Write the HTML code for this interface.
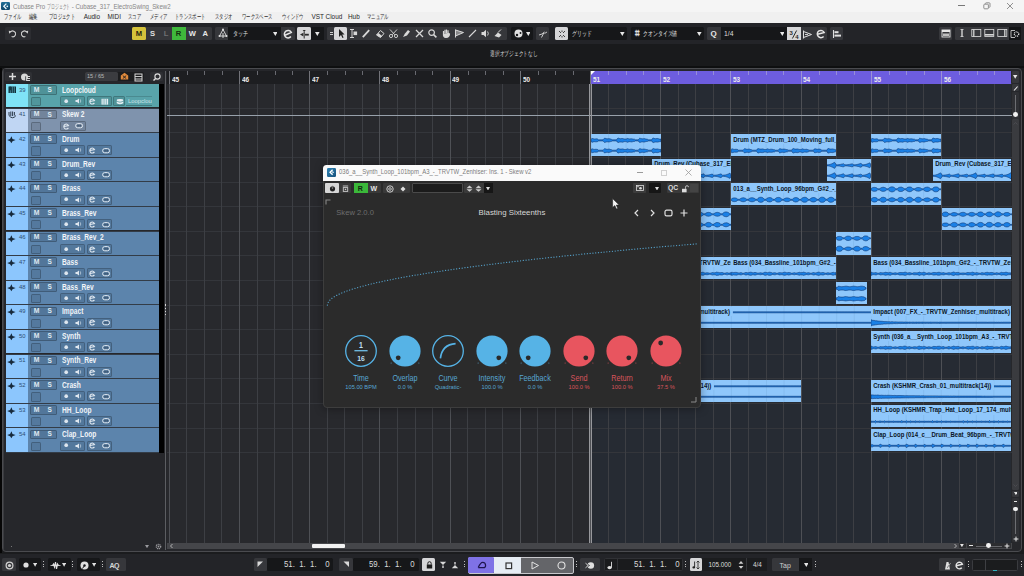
<!DOCTYPE html><html><head><meta charset="utf-8"><style>
*{margin:0;padding:0;box-sizing:border-box}
html,body{width:1024px;height:576px;overflow:hidden;background:#1b1c1e;font-family:"Liberation Sans",sans-serif}
.a{position:absolute}
.t{position:absolute;white-space:nowrap;line-height:1}
</style></head><body>
<div class="a" style="left:0;top:0;width:1024px;height:11.8px;background:#f5f5f5"></div>
<div class="a" style="left:0;top:11.8px;width:1024px;height:11px;background:#f0f0f0"></div>
<div class="a" style="left:1.2px;top:1.8px;width:8.8px;height:8.4px;background:linear-gradient(180deg,#1f6e96,#0d4669);border-radius:1.2px"></div>
<svg class="a" style="left:1.2px;top:1.8px" width="9" height="9" viewBox="0 0 9 9"><path d="M5.4 1.6 L2.8 4.3 L5.4 7" stroke="#e8f4fa" stroke-width="1.3" fill="none"/><circle cx="6.3" cy="4.3" r="0.9" fill="#e8f4fa"/></svg>
<div class="t" style="left:13.2px;top:2.6px;font-size:7px;color:#858585;transform:scaleX(0.87);transform-origin:0 0">Cubase Pro <span style="display:inline-block;transform:scaleX(0.64);transform-origin:0 0;width:28.6px">プロジェクト</span>- Cubase_317_ElectroSwing_Skew2</div>
<div class="a" style="left:958px;top:5.3px;width:7px;height:0.8px;background:#777"></div>
<svg class="a" style="left:982.5px;top:2px" width="8" height="8" viewBox="0 0 8 8"><rect x="0.8" y="2.2" width="4.6" height="4.6" rx="0.8" stroke="#777" stroke-width="0.8" fill="none"/><path d="M2.4 1.6 Q2.4 0.8 3.2 0.8 H6.2 Q7 0.8 7 1.6 V4.6 Q7 5.4 6.2 5.4" stroke="#777" stroke-width="0.8" fill="none"/></svg>
<svg class="a" style="left:1006px;top:2px" width="8" height="8" viewBox="0 0 8 8"><path d="M1 1L7 7M7 1L1 7" stroke="#777" stroke-width="0.8"/></svg>
<div class="t" style="left:3.8px;top:13.4px;font-size:7.2px;color:#1e1e1e;transform:scaleX(0.62);transform-origin:0 0">ファイル</div>
<div class="t" style="left:29px;top:13.4px;font-size:7.2px;color:#1e1e1e;transform:scaleX(0.62);transform-origin:0 0">編集</div>
<div class="t" style="left:48.7px;top:13.4px;font-size:7.2px;color:#1e1e1e;transform:scaleX(0.62);transform-origin:0 0">プロジェクト</div>
<div class="t" style="left:83.7px;top:14px;font-size:6.4px;color:#1e1e1e">Audio</div>
<div class="t" style="left:107.5px;top:14px;font-size:6.4px;color:#1e1e1e">MIDI</div>
<div class="t" style="left:128px;top:13.4px;font-size:7.2px;color:#1e1e1e;transform:scaleX(0.62);transform-origin:0 0">スコア</div>
<div class="t" style="left:149.5px;top:13.4px;font-size:7.2px;color:#1e1e1e;transform:scaleX(0.62);transform-origin:0 0">メディア</div>
<div class="t" style="left:175px;top:13.4px;font-size:7.2px;color:#1e1e1e;transform:scaleX(0.62);transform-origin:0 0">トランスポート</div>
<div class="t" style="left:215px;top:13.4px;font-size:7.2px;color:#1e1e1e;transform:scaleX(0.62);transform-origin:0 0">スタジオ</div>
<div class="t" style="left:241.5px;top:13.4px;font-size:7.2px;color:#1e1e1e;transform:scaleX(0.62);transform-origin:0 0">ワークスペース</div>
<div class="t" style="left:281.7px;top:13.4px;font-size:7.2px;color:#1e1e1e;transform:scaleX(0.62);transform-origin:0 0">ウィンドウ</div>
<div class="t" style="left:311.5px;top:14px;font-size:6.4px;color:#1e1e1e">VST Cloud</div>
<div class="t" style="left:348px;top:14px;font-size:6.4px;color:#1e1e1e">Hub</div>
<div class="t" style="left:367px;top:13.4px;font-size:7.2px;color:#1e1e1e;transform:scaleX(0.62);transform-origin:0 0">マニュアル</div>
<div class="a" style="left:0;top:22.8px;width:1024px;height:21.4px;background:#232428"></div>
<div class="a" style="left:0;top:44.2px;width:1024px;height:24px;background:#191a1c"></div>
<div class="a" style="left:0;top:66px;width:1024px;height:2px;background:#0e0f10"></div>
<div class="t" style="left:490px;top:51.3px;font-size:6.8px;color:#d8d8d8;transform:scaleX(0.68);transform-origin:0 0">選択オブジェクトなし</div>
<div class="a" style="left:5.2px;top:26.8px;width:25.80px;height:13.1px;background:#2c2d31;border-radius:1.5px;"></div>
<svg class="a" style="left:8px;top:30px;" width="8" height="8" viewBox="0 0 8 8"><path d="M2.3 2.2 A2.9 2.9 0 1 1 3.6 6.6" stroke="#d0d0d0" stroke-width="1.1" fill="none"/><path d="M0.8 0.8 L3.6 1.2 L1.2 3.8Z" fill="#d0d0d0"/></svg>
<svg class="a" style="left:21px;top:30px;" width="8" height="8" viewBox="0 0 8 8"><path d="M5.7 2.2 A2.9 2.9 0 1 0 4.4 6.6" stroke="#d0d0d0" stroke-width="1.1" fill="none"/><path d="M7.2 0.8 L4.4 1.2 L6.8 3.8Z" fill="#d0d0d0"/></svg>
<div class="a" style="left:132.3px;top:26.8px;width:79.50px;height:13.1px;background:#36373b;border-radius:1.5px;"></div>
<div class="a" style="left:132.3px;top:26.8px;width:13.70px;height:13.1px;background:#d5c33b;border-radius:1.5px;"></div>
<div class="a" style="left:172.1px;top:26.8px;width:13.70px;height:13.1px;background:#3fb83c;border-radius:0px;"></div>
<div class="t" style="left:135.8px;top:29.6px;font-size:7.6px;font-weight:bold;color:#2a2610;">M</div>
<div class="t" style="left:150px;top:29.6px;font-size:7.6px;font-weight:bold;color:#e0e0e0;">S</div>
<div class="t" style="left:163.8px;top:29.6px;font-size:7.6px;font-weight:bold;color:#707174;">L</div>
<div class="t" style="left:175.8px;top:29.6px;font-size:7.6px;font-weight:bold;color:#14300f;">R</div>
<div class="t" style="left:188.8px;top:29.6px;font-size:7.6px;font-weight:bold;color:#e8e8e8;">W</div>
<div class="t" style="left:202.6px;top:29.6px;font-size:7.6px;font-weight:bold;color:#e8e8e8;">A</div>
<div class="a" style="left:215.3px;top:26.8px;width:79.50px;height:13.1px;background:#36373b;border-radius:1.5px;"></div>
<div class="a" style="left:228px;top:26.8px;width:53.00px;height:13.1px;background:#161719;border-radius:0px;"></div>
<svg class="a" style="left:217.5px;top:28.2px;" width="10" height="11" viewBox="0 0 10 11"><path d="M5 1.5 L8.5 8 H1.5Z" stroke="#e0e0e0" stroke-width="0.9" fill="none"/><circle cx="5" cy="1.5" r="1" fill="#e0e0e0"/><circle cx="1.5" cy="8" r="1" fill="#e0e0e0"/><circle cx="8.5" cy="8" r="1" fill="#e0e0e0"/><path d="M5 5 V10" stroke="#e0e0e0" stroke-width="0.9"/></svg>
<div class="t" style="left:232.5px;top:30px;font-size:7px;color:#e2e2e2;transform:scaleX(0.72);transform-origin:0 0">タッチ</div>
<svg class="a" style="left:272.8px;top:31.5px;" width="4.6" height="4" viewBox="0 0 4.6 4"><path d="M0 0H4.6L2.3 4Z" fill="#e6e6e6"/></svg>
<svg class="a" style="left:283px;top:28.6px;" width="10" height="10" viewBox="0 0 10 10"><path d="M2 6.2 L8.3 3.4 A3.7 3.7 0 1 0 7.9 7.6" stroke="#e6e6e6" stroke-width="1.5" fill="none"/></svg>
<div class="a" style="left:297px;top:26.8px;width:26.80px;height:13.1px;background:#36373b;border-radius:1.5px;"></div>
<div class="a" style="left:297px;top:26.8px;width:13.70px;height:13.1px;background:#d6d6d8;border-radius:1.5px;"></div>
<div class="a" style="left:310.7px;top:26.8px;width:13.10px;height:13.1px;background:#161719;border-radius:0px;"></div>
<svg class="a" style="left:299px;top:28.5px;" width="11" height="10" viewBox="0 0 11 10"><path d="M5.2 2.5 V9.5" stroke="#2a2a2a" stroke-width="1"/><path d="M3.6 1 H6.8 L5.2 2.8Z" fill="#2a2a2a"/><path d="M1 5.6 L4.4 3.8 V7.4Z" fill="#2a2a2a"/><rect x="6" y="4.8" width="3.8" height="1.8" fill="#2a2a2a"/></svg>
<svg class="a" style="left:315px;top:31.5px;" width="4.6" height="4" viewBox="0 0 4.6 4"><path d="M0 0H4.6L2.3 4Z" fill="#e6e6e6"/></svg>
<div class="a" style="left:327px;top:26.8px;width:180.30px;height:13.1px;background:#36373b;border-radius:1.5px;"></div>
<div class="a" style="left:329.6px;top:31.6px;width:3.00px;height:1px;background:#cfcfcf;border-radius:0px;"></div>
<div class="a" style="left:329.6px;top:34.4px;width:3.00px;height:1px;background:#cfcfcf;border-radius:0px;"></div>
<div class="a" style="left:334.2px;top:26.8px;width:12.80px;height:13.1px;background:#d6d6d8;border-radius:1.5px;"></div>
<svg class="a" style="left:337px;top:28.4px;" width="8" height="11" viewBox="0 0 8 11"><path d="M2 1 L2 9 L4 7 L5.5 10 L6.6 9.4 L5.2 6.6 L7.6 6.4Z" fill="#1f1f1f"/></svg>
<svg class="a" style="left:348.2px;top:28.4px;" width="11" height="11" viewBox="0 0 11 11"><path d="M2 1.5H6 M4 1.5V9.5 M2 9.5H6" stroke="#d8d8d8" stroke-width="1"/><rect x="5.5" y="3.5" width="3.6" height="3.6" fill="#d8d8d8"/></svg>
<svg class="a" style="left:361.4px;top:28.4px;" width="11" height="11" viewBox="0 0 11 11"><path d="M1.8 9.2 L8.2 2.2" stroke="#d8d8d8" stroke-width="1.8"/></svg>
<svg class="a" style="left:374.59999999999997px;top:28.4px;" width="11" height="11" viewBox="0 0 11 11"><path d="M1.5 7 L5.5 2.5 L9 5.5 L5.5 9.5Z" stroke="#d8d8d8" stroke-width="1" fill="none"/><path d="M1.5 7 L3.5 5 L7 8 L5.5 9.5Z" fill="#d8d8d8"/></svg>
<svg class="a" style="left:387.8px;top:28.4px;" width="11" height="11" viewBox="0 0 11 11"><circle cx="3" cy="8" r="1.6" stroke="#d8d8d8" stroke-width="0.9" fill="none"/><circle cx="8" cy="8" r="1.6" stroke="#d8d8d8" stroke-width="0.9" fill="none"/><path d="M2 1.5 L6.8 6.8 M9 1.5 L4.2 6.8" stroke="#d8d8d8" stroke-width="0.9"/></svg>
<svg class="a" style="left:401.0px;top:28.4px;" width="11" height="11" viewBox="0 0 11 11"><path d="M2 9 L4 5.5 L7 2 L9 3.5 L6 7.5Z" fill="#d8d8d8"/></svg>
<svg class="a" style="left:414.2px;top:28.4px;" width="11" height="11" viewBox="0 0 11 11"><path d="M2 2 L9 9 M9 2 L2 9" stroke="#d8d8d8" stroke-width="1.3"/></svg>
<svg class="a" style="left:427.4px;top:28.4px;" width="11" height="11" viewBox="0 0 11 11"><circle cx="4.6" cy="4.6" r="2.8" stroke="#d8d8d8" stroke-width="1.2" fill="none"/><path d="M6.6 6.6 L9.4 9.4" stroke="#d8d8d8" stroke-width="1.5"/></svg>
<svg class="a" style="left:440.59999999999997px;top:28.4px;" width="11" height="11" viewBox="0 0 11 11"><path d="M2.5 5.5 V3 M4 5 V1.8 M5.5 5 V1.6 M7 5 V2.2 M2.5 5.5 Q2 9 5 9.5 Q8.2 9.5 8.5 6 L7 5" stroke="#d8d8d8" stroke-width="1.2" fill="#d8d8d8"/></svg>
<svg class="a" style="left:453.8px;top:28.4px;" width="11" height="11" viewBox="0 0 11 11"><path d="M1.5 1.5 V9.5 M1.5 2 L9.5 4.5 L1.5 8" stroke="#d8d8d8" stroke-width="1" fill="#d8d8d8" fill-opacity="0.5"/></svg>
<svg class="a" style="left:467.0px;top:28.4px;" width="11" height="11" viewBox="0 0 11 11"><path d="M2 9 L9 2" stroke="#d8d8d8" stroke-width="1.1"/></svg>
<svg class="a" style="left:480.2px;top:28.4px;" width="11" height="11" viewBox="0 0 11 11"><path d="M1.5 4 H3.5 L6 1.8 V9.2 L3.5 7 H1.5Z" fill="#d8d8d8"/><path d="M7.6 3.5 Q9 5.5 7.6 7.5" stroke="#d8d8d8" stroke-width="0.9" fill="none"/></svg>
<svg class="a" style="left:493.4px;top:28.4px;" width="11" height="11" viewBox="0 0 11 11"><path d="M1.5 8 L5 4.5 L8.5 7 L6 9.5Z" fill="#d8d8d8"/><path d="M5 4.5 L8 1.5" stroke="#d8d8d8" stroke-width="1"/></svg>
<div class="a" style="left:510.7px;top:26.8px;width:22.00px;height:13.1px;background:#161719;border-radius:1.5px;"></div>
<svg class="a" style="left:512.5px;top:28.3px;" width="11" height="11" viewBox="0 0 11 11"><circle cx="5.5" cy="5.5" r="4" fill="#e0e0e0"/><circle cx="4" cy="7" r="1.2" fill="#161719"/><circle cx="7.5" cy="5" r="0.9" fill="#161719"/></svg>
<svg class="a" style="left:525.5px;top:31.5px;" width="4.6" height="4" viewBox="0 0 4.6 4"><path d="M0 0H4.6L2.3 4Z" fill="#e6e6e6"/></svg>
<div class="a" style="left:536.2px;top:26.8px;width:12.60px;height:13.1px;background:#36373b;border-radius:1.5px;"></div>
<svg class="a" style="left:537.5px;top:28.5px;" width="10" height="10" viewBox="0 0 10 10"><path d="M1 6 L4 5 L6.5 3 M3.5 8.5 L6 3.5 M6.5 4.5 L9 3" stroke="#d8d8d8" stroke-width="0.9" fill="none"/></svg>
<div class="a" style="left:554.8px;top:26.8px;width:72.70px;height:13.1px;background:#161719;border-radius:1.5px;"></div>
<div class="a" style="left:554.8px;top:26.8px;width:13.20px;height:13.1px;background:#d6d6d8;border-radius:1.5px;"></div>
<svg class="a" style="left:556.5px;top:28.5px;" width="10" height="10" viewBox="0 0 10 10"><path d="M2 2 L4 4 M8 2 L6 4 M2 8 L4 6 M8 8 L6 6 M5 1.5 V3 M5 7 V8.5" stroke="#333" stroke-width="0.9"/></svg>
<div class="t" style="left:571.5px;top:30px;font-size:7px;color:#e2e2e2;transform:scaleX(0.7);transform-origin:0 0">グリッド</div>
<svg class="a" style="left:620px;top:31.5px;" width="4.6" height="4" viewBox="0 0 4.6 4"><path d="M0 0H4.6L2.3 4Z" fill="#e6e6e6"/></svg>
<div class="a" style="left:631.4px;top:26.8px;width:73.10px;height:13.1px;background:#161719;border-radius:1.5px;"></div>
<div class="t" style="left:634.5px;top:29.8px;font-size:7.5px;font-weight:bold;color:#e0e0e0;">⌗</div>
<div class="t" style="left:642.5px;top:30px;font-size:7px;color:#e2e2e2;transform:scaleX(0.7);transform-origin:0 0">クオンタイズ値</div>
<svg class="a" style="left:697px;top:31.5px;" width="4.6" height="4" viewBox="0 0 4.6 4"><path d="M0 0H4.6L2.3 4Z" fill="#e6e6e6"/></svg>
<div class="a" style="left:707.3px;top:26.8px;width:119.70px;height:13.1px;background:#36373b;border-radius:1.5px;"></div>
<div class="a" style="left:720.5px;top:26.8px;width:66.50px;height:13.1px;background:#161719;border-radius:0px;"></div>
<div class="t" style="left:710.5px;top:29.5px;font-size:8px;font-weight:bold;color:#e8e8e8;">Q</div>
<div class="t" style="left:724px;top:30.6px;font-size:6.8px;font-weight:normal;color:#dcdcdc;">1/4</div>
<svg class="a" style="left:779.5px;top:31.5px;" width="4.6" height="4" viewBox="0 0 4.6 4"><path d="M0 0H4.6L2.3 4Z" fill="#e6e6e6"/></svg>
<div class="a" style="left:787px;top:26.8px;width:13.60px;height:13.1px;background:#d6d6d8;border-radius:0px;"></div>
<svg class="a" style="left:787.5px;top:27.5px" width="13" height="13" viewBox="0 0 13 13"><text x="1.6" y="6.6" font-family="Liberation Sans" font-size="6" font-weight="bold" fill="#2a2a2a">3</text><path d="M4.4 10.5 L8.6 2.5" stroke="#2a2a2a" stroke-width="1"/><text x="7.2" y="11.2" font-family="Liberation Sans" font-size="6" font-weight="bold" fill="#2a2a2a">4</text></svg>
<svg class="a" style="left:802px;top:28.5px;" width="11" height="11" viewBox="0 0 11 11"><path d="M1.5 1.5 V9.5 M1.5 2.5 L9.5 5.5 L1.5 8.5" stroke="#e0e0e0" stroke-width="1" fill="none"/><path d="M3 5.5 L6 5.5" stroke="#e0e0e0" stroke-width="0.9"/></svg>
<svg class="a" style="left:815.5px;top:28.6px;" width="10" height="10" viewBox="0 0 10 10"><path d="M1.6 5.3 L8.2 3.6 A3.6 3.6 0 1 0 7.6 7.4" stroke="#e6e6e6" stroke-width="1.5" fill="none"/></svg>
<div class="a" style="left:830px;top:26.8px;width:12.60px;height:13.1px;background:#36373b;border-radius:1.5px;"></div>
<svg class="a" style="left:831.5px;top:28.5px;" width="10" height="10" viewBox="0 0 10 10"><path d="M1.5 1 V9" stroke="#e0e0e0" stroke-width="1.1"/><rect x="2.5" y="2.2" width="4" height="2" fill="#e0e0e0"/><rect x="2.5" y="5.6" width="6.5" height="2" fill="#e0e0e0"/></svg>
<div class="a" style="left:939.2px;top:26.8px;width:13.10px;height:13.1px;background:#36373b;border-radius:1.5px;"></div>
<svg class="a" style="left:941px;top:29px;" width="10" height="9" viewBox="0 0 10 9"><rect x="1" y="1" width="8" height="7" stroke="#e6e6e6" stroke-width="0.9" fill="none"/><rect x="1" y="1" width="8" height="2" fill="#e6e6e6"/><rect x="2" y="4.5" width="6" height="2.5" fill="#bfbfbf"/></svg>
<div class="a" style="left:955px;top:26.8px;width:65.60px;height:13.1px;background:#36373b;border-radius:1.5px;"></div>
<div class="a" style="left:1008.5px;top:26.8px;width:12.10px;height:13.1px;background:#141517;border-radius:0px;"></div>
<svg class="a" style="left:957.8px;top:28.4px;" width="11" height="10" viewBox="0 0 11 10"><path d="M4 1.5 V8.5" stroke="#e0e0e0" stroke-width="1.3"/><path d="M2.5 1.5H5.5 M2.5 8.5H5.5" stroke="#e0e0e0" stroke-width="0.8"/></svg>
<svg class="a" style="left:970.9px;top:28.4px;" width="11" height="10" viewBox="0 0 11 10"><rect x="0.8" y="1.5" width="9" height="7" stroke="#e0e0e0" stroke-width="0.8" fill="none"/><path d="M2.8 1.5 V8.5" stroke="#e0e0e0" stroke-width="1.2"/></svg>
<svg class="a" style="left:984.0px;top:28.4px;" width="11" height="10" viewBox="0 0 11 10"><rect x="0.8" y="1.5" width="9" height="7" stroke="#e0e0e0" stroke-width="0.8" fill="none"/><path d="M1 6.8 H9.8" stroke="#e0e0e0" stroke-width="1.5"/></svg>
<svg class="a" style="left:997.0999999999999px;top:28.4px;" width="11" height="10" viewBox="0 0 11 10"><rect x="0.8" y="1.5" width="9" height="7" stroke="#e0e0e0" stroke-width="0.8" fill="none"/><path d="M7.8 1.5 V8.5" stroke="#e0e0e0" stroke-width="1.2"/></svg>
<svg class="a" style="left:1009.5px;top:28.5px;" width="11" height="10" viewBox="0 0 11 10"><path d="M1 1.5 H5 M1 1.5 V8.5 H5" stroke="#e0e0e0" stroke-width="0.8" fill="none"/><circle cx="6.5" cy="5" r="2.2" stroke="#e0e0e0" stroke-width="1.3" fill="none" stroke-dasharray="1 0.7"/></svg>
<div class="a" style="left:2px;top:67.8px;width:1019.5px;height:484.7px;background:#26272b;border:1px solid #4a4b4f;border-radius:4px"></div>
<div class="a" style="left:166.5px;top:83.7px;width:424.29999999999995px;height:459.3px;background:#28292d"></div>
<div class="a" style="left:590.8px;top:83.7px;width:420.70000000000005px;height:459.3px;background:#262b33"></div>
<div class="a" style="left:166.5px;top:83.10px;width:845.0px;height:1px;background:#34363b"></div>
<div class="a" style="left:166.5px;top:107.70px;width:845.0px;height:1px;background:#34363b"></div>
<div class="a" style="left:166.5px;top:132.30px;width:845.0px;height:1px;background:#34363b"></div>
<div class="a" style="left:166.5px;top:156.90px;width:845.0px;height:1px;background:#34363b"></div>
<div class="a" style="left:166.5px;top:181.50px;width:845.0px;height:1px;background:#34363b"></div>
<div class="a" style="left:166.5px;top:206.10px;width:845.0px;height:1px;background:#34363b"></div>
<div class="a" style="left:166.5px;top:230.70px;width:845.0px;height:1px;background:#34363b"></div>
<div class="a" style="left:166.5px;top:255.30px;width:845.0px;height:1px;background:#34363b"></div>
<div class="a" style="left:166.5px;top:279.90px;width:845.0px;height:1px;background:#34363b"></div>
<div class="a" style="left:166.5px;top:304.50px;width:845.0px;height:1px;background:#34363b"></div>
<div class="a" style="left:166.5px;top:329.10px;width:845.0px;height:1px;background:#34363b"></div>
<div class="a" style="left:166.5px;top:353.70px;width:845.0px;height:1px;background:#34363b"></div>
<div class="a" style="left:166.5px;top:378.30px;width:845.0px;height:1px;background:#34363b"></div>
<div class="a" style="left:166.5px;top:402.90px;width:845.0px;height:1px;background:#34363b"></div>
<div class="a" style="left:166.5px;top:427.50px;width:845.0px;height:1px;background:#34363b"></div>
<div class="a" style="left:166.5px;top:452.10px;width:845.0px;height:1px;background:#34363b"></div>
<div class="a" style="left:168.80px;top:83.7px;width:1px;height:459.3px;background:#4e5055"></div>
<div class="a" style="left:186.35px;top:83.7px;width:1px;height:459.3px;background:#3d3f44"></div>
<div class="a" style="left:203.90px;top:83.7px;width:1px;height:459.3px;background:#3d3f44"></div>
<div class="a" style="left:221.45px;top:83.7px;width:1px;height:459.3px;background:#3d3f44"></div>
<div class="a" style="left:239.00px;top:83.7px;width:1px;height:459.3px;background:#4e5055"></div>
<div class="a" style="left:256.55px;top:83.7px;width:1px;height:459.3px;background:#3d3f44"></div>
<div class="a" style="left:274.10px;top:83.7px;width:1px;height:459.3px;background:#3d3f44"></div>
<div class="a" style="left:291.65px;top:83.7px;width:1px;height:459.3px;background:#3d3f44"></div>
<div class="a" style="left:309.20px;top:83.7px;width:1px;height:459.3px;background:#4e5055"></div>
<div class="a" style="left:326.75px;top:83.7px;width:1px;height:459.3px;background:#3d3f44"></div>
<div class="a" style="left:344.30px;top:83.7px;width:1px;height:459.3px;background:#3d3f44"></div>
<div class="a" style="left:361.85px;top:83.7px;width:1px;height:459.3px;background:#3d3f44"></div>
<div class="a" style="left:379.40px;top:83.7px;width:1px;height:459.3px;background:#4e5055"></div>
<div class="a" style="left:396.95px;top:83.7px;width:1px;height:459.3px;background:#3d3f44"></div>
<div class="a" style="left:414.50px;top:83.7px;width:1px;height:459.3px;background:#3d3f44"></div>
<div class="a" style="left:432.05px;top:83.7px;width:1px;height:459.3px;background:#3d3f44"></div>
<div class="a" style="left:449.60px;top:83.7px;width:1px;height:459.3px;background:#4e5055"></div>
<div class="a" style="left:467.15px;top:83.7px;width:1px;height:459.3px;background:#3d3f44"></div>
<div class="a" style="left:484.70px;top:83.7px;width:1px;height:459.3px;background:#3d3f44"></div>
<div class="a" style="left:502.25px;top:83.7px;width:1px;height:459.3px;background:#3d3f44"></div>
<div class="a" style="left:519.80px;top:83.7px;width:1px;height:459.3px;background:#4e5055"></div>
<div class="a" style="left:537.35px;top:83.7px;width:1px;height:459.3px;background:#3d3f44"></div>
<div class="a" style="left:554.90px;top:83.7px;width:1px;height:459.3px;background:#3d3f44"></div>
<div class="a" style="left:572.45px;top:83.7px;width:1px;height:459.3px;background:#3d3f44"></div>
<div class="a" style="left:590.00px;top:83.7px;width:1px;height:459.3px;background:#4e5055"></div>
<div class="a" style="left:607.55px;top:83.7px;width:1px;height:459.3px;background:#3d3f44"></div>
<div class="a" style="left:625.10px;top:83.7px;width:1px;height:459.3px;background:#3d3f44"></div>
<div class="a" style="left:642.65px;top:83.7px;width:1px;height:459.3px;background:#3d3f44"></div>
<div class="a" style="left:660.20px;top:83.7px;width:1px;height:459.3px;background:#4e5055"></div>
<div class="a" style="left:677.75px;top:83.7px;width:1px;height:459.3px;background:#3d3f44"></div>
<div class="a" style="left:695.30px;top:83.7px;width:1px;height:459.3px;background:#3d3f44"></div>
<div class="a" style="left:712.85px;top:83.7px;width:1px;height:459.3px;background:#3d3f44"></div>
<div class="a" style="left:730.40px;top:83.7px;width:1px;height:459.3px;background:#4e5055"></div>
<div class="a" style="left:747.95px;top:83.7px;width:1px;height:459.3px;background:#3d3f44"></div>
<div class="a" style="left:765.50px;top:83.7px;width:1px;height:459.3px;background:#3d3f44"></div>
<div class="a" style="left:783.05px;top:83.7px;width:1px;height:459.3px;background:#3d3f44"></div>
<div class="a" style="left:800.60px;top:83.7px;width:1px;height:459.3px;background:#4e5055"></div>
<div class="a" style="left:818.15px;top:83.7px;width:1px;height:459.3px;background:#3d3f44"></div>
<div class="a" style="left:835.70px;top:83.7px;width:1px;height:459.3px;background:#3d3f44"></div>
<div class="a" style="left:853.25px;top:83.7px;width:1px;height:459.3px;background:#3d3f44"></div>
<div class="a" style="left:870.80px;top:83.7px;width:1px;height:459.3px;background:#4e5055"></div>
<div class="a" style="left:888.35px;top:83.7px;width:1px;height:459.3px;background:#3d3f44"></div>
<div class="a" style="left:905.90px;top:83.7px;width:1px;height:459.3px;background:#3d3f44"></div>
<div class="a" style="left:923.45px;top:83.7px;width:1px;height:459.3px;background:#3d3f44"></div>
<div class="a" style="left:941.00px;top:83.7px;width:1px;height:459.3px;background:#4e5055"></div>
<div class="a" style="left:958.55px;top:83.7px;width:1px;height:459.3px;background:#3d3f44"></div>
<div class="a" style="left:976.10px;top:83.7px;width:1px;height:459.3px;background:#3d3f44"></div>
<div class="a" style="left:993.65px;top:83.7px;width:1px;height:459.3px;background:#3d3f44"></div>
<div class="a" style="left:166.5px;top:115px;width:845.0px;height:1px;background:#98a1ab"></div>
<div class="a" style="left:589.2px;top:83.7px;width:0.9px;height:459.3px;background:#97989c"></div>
<div class="a" style="left:590.9px;top:83.7px;width:0.9px;height:459.3px;background:#97989c"></div>
<div class="a" style="left:590.50px;top:134.00px;width:70.20px;height:22.20px;background:#8fc7fb;overflow:hidden">
<svg class="a" style="left:0;top:0" width="70.20" height="22.20"><rect x="-0.50" y="0" width="1" height="22.20" fill="#86bdf0"/><rect x="17.05" y="0" width="1" height="22.20" fill="#86bdf0"/><rect x="34.60" y="0" width="1" height="22.20" fill="#86bdf0"/><rect x="52.15" y="0" width="1" height="22.20" fill="#86bdf0"/><path d="M0.00 5.8 L0.75 4.4 L1.50 4.5 L2.25 4.7 L3.00 4.9 L3.75 5.0 L4.50 4.9 L5.25 4.8 L6.00 4.9 L6.75 5.1 L7.50 5.8 L8.25 5.8 L9.00 5.8 L9.75 5.8 L10.50 5.8 L11.25 5.8 L12.00 5.8 L12.75 5.0 L13.50 4.2 L14.25 4.3 L15.00 4.6 L15.75 4.8 L16.50 4.8 L17.25 4.7 L18.00 4.7 L18.75 4.8 L19.50 5.0 L20.25 5.2 L21.00 5.8 L21.75 5.8 L22.50 5.8 L23.25 5.8 L24.00 5.8 L24.75 5.8 L25.50 5.8 L26.25 4.7 L27.00 4.1 L27.75 4.2 L28.50 4.5 L29.25 4.7 L30.00 4.7 L30.75 4.5 L31.50 4.5 L32.25 4.7 L33.00 4.9 L33.75 5.0 L34.50 5.0 L35.25 5.1 L36.00 4.4 L36.75 4.5 L37.50 4.7 L38.25 4.9 L39.00 4.9 L39.75 4.8 L40.50 4.8 L41.25 4.9 L42.00 5.1 L42.75 5.2 L43.50 5.2 L44.25 5.8 L45.00 5.8 L45.75 5.8 L46.50 5.8 L47.25 5.8 L48.00 4.8 L48.75 4.2 L49.50 4.4 L50.25 4.6 L51.00 4.8 L51.75 4.8 L52.50 4.7 L53.25 4.6 L54.00 4.8 L54.75 5.0 L55.50 5.1 L56.25 5.1 L57.00 5.8 L57.75 5.8 L58.50 5.8 L59.25 5.8 L60.00 5.8 L60.75 5.8 L61.50 4.4 L62.25 4.1 L63.00 4.3 L63.75 4.6 L64.50 4.7 L65.25 4.6 L66.00 4.5 L66.75 4.5 L67.50 4.7 L68.25 5.0 L69.00 5.1 L69.75 5.0 L69.75 7.7 L69.00 7.6 L68.25 7.7 L67.50 7.9 L66.75 8.1 L66.00 8.1 L65.25 8.0 L64.50 8.0 L63.75 8.1 L63.00 8.4 L62.25 8.6 L61.50 8.2 L60.75 6.9 L60.00 6.9 L59.25 6.9 L58.50 6.9 L57.75 6.9 L57.00 6.9 L56.25 7.5 L55.50 7.5 L54.75 7.6 L54.00 7.9 L53.25 8.0 L52.50 8.0 L51.75 7.9 L51.00 7.8 L50.25 8.0 L49.50 8.3 L48.75 8.4 L48.00 7.9 L47.25 6.9 L46.50 6.9 L45.75 6.9 L45.00 6.9 L44.25 6.9 L43.50 7.4 L42.75 7.4 L42.00 7.6 L41.25 7.8 L40.50 7.9 L39.75 7.8 L39.00 7.7 L38.25 7.7 L37.50 7.9 L36.75 8.2 L36.00 8.3 L35.25 7.6 L34.50 7.6 L33.75 7.6 L33.00 7.7 L32.25 8.0 L31.50 8.2 L30.75 8.1 L30.00 8.0 L29.25 8.0 L28.50 8.1 L27.75 8.4 L27.00 8.6 L26.25 8.0 L25.50 6.9 L24.75 6.9 L24.00 6.9 L23.25 6.9 L22.50 6.9 L21.75 6.9 L21.00 6.9 L20.25 7.5 L19.50 7.6 L18.75 7.8 L18.00 8.0 L17.25 7.9 L16.50 7.8 L15.75 7.8 L15.00 8.0 L14.25 8.3 L13.50 8.4 L12.75 7.7 L12.00 6.9 L11.25 6.9 L10.50 6.9 L9.75 6.9 L9.00 6.9 L8.25 6.9 L7.50 6.9 L6.75 7.5 L6.00 7.7 L5.25 7.8 L4.50 7.8 L3.75 7.7 L3.00 7.7 L2.25 7.9 L1.50 8.2 L0.75 8.2 L0.00 6.9Z" fill="#1a80e6" stroke="#0b3470" stroke-width="0.6"/><path d="M0.00 16.2 L0.75 14.8 L1.50 14.9 L2.25 15.2 L3.00 15.4 L3.75 15.4 L4.50 15.3 L5.25 15.3 L6.00 15.4 L6.75 15.6 L7.50 16.2 L8.25 16.2 L9.00 16.2 L9.75 16.2 L10.50 16.2 L11.25 16.2 L12.00 16.2 L12.75 15.4 L13.50 14.7 L14.25 14.8 L15.00 15.0 L15.75 15.3 L16.50 15.3 L17.25 15.2 L18.00 15.1 L18.75 15.2 L19.50 15.5 L20.25 15.6 L21.00 16.2 L21.75 16.2 L22.50 16.2 L23.25 16.2 L24.00 16.2 L24.75 16.2 L25.50 16.2 L26.25 15.1 L27.00 14.5 L27.75 14.7 L28.50 14.9 L29.25 15.1 L30.00 15.1 L30.75 15.0 L31.50 14.9 L32.25 15.1 L33.00 15.3 L33.75 15.5 L34.50 15.5 L35.25 15.5 L36.00 14.8 L36.75 14.9 L37.50 15.2 L38.25 15.4 L39.00 15.4 L39.75 15.2 L40.50 15.2 L41.25 15.3 L42.00 15.5 L42.75 15.7 L43.50 15.7 L44.25 16.2 L45.00 16.2 L45.75 16.2 L46.50 16.2 L47.25 16.2 L48.00 15.2 L48.75 14.7 L49.50 14.8 L50.25 15.1 L51.00 15.2 L51.75 15.2 L52.50 15.1 L53.25 15.1 L54.00 15.2 L54.75 15.4 L55.50 15.6 L56.25 15.6 L57.00 16.2 L57.75 16.2 L58.50 16.2 L59.25 16.2 L60.00 16.2 L60.75 16.2 L61.50 14.9 L62.25 14.5 L63.00 14.7 L63.75 15.0 L64.50 15.1 L65.25 15.1 L66.00 14.9 L66.75 15.0 L67.50 15.2 L68.25 15.4 L69.00 15.5 L69.75 15.4 L69.75 18.1 L69.00 18.0 L68.25 18.1 L67.50 18.4 L66.75 18.6 L66.00 18.6 L65.25 18.5 L64.50 18.4 L63.75 18.5 L63.00 18.8 L62.25 19.0 L61.50 18.6 L60.75 17.3 L60.00 17.3 L59.25 17.3 L58.50 17.3 L57.75 17.3 L57.00 17.3 L56.25 18.0 L55.50 17.9 L54.75 18.1 L54.00 18.3 L53.25 18.4 L52.50 18.4 L51.75 18.3 L51.00 18.3 L50.25 18.4 L49.50 18.7 L48.75 18.9 L48.00 18.3 L47.25 17.3 L46.50 17.3 L45.75 17.3 L45.00 17.3 L44.25 17.3 L43.50 17.9 L42.75 17.9 L42.00 18.0 L41.25 18.2 L40.50 18.3 L39.75 18.3 L39.00 18.2 L38.25 18.2 L37.50 18.3 L36.75 18.6 L36.00 18.7 L35.25 18.0 L34.50 18.1 L33.75 18.0 L33.00 18.2 L32.25 18.4 L31.50 18.6 L30.75 18.6 L30.00 18.4 L29.25 18.4 L28.50 18.6 L27.75 18.9 L27.00 19.0 L26.25 18.4 L25.50 17.3 L24.75 17.3 L24.00 17.3 L23.25 17.3 L22.50 17.3 L21.75 17.3 L21.00 17.3 L20.25 17.9 L19.50 18.1 L18.75 18.3 L18.00 18.4 L17.25 18.4 L16.50 18.3 L15.75 18.3 L15.00 18.5 L14.25 18.7 L13.50 18.9 L12.75 18.1 L12.00 17.3 L11.25 17.3 L10.50 17.3 L9.75 17.3 L9.00 17.3 L8.25 17.3 L7.50 17.3 L6.75 17.9 L6.00 18.1 L5.25 18.2 L4.50 18.2 L3.75 18.1 L3.00 18.2 L2.25 18.4 L1.50 18.6 L0.75 18.7 L0.00 17.3Z" fill="#1a80e6" stroke="#0b3470" stroke-width="0.6"/></svg>
</div>
<div class="a" style="left:730.90px;top:134.00px;width:105.30px;height:22.20px;background:#8fc7fb;overflow:hidden">
<svg class="a" style="left:0;top:0" width="105.30" height="22.20"><rect x="17.05" y="0" width="1" height="22.20" fill="#86bdf0"/><rect x="34.60" y="0" width="1" height="22.20" fill="#86bdf0"/><rect x="52.15" y="0" width="1" height="22.20" fill="#86bdf0"/><rect x="69.70" y="0" width="1" height="22.20" fill="#86bdf0"/><rect x="87.25" y="0" width="1" height="22.20" fill="#86bdf0"/><rect x="104.80" y="0" width="1" height="22.20" fill="#86bdf0"/><path d="M0.00 5.2 L0.75 4.4 L1.50 4.5 L2.25 4.7 L3.00 4.9 L3.75 5.0 L4.50 4.9 L5.25 4.8 L6.00 4.9 L6.75 5.1 L7.50 5.8 L8.25 5.8 L9.00 5.8 L9.75 5.8 L10.50 5.8 L11.25 5.8 L12.00 5.8 L12.75 5.0 L13.50 4.2 L14.25 4.3 L15.00 4.6 L15.75 4.8 L16.50 4.8 L17.25 4.7 L18.00 4.7 L18.75 4.8 L19.50 5.0 L20.25 5.2 L21.00 5.8 L21.75 5.8 L22.50 5.8 L23.25 5.8 L24.00 5.8 L24.75 5.8 L25.50 5.8 L26.25 4.7 L27.00 4.1 L27.75 4.2 L28.50 4.5 L29.25 4.7 L30.00 4.7 L30.75 4.5 L31.50 4.5 L32.25 4.7 L33.00 4.9 L33.75 5.0 L34.50 5.0 L35.25 5.1 L36.00 4.4 L36.75 4.5 L37.50 4.7 L38.25 4.9 L39.00 4.9 L39.75 4.8 L40.50 4.8 L41.25 4.9 L42.00 5.1 L42.75 5.2 L43.50 5.2 L44.25 5.8 L45.00 5.8 L45.75 5.8 L46.50 5.8 L47.25 5.8 L48.00 4.8 L48.75 4.2 L49.50 4.4 L50.25 4.6 L51.00 4.8 L51.75 4.8 L52.50 4.7 L53.25 4.6 L54.00 4.8 L54.75 5.0 L55.50 5.1 L56.25 5.1 L57.00 5.8 L57.75 5.8 L58.50 5.8 L59.25 5.8 L60.00 5.8 L60.75 5.8 L61.50 4.4 L62.25 4.1 L63.00 4.3 L63.75 4.6 L64.50 4.7 L65.25 4.6 L66.00 4.5 L66.75 4.5 L67.50 4.7 L68.25 5.0 L69.00 5.1 L69.75 5.0 L70.50 4.8 L71.25 4.4 L72.00 4.6 L72.75 4.8 L73.50 5.0 L74.25 5.0 L75.00 4.9 L75.75 4.9 L76.50 5.0 L77.25 5.2 L78.00 5.8 L78.75 5.8 L79.50 5.8 L80.25 5.8 L81.00 5.8 L81.75 5.8 L82.50 5.8 L83.25 4.6 L84.00 4.3 L84.75 4.4 L85.50 4.7 L86.25 4.8 L87.00 4.8 L87.75 4.7 L88.50 4.7 L89.25 4.9 L90.00 5.1 L90.75 5.8 L91.50 5.8 L92.25 5.8 L93.00 5.8 L93.75 5.8 L94.50 5.8 L95.25 5.8 L96.00 5.8 L96.75 4.2 L97.50 4.1 L98.25 4.3 L99.00 4.6 L99.75 4.7 L100.50 4.6 L101.25 4.5 L102.00 4.6 L102.75 4.8 L103.50 5.0 L104.25 5.1 L105.00 5.8 L105.00 6.9 L104.25 7.6 L103.50 7.7 L102.75 7.9 L102.00 8.1 L101.25 8.2 L100.50 8.1 L99.75 8.0 L99.00 8.0 L98.25 8.3 L97.50 8.6 L96.75 8.4 L96.00 6.9 L95.25 6.9 L94.50 6.9 L93.75 6.9 L93.00 6.9 L92.25 6.9 L91.50 6.9 L90.75 6.9 L90.00 7.5 L89.25 7.8 L88.50 7.9 L87.75 8.0 L87.00 7.9 L86.25 7.8 L85.50 7.9 L84.75 8.2 L84.00 8.4 L83.25 8.1 L82.50 6.9 L81.75 6.9 L81.00 6.9 L80.25 6.9 L79.50 6.9 L78.75 6.9 L78.00 6.9 L77.25 7.4 L76.50 7.6 L75.75 7.8 L75.00 7.8 L74.25 7.7 L73.50 7.7 L72.75 7.8 L72.00 8.1 L71.25 8.2 L70.50 7.8 L69.75 7.7 L69.00 7.6 L68.25 7.7 L67.50 7.9 L66.75 8.1 L66.00 8.1 L65.25 8.0 L64.50 8.0 L63.75 8.1 L63.00 8.4 L62.25 8.6 L61.50 8.2 L60.75 6.9 L60.00 6.9 L59.25 6.9 L58.50 6.9 L57.75 6.9 L57.00 6.9 L56.25 7.5 L55.50 7.5 L54.75 7.6 L54.00 7.9 L53.25 8.0 L52.50 8.0 L51.75 7.9 L51.00 7.8 L50.25 8.0 L49.50 8.3 L48.75 8.4 L48.00 7.9 L47.25 6.9 L46.50 6.9 L45.75 6.9 L45.00 6.9 L44.25 6.9 L43.50 7.4 L42.75 7.4 L42.00 7.6 L41.25 7.8 L40.50 7.9 L39.75 7.8 L39.00 7.7 L38.25 7.7 L37.50 7.9 L36.75 8.2 L36.00 8.3 L35.25 7.6 L34.50 7.6 L33.75 7.6 L33.00 7.7 L32.25 8.0 L31.50 8.2 L30.75 8.1 L30.00 8.0 L29.25 8.0 L28.50 8.1 L27.75 8.4 L27.00 8.6 L26.25 8.0 L25.50 6.9 L24.75 6.9 L24.00 6.9 L23.25 6.9 L22.50 6.9 L21.75 6.9 L21.00 6.9 L20.25 7.5 L19.50 7.6 L18.75 7.8 L18.00 8.0 L17.25 7.9 L16.50 7.8 L15.75 7.8 L15.00 8.0 L14.25 8.3 L13.50 8.4 L12.75 7.7 L12.00 6.9 L11.25 6.9 L10.50 6.9 L9.75 6.9 L9.00 6.9 L8.25 6.9 L7.50 6.9 L6.75 7.5 L6.00 7.7 L5.25 7.8 L4.50 7.8 L3.75 7.7 L3.00 7.7 L2.25 7.9 L1.50 8.2 L0.75 8.2 L0.00 7.4Z" fill="#1a80e6" stroke="#0b3470" stroke-width="0.6"/><path d="M0.00 15.7 L0.75 14.8 L1.50 14.9 L2.25 15.2 L3.00 15.4 L3.75 15.4 L4.50 15.3 L5.25 15.3 L6.00 15.4 L6.75 15.6 L7.50 16.2 L8.25 16.2 L9.00 16.2 L9.75 16.2 L10.50 16.2 L11.25 16.2 L12.00 16.2 L12.75 15.4 L13.50 14.7 L14.25 14.8 L15.00 15.0 L15.75 15.3 L16.50 15.3 L17.25 15.2 L18.00 15.1 L18.75 15.2 L19.50 15.5 L20.25 15.6 L21.00 16.2 L21.75 16.2 L22.50 16.2 L23.25 16.2 L24.00 16.2 L24.75 16.2 L25.50 16.2 L26.25 15.1 L27.00 14.5 L27.75 14.7 L28.50 14.9 L29.25 15.1 L30.00 15.1 L30.75 15.0 L31.50 14.9 L32.25 15.1 L33.00 15.3 L33.75 15.5 L34.50 15.5 L35.25 15.5 L36.00 14.8 L36.75 14.9 L37.50 15.2 L38.25 15.4 L39.00 15.4 L39.75 15.2 L40.50 15.2 L41.25 15.3 L42.00 15.5 L42.75 15.7 L43.50 15.7 L44.25 16.2 L45.00 16.2 L45.75 16.2 L46.50 16.2 L47.25 16.2 L48.00 15.2 L48.75 14.7 L49.50 14.8 L50.25 15.1 L51.00 15.2 L51.75 15.2 L52.50 15.1 L53.25 15.1 L54.00 15.2 L54.75 15.4 L55.50 15.6 L56.25 15.6 L57.00 16.2 L57.75 16.2 L58.50 16.2 L59.25 16.2 L60.00 16.2 L60.75 16.2 L61.50 14.9 L62.25 14.5 L63.00 14.7 L63.75 15.0 L64.50 15.1 L65.25 15.1 L66.00 14.9 L66.75 15.0 L67.50 15.2 L68.25 15.4 L69.00 15.5 L69.75 15.4 L70.50 15.3 L71.25 14.8 L72.00 15.0 L72.75 15.3 L73.50 15.4 L74.25 15.4 L75.00 15.3 L75.75 15.3 L76.50 15.5 L77.25 15.7 L78.00 16.2 L78.75 16.2 L79.50 16.2 L80.25 16.2 L81.00 16.2 L81.75 16.2 L82.50 16.2 L83.25 15.0 L84.00 14.7 L84.75 14.9 L85.50 15.1 L86.25 15.3 L87.00 15.2 L87.75 15.1 L88.50 15.1 L89.25 15.3 L90.00 15.5 L90.75 16.2 L91.50 16.2 L92.25 16.2 L93.00 16.2 L93.75 16.2 L94.50 16.2 L95.25 16.2 L96.00 16.2 L96.75 14.7 L97.50 14.5 L98.25 14.8 L99.00 15.0 L99.75 15.1 L100.50 15.0 L101.25 14.9 L102.00 15.0 L102.75 15.2 L103.50 15.4 L104.25 15.5 L105.00 16.2 L105.00 17.3 L104.25 18.0 L103.50 18.1 L102.75 18.3 L102.00 18.5 L101.25 18.6 L100.50 18.5 L99.75 18.4 L99.00 18.5 L98.25 18.8 L97.50 19.0 L96.75 18.9 L96.00 17.3 L95.25 17.3 L94.50 17.3 L93.75 17.3 L93.00 17.3 L92.25 17.3 L91.50 17.3 L90.75 17.3 L90.00 18.0 L89.25 18.2 L88.50 18.4 L87.75 18.4 L87.00 18.3 L86.25 18.2 L85.50 18.4 L84.75 18.6 L84.00 18.8 L83.25 18.5 L82.50 17.3 L81.75 17.3 L81.00 17.3 L80.25 17.3 L79.50 17.3 L78.75 17.3 L78.00 17.3 L77.25 17.9 L76.50 18.1 L75.75 18.2 L75.00 18.2 L74.25 18.1 L73.50 18.1 L72.75 18.3 L72.00 18.5 L71.25 18.7 L70.50 18.3 L69.75 18.1 L69.00 18.0 L68.25 18.1 L67.50 18.4 L66.75 18.6 L66.00 18.6 L65.25 18.5 L64.50 18.4 L63.75 18.5 L63.00 18.8 L62.25 19.0 L61.50 18.6 L60.75 17.3 L60.00 17.3 L59.25 17.3 L58.50 17.3 L57.75 17.3 L57.00 17.3 L56.25 18.0 L55.50 17.9 L54.75 18.1 L54.00 18.3 L53.25 18.4 L52.50 18.4 L51.75 18.3 L51.00 18.3 L50.25 18.4 L49.50 18.7 L48.75 18.9 L48.00 18.3 L47.25 17.3 L46.50 17.3 L45.75 17.3 L45.00 17.3 L44.25 17.3 L43.50 17.9 L42.75 17.9 L42.00 18.0 L41.25 18.2 L40.50 18.3 L39.75 18.3 L39.00 18.2 L38.25 18.2 L37.50 18.3 L36.75 18.6 L36.00 18.7 L35.25 18.0 L34.50 18.1 L33.75 18.0 L33.00 18.2 L32.25 18.4 L31.50 18.6 L30.75 18.6 L30.00 18.4 L29.25 18.4 L28.50 18.6 L27.75 18.9 L27.00 19.0 L26.25 18.4 L25.50 17.3 L24.75 17.3 L24.00 17.3 L23.25 17.3 L22.50 17.3 L21.75 17.3 L21.00 17.3 L20.25 17.9 L19.50 18.1 L18.75 18.3 L18.00 18.4 L17.25 18.4 L16.50 18.3 L15.75 18.3 L15.00 18.5 L14.25 18.7 L13.50 18.9 L12.75 18.1 L12.00 17.3 L11.25 17.3 L10.50 17.3 L9.75 17.3 L9.00 17.3 L8.25 17.3 L7.50 17.3 L6.75 17.9 L6.00 18.1 L5.25 18.2 L4.50 18.2 L3.75 18.1 L3.00 18.2 L2.25 18.4 L1.50 18.6 L0.75 18.7 L0.00 17.9Z" fill="#1a80e6" stroke="#0b3470" stroke-width="0.6"/></svg>
<div class="t" style="left:0;top:0.6px;padding:1.2px 3px 1.4px 2.6px;background:#8fc7fb;font-size:7px;font-weight:bold;color:#0b1626;transform:scaleX(0.86);transform-origin:0 0">Drum (MTZ_Drum_100_Moving_full_l</div>
</div>
<div class="a" style="left:871.30px;top:134.00px;width:70.20px;height:22.20px;background:#8fc7fb;overflow:hidden">
<svg class="a" style="left:0;top:0" width="70.20" height="22.20"><rect x="-0.50" y="0" width="1" height="22.20" fill="#86bdf0"/><rect x="17.05" y="0" width="1" height="22.20" fill="#86bdf0"/><rect x="34.60" y="0" width="1" height="22.20" fill="#86bdf0"/><rect x="52.15" y="0" width="1" height="22.20" fill="#86bdf0"/><path d="M0.00 5.8 L0.75 4.4 L1.50 4.5 L2.25 4.7 L3.00 4.9 L3.75 5.0 L4.50 4.9 L5.25 4.8 L6.00 4.9 L6.75 5.1 L7.50 5.8 L8.25 5.8 L9.00 5.8 L9.75 5.8 L10.50 5.8 L11.25 5.8 L12.00 5.8 L12.75 5.0 L13.50 4.2 L14.25 4.3 L15.00 4.6 L15.75 4.8 L16.50 4.8 L17.25 4.7 L18.00 4.7 L18.75 4.8 L19.50 5.0 L20.25 5.2 L21.00 5.8 L21.75 5.8 L22.50 5.8 L23.25 5.8 L24.00 5.8 L24.75 5.8 L25.50 5.8 L26.25 4.7 L27.00 4.1 L27.75 4.2 L28.50 4.5 L29.25 4.7 L30.00 4.7 L30.75 4.5 L31.50 4.5 L32.25 4.7 L33.00 4.9 L33.75 5.0 L34.50 5.0 L35.25 5.1 L36.00 4.4 L36.75 4.5 L37.50 4.7 L38.25 4.9 L39.00 4.9 L39.75 4.8 L40.50 4.8 L41.25 4.9 L42.00 5.1 L42.75 5.2 L43.50 5.2 L44.25 5.8 L45.00 5.8 L45.75 5.8 L46.50 5.8 L47.25 5.8 L48.00 4.8 L48.75 4.2 L49.50 4.4 L50.25 4.6 L51.00 4.8 L51.75 4.8 L52.50 4.7 L53.25 4.6 L54.00 4.8 L54.75 5.0 L55.50 5.1 L56.25 5.1 L57.00 5.8 L57.75 5.8 L58.50 5.8 L59.25 5.8 L60.00 5.8 L60.75 5.8 L61.50 4.4 L62.25 4.1 L63.00 4.3 L63.75 4.6 L64.50 4.7 L65.25 4.6 L66.00 4.5 L66.75 4.5 L67.50 4.7 L68.25 5.0 L69.00 5.1 L69.75 5.0 L69.75 7.7 L69.00 7.6 L68.25 7.7 L67.50 7.9 L66.75 8.1 L66.00 8.1 L65.25 8.0 L64.50 8.0 L63.75 8.1 L63.00 8.4 L62.25 8.6 L61.50 8.2 L60.75 6.9 L60.00 6.9 L59.25 6.9 L58.50 6.9 L57.75 6.9 L57.00 6.9 L56.25 7.5 L55.50 7.5 L54.75 7.6 L54.00 7.9 L53.25 8.0 L52.50 8.0 L51.75 7.9 L51.00 7.8 L50.25 8.0 L49.50 8.3 L48.75 8.4 L48.00 7.9 L47.25 6.9 L46.50 6.9 L45.75 6.9 L45.00 6.9 L44.25 6.9 L43.50 7.4 L42.75 7.4 L42.00 7.6 L41.25 7.8 L40.50 7.9 L39.75 7.8 L39.00 7.7 L38.25 7.7 L37.50 7.9 L36.75 8.2 L36.00 8.3 L35.25 7.6 L34.50 7.6 L33.75 7.6 L33.00 7.7 L32.25 8.0 L31.50 8.2 L30.75 8.1 L30.00 8.0 L29.25 8.0 L28.50 8.1 L27.75 8.4 L27.00 8.6 L26.25 8.0 L25.50 6.9 L24.75 6.9 L24.00 6.9 L23.25 6.9 L22.50 6.9 L21.75 6.9 L21.00 6.9 L20.25 7.5 L19.50 7.6 L18.75 7.8 L18.00 8.0 L17.25 7.9 L16.50 7.8 L15.75 7.8 L15.00 8.0 L14.25 8.3 L13.50 8.4 L12.75 7.7 L12.00 6.9 L11.25 6.9 L10.50 6.9 L9.75 6.9 L9.00 6.9 L8.25 6.9 L7.50 6.9 L6.75 7.5 L6.00 7.7 L5.25 7.8 L4.50 7.8 L3.75 7.7 L3.00 7.7 L2.25 7.9 L1.50 8.2 L0.75 8.2 L0.00 6.9Z" fill="#1a80e6" stroke="#0b3470" stroke-width="0.6"/><path d="M0.00 16.2 L0.75 14.8 L1.50 14.9 L2.25 15.2 L3.00 15.4 L3.75 15.4 L4.50 15.3 L5.25 15.3 L6.00 15.4 L6.75 15.6 L7.50 16.2 L8.25 16.2 L9.00 16.2 L9.75 16.2 L10.50 16.2 L11.25 16.2 L12.00 16.2 L12.75 15.4 L13.50 14.7 L14.25 14.8 L15.00 15.0 L15.75 15.3 L16.50 15.3 L17.25 15.2 L18.00 15.1 L18.75 15.2 L19.50 15.5 L20.25 15.6 L21.00 16.2 L21.75 16.2 L22.50 16.2 L23.25 16.2 L24.00 16.2 L24.75 16.2 L25.50 16.2 L26.25 15.1 L27.00 14.5 L27.75 14.7 L28.50 14.9 L29.25 15.1 L30.00 15.1 L30.75 15.0 L31.50 14.9 L32.25 15.1 L33.00 15.3 L33.75 15.5 L34.50 15.5 L35.25 15.5 L36.00 14.8 L36.75 14.9 L37.50 15.2 L38.25 15.4 L39.00 15.4 L39.75 15.2 L40.50 15.2 L41.25 15.3 L42.00 15.5 L42.75 15.7 L43.50 15.7 L44.25 16.2 L45.00 16.2 L45.75 16.2 L46.50 16.2 L47.25 16.2 L48.00 15.2 L48.75 14.7 L49.50 14.8 L50.25 15.1 L51.00 15.2 L51.75 15.2 L52.50 15.1 L53.25 15.1 L54.00 15.2 L54.75 15.4 L55.50 15.6 L56.25 15.6 L57.00 16.2 L57.75 16.2 L58.50 16.2 L59.25 16.2 L60.00 16.2 L60.75 16.2 L61.50 14.9 L62.25 14.5 L63.00 14.7 L63.75 15.0 L64.50 15.1 L65.25 15.1 L66.00 14.9 L66.75 15.0 L67.50 15.2 L68.25 15.4 L69.00 15.5 L69.75 15.4 L69.75 18.1 L69.00 18.0 L68.25 18.1 L67.50 18.4 L66.75 18.6 L66.00 18.6 L65.25 18.5 L64.50 18.4 L63.75 18.5 L63.00 18.8 L62.25 19.0 L61.50 18.6 L60.75 17.3 L60.00 17.3 L59.25 17.3 L58.50 17.3 L57.75 17.3 L57.00 17.3 L56.25 18.0 L55.50 17.9 L54.75 18.1 L54.00 18.3 L53.25 18.4 L52.50 18.4 L51.75 18.3 L51.00 18.3 L50.25 18.4 L49.50 18.7 L48.75 18.9 L48.00 18.3 L47.25 17.3 L46.50 17.3 L45.75 17.3 L45.00 17.3 L44.25 17.3 L43.50 17.9 L42.75 17.9 L42.00 18.0 L41.25 18.2 L40.50 18.3 L39.75 18.3 L39.00 18.2 L38.25 18.2 L37.50 18.3 L36.75 18.6 L36.00 18.7 L35.25 18.0 L34.50 18.1 L33.75 18.0 L33.00 18.2 L32.25 18.4 L31.50 18.6 L30.75 18.6 L30.00 18.4 L29.25 18.4 L28.50 18.6 L27.75 18.9 L27.00 19.0 L26.25 18.4 L25.50 17.3 L24.75 17.3 L24.00 17.3 L23.25 17.3 L22.50 17.3 L21.75 17.3 L21.00 17.3 L20.25 17.9 L19.50 18.1 L18.75 18.3 L18.00 18.4 L17.25 18.4 L16.50 18.3 L15.75 18.3 L15.00 18.5 L14.25 18.7 L13.50 18.9 L12.75 18.1 L12.00 17.3 L11.25 17.3 L10.50 17.3 L9.75 17.3 L9.00 17.3 L8.25 17.3 L7.50 17.3 L6.75 17.9 L6.00 18.1 L5.25 18.2 L4.50 18.2 L3.75 18.1 L3.00 18.2 L2.25 18.4 L1.50 18.6 L0.75 18.7 L0.00 17.3Z" fill="#1a80e6" stroke="#0b3470" stroke-width="0.6"/></svg>
</div>
<div class="a" style="left:651.92px;top:158.60px;width:78.98px;height:22.20px;background:#8fc7fb;overflow:hidden">
<svg class="a" style="left:0;top:0" width="78.98" height="22.20"><rect x="8.28" y="0" width="1" height="22.20" fill="#86bdf0"/><rect x="25.83" y="0" width="1" height="22.20" fill="#86bdf0"/><rect x="43.38" y="0" width="1" height="22.20" fill="#86bdf0"/><rect x="60.93" y="0" width="1" height="22.20" fill="#86bdf0"/><path d="M0.00 5.8 L0.75 5.8 L1.50 5.7 L2.25 5.6 L3.00 5.5 L3.75 5.2 L4.50 5.0 L5.25 4.7 L6.00 4.3 L6.75 3.9 L7.50 3.5 L8.25 4.3 L9.00 5.8 L9.75 5.8 L10.50 5.8 L11.25 5.7 L12.00 5.6 L12.75 5.5 L13.50 5.3 L14.25 5.1 L15.00 4.9 L15.75 4.7 L16.50 4.4 L17.25 5.3 L18.00 5.8 L18.75 5.8 L19.50 5.7 L20.25 5.7 L21.00 5.6 L21.75 5.4 L22.50 5.3 L23.25 5.1 L24.00 4.9 L24.75 4.7 L25.50 4.5 L26.25 5.7 L27.00 5.8 L27.75 5.8 L28.50 5.7 L29.25 5.7 L30.00 5.6 L30.75 5.4 L31.50 5.3 L32.25 5.1 L33.00 4.9 L33.75 4.7 L34.50 5.0 L35.25 5.8 L36.00 5.8 L36.75 5.7 L37.50 5.6 L38.25 5.4 L39.00 5.2 L39.75 4.9 L40.50 4.6 L41.25 4.2 L42.00 3.8 L42.75 3.3 L43.50 4.7 L44.25 5.8 L45.00 5.8 L45.75 5.7 L46.50 5.7 L47.25 5.5 L48.00 5.4 L48.75 5.2 L49.50 5.0 L50.25 4.8 L51.00 4.6 L51.75 4.3 L52.50 5.6 L53.25 5.8 L54.00 5.8 L54.75 5.7 L55.50 5.6 L56.25 5.5 L57.00 5.4 L57.75 5.2 L58.50 5.1 L59.25 4.8 L60.00 4.6 L60.75 4.8 L61.50 5.8 L62.25 5.8 L63.00 5.8 L63.75 5.7 L64.50 5.6 L65.25 5.5 L66.00 5.4 L66.75 5.2 L67.50 5.0 L68.25 4.8 L69.00 4.5 L69.75 5.1 L70.50 5.8 L71.25 5.8 L72.00 5.7 L72.75 5.6 L73.50 5.4 L74.25 5.3 L75.00 5.0 L75.75 4.7 L76.50 4.4 L77.25 4.1 L78.00 3.7 L78.75 5.3 L78.75 7.4 L78.00 9.0 L77.25 8.6 L76.50 8.2 L75.75 7.9 L75.00 7.6 L74.25 7.4 L73.50 7.2 L72.75 7.1 L72.00 6.9 L71.25 6.9 L70.50 6.8 L69.75 7.5 L69.00 8.1 L68.25 7.9 L67.50 7.7 L66.75 7.5 L66.00 7.3 L65.25 7.2 L64.50 7.0 L63.75 6.9 L63.00 6.9 L62.25 6.8 L61.50 6.8 L60.75 7.9 L60.00 8.0 L59.25 7.8 L58.50 7.6 L57.75 7.4 L57.00 7.3 L56.25 7.1 L55.50 7.0 L54.75 6.9 L54.00 6.9 L53.25 6.8 L52.50 7.1 L51.75 8.4 L51.00 8.1 L50.25 7.8 L49.50 7.6 L48.75 7.4 L48.00 7.3 L47.25 7.1 L46.50 7.0 L45.75 6.9 L45.00 6.9 L44.25 6.8 L43.50 8.0 L42.75 9.4 L42.00 8.9 L41.25 8.5 L40.50 8.1 L39.75 7.8 L39.00 7.5 L38.25 7.3 L37.50 7.1 L36.75 6.9 L36.00 6.9 L35.25 6.8 L34.50 7.7 L33.75 7.9 L33.00 7.7 L32.25 7.5 L31.50 7.4 L30.75 7.2 L30.00 7.1 L29.25 7.0 L28.50 6.9 L27.75 6.9 L27.00 6.8 L26.25 6.9 L25.50 8.1 L24.75 8.0 L24.00 7.8 L23.25 7.6 L22.50 7.4 L21.75 7.2 L21.00 7.1 L20.25 7.0 L19.50 6.9 L18.75 6.9 L18.00 6.8 L17.25 7.3 L16.50 8.2 L15.75 8.0 L15.00 7.7 L14.25 7.5 L13.50 7.4 L12.75 7.2 L12.00 7.1 L11.25 7.0 L10.50 6.9 L9.75 6.8 L9.00 6.8 L8.25 8.4 L7.50 9.2 L6.75 8.7 L6.00 8.3 L5.25 8.0 L4.50 7.7 L3.75 7.4 L3.00 7.2 L2.25 7.0 L1.50 6.9 L0.75 6.9 L0.00 6.8Z" fill="#1a80e6" stroke="#0b3470" stroke-width="0.6"/><path d="M0.00 16.3 L0.75 16.2 L1.50 16.2 L2.25 16.1 L3.00 16.0 L3.75 15.8 L4.50 15.6 L5.25 15.3 L6.00 15.0 L6.75 14.7 L7.50 14.4 L8.25 15.0 L9.00 16.3 L9.75 16.2 L10.50 16.2 L11.25 16.1 L12.00 16.1 L12.75 16.0 L13.50 15.8 L14.25 15.7 L15.00 15.5 L15.75 15.4 L16.50 15.2 L17.25 15.9 L18.00 16.3 L18.75 16.2 L19.50 16.2 L20.25 16.1 L21.00 15.9 L21.75 15.8 L22.50 15.6 L23.25 15.4 L24.00 15.1 L24.75 14.9 L25.50 14.7 L26.25 16.1 L27.00 16.3 L27.75 16.2 L28.50 16.2 L29.25 16.1 L30.00 16.0 L30.75 15.9 L31.50 15.7 L32.25 15.6 L33.00 15.4 L33.75 15.2 L34.50 15.4 L35.25 16.3 L36.00 16.2 L36.75 16.2 L37.50 16.1 L38.25 15.9 L39.00 15.8 L39.75 15.5 L40.50 15.3 L41.25 15.0 L42.00 14.7 L42.75 14.3 L43.50 15.4 L44.25 16.3 L45.00 16.2 L45.75 16.2 L46.50 16.1 L47.25 16.0 L48.00 15.9 L48.75 15.7 L49.50 15.5 L50.25 15.3 L51.00 15.1 L51.75 14.8 L52.50 16.0 L53.25 16.3 L54.00 16.2 L54.75 16.2 L55.50 16.1 L56.25 16.0 L57.00 15.9 L57.75 15.7 L58.50 15.5 L59.25 15.3 L60.00 15.1 L60.75 15.3 L61.50 16.3 L62.25 16.2 L63.00 16.2 L63.75 16.1 L64.50 16.0 L65.25 15.9 L66.00 15.7 L66.75 15.5 L67.50 15.3 L68.25 15.1 L69.00 14.8 L69.75 15.4 L70.50 16.3 L71.25 16.2 L72.00 16.1 L72.75 16.0 L73.50 15.9 L74.25 15.7 L75.00 15.5 L75.75 15.2 L76.50 14.9 L77.25 14.5 L78.00 14.1 L78.75 15.7 L78.75 17.8 L78.00 19.4 L77.25 19.0 L76.50 18.7 L75.75 18.3 L75.00 18.1 L74.25 17.8 L73.50 17.6 L72.75 17.5 L72.00 17.4 L71.25 17.3 L70.50 17.3 L69.75 18.1 L69.00 18.7 L68.25 18.5 L67.50 18.2 L66.75 18.0 L66.00 17.8 L65.25 17.6 L64.50 17.5 L63.75 17.4 L63.00 17.3 L62.25 17.3 L61.50 17.3 L60.75 18.3 L60.00 18.4 L59.25 18.2 L58.50 18.0 L57.75 17.8 L57.00 17.7 L56.25 17.5 L55.50 17.4 L54.75 17.4 L54.00 17.3 L53.25 17.3 L52.50 17.5 L51.75 18.7 L51.00 18.5 L50.25 18.2 L49.50 18.0 L48.75 17.8 L48.00 17.7 L47.25 17.5 L46.50 17.4 L45.75 17.3 L45.00 17.3 L44.25 17.3 L43.50 18.1 L42.75 19.2 L42.00 18.9 L41.25 18.5 L40.50 18.2 L39.75 18.0 L39.00 17.8 L38.25 17.6 L37.50 17.5 L36.75 17.4 L36.00 17.3 L35.25 17.3 L34.50 18.1 L33.75 18.4 L33.00 18.1 L32.25 18.0 L31.50 17.8 L30.75 17.6 L30.00 17.5 L29.25 17.4 L28.50 17.4 L27.75 17.3 L27.00 17.3 L26.25 17.4 L25.50 18.8 L24.75 18.6 L24.00 18.4 L23.25 18.1 L22.50 17.9 L21.75 17.7 L21.00 17.6 L20.25 17.5 L19.50 17.4 L18.75 17.3 L18.00 17.3 L17.25 17.6 L16.50 18.4 L15.75 18.2 L15.00 18.0 L14.25 17.8 L13.50 17.7 L12.75 17.6 L12.00 17.5 L11.25 17.4 L10.50 17.3 L9.75 17.3 L9.00 17.3 L8.25 18.5 L7.50 19.2 L6.75 18.8 L6.00 18.5 L5.25 18.2 L4.50 17.9 L3.75 17.7 L3.00 17.6 L2.25 17.4 L1.50 17.3 L0.75 17.3 L0.00 17.3Z" fill="#1a80e6" stroke="#0b3470" stroke-width="0.6"/></svg>
<div class="t" style="left:0;top:0.6px;padding:1.2px 3px 1.4px 2.6px;background:#8fc7fb;font-size:7px;font-weight:bold;color:#0b1626;transform:scaleX(0.86);transform-origin:0 0">Drum_Rev (Cubase_317_El</div>
</div>
<div class="a" style="left:827.43px;top:158.60px;width:43.87px;height:22.20px;background:#8fc7fb;overflow:hidden">
<svg class="a" style="left:0;top:0" width="43.87" height="22.20"><rect x="8.27" y="0" width="1" height="22.20" fill="#86bdf0"/><rect x="25.82" y="0" width="1" height="22.20" fill="#86bdf0"/><path d="M0.00 5.8 L0.75 5.8 L1.50 5.7 L2.25 5.6 L3.00 5.4 L3.75 5.2 L4.50 4.9 L5.25 4.6 L6.00 4.2 L6.75 3.7 L7.50 3.3 L8.25 4.1 L9.00 5.8 L9.75 5.8 L10.50 5.8 L11.25 5.7 L12.00 5.6 L12.75 5.5 L13.50 5.4 L14.25 5.2 L15.00 5.1 L15.75 4.9 L16.50 4.7 L17.25 5.4 L18.00 5.8 L18.75 5.8 L19.50 5.8 L20.25 5.7 L21.00 5.6 L21.75 5.5 L22.50 5.4 L23.25 5.2 L24.00 5.1 L24.75 4.9 L25.50 4.8 L26.25 5.7 L27.00 5.8 L27.75 5.8 L28.50 5.7 L29.25 5.6 L30.00 5.5 L30.75 5.3 L31.50 5.1 L32.25 4.9 L33.00 4.6 L33.75 4.4 L34.50 4.7 L35.25 5.8 L36.00 5.8 L36.75 5.7 L37.50 5.6 L38.25 5.5 L39.00 5.3 L39.75 5.1 L40.50 4.8 L41.25 4.5 L42.00 4.2 L42.75 3.8 L43.50 4.9 L43.50 7.7 L42.75 8.8 L42.00 8.5 L41.25 8.1 L40.50 7.8 L39.75 7.6 L39.00 7.3 L38.25 7.2 L37.50 7.0 L36.75 6.9 L36.00 6.9 L35.25 6.8 L34.50 8.0 L33.75 8.3 L33.00 8.0 L32.25 7.8 L31.50 7.5 L30.75 7.4 L30.00 7.2 L29.25 7.1 L28.50 7.0 L27.75 6.9 L27.00 6.8 L26.25 6.9 L25.50 7.9 L24.75 7.8 L24.00 7.6 L23.25 7.4 L22.50 7.3 L21.75 7.2 L21.00 7.0 L20.25 7.0 L19.50 6.9 L18.75 6.9 L18.00 6.8 L17.25 7.2 L16.50 8.0 L15.75 7.8 L15.00 7.6 L14.25 7.4 L13.50 7.3 L12.75 7.1 L12.00 7.0 L11.25 6.9 L10.50 6.9 L9.75 6.8 L9.00 6.8 L8.25 8.5 L7.50 9.4 L6.75 8.9 L6.00 8.5 L5.25 8.1 L4.50 7.8 L3.75 7.5 L3.00 7.2 L2.25 7.1 L1.50 6.9 L0.75 6.9 L0.00 6.8Z" fill="#1a80e6" stroke="#0b3470" stroke-width="0.6"/><path d="M0.00 16.3 L0.75 16.2 L1.50 16.2 L2.25 16.0 L3.00 15.9 L3.75 15.6 L4.50 15.3 L5.25 15.0 L6.00 14.6 L6.75 14.2 L7.50 13.7 L8.25 14.6 L9.00 16.3 L9.75 16.2 L10.50 16.2 L11.25 16.1 L12.00 16.0 L12.75 15.8 L13.50 15.7 L14.25 15.5 L15.00 15.2 L15.75 15.0 L16.50 14.7 L17.25 15.7 L18.00 16.3 L18.75 16.2 L19.50 16.2 L20.25 16.1 L21.00 16.0 L21.75 15.8 L22.50 15.6 L23.25 15.4 L24.00 15.2 L24.75 14.9 L25.50 14.8 L26.25 16.1 L27.00 16.3 L27.75 16.2 L28.50 16.2 L29.25 16.1 L30.00 16.0 L30.75 15.9 L31.50 15.8 L32.25 15.6 L33.00 15.4 L33.75 15.2 L34.50 15.5 L35.25 16.3 L36.00 16.2 L36.75 16.2 L37.50 16.0 L38.25 15.9 L39.00 15.6 L39.75 15.4 L40.50 15.1 L41.25 14.7 L42.00 14.3 L42.75 13.9 L43.50 15.2 L43.50 18.3 L42.75 19.6 L42.00 19.2 L41.25 18.8 L40.50 18.4 L39.75 18.1 L39.00 17.9 L38.25 17.7 L37.50 17.5 L36.75 17.4 L36.00 17.3 L35.25 17.3 L34.50 18.1 L33.75 18.3 L33.00 18.1 L32.25 17.9 L31.50 17.8 L30.75 17.6 L30.00 17.5 L29.25 17.4 L28.50 17.4 L27.75 17.3 L27.00 17.3 L26.25 17.4 L25.50 18.8 L24.75 18.6 L24.00 18.3 L23.25 18.1 L22.50 17.9 L21.75 17.7 L21.00 17.6 L20.25 17.4 L19.50 17.4 L18.75 17.3 L18.00 17.3 L17.25 17.8 L16.50 18.8 L15.75 18.5 L15.00 18.3 L14.25 18.1 L13.50 17.8 L12.75 17.7 L12.00 17.5 L11.25 17.4 L10.50 17.3 L9.75 17.3 L9.00 17.3 L8.25 18.9 L7.50 19.8 L6.75 19.3 L6.00 18.9 L5.25 18.5 L4.50 18.2 L3.75 17.9 L3.00 17.7 L2.25 17.5 L1.50 17.4 L0.75 17.3 L0.00 17.3Z" fill="#1a80e6" stroke="#0b3470" stroke-width="0.6"/></svg>
</div>
<div class="a" style="left:932.72px;top:158.60px;width:78.78px;height:22.20px;background:#8fc7fb;overflow:hidden">
<svg class="a" style="left:0;top:0" width="78.78" height="22.20"><rect x="8.28" y="0" width="1" height="22.20" fill="#86bdf0"/><rect x="25.83" y="0" width="1" height="22.20" fill="#86bdf0"/><rect x="43.38" y="0" width="1" height="22.20" fill="#86bdf0"/><rect x="60.93" y="0" width="1" height="22.20" fill="#86bdf0"/><path d="M0.00 5.8 L0.75 5.8 L1.50 5.7 L2.25 5.6 L3.00 5.4 L3.75 5.2 L4.50 4.9 L5.25 4.6 L6.00 4.2 L6.75 3.7 L7.50 3.3 L8.25 4.1 L9.00 5.8 L9.75 5.8 L10.50 5.8 L11.25 5.7 L12.00 5.6 L12.75 5.4 L13.50 5.2 L14.25 5.1 L15.00 4.8 L15.75 4.6 L16.50 4.3 L17.25 5.3 L18.00 5.8 L18.75 5.8 L19.50 5.8 L20.25 5.7 L21.00 5.6 L21.75 5.5 L22.50 5.4 L23.25 5.2 L24.00 5.0 L24.75 4.8 L25.50 4.7 L26.25 5.7 L27.00 5.8 L27.75 5.8 L28.50 5.7 L29.25 5.6 L30.00 5.5 L30.75 5.4 L31.50 5.2 L32.25 5.0 L33.00 4.8 L33.75 4.5 L34.50 4.8 L35.25 5.8 L36.00 5.8 L36.75 5.7 L37.50 5.6 L38.25 5.5 L39.00 5.3 L39.75 5.0 L40.50 4.7 L41.25 4.4 L42.00 4.0 L42.75 3.6 L43.50 4.8 L44.25 5.8 L45.00 5.8 L45.75 5.7 L46.50 5.7 L47.25 5.6 L48.00 5.4 L48.75 5.3 L49.50 5.1 L50.25 4.9 L51.00 4.7 L51.75 4.4 L52.50 5.6 L53.25 5.8 L54.00 5.8 L54.75 5.7 L55.50 5.7 L56.25 5.6 L57.00 5.5 L57.75 5.3 L58.50 5.2 L59.25 5.0 L60.00 4.8 L60.75 4.9 L61.50 5.8 L62.25 5.8 L63.00 5.8 L63.75 5.7 L64.50 5.6 L65.25 5.5 L66.00 5.4 L66.75 5.3 L67.50 5.1 L68.25 4.9 L69.00 4.7 L69.75 5.2 L70.50 5.8 L71.25 5.8 L72.00 5.7 L72.75 5.6 L73.50 5.4 L74.25 5.2 L75.00 4.9 L75.75 4.6 L76.50 4.3 L77.25 3.9 L78.00 3.5 L78.75 5.2 L78.75 7.4 L78.00 9.2 L77.25 8.7 L76.50 8.3 L75.75 8.0 L75.00 7.7 L74.25 7.5 L73.50 7.2 L72.75 7.1 L72.00 7.0 L71.25 6.9 L70.50 6.8 L69.75 7.5 L69.00 8.0 L68.25 7.8 L67.50 7.6 L66.75 7.4 L66.00 7.2 L65.25 7.1 L64.50 7.0 L63.75 6.9 L63.00 6.9 L62.25 6.8 L61.50 6.8 L60.75 7.7 L60.00 7.9 L59.25 7.7 L58.50 7.5 L57.75 7.3 L57.00 7.2 L56.25 7.1 L55.50 7.0 L54.75 6.9 L54.00 6.9 L53.25 6.8 L52.50 7.1 L51.75 8.2 L51.00 8.0 L50.25 7.8 L49.50 7.5 L48.75 7.4 L48.00 7.2 L47.25 7.1 L46.50 7.0 L45.75 6.9 L45.00 6.9 L44.25 6.8 L43.50 7.8 L42.75 9.0 L42.00 8.6 L41.25 8.3 L40.50 7.9 L39.75 7.6 L39.00 7.4 L38.25 7.2 L37.50 7.0 L36.75 6.9 L36.00 6.9 L35.25 6.8 L34.50 7.8 L33.75 8.1 L33.00 7.9 L32.25 7.6 L31.50 7.5 L30.75 7.3 L30.00 7.1 L29.25 7.0 L28.50 6.9 L27.75 6.9 L27.00 6.8 L26.25 6.9 L25.50 7.9 L24.75 7.8 L24.00 7.6 L23.25 7.4 L22.50 7.3 L21.75 7.2 L21.00 7.1 L20.25 7.0 L19.50 6.9 L18.75 6.9 L18.00 6.8 L17.25 7.4 L16.50 8.4 L15.75 8.1 L15.00 7.8 L14.25 7.6 L13.50 7.4 L12.75 7.2 L12.00 7.1 L11.25 7.0 L10.50 6.9 L9.75 6.9 L9.00 6.8 L8.25 8.5 L7.50 9.4 L6.75 8.9 L6.00 8.5 L5.25 8.1 L4.50 7.8 L3.75 7.5 L3.00 7.2 L2.25 7.1 L1.50 6.9 L0.75 6.9 L0.00 6.8Z" fill="#1a80e6" stroke="#0b3470" stroke-width="0.6"/><path d="M0.00 16.3 L0.75 16.2 L1.50 16.2 L2.25 16.0 L3.00 15.9 L3.75 15.6 L4.50 15.4 L5.25 15.0 L6.00 14.7 L6.75 14.3 L7.50 13.8 L8.25 14.6 L9.00 16.3 L9.75 16.2 L10.50 16.2 L11.25 16.1 L12.00 16.1 L12.75 15.9 L13.50 15.8 L14.25 15.7 L15.00 15.5 L15.75 15.3 L16.50 15.1 L17.25 15.8 L18.00 16.3 L18.75 16.2 L19.50 16.2 L20.25 16.1 L21.00 15.9 L21.75 15.8 L22.50 15.6 L23.25 15.4 L24.00 15.1 L24.75 14.9 L25.50 14.7 L26.25 16.1 L27.00 16.3 L27.75 16.2 L28.50 16.2 L29.25 16.1 L30.00 16.0 L30.75 15.9 L31.50 15.7 L32.25 15.6 L33.00 15.4 L33.75 15.2 L34.50 15.4 L35.25 16.3 L36.00 16.2 L36.75 16.1 L37.50 16.0 L38.25 15.8 L39.00 15.6 L39.75 15.4 L40.50 15.0 L41.25 14.7 L42.00 14.3 L42.75 13.8 L43.50 15.2 L44.25 16.3 L45.00 16.2 L45.75 16.2 L46.50 16.1 L47.25 16.0 L48.00 15.9 L48.75 15.8 L49.50 15.7 L50.25 15.5 L51.00 15.3 L51.75 15.1 L52.50 16.1 L53.25 16.3 L54.00 16.2 L54.75 16.2 L55.50 16.1 L56.25 15.9 L57.00 15.8 L57.75 15.6 L58.50 15.4 L59.25 15.2 L60.00 14.9 L60.75 15.1 L61.50 16.3 L62.25 16.2 L63.00 16.2 L63.75 16.2 L64.50 16.1 L65.25 16.0 L66.00 15.9 L66.75 15.7 L67.50 15.5 L68.25 15.4 L69.00 15.1 L69.75 15.6 L70.50 16.3 L71.25 16.2 L72.00 16.1 L72.75 16.0 L73.50 15.8 L74.25 15.6 L75.00 15.3 L75.75 15.0 L76.50 14.6 L77.25 14.2 L78.00 13.7 L78.75 15.6 L78.75 17.9 L78.00 19.8 L77.25 19.4 L76.50 18.9 L75.75 18.6 L75.00 18.2 L74.25 18.0 L73.50 17.7 L72.75 17.5 L72.00 17.4 L71.25 17.3 L70.50 17.3 L69.75 17.9 L69.00 18.4 L68.25 18.2 L67.50 18.0 L66.75 17.8 L66.00 17.7 L65.25 17.5 L64.50 17.4 L63.75 17.4 L63.00 17.3 L62.25 17.3 L61.50 17.3 L60.75 18.4 L60.00 18.6 L59.25 18.3 L58.50 18.1 L57.75 17.9 L57.00 17.7 L56.25 17.6 L55.50 17.5 L54.75 17.4 L54.00 17.3 L53.25 17.3 L52.50 17.5 L51.75 18.4 L51.00 18.2 L50.25 18.0 L49.50 17.9 L48.75 17.7 L48.00 17.6 L47.25 17.5 L46.50 17.4 L45.75 17.3 L45.00 17.3 L44.25 17.3 L43.50 18.4 L42.75 19.7 L42.00 19.2 L41.25 18.8 L40.50 18.5 L39.75 18.2 L39.00 17.9 L38.25 17.7 L37.50 17.5 L36.75 17.4 L36.00 17.3 L35.25 17.3 L34.50 18.1 L33.75 18.4 L33.00 18.1 L32.25 18.0 L31.50 17.8 L30.75 17.7 L30.00 17.5 L29.25 17.4 L28.50 17.4 L27.75 17.3 L27.00 17.3 L26.25 17.4 L25.50 18.8 L24.75 18.6 L24.00 18.4 L23.25 18.1 L22.50 17.9 L21.75 17.7 L21.00 17.6 L20.25 17.5 L19.50 17.4 L18.75 17.3 L18.00 17.3 L17.25 17.7 L16.50 18.4 L15.75 18.2 L15.00 18.0 L14.25 17.9 L13.50 17.7 L12.75 17.6 L12.00 17.5 L11.25 17.4 L10.50 17.3 L9.75 17.3 L9.00 17.3 L8.25 18.9 L7.50 19.7 L6.75 19.3 L6.00 18.8 L5.25 18.5 L4.50 18.2 L3.75 17.9 L3.00 17.7 L2.25 17.5 L1.50 17.4 L0.75 17.3 L0.00 17.3Z" fill="#1a80e6" stroke="#0b3470" stroke-width="0.6"/></svg>
<div class="t" style="left:0;top:0.6px;padding:1.2px 3px 1.4px 2.6px;background:#8fc7fb;font-size:7px;font-weight:bold;color:#0b1626;transform:scaleX(0.86);transform-origin:0 0">Drum_Rev (Cubase_317_El</div>
</div>
<div class="a" style="left:730.90px;top:183.20px;width:105.30px;height:22.20px;background:#8fc7fb;overflow:hidden">
<svg class="a" style="left:0;top:0" width="105.30" height="22.20"><rect x="17.05" y="0" width="1" height="22.20" fill="#86bdf0"/><rect x="34.60" y="0" width="1" height="22.20" fill="#86bdf0"/><rect x="52.15" y="0" width="1" height="22.20" fill="#86bdf0"/><rect x="69.70" y="0" width="1" height="22.20" fill="#86bdf0"/><rect x="87.25" y="0" width="1" height="22.20" fill="#86bdf0"/><rect x="104.80" y="0" width="1" height="22.20" fill="#86bdf0"/><path d="M0.00 6.0 L0.75 5.2 L1.50 4.9 L2.25 4.7 L3.00 4.6 L3.75 4.5 L4.50 4.6 L5.25 4.8 L6.00 5.2 L6.75 5.9 L7.50 5.8 L8.25 5.8 L9.00 5.7 L9.75 5.0 L10.50 4.7 L11.25 4.5 L12.00 4.5 L12.75 4.5 L13.50 4.6 L14.25 4.9 L15.00 5.3 L15.75 5.8 L16.50 5.8 L17.25 5.8 L18.00 5.3 L18.75 4.8 L19.50 4.4 L20.25 4.3 L21.00 4.2 L21.75 4.3 L22.50 4.5 L23.25 4.8 L24.00 5.4 L24.75 5.8 L25.50 5.8 L26.25 5.8 L27.00 5.0 L27.75 4.4 L28.50 4.2 L29.25 4.0 L30.00 4.0 L30.75 4.1 L31.50 4.3 L32.25 4.8 L33.00 5.6 L33.75 5.8 L34.50 5.8 L35.25 5.8 L36.00 5.1 L36.75 4.7 L37.50 4.5 L38.25 4.4 L39.00 4.5 L39.75 4.6 L40.50 4.8 L41.25 5.2 L42.00 5.8 L42.75 5.8 L43.50 5.8 L44.25 5.5 L45.00 5.0 L45.75 4.7 L46.50 4.5 L47.25 4.5 L48.00 4.5 L48.75 4.6 L49.50 4.9 L50.25 5.4 L51.00 5.8 L51.75 5.8 L52.50 5.8 L53.25 5.2 L54.00 4.8 L54.75 4.5 L55.50 4.4 L56.25 4.4 L57.00 4.4 L57.75 4.6 L58.50 5.0 L59.25 5.6 L60.00 5.8 L60.75 5.8 L61.50 5.8 L62.25 4.8 L63.00 4.3 L63.75 4.1 L64.50 3.9 L65.25 3.9 L66.00 4.1 L66.75 4.4 L67.50 4.8 L68.25 6.0 L69.00 5.8 L69.75 5.8 L70.50 5.5 L71.25 5.0 L72.00 4.7 L72.75 4.5 L73.50 4.4 L74.25 4.5 L75.00 4.6 L75.75 4.9 L76.50 5.3 L77.25 5.8 L78.00 5.8 L78.75 5.8 L79.50 5.1 L80.25 4.5 L81.00 4.2 L81.75 4.0 L82.50 3.9 L83.25 4.0 L84.00 4.2 L84.75 4.6 L85.50 5.3 L86.25 5.8 L87.00 5.8 L87.75 6.0 L88.50 4.9 L89.25 4.4 L90.00 4.1 L90.75 4.0 L91.50 4.0 L92.25 4.1 L93.00 4.4 L93.75 4.8 L94.50 5.8 L95.25 5.8 L96.00 5.8 L96.75 5.6 L97.50 5.0 L98.25 4.7 L99.00 4.5 L99.75 4.4 L100.50 4.5 L101.25 4.6 L102.00 4.8 L102.75 5.3 L103.50 5.8 L104.25 5.8 L105.00 5.8 L105.00 6.8 L104.25 6.8 L103.50 6.8 L102.75 7.4 L102.00 7.8 L101.25 8.1 L100.50 8.2 L99.75 8.2 L99.00 8.1 L98.25 8.0 L97.50 7.6 L96.75 7.0 L96.00 6.8 L95.25 6.8 L94.50 6.9 L93.75 7.8 L93.00 8.3 L92.25 8.5 L91.50 8.6 L90.75 8.6 L90.00 8.5 L89.25 8.2 L88.50 7.8 L87.75 6.6 L87.00 6.8 L86.25 6.8 L85.50 7.3 L84.75 8.0 L84.00 8.4 L83.25 8.6 L82.50 8.7 L81.75 8.7 L81.00 8.5 L80.25 8.2 L79.50 7.6 L78.75 6.8 L78.00 6.8 L77.25 6.8 L76.50 7.3 L75.75 7.8 L75.00 8.1 L74.25 8.2 L73.50 8.2 L72.75 8.2 L72.00 8.0 L71.25 7.7 L70.50 7.1 L69.75 6.8 L69.00 6.8 L68.25 6.6 L67.50 7.8 L66.75 8.3 L66.00 8.6 L65.25 8.7 L64.50 8.7 L63.75 8.6 L63.00 8.3 L62.25 7.9 L61.50 6.9 L60.75 6.8 L60.00 6.8 L59.25 7.1 L58.50 7.7 L57.75 8.0 L57.00 8.2 L56.25 8.3 L55.50 8.3 L54.75 8.1 L54.00 7.9 L53.25 7.4 L52.50 6.8 L51.75 6.8 L51.00 6.8 L50.25 7.3 L49.50 7.7 L48.75 8.0 L48.00 8.2 L47.25 8.2 L46.50 8.1 L45.75 8.0 L45.00 7.7 L44.25 7.2 L43.50 6.8 L42.75 6.8 L42.00 6.8 L41.25 7.5 L40.50 7.9 L39.75 8.1 L39.00 8.2 L38.25 8.2 L37.50 8.1 L36.75 7.9 L36.00 7.6 L35.25 6.9 L34.50 6.8 L33.75 6.8 L33.00 7.1 L32.25 7.9 L31.50 8.3 L30.75 8.6 L30.00 8.7 L29.25 8.6 L28.50 8.5 L27.75 8.2 L27.00 7.7 L26.25 6.8 L25.50 6.8 L24.75 6.8 L24.00 7.3 L23.25 7.9 L22.50 8.2 L21.75 8.4 L21.00 8.4 L20.25 8.4 L19.50 8.2 L18.75 7.9 L18.00 7.4 L17.25 6.8 L16.50 6.8 L15.75 6.8 L15.00 7.4 L14.25 7.8 L13.50 8.0 L12.75 8.2 L12.00 8.2 L11.25 8.1 L10.50 7.9 L9.75 7.6 L9.00 7.0 L8.25 6.8 L7.50 6.8 L6.75 6.8 L6.00 7.5 L5.25 7.8 L4.50 8.0 L3.75 8.1 L3.00 8.1 L2.25 8.0 L1.50 7.8 L0.75 7.4 L0.00 6.6Z" fill="#1a80e6" stroke="#0b3470" stroke-width="0.6"/><path d="M0.00 16.5 L0.75 15.6 L1.50 15.3 L2.25 15.0 L3.00 14.9 L3.75 14.9 L4.50 15.0 L5.25 15.2 L6.00 15.6 L6.75 16.3 L7.50 16.3 L8.25 16.3 L9.00 16.1 L9.75 15.4 L10.50 15.1 L11.25 14.9 L12.00 14.8 L12.75 14.8 L13.50 15.0 L14.25 15.2 L15.00 15.7 L15.75 16.3 L16.50 16.3 L17.25 16.3 L18.00 15.8 L18.75 15.2 L19.50 14.9 L20.25 14.8 L21.00 14.7 L21.75 14.8 L22.50 15.0 L23.25 15.3 L24.00 15.8 L24.75 16.3 L25.50 16.3 L26.25 16.3 L27.00 15.3 L27.75 14.7 L28.50 14.4 L29.25 14.3 L30.00 14.2 L30.75 14.4 L31.50 14.6 L32.25 15.1 L33.00 16.0 L33.75 16.3 L34.50 16.3 L35.25 16.1 L36.00 15.3 L36.75 14.9 L37.50 14.7 L38.25 14.6 L39.00 14.6 L39.75 14.7 L40.50 15.0 L41.25 15.5 L42.00 16.3 L42.75 16.3 L43.50 16.3 L44.25 15.7 L45.00 15.0 L45.75 14.7 L46.50 14.5 L47.25 14.4 L48.00 14.4 L48.75 14.6 L49.50 15.0 L50.25 15.6 L51.00 16.3 L51.75 16.3 L52.50 16.3 L53.25 15.7 L54.00 15.3 L54.75 15.1 L55.50 14.9 L56.25 14.9 L57.00 15.0 L57.75 15.2 L58.50 15.5 L59.25 16.1 L60.00 16.3 L60.75 16.3 L61.50 16.3 L62.25 15.4 L63.00 14.9 L63.75 14.7 L64.50 14.6 L65.25 14.6 L66.00 14.7 L66.75 15.0 L67.50 15.4 L68.25 16.5 L69.00 16.3 L69.75 16.3 L70.50 15.7 L71.25 15.0 L72.00 14.6 L72.75 14.4 L73.50 14.3 L74.25 14.3 L75.00 14.5 L75.75 14.8 L76.50 15.4 L77.25 16.3 L78.00 16.3 L78.75 16.3 L79.50 15.6 L80.25 15.1 L81.00 14.8 L81.75 14.6 L82.50 14.5 L83.25 14.6 L84.00 14.8 L84.75 15.2 L85.50 15.8 L86.25 16.3 L87.00 16.3 L87.75 16.5 L88.50 15.2 L89.25 14.7 L90.00 14.4 L90.75 14.2 L91.50 14.2 L92.25 14.3 L93.00 14.6 L93.75 15.1 L94.50 16.1 L95.25 16.3 L96.00 16.3 L96.75 15.9 L97.50 15.0 L98.25 14.6 L99.00 14.4 L99.75 14.3 L100.50 14.3 L101.25 14.5 L102.00 14.8 L102.75 15.3 L103.50 16.3 L104.25 16.3 L105.00 16.3 L105.00 17.3 L104.25 17.3 L103.50 17.3 L102.75 18.2 L102.00 18.7 L101.25 19.1 L100.50 19.2 L99.75 19.3 L99.00 19.2 L98.25 18.9 L97.50 18.5 L96.75 17.7 L96.00 17.3 L95.25 17.3 L94.50 17.4 L93.75 18.4 L93.00 18.9 L92.25 19.2 L91.50 19.3 L90.75 19.3 L90.00 19.2 L89.25 18.9 L88.50 18.3 L87.75 17.1 L87.00 17.3 L86.25 17.3 L85.50 17.7 L84.75 18.3 L84.00 18.7 L83.25 18.9 L82.50 19.0 L81.75 18.9 L81.00 18.8 L80.25 18.5 L79.50 17.9 L78.75 17.3 L78.00 17.3 L77.25 17.3 L76.50 18.1 L75.75 18.7 L75.00 19.0 L74.25 19.2 L73.50 19.2 L72.75 19.2 L72.00 18.9 L71.25 18.5 L70.50 17.8 L69.75 17.3 L69.00 17.3 L68.25 17.1 L67.50 18.1 L66.75 18.6 L66.00 18.8 L65.25 18.9 L64.50 19.0 L63.75 18.8 L63.00 18.6 L62.25 18.2 L61.50 17.2 L60.75 17.3 L60.00 17.3 L59.25 17.5 L58.50 18.1 L57.75 18.4 L57.00 18.5 L56.25 18.6 L55.50 18.6 L54.75 18.5 L54.00 18.2 L53.25 17.8 L52.50 17.3 L51.75 17.3 L51.00 17.3 L50.25 17.9 L49.50 18.6 L48.75 18.9 L48.00 19.1 L47.25 19.1 L46.50 19.1 L45.75 18.9 L45.00 18.5 L44.25 17.8 L43.50 17.3 L42.75 17.3 L42.00 17.3 L41.25 18.1 L40.50 18.5 L39.75 18.8 L39.00 18.9 L38.25 18.9 L37.50 18.8 L36.75 18.6 L36.00 18.2 L35.25 17.4 L34.50 17.3 L33.75 17.3 L33.00 17.6 L32.25 18.5 L31.50 18.9 L30.75 19.2 L30.00 19.3 L29.25 19.3 L28.50 19.1 L27.75 18.8 L27.00 18.2 L26.25 17.3 L25.50 17.3 L24.75 17.3 L24.00 17.7 L23.25 18.3 L22.50 18.6 L21.75 18.7 L21.00 18.8 L20.25 18.7 L19.50 18.6 L18.75 18.3 L18.00 17.8 L17.25 17.3 L16.50 17.3 L15.75 17.3 L15.00 17.9 L14.25 18.3 L13.50 18.6 L12.75 18.7 L12.00 18.7 L11.25 18.6 L10.50 18.4 L9.75 18.1 L9.00 17.5 L8.25 17.3 L7.50 17.3 L6.75 17.2 L6.00 18.0 L5.25 18.3 L4.50 18.5 L3.75 18.6 L3.00 18.6 L2.25 18.5 L1.50 18.3 L0.75 17.9 L0.00 17.1Z" fill="#1a80e6" stroke="#0b3470" stroke-width="0.6"/></svg>
<div class="t" style="left:0;top:0.6px;padding:1.2px 3px 1.4px 2.6px;background:#8fc7fb;font-size:7px;font-weight:bold;color:#0b1626;transform:scaleX(0.86);transform-origin:0 0">013_a__Synth_Loop_96bpm_G#2_-_</div>
</div>
<div class="a" style="left:871.30px;top:183.20px;width:70.20px;height:22.20px;background:#8fc7fb;overflow:hidden">
<svg class="a" style="left:0;top:0" width="70.20" height="22.20"><rect x="-0.50" y="0" width="1" height="22.20" fill="#86bdf0"/><rect x="17.05" y="0" width="1" height="22.20" fill="#86bdf0"/><rect x="34.60" y="0" width="1" height="22.20" fill="#86bdf0"/><rect x="52.15" y="0" width="1" height="22.20" fill="#86bdf0"/><path d="M0.00 5.8 L0.75 5.1 L1.50 4.7 L2.25 4.5 L3.00 4.4 L3.75 4.4 L4.50 4.5 L5.25 4.7 L6.00 5.1 L6.75 5.8 L7.50 5.8 L8.25 5.8 L9.00 5.6 L9.75 4.9 L10.50 4.6 L11.25 4.4 L12.00 4.3 L12.75 4.3 L13.50 4.5 L14.25 4.7 L15.00 5.2 L15.75 5.8 L16.50 5.8 L17.25 5.8 L18.00 5.1 L18.75 4.4 L19.50 4.1 L20.25 3.9 L21.00 3.8 L21.75 3.9 L22.50 4.1 L23.25 4.5 L24.00 5.2 L24.75 5.8 L25.50 5.8 L26.25 5.8 L27.00 5.0 L27.75 4.6 L28.50 4.3 L29.25 4.2 L30.00 4.1 L30.75 4.2 L31.50 4.5 L32.25 4.9 L33.00 5.6 L33.75 5.8 L34.50 5.8 L35.25 5.6 L36.00 4.7 L36.75 4.3 L37.50 4.1 L38.25 4.0 L39.00 4.0 L39.75 4.1 L40.50 4.4 L41.25 4.9 L42.00 5.8 L42.75 5.8 L43.50 5.8 L44.25 5.5 L45.00 5.0 L45.75 4.7 L46.50 4.5 L47.25 4.5 L48.00 4.5 L48.75 4.7 L49.50 4.9 L50.25 5.4 L51.00 5.8 L51.75 5.8 L52.50 5.8 L53.25 5.1 L54.00 4.6 L54.75 4.3 L55.50 4.2 L56.25 4.1 L57.00 4.2 L57.75 4.4 L58.50 4.8 L59.25 5.5 L60.00 5.8 L60.75 5.8 L61.50 5.8 L62.25 4.7 L63.00 4.3 L63.75 4.0 L64.50 3.9 L65.25 3.9 L66.00 4.0 L66.75 4.3 L67.50 4.8 L68.25 6.0 L69.00 5.8 L69.75 5.8 L69.75 6.8 L69.00 6.8 L68.25 6.6 L67.50 7.9 L66.75 8.4 L66.00 8.7 L65.25 8.8 L64.50 8.8 L63.75 8.7 L63.00 8.4 L62.25 7.9 L61.50 6.9 L60.75 6.8 L60.00 6.8 L59.25 7.1 L58.50 7.9 L57.75 8.2 L57.00 8.4 L56.25 8.5 L55.50 8.5 L54.75 8.3 L54.00 8.1 L53.25 7.6 L52.50 6.8 L51.75 6.8 L51.00 6.8 L50.25 7.3 L49.50 7.7 L48.75 8.0 L48.00 8.1 L47.25 8.2 L46.50 8.1 L45.75 8.0 L45.00 7.7 L44.25 7.2 L43.50 6.8 L42.75 6.8 L42.00 6.8 L41.25 7.7 L40.50 8.2 L39.75 8.5 L39.00 8.7 L38.25 8.7 L37.50 8.6 L36.75 8.3 L36.00 7.9 L35.25 7.0 L34.50 6.8 L33.75 6.8 L33.00 7.0 L32.25 7.8 L31.50 8.2 L30.75 8.4 L30.00 8.5 L29.25 8.5 L28.50 8.4 L27.75 8.1 L27.00 7.6 L26.25 6.8 L25.50 6.8 L24.75 6.8 L24.00 7.5 L23.25 8.2 L22.50 8.6 L21.75 8.8 L21.00 8.9 L20.25 8.8 L19.50 8.6 L18.75 8.2 L18.00 7.6 L17.25 6.8 L16.50 6.8 L15.75 6.8 L15.00 7.5 L14.25 7.9 L13.50 8.2 L12.75 8.3 L12.00 8.4 L11.25 8.3 L10.50 8.1 L9.75 7.7 L9.00 7.1 L8.25 6.8 L7.50 6.8 L6.75 6.8 L6.00 7.6 L5.25 8.0 L4.50 8.2 L3.75 8.3 L3.00 8.3 L2.25 8.2 L1.50 7.9 L0.75 7.5 L0.00 6.8Z" fill="#1a80e6" stroke="#0b3470" stroke-width="0.6"/><path d="M0.00 16.3 L0.75 15.3 L1.50 14.9 L2.25 14.6 L3.00 14.5 L3.75 14.5 L4.50 14.6 L5.25 14.8 L6.00 15.3 L6.75 16.2 L7.50 16.3 L8.25 16.3 L9.00 15.9 L9.75 15.1 L10.50 14.6 L11.25 14.4 L12.00 14.3 L12.75 14.3 L13.50 14.5 L14.25 14.8 L15.00 15.4 L15.75 16.3 L16.50 16.3 L17.25 16.3 L18.00 15.8 L18.75 15.3 L19.50 15.0 L20.25 14.8 L21.00 14.7 L21.75 14.8 L22.50 15.0 L23.25 15.3 L24.00 15.8 L24.75 16.3 L25.50 16.3 L26.25 16.3 L27.00 15.4 L27.75 14.9 L28.50 14.6 L29.25 14.5 L30.00 14.4 L30.75 14.5 L31.50 14.8 L32.25 15.2 L33.00 16.0 L33.75 16.3 L34.50 16.3 L35.25 16.0 L36.00 15.1 L36.75 14.6 L37.50 14.4 L38.25 14.2 L39.00 14.3 L39.75 14.4 L40.50 14.7 L41.25 15.3 L42.00 16.3 L42.75 16.3 L43.50 16.3 L44.25 15.6 L45.00 14.9 L45.75 14.5 L46.50 14.3 L47.25 14.2 L48.00 14.3 L48.75 14.5 L49.50 14.9 L50.25 15.5 L51.00 16.3 L51.75 16.3 L52.50 16.3 L53.25 15.7 L54.00 15.2 L54.75 15.0 L55.50 14.9 L56.25 14.8 L57.00 14.9 L57.75 15.1 L58.50 15.4 L59.25 16.0 L60.00 16.3 L60.75 16.3 L61.50 16.3 L62.25 15.3 L63.00 14.8 L63.75 14.6 L64.50 14.5 L65.25 14.5 L66.00 14.6 L66.75 14.9 L67.50 15.3 L68.25 16.5 L69.00 16.3 L69.75 16.3 L69.75 17.3 L69.00 17.3 L68.25 17.1 L67.50 18.2 L66.75 18.7 L66.00 18.9 L65.25 19.1 L64.50 19.1 L63.75 18.9 L63.00 18.7 L62.25 18.2 L61.50 17.3 L60.75 17.3 L60.00 17.3 L59.25 17.5 L58.50 18.1 L57.75 18.4 L57.00 18.6 L56.25 18.7 L55.50 18.7 L54.75 18.5 L54.00 18.3 L53.25 17.8 L52.50 17.3 L51.75 17.3 L51.00 17.3 L50.25 18.0 L49.50 18.7 L48.75 19.0 L48.00 19.2 L47.25 19.3 L46.50 19.2 L45.75 19.0 L45.00 18.6 L44.25 17.9 L43.50 17.3 L42.75 17.3 L42.00 17.3 L41.25 18.3 L40.50 18.8 L39.75 19.1 L39.00 19.3 L38.25 19.3 L37.50 19.2 L36.75 18.9 L36.00 18.4 L35.25 17.5 L34.50 17.3 L33.75 17.3 L33.00 17.5 L32.25 18.3 L31.50 18.7 L30.75 19.0 L30.00 19.1 L29.25 19.1 L28.50 18.9 L27.75 18.6 L27.00 18.1 L26.25 17.3 L25.50 17.3 L24.75 17.3 L24.00 17.7 L23.25 18.2 L22.50 18.5 L21.75 18.7 L21.00 18.8 L20.25 18.7 L19.50 18.6 L18.75 18.3 L18.00 17.7 L17.25 17.3 L16.50 17.3 L15.75 17.3 L15.00 18.1 L14.25 18.7 L13.50 19.0 L12.75 19.2 L12.00 19.2 L11.25 19.1 L10.50 18.9 L9.75 18.4 L9.00 17.6 L8.25 17.3 L7.50 17.3 L6.75 17.3 L6.00 18.2 L5.25 18.7 L4.50 18.9 L3.75 19.1 L3.00 19.0 L2.25 18.9 L1.50 18.6 L0.75 18.2 L0.00 17.3Z" fill="#1a80e6" stroke="#0b3470" stroke-width="0.6"/></svg>
</div>
<div class="a" style="left:590.50px;top:207.80px;width:140.40px;height:22.20px;background:#8fc7fb;overflow:hidden">
<svg class="a" style="left:0;top:0" width="140.40" height="22.20"><rect x="-0.50" y="0" width="1" height="22.20" fill="#86bdf0"/><rect x="17.05" y="0" width="1" height="22.20" fill="#86bdf0"/><rect x="34.60" y="0" width="1" height="22.20" fill="#86bdf0"/><rect x="52.15" y="0" width="1" height="22.20" fill="#86bdf0"/><rect x="69.70" y="0" width="1" height="22.20" fill="#86bdf0"/><rect x="87.25" y="0" width="1" height="22.20" fill="#86bdf0"/><rect x="104.80" y="0" width="1" height="22.20" fill="#86bdf0"/><rect x="122.35" y="0" width="1" height="22.20" fill="#86bdf0"/><path d="M0.00 5.8 L0.75 5.1 L1.50 4.7 L2.25 4.5 L3.00 4.4 L3.75 4.4 L4.50 4.5 L5.25 4.7 L6.00 5.1 L6.75 5.8 L7.50 5.8 L8.25 5.8 L9.00 5.6 L9.75 5.0 L10.50 4.7 L11.25 4.5 L12.00 4.4 L12.75 4.4 L13.50 4.6 L14.25 4.8 L15.00 5.2 L15.75 5.8 L16.50 5.8 L17.25 5.8 L18.00 5.1 L18.75 4.4 L19.50 4.1 L20.25 3.8 L21.00 3.8 L21.75 3.9 L22.50 4.1 L23.25 4.5 L24.00 5.2 L24.75 5.8 L25.50 5.8 L26.25 5.8 L27.00 5.0 L27.75 4.5 L28.50 4.2 L29.25 4.1 L30.00 4.1 L30.75 4.2 L31.50 4.4 L32.25 4.8 L33.00 5.6 L33.75 5.8 L34.50 5.8 L35.25 5.6 L36.00 4.8 L36.75 4.3 L37.50 4.1 L38.25 4.0 L39.00 4.0 L39.75 4.1 L40.50 4.4 L41.25 4.9 L42.00 5.8 L42.75 5.8 L43.50 5.8 L44.25 5.3 L45.00 4.7 L45.75 4.3 L46.50 4.2 L47.25 4.1 L48.00 4.1 L48.75 4.3 L49.50 4.6 L50.25 5.2 L51.00 5.8 L51.75 5.8 L52.50 5.8 L53.25 5.2 L54.00 4.7 L54.75 4.4 L55.50 4.3 L56.25 4.2 L57.00 4.3 L57.75 4.5 L58.50 4.9 L59.25 5.5 L60.00 5.8 L60.75 5.8 L61.50 5.8 L62.25 4.8 L63.00 4.3 L63.75 4.1 L64.50 4.0 L65.25 4.0 L66.00 4.1 L66.75 4.4 L67.50 4.8 L68.25 6.0 L69.00 5.8 L69.75 5.8 L70.50 5.4 L71.25 4.7 L72.00 4.4 L72.75 4.1 L73.50 4.1 L74.25 4.1 L75.00 4.3 L75.75 4.6 L76.50 5.1 L77.25 5.8 L78.00 5.8 L78.75 5.8 L79.50 5.1 L80.25 4.5 L81.00 4.1 L81.75 3.9 L82.50 3.9 L83.25 4.0 L84.00 4.2 L84.75 4.6 L85.50 5.3 L86.25 5.8 L87.00 5.8 L87.75 5.8 L88.50 4.9 L89.25 4.4 L90.00 4.2 L90.75 4.0 L91.50 4.0 L92.25 4.1 L93.00 4.4 L93.75 4.8 L94.50 5.8 L95.25 5.8 L96.00 5.8 L96.75 5.4 L97.50 4.6 L98.25 4.2 L99.00 4.0 L99.75 3.9 L100.50 3.9 L101.25 4.1 L102.00 4.4 L102.75 4.9 L103.50 5.8 L104.25 5.8 L105.00 5.8 L105.75 5.3 L106.50 4.7 L107.25 4.4 L108.00 4.2 L108.75 4.2 L109.50 4.2 L110.25 4.4 L111.00 4.8 L111.75 5.3 L112.50 5.8 L113.25 5.8 L114.00 5.8 L114.75 5.2 L115.50 4.8 L116.25 4.6 L117.00 4.4 L117.75 4.4 L118.50 4.5 L119.25 4.7 L120.00 5.0 L120.75 5.7 L121.50 5.8 L122.25 5.8 L123.00 5.8 L123.75 5.1 L124.50 4.7 L125.25 4.5 L126.00 4.4 L126.75 4.4 L127.50 4.6 L128.25 4.8 L129.00 5.2 L129.75 5.8 L130.50 5.8 L131.25 5.8 L132.00 5.3 L132.75 4.6 L133.50 4.2 L134.25 4.0 L135.00 3.9 L135.75 4.0 L136.50 4.2 L137.25 4.5 L138.00 5.1 L138.75 5.8 L139.50 5.8 L140.25 5.8 L140.25 6.8 L139.50 6.8 L138.75 6.8 L138.00 7.5 L137.25 8.1 L136.50 8.5 L135.75 8.7 L135.00 8.7 L134.25 8.6 L133.50 8.4 L132.75 8.1 L132.00 7.4 L131.25 6.8 L130.50 6.8 L129.75 6.8 L129.00 7.5 L128.25 7.9 L127.50 8.1 L126.75 8.2 L126.00 8.2 L125.25 8.1 L124.50 7.9 L123.75 7.6 L123.00 6.9 L122.25 6.8 L121.50 6.8 L120.75 6.9 L120.00 7.6 L119.25 7.9 L118.50 8.1 L117.75 8.2 L117.00 8.2 L116.25 8.1 L115.50 7.9 L114.75 7.4 L114.00 6.8 L113.25 6.8 L112.50 6.8 L111.75 7.3 L111.00 7.9 L110.25 8.2 L109.50 8.4 L108.75 8.5 L108.00 8.4 L107.25 8.2 L106.50 7.9 L105.75 7.4 L105.00 6.8 L104.25 6.8 L103.50 6.8 L102.75 7.7 L102.00 8.3 L101.25 8.6 L100.50 8.8 L99.75 8.8 L99.00 8.7 L98.25 8.5 L97.50 8.0 L96.75 7.2 L96.00 6.8 L95.25 6.8 L94.50 6.9 L93.75 7.8 L93.00 8.3 L92.25 8.5 L91.50 8.6 L90.75 8.6 L90.00 8.5 L89.25 8.2 L88.50 7.8 L87.75 6.8 L87.00 6.8 L86.25 6.8 L85.50 7.3 L84.75 8.1 L84.00 8.5 L83.25 8.7 L82.50 8.8 L81.75 8.7 L81.00 8.5 L80.25 8.2 L79.50 7.6 L78.75 6.8 L78.00 6.8 L77.25 6.8 L76.50 7.5 L75.75 8.1 L75.00 8.4 L74.25 8.5 L73.50 8.6 L72.75 8.5 L72.00 8.3 L71.25 7.9 L70.50 7.3 L69.75 6.8 L69.00 6.8 L68.25 6.6 L67.50 7.8 L66.75 8.3 L66.00 8.6 L65.25 8.7 L64.50 8.7 L63.75 8.6 L63.00 8.3 L62.25 7.9 L61.50 6.9 L60.75 6.8 L60.00 6.8 L59.25 7.1 L58.50 7.8 L57.75 8.1 L57.00 8.3 L56.25 8.4 L55.50 8.4 L54.75 8.2 L54.00 8.0 L53.25 7.5 L52.50 6.8 L51.75 6.8 L51.00 6.8 L50.25 7.4 L49.50 8.0 L48.75 8.3 L48.00 8.5 L47.25 8.6 L46.50 8.5 L45.75 8.3 L45.00 8.0 L44.25 7.3 L43.50 6.8 L42.75 6.8 L42.00 6.8 L41.25 7.7 L40.50 8.2 L39.75 8.5 L39.00 8.7 L38.25 8.7 L37.50 8.6 L36.75 8.3 L36.00 7.9 L35.25 7.0 L34.50 6.8 L33.75 6.8 L33.00 7.0 L32.25 7.8 L31.50 8.2 L30.75 8.5 L30.00 8.6 L29.25 8.6 L28.50 8.4 L27.75 8.1 L27.00 7.7 L26.25 6.8 L25.50 6.8 L24.75 6.8 L24.00 7.5 L23.25 8.2 L22.50 8.6 L21.75 8.8 L21.00 8.9 L20.25 8.8 L19.50 8.6 L18.75 8.2 L18.00 7.6 L17.25 6.8 L16.50 6.8 L15.75 6.8 L15.00 7.4 L14.25 7.8 L13.50 8.1 L12.75 8.2 L12.00 8.2 L11.25 8.2 L10.50 8.0 L9.75 7.6 L9.00 7.0 L8.25 6.8 L7.50 6.8 L6.75 6.8 L6.00 7.6 L5.25 8.0 L4.50 8.2 L3.75 8.3 L3.00 8.3 L2.25 8.2 L1.50 7.9 L0.75 7.5 L0.00 6.8Z" fill="#1a80e6" stroke="#0b3470" stroke-width="0.6"/><path d="M0.00 16.3 L0.75 15.7 L1.50 15.3 L2.25 15.1 L3.00 15.0 L3.75 15.0 L4.50 15.1 L5.25 15.3 L6.00 15.6 L6.75 16.3 L7.50 16.3 L8.25 16.3 L9.00 16.0 L9.75 15.4 L10.50 15.0 L11.25 14.8 L12.00 14.8 L12.75 14.8 L13.50 14.9 L14.25 15.2 L15.00 15.6 L15.75 16.3 L16.50 16.3 L17.25 16.3 L18.00 15.8 L18.75 15.3 L19.50 15.0 L20.25 14.8 L21.00 14.8 L21.75 14.9 L22.50 15.0 L23.25 15.3 L24.00 15.9 L24.75 16.3 L25.50 16.3 L26.25 16.3 L27.00 15.4 L27.75 14.8 L28.50 14.5 L29.25 14.4 L30.00 14.4 L30.75 14.5 L31.50 14.7 L32.25 15.2 L33.00 16.0 L33.75 16.3 L34.50 16.3 L35.25 16.1 L36.00 15.2 L36.75 14.8 L37.50 14.5 L38.25 14.4 L39.00 14.4 L39.75 14.6 L40.50 14.9 L41.25 15.4 L42.00 16.3 L42.75 16.3 L43.50 16.3 L44.25 15.6 L45.00 14.9 L45.75 14.5 L46.50 14.3 L47.25 14.2 L48.00 14.3 L48.75 14.5 L49.50 14.9 L50.25 15.5 L51.00 16.3 L51.75 16.3 L52.50 16.3 L53.25 15.7 L54.00 15.3 L54.75 15.1 L55.50 14.9 L56.25 14.9 L57.00 15.0 L57.75 15.2 L58.50 15.5 L59.25 16.1 L60.00 16.3 L60.75 16.3 L61.50 16.3 L62.25 15.4 L63.00 15.0 L63.75 14.8 L64.50 14.6 L65.25 14.6 L66.00 14.8 L66.75 15.0 L67.50 15.4 L68.25 16.5 L69.00 16.3 L69.75 16.3 L70.50 16.0 L71.25 15.5 L72.00 15.2 L72.75 15.0 L73.50 15.0 L74.25 15.0 L75.00 15.1 L75.75 15.4 L76.50 15.8 L77.25 16.3 L78.00 16.3 L78.75 16.3 L79.50 15.7 L80.25 15.3 L81.00 15.0 L81.75 14.8 L82.50 14.8 L83.25 14.9 L84.00 15.0 L84.75 15.4 L85.50 15.9 L86.25 16.3 L87.00 16.3 L87.75 16.3 L88.50 15.4 L89.25 15.0 L90.00 14.7 L90.75 14.6 L91.50 14.6 L92.25 14.7 L93.00 14.9 L93.75 15.3 L94.50 16.2 L95.25 16.3 L96.00 16.3 L96.75 16.1 L97.50 15.5 L98.25 15.2 L99.00 15.0 L99.75 15.0 L100.50 15.0 L101.25 15.1 L102.00 15.3 L102.75 15.7 L103.50 16.3 L104.25 16.3 L105.00 16.3 L105.75 15.8 L106.50 15.3 L107.25 15.0 L108.00 14.9 L108.75 14.8 L109.50 14.9 L110.25 15.0 L111.00 15.3 L111.75 15.9 L112.50 16.3 L113.25 16.3 L114.00 16.3 L114.75 15.4 L115.50 14.9 L116.25 14.6 L117.00 14.5 L117.75 14.4 L118.50 14.6 L119.25 14.8 L120.00 15.2 L120.75 16.0 L121.50 16.3 L122.25 16.3 L123.00 16.1 L123.75 15.3 L124.50 14.9 L125.25 14.6 L126.00 14.5 L126.75 14.6 L127.50 14.7 L128.25 15.0 L129.00 15.4 L129.75 16.3 L130.50 16.3 L131.25 16.3 L132.00 15.9 L132.75 15.3 L133.50 15.0 L134.25 14.9 L135.00 14.8 L135.75 14.8 L136.50 15.0 L137.25 15.3 L138.00 15.8 L138.75 16.3 L139.50 16.3 L140.25 16.3 L140.25 17.3 L139.50 17.3 L138.75 17.3 L138.00 17.7 L137.25 18.2 L136.50 18.5 L135.75 18.7 L135.00 18.7 L134.25 18.7 L133.50 18.5 L132.75 18.2 L132.00 17.6 L131.25 17.3 L130.50 17.3 L129.75 17.3 L129.00 18.1 L128.25 18.6 L127.50 18.8 L126.75 19.0 L126.00 19.0 L125.25 18.9 L124.50 18.6 L123.75 18.2 L123.00 17.4 L122.25 17.3 L121.50 17.3 L120.75 17.5 L120.00 18.3 L119.25 18.7 L118.50 19.0 L117.75 19.1 L117.00 19.1 L116.25 18.9 L115.50 18.6 L114.75 18.1 L114.00 17.3 L113.25 17.3 L112.50 17.3 L111.75 17.7 L111.00 18.2 L110.25 18.5 L109.50 18.7 L108.75 18.7 L108.00 18.7 L107.25 18.5 L106.50 18.2 L105.75 17.7 L105.00 17.3 L104.25 17.3 L103.50 17.3 L102.75 17.8 L102.00 18.2 L101.25 18.4 L100.50 18.5 L99.75 18.6 L99.00 18.5 L98.25 18.3 L97.50 18.0 L96.75 17.4 L96.00 17.3 L95.25 17.3 L94.50 17.3 L93.75 18.2 L93.00 18.6 L92.25 18.8 L91.50 19.0 L90.75 18.9 L90.00 18.8 L89.25 18.6 L88.50 18.1 L87.75 17.3 L87.00 17.3 L86.25 17.3 L85.50 17.6 L84.75 18.2 L84.00 18.5 L83.25 18.7 L82.50 18.7 L81.75 18.7 L81.00 18.5 L80.25 18.3 L79.50 17.8 L78.75 17.3 L78.00 17.3 L77.25 17.3 L76.50 17.7 L75.75 18.2 L75.00 18.4 L74.25 18.5 L73.50 18.6 L72.75 18.5 L72.00 18.3 L71.25 18.0 L70.50 17.5 L69.75 17.3 L69.00 17.3 L68.25 17.1 L67.50 18.1 L66.75 18.5 L66.00 18.8 L65.25 18.9 L64.50 18.9 L63.75 18.8 L63.00 18.5 L62.25 18.1 L61.50 17.2 L60.75 17.3 L60.00 17.3 L59.25 17.5 L58.50 18.0 L57.75 18.4 L57.00 18.5 L56.25 18.6 L55.50 18.6 L54.75 18.5 L54.00 18.2 L53.25 17.8 L52.50 17.3 L51.75 17.3 L51.00 17.3 L50.25 18.0 L49.50 18.7 L48.75 19.0 L48.00 19.2 L47.25 19.3 L46.50 19.2 L45.75 19.0 L45.00 18.6 L44.25 17.9 L43.50 17.3 L42.75 17.3 L42.00 17.3 L41.25 18.2 L40.50 18.6 L39.75 18.9 L39.00 19.1 L38.25 19.1 L37.50 19.0 L36.75 18.7 L36.00 18.3 L35.25 17.5 L34.50 17.3 L33.75 17.3 L33.00 17.5 L32.25 18.4 L31.50 18.8 L30.75 19.0 L30.00 19.1 L29.25 19.1 L28.50 19.0 L27.75 18.7 L27.00 18.2 L26.25 17.3 L25.50 17.3 L24.75 17.3 L24.00 17.7 L23.25 18.2 L22.50 18.5 L21.75 18.7 L21.00 18.7 L20.25 18.7 L19.50 18.5 L18.75 18.2 L18.00 17.7 L17.25 17.3 L16.50 17.3 L15.75 17.3 L15.00 17.9 L14.25 18.3 L13.50 18.6 L12.75 18.7 L12.00 18.8 L11.25 18.7 L10.50 18.5 L9.75 18.1 L9.00 17.5 L8.25 17.3 L7.50 17.3 L6.75 17.2 L6.00 17.9 L5.25 18.3 L4.50 18.5 L3.75 18.6 L3.00 18.5 L2.25 18.4 L1.50 18.2 L0.75 17.9 L0.00 17.3Z" fill="#1a80e6" stroke="#0b3470" stroke-width="0.6"/></svg>
</div>
<div class="a" style="left:941.50px;top:207.80px;width:70.00px;height:22.20px;background:#8fc7fb;overflow:hidden">
<svg class="a" style="left:0;top:0" width="70.00" height="22.20"><rect x="-0.50" y="0" width="1" height="22.20" fill="#86bdf0"/><rect x="17.05" y="0" width="1" height="22.20" fill="#86bdf0"/><rect x="34.60" y="0" width="1" height="22.20" fill="#86bdf0"/><rect x="52.15" y="0" width="1" height="22.20" fill="#86bdf0"/><path d="M0.00 6.0 L0.75 4.9 L1.50 4.4 L2.25 4.2 L3.00 4.0 L3.75 4.0 L4.50 4.1 L5.25 4.4 L6.00 4.8 L6.75 5.8 L7.50 5.8 L8.25 5.8 L9.00 5.7 L9.75 5.1 L10.50 4.8 L11.25 4.6 L12.00 4.5 L12.75 4.6 L13.50 4.7 L14.25 4.9 L15.00 5.3 L15.75 5.8 L16.50 5.8 L17.25 5.8 L18.00 5.3 L18.75 4.8 L19.50 4.5 L20.25 4.4 L21.00 4.3 L21.75 4.4 L22.50 4.5 L23.25 4.9 L24.00 5.4 L24.75 5.8 L25.50 5.8 L26.25 5.8 L27.00 5.2 L27.75 4.8 L28.50 4.5 L29.25 4.4 L30.00 4.4 L30.75 4.5 L31.50 4.7 L32.25 5.0 L33.00 5.7 L33.75 5.8 L34.50 5.8 L35.25 5.6 L36.00 4.7 L36.75 4.3 L37.50 4.1 L38.25 3.9 L39.00 4.0 L39.75 4.1 L40.50 4.4 L41.25 4.9 L42.00 5.8 L42.75 5.8 L43.50 5.8 L44.25 5.3 L45.00 4.6 L45.75 4.3 L46.50 4.1 L47.25 4.0 L48.00 4.0 L48.75 4.2 L49.50 4.6 L50.25 5.2 L51.00 5.8 L51.75 5.8 L52.50 5.8 L53.25 4.9 L54.00 4.4 L54.75 4.0 L55.50 3.8 L56.25 3.8 L57.00 3.9 L57.75 4.2 L58.50 4.6 L59.25 5.4 L60.00 5.8 L60.75 5.8 L61.50 5.9 L62.25 5.1 L63.00 4.8 L63.75 4.6 L64.50 4.5 L65.25 4.5 L66.00 4.6 L66.75 4.8 L67.50 5.2 L68.25 6.0 L69.00 5.8 L69.75 5.8 L69.75 6.8 L69.00 6.8 L68.25 6.6 L67.50 7.5 L66.75 7.8 L66.00 8.1 L65.25 8.2 L64.50 8.2 L63.75 8.1 L63.00 7.9 L62.25 7.5 L61.50 6.7 L60.75 6.8 L60.00 6.8 L59.25 7.3 L58.50 8.1 L57.75 8.5 L57.00 8.7 L56.25 8.8 L55.50 8.8 L54.75 8.6 L54.00 8.3 L53.25 7.7 L52.50 6.8 L51.75 6.8 L51.00 6.8 L50.25 7.5 L49.50 8.1 L48.75 8.4 L48.00 8.6 L47.25 8.7 L46.50 8.6 L45.75 8.4 L45.00 8.0 L44.25 7.4 L43.50 6.8 L42.75 6.8 L42.00 6.8 L41.25 7.7 L40.50 8.3 L39.75 8.5 L39.00 8.7 L38.25 8.7 L37.50 8.6 L36.75 8.3 L36.00 7.9 L35.25 7.0 L34.50 6.8 L33.75 6.8 L33.00 7.0 L32.25 7.6 L31.50 8.0 L30.75 8.2 L30.00 8.3 L29.25 8.3 L28.50 8.1 L27.75 7.9 L27.00 7.5 L26.25 6.8 L25.50 6.8 L24.75 6.8 L24.00 7.3 L23.25 7.8 L22.50 8.1 L21.75 8.3 L21.00 8.3 L20.25 8.3 L19.50 8.1 L18.75 7.8 L18.00 7.3 L17.25 6.8 L16.50 6.8 L15.75 6.8 L15.00 7.3 L14.25 7.7 L13.50 8.0 L12.75 8.1 L12.00 8.1 L11.25 8.1 L10.50 7.9 L9.75 7.6 L9.00 7.0 L8.25 6.8 L7.50 6.8 L6.75 6.9 L6.00 7.8 L5.25 8.3 L4.50 8.5 L3.75 8.6 L3.00 8.6 L2.25 8.5 L1.50 8.2 L0.75 7.7 L0.00 6.6Z" fill="#1a80e6" stroke="#0b3470" stroke-width="0.6"/><path d="M0.00 16.5 L0.75 15.6 L1.50 15.3 L2.25 15.1 L3.00 15.0 L3.75 15.0 L4.50 15.0 L5.25 15.2 L6.00 15.6 L6.75 16.3 L7.50 16.3 L8.25 16.3 L9.00 15.9 L9.75 15.1 L10.50 14.7 L11.25 14.5 L12.00 14.4 L12.75 14.4 L13.50 14.6 L14.25 14.9 L15.00 15.4 L15.75 16.3 L16.50 16.3 L17.25 16.3 L18.00 15.8 L18.75 15.3 L19.50 15.1 L20.25 14.9 L21.00 14.9 L21.75 14.9 L22.50 15.1 L23.25 15.4 L24.00 15.9 L24.75 16.3 L25.50 16.3 L26.25 16.3 L27.00 15.5 L27.75 15.0 L28.50 14.8 L29.25 14.6 L30.00 14.6 L30.75 14.7 L31.50 14.9 L32.25 15.3 L33.00 16.1 L33.75 16.3 L34.50 16.3 L35.25 16.1 L36.00 15.2 L36.75 14.8 L37.50 14.5 L38.25 14.4 L39.00 14.4 L39.75 14.6 L40.50 14.9 L41.25 15.4 L42.00 16.3 L42.75 16.3 L43.50 16.3 L44.25 15.7 L45.00 15.0 L45.75 14.6 L46.50 14.4 L47.25 14.3 L48.00 14.4 L48.75 14.6 L49.50 14.9 L50.25 15.5 L51.00 16.3 L51.75 16.3 L52.50 16.3 L53.25 15.6 L54.00 15.1 L54.75 14.8 L55.50 14.6 L56.25 14.6 L57.00 14.7 L57.75 14.9 L58.50 15.3 L59.25 16.0 L60.00 16.3 L60.75 16.3 L61.50 16.3 L62.25 15.4 L63.00 14.9 L63.75 14.7 L64.50 14.6 L65.25 14.6 L66.00 14.7 L66.75 15.0 L67.50 15.4 L68.25 16.5 L69.00 16.3 L69.75 16.3 L69.75 17.3 L69.00 17.3 L68.25 17.1 L67.50 18.1 L66.75 18.6 L66.00 18.8 L65.25 18.9 L64.50 18.9 L63.75 18.8 L63.00 18.6 L62.25 18.2 L61.50 17.2 L60.75 17.3 L60.00 17.3 L59.25 17.6 L58.50 18.3 L57.75 18.6 L57.00 18.8 L56.25 18.9 L55.50 18.9 L54.75 18.7 L54.00 18.5 L53.25 18.0 L52.50 17.3 L51.75 17.3 L51.00 17.3 L50.25 18.0 L49.50 18.6 L48.75 19.0 L48.00 19.1 L47.25 19.2 L46.50 19.1 L45.75 18.9 L45.00 18.5 L44.25 17.9 L43.50 17.3 L42.75 17.3 L42.00 17.3 L41.25 18.1 L40.50 18.6 L39.75 18.9 L39.00 19.1 L38.25 19.1 L37.50 19.0 L36.75 18.7 L36.00 18.3 L35.25 17.5 L34.50 17.3 L33.75 17.3 L33.00 17.4 L32.25 18.2 L31.50 18.6 L30.75 18.8 L30.00 18.9 L29.25 18.9 L28.50 18.8 L27.75 18.5 L27.00 18.0 L26.25 17.3 L25.50 17.3 L24.75 17.3 L24.00 17.6 L23.25 18.2 L22.50 18.4 L21.75 18.6 L21.00 18.7 L20.25 18.6 L19.50 18.5 L18.75 18.2 L18.00 17.7 L17.25 17.3 L16.50 17.3 L15.75 17.3 L15.00 18.1 L14.25 18.6 L13.50 18.9 L12.75 19.1 L12.00 19.1 L11.25 19.0 L10.50 18.8 L9.75 18.4 L9.00 17.6 L8.25 17.3 L7.50 17.3 L6.75 17.2 L6.00 17.9 L5.25 18.3 L4.50 18.5 L3.75 18.6 L3.00 18.6 L2.25 18.5 L1.50 18.2 L0.75 17.9 L0.00 17.1Z" fill="#1a80e6" stroke="#0b3470" stroke-width="0.6"/></svg>
</div>
<div class="a" style="left:836.20px;top:232.40px;width:35.10px;height:22.20px;background:#8fc7fb;overflow:hidden">
<svg class="a" style="left:0;top:0" width="35.10" height="22.20"><rect x="17.05" y="0" width="1" height="22.20" fill="#86bdf0"/><path d="M0.00 6.0 L0.75 5.1 L1.50 4.7 L2.25 4.5 L3.00 4.4 L3.75 4.4 L4.50 4.5 L5.25 4.7 L6.00 5.0 L6.75 5.8 L7.50 5.8 L8.25 5.8 L9.00 5.5 L9.75 4.8 L10.50 4.4 L11.25 4.2 L12.00 4.1 L12.75 4.2 L13.50 4.3 L14.25 4.6 L15.00 5.1 L15.75 5.8 L16.50 5.8 L17.25 5.8 L18.00 5.4 L18.75 4.9 L19.50 4.6 L20.25 4.5 L21.00 4.4 L21.75 4.5 L22.50 4.6 L23.25 4.9 L24.00 5.4 L24.75 5.8 L25.50 5.8 L26.25 5.8 L27.00 4.9 L27.75 4.4 L28.50 4.0 L29.25 3.9 L30.00 3.9 L30.75 4.0 L31.50 4.2 L32.25 4.7 L33.00 5.5 L33.75 5.8 L34.50 5.8 L34.50 6.8 L33.75 6.8 L33.00 7.1 L32.25 8.0 L31.50 8.4 L30.75 8.7 L30.00 8.8 L29.25 8.8 L28.50 8.6 L27.75 8.3 L27.00 7.8 L26.25 6.8 L25.50 6.8 L24.75 6.8 L24.00 7.2 L23.25 7.7 L22.50 8.0 L21.75 8.2 L21.00 8.2 L20.25 8.2 L19.50 8.0 L18.75 7.8 L18.00 7.3 L17.25 6.8 L16.50 6.8 L15.75 6.8 L15.00 7.6 L14.25 8.1 L13.50 8.3 L12.75 8.5 L12.00 8.5 L11.25 8.4 L10.50 8.2 L9.75 7.8 L9.00 7.1 L8.25 6.8 L7.50 6.8 L6.75 6.8 L6.00 7.6 L5.25 8.0 L4.50 8.2 L3.75 8.3 L3.00 8.3 L2.25 8.2 L1.50 7.9 L0.75 7.5 L0.00 6.6Z" fill="#1a80e6" stroke="#0b3470" stroke-width="0.6"/><path d="M0.00 16.5 L0.75 15.2 L1.50 14.6 L2.25 14.3 L3.00 14.2 L3.75 14.2 L4.50 14.3 L5.25 14.6 L6.00 15.1 L6.75 16.1 L7.50 16.3 L8.25 16.3 L9.00 16.1 L9.75 15.5 L10.50 15.2 L11.25 15.0 L12.00 14.9 L12.75 15.0 L13.50 15.1 L14.25 15.3 L15.00 15.7 L15.75 16.3 L16.50 16.3 L17.25 16.3 L18.00 15.6 L18.75 15.0 L19.50 14.6 L20.25 14.4 L21.00 14.4 L21.75 14.4 L22.50 14.6 L23.25 15.0 L24.00 15.7 L24.75 16.3 L25.50 16.3 L26.25 16.3 L27.00 15.5 L27.75 15.0 L28.50 14.7 L29.25 14.6 L30.00 14.6 L30.75 14.7 L31.50 14.9 L32.25 15.3 L33.00 16.1 L33.75 16.3 L34.50 16.3 L34.50 17.3 L33.75 17.3 L33.00 17.5 L32.25 18.2 L31.50 18.6 L30.75 18.8 L30.00 18.9 L29.25 18.9 L28.50 18.8 L27.75 18.5 L27.00 18.0 L26.25 17.3 L25.50 17.3 L24.75 17.3 L24.00 17.9 L23.25 18.5 L22.50 18.9 L21.75 19.1 L21.00 19.1 L20.25 19.1 L19.50 18.9 L18.75 18.5 L18.00 17.9 L17.25 17.3 L16.50 17.3 L15.75 17.3 L15.00 17.8 L14.25 18.2 L13.50 18.4 L12.75 18.6 L12.00 18.6 L11.25 18.5 L10.50 18.3 L9.75 18.0 L9.00 17.4 L8.25 17.3 L7.50 17.3 L6.75 17.4 L6.00 18.4 L5.25 18.9 L4.50 19.2 L3.75 19.3 L3.00 19.3 L2.25 19.2 L1.50 18.9 L0.75 18.4 L0.00 17.1Z" fill="#1a80e6" stroke="#0b3470" stroke-width="0.6"/></svg>
</div>
<div class="a" style="left:590.50px;top:257.00px;width:140.40px;height:22.20px;background:#8fc7fb;overflow:hidden">
<svg class="a" style="left:0;top:0" width="140.40" height="22.20"><rect x="-0.50" y="0" width="1" height="22.20" fill="#86bdf0"/><rect x="17.05" y="0" width="1" height="22.20" fill="#86bdf0"/><rect x="34.60" y="0" width="1" height="22.20" fill="#86bdf0"/><rect x="52.15" y="0" width="1" height="22.20" fill="#86bdf0"/><rect x="69.70" y="0" width="1" height="22.20" fill="#86bdf0"/><rect x="87.25" y="0" width="1" height="22.20" fill="#86bdf0"/><rect x="104.80" y="0" width="1" height="22.20" fill="#86bdf0"/><rect x="122.35" y="0" width="1" height="22.20" fill="#86bdf0"/><path d="M0.00 5.4 L0.75 5.3 L1.50 5.3 L2.25 5.6 L3.00 5.6 L3.75 5.3 L4.50 5.0 L5.25 4.9 L6.00 4.9 L6.75 5.1 L7.50 5.3 L8.25 5.2 L9.00 4.9 L9.75 4.8 L10.50 4.9 L11.25 5.2 L12.00 5.5 L12.75 5.7 L13.50 5.5 L14.25 5.4 L15.00 5.3 L15.75 5.3 L16.50 5.7 L17.25 5.7 L18.00 5.7 L18.75 5.4 L19.50 5.1 L20.25 5.2 L21.00 5.1 L21.75 5.4 L22.50 5.3 L23.25 5.2 L24.00 5.0 L24.75 4.8 L25.50 5.0 L26.25 5.2 L27.00 5.3 L27.75 5.2 L28.50 5.2 L29.25 5.2 L30.00 5.2 L30.75 5.6 L31.50 5.8 L32.25 5.8 L33.00 5.6 L33.75 5.5 L34.50 5.3 L35.25 5.4 L36.00 5.6 L36.75 5.6 L37.50 5.4 L38.25 5.2 L39.00 4.8 L39.75 4.8 L40.50 5.0 L41.25 5.2 L42.00 5.1 L42.75 5.1 L43.50 4.9 L44.25 4.9 L45.00 5.0 L45.75 5.5 L46.50 5.6 L47.25 5.5 L48.00 5.3 L48.75 5.3 L49.50 5.4 L50.25 5.6 L51.00 5.8 L51.75 5.7 L52.50 5.5 L53.25 5.1 L54.00 5.0 L54.75 5.2 L55.50 5.4 L56.25 5.3 L57.00 5.1 L57.75 4.9 L58.50 4.7 L59.25 4.9 L60.00 5.2 L60.75 5.4 L61.50 5.3 L62.25 5.3 L63.00 5.0 L63.75 5.1 L64.50 5.4 L65.25 5.8 L66.00 5.8 L66.75 5.7 L67.50 5.4 L68.25 5.4 L69.00 5.4 L69.75 5.6 L70.50 5.6 L71.25 5.5 L72.00 5.1 L72.75 4.8 L73.50 4.8 L74.25 5.0 L75.00 5.1 L75.75 5.2 L76.50 5.1 L77.25 5.0 L78.00 5.0 L78.75 5.1 L79.50 5.4 L80.25 5.5 L81.00 5.6 L81.75 5.5 L82.50 5.3 L83.25 5.4 L84.00 5.7 L84.75 5.8 L85.50 5.8 L86.25 5.4 L87.00 5.1 L87.75 5.0 L88.50 5.2 L89.25 5.2 L90.00 5.4 L90.75 5.2 L91.50 5.0 L92.25 4.6 L93.00 4.8 L93.75 5.0 L94.50 5.2 L95.25 5.3 L96.00 5.2 L96.75 5.0 L97.50 5.0 L98.25 5.5 L99.00 5.6 L99.75 5.8 L100.50 5.7 L101.25 5.4 L102.00 5.2 L102.75 5.4 L103.50 5.6 L104.25 5.6 L105.00 5.6 L105.75 5.1 L106.50 5.0 L107.25 4.8 L108.00 5.0 L108.75 5.2 L109.50 5.3 L110.25 5.0 L111.00 4.9 L111.75 4.9 L112.50 5.0 L113.25 5.3 L114.00 5.6 L114.75 5.6 L115.50 5.5 L116.25 5.2 L117.00 5.4 L117.75 5.5 L118.50 5.8 L119.25 5.8 L120.00 5.5 L120.75 5.3 L121.50 5.1 L122.25 5.3 L123.00 5.4 L123.75 5.3 L124.50 5.2 L125.25 5.0 L126.00 4.7 L126.75 4.7 L127.50 5.0 L128.25 5.4 L129.00 5.3 L129.75 5.3 L130.50 5.0 L131.25 5.1 L132.00 5.4 L132.75 5.6 L133.50 5.8 L134.25 5.7 L135.00 5.4 L135.75 5.4 L136.50 5.5 L137.25 5.6 L138.00 5.7 L138.75 5.5 L139.50 5.2 L140.25 5.0 L140.25 7.7 L139.50 7.5 L138.75 7.1 L138.00 7.0 L137.25 7.1 L136.50 7.2 L135.75 7.2 L135.00 7.3 L134.25 6.9 L133.50 6.9 L132.75 7.0 L132.00 7.3 L131.25 7.6 L130.50 7.7 L129.75 7.4 L129.00 7.3 L128.25 7.3 L127.50 7.7 L126.75 7.9 L126.00 8.0 L125.25 7.7 L124.50 7.5 L123.75 7.3 L123.00 7.3 L122.25 7.4 L121.50 7.5 L120.75 7.4 L120.00 7.1 L119.25 6.9 L118.50 6.9 L117.75 7.1 L117.00 7.2 L116.25 7.4 L115.50 7.2 L114.75 7.1 L114.00 7.0 L113.25 7.4 L112.50 7.6 L111.75 7.8 L111.00 7.8 L110.25 7.7 L109.50 7.4 L108.75 7.4 L108.00 7.6 L107.25 7.8 L106.50 7.7 L105.75 7.5 L105.00 7.1 L104.25 7.1 L103.50 7.1 L102.75 7.3 L102.00 7.4 L101.25 7.2 L100.50 6.9 L99.75 6.9 L99.00 7.0 L98.25 7.2 L97.50 7.6 L96.75 7.6 L96.00 7.4 L95.25 7.4 L94.50 7.5 L93.75 7.6 L93.00 7.9 L92.25 8.0 L91.50 7.7 L90.75 7.5 L90.00 7.3 L89.25 7.4 L88.50 7.5 L87.75 7.7 L87.00 7.5 L86.25 7.2 L85.50 6.9 L84.75 6.8 L84.00 7.0 L83.25 7.3 L82.50 7.4 L81.75 7.2 L81.00 7.1 L80.25 7.1 L79.50 7.2 L78.75 7.6 L78.00 7.7 L77.25 7.7 L76.50 7.5 L75.75 7.5 L75.00 7.5 L74.25 7.7 L73.50 7.8 L72.75 7.9 L72.00 7.5 L71.25 7.2 L70.50 7.0 L69.75 7.0 L69.00 7.3 L68.25 7.3 L67.50 7.2 L66.75 7.0 L66.00 6.9 L65.25 6.9 L64.50 7.2 L63.75 7.6 L63.00 7.7 L62.25 7.4 L61.50 7.3 L60.75 7.3 L60.00 7.5 L59.25 7.7 L58.50 7.9 L57.75 7.8 L57.00 7.6 L56.25 7.4 L55.50 7.3 L54.75 7.4 L54.00 7.6 L53.25 7.5 L52.50 7.2 L51.75 7.0 L51.00 6.9 L50.25 7.1 L49.50 7.2 L48.75 7.4 L48.00 7.3 L47.25 7.2 L46.50 7.1 L45.75 7.2 L45.00 7.6 L44.25 7.7 L43.50 7.7 L42.75 7.6 L42.00 7.6 L41.25 7.4 L40.50 7.6 L39.75 7.8 L39.00 7.9 L38.25 7.5 L37.50 7.2 L36.75 7.0 L36.00 7.1 L35.25 7.2 L34.50 7.4 L33.75 7.2 L33.00 7.1 L32.25 6.9 L31.50 6.9 L30.75 7.1 L30.00 7.4 L29.25 7.5 L28.50 7.5 L27.75 7.4 L27.00 7.4 L26.25 7.5 L25.50 7.6 L24.75 7.9 L24.00 7.7 L23.25 7.5 L22.50 7.3 L21.75 7.3 L21.00 7.5 L20.25 7.5 L19.50 7.5 L18.75 7.3 L18.00 7.0 L17.25 6.9 L16.50 7.0 L15.75 7.3 L15.00 7.3 L14.25 7.2 L13.50 7.1 L12.75 7.0 L12.00 7.2 L11.25 7.4 L10.50 7.8 L9.75 7.9 L9.00 7.8 L8.25 7.5 L7.50 7.4 L6.75 7.6 L6.00 7.8 L5.25 7.8 L4.50 7.6 L3.75 7.3 L3.00 7.1 L2.25 7.1 L1.50 7.3 L0.75 7.4 L0.00 7.3Z" fill="#1a80e6" stroke="#0b3470" stroke-width="0.6"/><path d="M0.00 15.7 L0.75 15.8 L1.50 15.7 L2.25 16.0 L3.00 16.0 L3.75 15.7 L4.50 15.5 L5.25 15.3 L6.00 15.4 L6.75 15.4 L7.50 15.5 L8.25 15.7 L9.00 15.5 L9.75 15.3 L10.50 15.3 L11.25 15.5 L12.00 15.9 L12.75 16.0 L13.50 16.0 L14.25 15.9 L15.00 15.8 L15.75 15.9 L16.50 16.1 L17.25 16.2 L18.00 16.1 L18.75 15.9 L19.50 15.6 L20.25 15.5 L21.00 15.5 L21.75 15.8 L22.50 15.8 L23.25 15.5 L24.00 15.2 L24.75 15.2 L25.50 15.4 L26.25 15.5 L27.00 15.8 L27.75 15.7 L28.50 15.7 L29.25 15.6 L30.00 15.7 L30.75 15.9 L31.50 16.1 L32.25 16.2 L33.00 16.0 L33.75 15.8 L34.50 15.7 L35.25 15.8 L36.00 16.0 L36.75 16.0 L37.50 15.8 L38.25 15.6 L39.00 15.3 L39.75 15.3 L40.50 15.4 L41.25 15.6 L42.00 15.7 L42.75 15.6 L43.50 15.2 L44.25 15.4 L45.00 15.5 L45.75 15.9 L46.50 16.0 L47.25 16.0 L48.00 15.8 L48.75 15.8 L49.50 15.9 L50.25 16.1 L51.00 16.3 L51.75 16.1 L52.50 15.8 L53.25 15.5 L54.00 15.4 L54.75 15.5 L55.50 15.7 L56.25 15.7 L57.00 15.6 L57.75 15.4 L58.50 15.0 L59.25 15.2 L60.00 15.6 L60.75 15.8 L61.50 15.8 L62.25 15.6 L63.00 15.6 L63.75 15.5 L64.50 16.0 L65.25 16.2 L66.00 16.2 L66.75 16.1 L67.50 15.9 L68.25 15.8 L69.00 15.8 L69.75 16.1 L70.50 16.1 L71.25 15.9 L72.00 15.6 L72.75 15.5 L73.50 15.2 L74.25 15.4 L75.00 15.6 L75.75 15.7 L76.50 15.5 L77.25 15.2 L78.00 15.3 L78.75 15.6 L79.50 15.7 L80.25 16.0 L81.00 16.0 L81.75 15.9 L82.50 15.6 L83.25 15.8 L84.00 16.0 L84.75 16.2 L85.50 16.2 L86.25 15.9 L87.00 15.6 L87.75 15.6 L88.50 15.6 L89.25 15.7 L90.00 15.9 L90.75 15.7 L91.50 15.3 L92.25 15.2 L93.00 15.4 L93.75 15.5 L94.50 15.6 L95.25 15.8 L96.00 15.6 L96.75 15.5 L97.50 15.6 L98.25 15.8 L99.00 16.1 L99.75 16.2 L100.50 16.0 L101.25 15.8 L102.00 15.7 L102.75 15.8 L103.50 15.9 L104.25 16.0 L105.00 15.9 L105.75 15.7 L106.50 15.4 L107.25 15.2 L108.00 15.5 L108.75 15.7 L109.50 15.6 L110.25 15.6 L111.00 15.2 L111.75 15.3 L112.50 15.4 L113.25 15.8 L114.00 15.9 L114.75 16.0 L115.50 15.8 L116.25 15.8 L117.00 15.8 L117.75 16.0 L118.50 16.2 L119.25 16.2 L120.00 16.0 L120.75 15.8 L121.50 15.5 L122.25 15.7 L123.00 15.8 L123.75 15.8 L124.50 15.6 L125.25 15.2 L126.00 15.1 L126.75 15.4 L127.50 15.4 L128.25 15.7 L129.00 15.6 L129.75 15.7 L130.50 15.5 L131.25 15.5 L132.00 15.8 L132.75 16.1 L133.50 16.2 L134.25 16.1 L135.00 15.9 L135.75 15.7 L136.50 15.7 L137.25 16.0 L138.00 16.1 L138.75 16.0 L139.50 15.8 L140.25 15.4 L140.25 18.1 L139.50 17.8 L138.75 17.5 L138.00 17.4 L137.25 17.5 L136.50 17.8 L135.75 17.8 L135.00 17.6 L134.25 17.4 L133.50 17.3 L132.75 17.4 L132.00 17.7 L131.25 18.0 L130.50 18.0 L129.75 17.9 L129.00 17.9 L128.25 17.8 L127.50 18.2 L126.75 18.2 L126.00 18.5 L125.25 18.3 L124.50 17.9 L123.75 17.8 L123.00 17.7 L122.25 17.8 L121.50 18.0 L120.75 17.8 L120.00 17.6 L119.25 17.3 L118.50 17.3 L117.75 17.5 L117.00 17.7 L116.25 17.7 L115.50 17.7 L114.75 17.5 L114.00 17.6 L113.25 17.7 L112.50 18.2 L111.75 18.2 L111.00 18.3 L110.25 18.0 L109.50 17.9 L108.75 17.8 L108.00 18.1 L107.25 18.3 L106.50 18.1 L105.75 17.8 L105.00 17.6 L104.25 17.5 L103.50 17.6 L102.75 17.8 L102.00 17.8 L101.25 17.7 L100.50 17.5 L99.75 17.3 L99.00 17.5 L98.25 17.7 L97.50 18.0 L96.75 18.0 L96.00 17.9 L95.25 17.7 L94.50 17.9 L93.75 18.1 L93.00 18.2 L92.25 18.3 L91.50 18.3 L90.75 17.8 L90.00 17.7 L89.25 17.8 L88.50 18.0 L87.75 17.9 L87.00 17.9 L86.25 17.6 L85.50 17.3 L84.75 17.3 L84.00 17.5 L83.25 17.7 L82.50 17.9 L81.75 17.6 L81.00 17.5 L80.25 17.5 L79.50 17.8 L78.75 18.0 L78.00 18.2 L77.25 18.4 L76.50 18.0 L75.75 17.8 L75.00 17.9 L74.25 18.1 L73.50 18.3 L72.75 18.1 L72.00 17.9 L71.25 17.7 L70.50 17.4 L69.75 17.5 L69.00 17.7 L68.25 17.7 L67.50 17.6 L66.75 17.4 L66.00 17.3 L65.25 17.4 L64.50 17.6 L63.75 18.0 L63.00 17.9 L62.25 18.0 L61.50 17.7 L60.75 17.7 L60.00 17.9 L59.25 18.4 L58.50 18.5 L57.75 18.1 L57.00 17.9 L56.25 17.8 L55.50 17.8 L54.75 18.0 L54.00 18.1 L53.25 18.0 L52.50 17.7 L51.75 17.4 L51.00 17.3 L50.25 17.5 L49.50 17.7 L48.75 17.7 L48.00 17.7 L47.25 17.5 L46.50 17.5 L45.75 17.6 L45.00 18.0 L44.25 18.1 L43.50 18.3 L42.75 17.9 L42.00 17.8 L41.25 17.9 L40.50 18.1 L39.75 18.2 L39.00 18.2 L38.25 18.0 L37.50 17.7 L36.75 17.5 L36.00 17.5 L35.25 17.8 L34.50 17.8 L33.75 17.7 L33.00 17.5 L32.25 17.4 L31.50 17.4 L30.75 17.6 L30.00 17.8 L29.25 17.9 L28.50 17.8 L27.75 17.8 L27.00 17.8 L26.25 18.0 L25.50 18.1 L24.75 18.3 L24.00 18.3 L23.25 18.0 L22.50 17.7 L21.75 17.7 L21.00 18.0 L20.25 18.0 L19.50 17.9 L18.75 17.7 L18.00 17.5 L17.25 17.3 L16.50 17.4 L15.75 17.7 L15.00 17.7 L14.25 17.7 L13.50 17.5 L12.75 17.5 L12.00 17.6 L11.25 18.0 L10.50 18.2 L9.75 18.2 L9.00 18.0 L8.25 17.8 L7.50 18.0 L6.75 18.1 L6.00 18.1 L5.25 18.3 L4.50 18.0 L3.75 17.8 L3.00 17.5 L2.25 17.5 L1.50 17.8 L0.75 17.7 L0.00 17.8Z" fill="#1a80e6" stroke="#0b3470" stroke-width="0.6"/></svg>
<div class="t" style="left:0;top:0.6px;padding:1.2px 3px 1.4px 2.6px;background:#8fc7fb;font-size:7px;font-weight:bold;color:#0b1626;transform:scaleX(0.86);transform-origin:0 0">Bass (034_Bassline_101bpm_G#2_-_TRVTW_Zen</div>
</div>
<div class="a" style="left:730.90px;top:257.00px;width:105.30px;height:22.20px;background:#8fc7fb;overflow:hidden">
<svg class="a" style="left:0;top:0" width="105.30" height="22.20"><rect x="17.05" y="0" width="1" height="22.20" fill="#86bdf0"/><rect x="34.60" y="0" width="1" height="22.20" fill="#86bdf0"/><rect x="52.15" y="0" width="1" height="22.20" fill="#86bdf0"/><rect x="69.70" y="0" width="1" height="22.20" fill="#86bdf0"/><rect x="87.25" y="0" width="1" height="22.20" fill="#86bdf0"/><rect x="104.80" y="0" width="1" height="22.20" fill="#86bdf0"/><path d="M0.00 4.8 L0.75 5.0 L1.50 4.9 L2.25 5.3 L3.00 5.2 L3.75 4.9 L4.50 4.9 L5.25 4.8 L6.00 5.1 L6.75 5.3 L7.50 5.5 L8.25 5.6 L9.00 5.4 L9.75 5.3 L10.50 5.4 L11.25 5.6 L12.00 5.8 L12.75 5.8 L13.50 5.6 L14.25 5.3 L15.00 5.2 L15.75 5.2 L16.50 5.3 L17.25 5.3 L18.00 5.1 L18.75 5.0 L19.50 4.8 L20.25 4.8 L21.00 4.9 L21.75 5.3 L22.50 5.3 L23.25 5.2 L24.00 5.0 L24.75 5.2 L25.50 5.4 L26.25 5.6 L27.00 5.8 L27.75 5.7 L28.50 5.5 L29.25 5.4 L30.00 5.5 L30.75 5.6 L31.50 5.6 L32.25 5.4 L33.00 5.1 L33.75 5.0 L34.50 4.9 L35.25 4.9 L36.00 5.2 L36.75 5.2 L37.50 5.0 L38.25 4.9 L39.00 4.8 L39.75 5.0 L40.50 5.2 L41.25 5.5 L42.00 5.6 L42.75 5.5 L43.50 5.2 L44.25 5.4 L45.00 5.6 L45.75 5.8 L46.50 5.8 L47.25 5.6 L48.00 5.2 L48.75 5.2 L49.50 5.2 L50.25 5.3 L51.00 5.4 L51.75 5.1 L52.50 4.8 L53.25 4.6 L54.00 4.7 L54.75 4.9 L55.50 5.2 L56.25 5.2 L57.00 5.2 L57.75 5.1 L58.50 5.0 L59.25 5.2 L60.00 5.7 L60.75 5.8 L61.50 5.7 L62.25 5.4 L63.00 5.4 L63.75 5.3 L64.50 5.6 L65.25 5.7 L66.00 5.5 L66.75 5.3 L67.50 5.1 L68.25 5.0 L69.00 5.0 L69.75 5.3 L70.50 5.3 L71.25 5.0 L72.00 4.9 L72.75 4.9 L73.50 4.9 L74.25 5.2 L75.00 5.5 L75.75 5.6 L76.50 5.4 L77.25 5.2 L78.00 5.3 L78.75 5.6 L79.50 5.7 L80.25 5.8 L81.00 5.6 L81.75 5.4 L82.50 5.1 L83.25 5.2 L84.00 5.4 L84.75 5.4 L85.50 5.3 L86.25 5.0 L87.00 4.8 L87.75 4.9 L88.50 4.9 L89.25 5.2 L90.00 5.4 L90.75 5.3 L91.50 5.0 L92.25 5.1 L93.00 5.3 L93.75 5.5 L94.50 5.7 L95.25 5.7 L96.00 5.5 L96.75 5.3 L97.50 5.4 L98.25 5.5 L99.00 5.6 L99.75 5.5 L100.50 5.2 L101.25 5.0 L102.00 4.8 L102.75 4.9 L103.50 5.1 L104.25 5.2 L105.00 5.0 L105.00 7.6 L104.25 7.5 L103.50 7.5 L102.75 7.7 L102.00 7.8 L101.25 7.7 L100.50 7.4 L99.75 7.1 L99.00 7.0 L98.25 7.1 L97.50 7.3 L96.75 7.3 L96.00 7.2 L95.25 6.9 L94.50 7.0 L93.75 7.1 L93.00 7.3 L92.25 7.6 L91.50 7.7 L90.75 7.4 L90.00 7.3 L89.25 7.5 L88.50 7.7 L87.75 7.7 L87.00 7.9 L86.25 7.7 L85.50 7.4 L84.75 7.2 L84.00 7.3 L83.25 7.5 L82.50 7.6 L81.75 7.3 L81.00 7.1 L80.25 6.8 L79.50 6.9 L78.75 7.1 L78.00 7.3 L77.25 7.5 L76.50 7.3 L75.75 7.1 L75.00 7.2 L74.25 7.4 L73.50 7.8 L72.75 7.7 L72.00 7.7 L71.25 7.6 L70.50 7.4 L69.75 7.4 L69.00 7.7 L68.25 7.6 L67.50 7.6 L66.75 7.4 L66.00 7.1 L65.25 7.0 L64.50 7.0 L63.75 7.3 L63.00 7.3 L62.25 7.2 L61.50 6.9 L60.75 6.9 L60.00 7.0 L59.25 7.4 L58.50 7.7 L57.75 7.5 L57.00 7.5 L56.25 7.4 L55.50 7.4 L54.75 7.7 L54.00 8.0 L53.25 8.1 L52.50 7.9 L51.75 7.5 L51.00 7.2 L50.25 7.3 L49.50 7.4 L48.75 7.4 L48.00 7.4 L47.25 7.1 L46.50 6.9 L45.75 6.8 L45.00 7.1 L44.25 7.2 L43.50 7.4 L42.75 7.2 L42.00 7.1 L41.25 7.1 L40.50 7.4 L39.75 7.6 L39.00 7.8 L38.25 7.8 L37.50 7.7 L36.75 7.4 L36.00 7.4 L35.25 7.7 L34.50 7.8 L33.75 7.7 L33.00 7.5 L32.25 7.2 L31.50 7.1 L30.75 7.1 L30.00 7.2 L29.25 7.3 L28.50 7.1 L27.75 7.0 L27.00 6.9 L26.25 7.0 L25.50 7.2 L24.75 7.5 L24.00 7.7 L23.25 7.5 L22.50 7.3 L21.75 7.3 L21.00 7.7 L20.25 7.8 L19.50 7.9 L18.75 7.7 L18.00 7.6 L17.25 7.3 L16.50 7.3 L15.75 7.5 L15.00 7.4 L14.25 7.4 L13.50 7.1 L12.75 6.9 L12.00 6.8 L11.25 7.1 L10.50 7.3 L9.75 7.4 L9.00 7.2 L8.25 7.1 L7.50 7.2 L6.75 7.4 L6.00 7.5 L5.25 7.8 L4.50 7.8 L3.75 7.7 L3.00 7.4 L2.25 7.4 L1.50 7.7 L0.75 7.7 L0.00 7.9Z" fill="#1a80e6" stroke="#0b3470" stroke-width="0.6"/><path d="M0.00 15.4 L0.75 15.4 L1.50 15.4 L2.25 15.6 L3.00 15.7 L3.75 15.4 L4.50 15.4 L5.25 15.4 L6.00 15.6 L6.75 15.8 L7.50 15.9 L8.25 15.9 L9.00 15.9 L9.75 15.6 L10.50 15.7 L11.25 16.1 L12.00 16.3 L12.75 16.2 L13.50 15.9 L14.25 15.6 L15.00 15.5 L15.75 15.6 L16.50 15.8 L17.25 15.8 L18.00 15.6 L18.75 15.3 L19.50 15.2 L20.25 15.3 L21.00 15.4 L21.75 15.8 L22.50 15.8 L23.25 15.6 L24.00 15.3 L24.75 15.6 L25.50 15.8 L26.25 16.0 L27.00 16.2 L27.75 16.0 L28.50 15.9 L29.25 15.8 L30.00 15.8 L30.75 16.0 L31.50 16.1 L32.25 16.0 L33.00 15.5 L33.75 15.3 L34.50 15.3 L35.25 15.4 L36.00 15.7 L36.75 15.7 L37.50 15.4 L38.25 15.2 L39.00 15.3 L39.75 15.4 L40.50 15.6 L41.25 16.0 L42.00 16.0 L42.75 15.8 L43.50 15.7 L44.25 15.8 L45.00 16.0 L45.75 16.3 L46.50 16.2 L47.25 16.0 L48.00 15.6 L48.75 15.7 L49.50 15.7 L50.25 15.8 L51.00 15.9 L51.75 15.7 L52.50 15.5 L53.25 15.2 L54.00 15.3 L54.75 15.4 L55.50 15.7 L56.25 15.8 L57.00 15.6 L57.75 15.5 L58.50 15.6 L59.25 15.7 L60.00 16.0 L60.75 16.3 L61.50 16.1 L62.25 15.9 L63.00 15.8 L63.75 15.7 L64.50 16.0 L65.25 16.0 L66.00 16.0 L66.75 15.7 L67.50 15.5 L68.25 15.3 L69.00 15.4 L69.75 15.7 L70.50 15.6 L71.25 15.5 L72.00 15.4 L72.75 15.1 L73.50 15.4 L74.25 15.6 L75.00 15.9 L75.75 16.0 L76.50 15.8 L77.25 15.7 L78.00 15.7 L78.75 16.0 L79.50 16.2 L80.25 16.2 L81.00 16.0 L81.75 15.7 L82.50 15.5 L83.25 15.7 L84.00 15.9 L84.75 15.9 L85.50 15.7 L86.25 15.5 L87.00 15.1 L87.75 15.2 L88.50 15.3 L89.25 15.8 L90.00 15.7 L90.75 15.7 L91.50 15.5 L92.25 15.5 L93.00 15.8 L93.75 16.0 L94.50 16.2 L95.25 16.1 L96.00 16.0 L96.75 15.7 L97.50 15.8 L98.25 16.0 L99.00 16.1 L99.75 16.0 L100.50 15.8 L101.25 15.6 L102.00 15.3 L102.75 15.4 L103.50 15.7 L104.25 15.7 L105.00 15.6 L105.00 18.0 L104.25 17.8 L103.50 17.8 L102.75 18.1 L102.00 18.3 L101.25 18.0 L100.50 17.7 L99.75 17.5 L99.00 17.4 L98.25 17.6 L97.50 17.7 L96.75 17.8 L96.00 17.5 L95.25 17.4 L94.50 17.3 L93.75 17.5 L93.00 17.8 L92.25 18.0 L91.50 18.0 L90.75 17.8 L90.00 17.9 L89.25 17.8 L88.50 18.2 L87.75 18.3 L87.00 18.4 L86.25 18.0 L85.50 17.9 L84.75 17.6 L84.00 17.7 L83.25 17.9 L82.50 18.0 L81.75 17.8 L81.00 17.5 L80.25 17.3 L79.50 17.3 L78.75 17.5 L78.00 17.8 L77.25 17.8 L76.50 17.7 L75.75 17.5 L75.00 17.6 L74.25 17.9 L73.50 18.1 L72.75 18.4 L72.00 18.1 L71.25 18.0 L70.50 17.9 L69.75 17.8 L69.00 18.1 L68.25 18.2 L67.50 18.0 L66.75 17.8 L66.00 17.5 L65.25 17.5 L64.50 17.5 L63.75 17.8 L63.00 17.7 L62.25 17.6 L61.50 17.4 L60.75 17.3 L60.00 17.5 L59.25 17.8 L58.50 17.9 L57.75 18.1 L57.00 17.9 L56.25 17.7 L55.50 17.8 L54.75 18.1 L54.00 18.2 L53.25 18.3 L52.50 18.1 L51.75 17.9 L51.00 17.6 L50.25 17.7 L49.50 17.8 L48.75 17.9 L48.00 17.9 L47.25 17.5 L46.50 17.3 L45.75 17.3 L45.00 17.5 L44.25 17.8 L43.50 17.8 L42.75 17.7 L42.00 17.5 L41.25 17.5 L40.50 17.9 L39.75 18.2 L39.00 18.3 L38.25 18.3 L37.50 18.2 L36.75 17.8 L36.00 17.8 L35.25 18.1 L34.50 18.3 L33.75 18.2 L33.00 18.0 L32.25 17.5 L31.50 17.4 L30.75 17.5 L30.00 17.7 L29.25 17.8 L28.50 17.6 L27.75 17.5 L27.00 17.3 L26.25 17.5 L25.50 17.7 L24.75 17.9 L24.00 18.2 L23.25 17.9 L22.50 17.8 L21.75 17.7 L21.00 18.1 L20.25 18.2 L19.50 18.3 L18.75 18.2 L18.00 17.9 L17.25 17.7 L16.50 17.7 L15.75 17.9 L15.00 18.1 L14.25 17.9 L13.50 17.6 L12.75 17.3 L12.00 17.3 L11.25 17.5 L10.50 17.8 L9.75 17.9 L9.00 17.7 L8.25 17.6 L7.50 17.6 L6.75 17.8 L6.00 17.9 L5.25 18.2 L4.50 18.1 L3.75 18.1 L3.00 17.8 L2.25 17.9 L1.50 18.2 L0.75 18.2 L0.00 18.2Z" fill="#1a80e6" stroke="#0b3470" stroke-width="0.6"/></svg>
<div class="t" style="left:0;top:0.6px;padding:1.2px 3px 1.4px 2.6px;background:#8fc7fb;font-size:7px;font-weight:bold;color:#0b1626;transform:scaleX(0.86);transform-origin:0 0">Bass (034_Bassline_101bpm_G#2_-_</div>
</div>
<div class="a" style="left:871.30px;top:257.00px;width:140.20px;height:22.20px;background:#8fc7fb;overflow:hidden">
<svg class="a" style="left:0;top:0" width="140.20" height="22.20"><rect x="-0.50" y="0" width="1" height="22.20" fill="#86bdf0"/><rect x="17.05" y="0" width="1" height="22.20" fill="#86bdf0"/><rect x="34.60" y="0" width="1" height="22.20" fill="#86bdf0"/><rect x="52.15" y="0" width="1" height="22.20" fill="#86bdf0"/><rect x="69.70" y="0" width="1" height="22.20" fill="#86bdf0"/><rect x="87.25" y="0" width="1" height="22.20" fill="#86bdf0"/><rect x="104.80" y="0" width="1" height="22.20" fill="#86bdf0"/><rect x="122.35" y="0" width="1" height="22.20" fill="#86bdf0"/><path d="M0.00 4.8 L0.75 5.0 L1.50 5.1 L2.25 5.5 L3.00 5.6 L3.75 5.3 L4.50 5.3 L5.25 5.4 L6.00 5.6 L6.75 5.8 L7.50 5.8 L8.25 5.6 L9.00 5.4 L9.75 5.1 L10.50 5.2 L11.25 5.4 L12.00 5.5 L12.75 5.2 L13.50 4.9 L14.25 4.6 L15.00 4.7 L15.75 4.9 L16.50 5.3 L17.25 5.2 L18.00 5.2 L18.75 5.0 L19.50 5.0 L20.25 5.3 L21.00 5.5 L21.75 5.8 L22.50 5.7 L23.25 5.5 L24.00 5.2 L24.75 5.5 L25.50 5.6 L26.25 5.6 L27.00 5.6 L27.75 5.3 L28.50 5.1 L29.25 4.9 L30.00 5.1 L30.75 5.2 L31.50 5.3 L32.25 5.2 L33.00 4.7 L33.75 4.7 L34.50 4.8 L35.25 5.2 L36.00 5.5 L36.75 5.5 L37.50 5.3 L38.25 5.2 L39.00 5.3 L39.75 5.5 L40.50 5.7 L41.25 5.9 L42.00 5.7 L42.75 5.4 L43.50 5.2 L44.25 5.2 L45.00 5.4 L45.75 5.5 L46.50 5.2 L47.25 5.1 L48.00 4.7 L48.75 4.9 L49.50 5.0 L50.25 5.2 L51.00 5.4 L51.75 5.2 L52.50 5.1 L53.25 5.0 L54.00 5.2 L54.75 5.5 L55.50 5.7 L56.25 5.7 L57.00 5.5 L57.75 5.3 L58.50 5.4 L59.25 5.5 L60.00 5.7 L60.75 5.7 L61.50 5.4 L62.25 5.1 L63.00 5.1 L63.75 4.9 L64.50 5.2 L65.25 5.1 L66.00 5.1 L66.75 4.9 L67.50 4.9 L68.25 4.8 L69.00 5.1 L69.75 5.5 L70.50 5.4 L71.25 5.3 L72.00 5.3 L72.75 5.1 L73.50 5.5 L74.25 5.7 L75.00 5.8 L75.75 5.7 L76.50 5.4 L77.25 5.2 L78.00 5.2 L78.75 5.4 L79.50 5.5 L80.25 5.4 L81.00 5.1 L81.75 4.8 L82.50 4.7 L83.25 5.0 L84.00 5.2 L84.75 5.4 L85.50 5.1 L86.25 5.1 L87.00 4.9 L87.75 5.2 L88.50 5.4 L89.25 5.7 L90.00 5.7 L90.75 5.6 L91.50 5.4 L92.25 5.4 L93.00 5.6 L93.75 5.7 L94.50 5.7 L95.25 5.4 L96.00 5.2 L96.75 4.9 L97.50 5.0 L98.25 5.1 L99.00 5.3 L99.75 5.1 L100.50 5.0 L101.25 4.9 L102.00 4.8 L102.75 5.1 L103.50 5.4 L104.25 5.5 L105.00 5.4 L105.75 5.3 L106.50 5.2 L107.25 5.4 L108.00 5.7 L108.75 5.8 L109.50 5.8 L110.25 5.5 L111.00 5.2 L111.75 5.2 L112.50 5.3 L113.25 5.5 L114.00 5.5 L114.75 5.2 L115.50 4.9 L116.25 4.8 L117.00 4.8 L117.75 5.2 L118.50 5.2 L119.25 5.3 L120.00 5.1 L120.75 5.0 L121.50 5.2 L122.25 5.4 L123.00 5.6 L123.75 5.7 L124.50 5.6 L125.25 5.3 L126.00 5.3 L126.75 5.5 L127.50 5.8 L128.25 5.7 L129.00 5.5 L129.75 5.2 L130.50 5.0 L131.25 5.1 L132.00 5.1 L132.75 5.3 L133.50 5.2 L134.25 4.9 L135.00 4.7 L135.75 4.8 L136.50 5.1 L137.25 5.3 L138.00 5.4 L138.75 5.4 L139.50 5.1 L139.50 7.5 L138.75 7.3 L138.00 7.2 L137.25 7.4 L136.50 7.6 L135.75 7.9 L135.00 8.0 L134.25 7.8 L133.50 7.5 L132.75 7.3 L132.00 7.6 L131.25 7.5 L130.50 7.6 L129.75 7.4 L129.00 7.2 L128.25 7.0 L127.50 6.9 L126.75 7.2 L126.00 7.3 L125.25 7.3 L124.50 7.1 L123.75 7.0 L123.00 7.1 L122.25 7.2 L121.50 7.5 L120.75 7.7 L120.00 7.6 L119.25 7.4 L118.50 7.5 L117.75 7.5 L117.00 7.8 L116.25 7.8 L115.50 7.7 L114.75 7.4 L114.00 7.2 L113.25 7.1 L112.50 7.3 L111.75 7.4 L111.00 7.4 L110.25 7.2 L109.50 6.9 L108.75 6.9 L108.00 7.0 L107.25 7.2 L106.50 7.4 L105.75 7.4 L105.00 7.3 L104.25 7.2 L103.50 7.2 L102.75 7.6 L102.00 7.9 L101.25 7.8 L100.50 7.7 L99.75 7.6 L99.00 7.3 L98.25 7.5 L97.50 7.6 L96.75 7.7 L96.00 7.4 L95.25 7.2 L94.50 7.0 L93.75 6.9 L93.00 7.1 L92.25 7.3 L91.50 7.3 L90.75 7.1 L90.00 7.0 L89.25 6.9 L88.50 7.3 L87.75 7.5 L87.00 7.8 L86.25 7.6 L85.50 7.5 L84.75 7.3 L84.00 7.4 L83.25 7.7 L82.50 8.0 L81.75 7.9 L81.00 7.6 L80.25 7.3 L79.50 7.2 L78.75 7.3 L78.00 7.5 L77.25 7.4 L76.50 7.2 L75.75 6.9 L75.00 6.8 L74.25 7.0 L73.50 7.2 L72.75 7.5 L72.00 7.3 L71.25 7.3 L70.50 7.2 L69.75 7.2 L69.00 7.5 L68.25 7.8 L67.50 7.8 L66.75 7.7 L66.00 7.5 L65.25 7.5 L64.50 7.5 L63.75 7.8 L63.00 7.6 L62.25 7.5 L61.50 7.3 L60.75 6.9 L60.00 7.0 L59.25 7.1 L58.50 7.2 L57.75 7.3 L57.00 7.2 L56.25 6.9 L55.50 6.9 L54.75 7.2 L54.00 7.4 L53.25 7.6 L52.50 7.6 L51.75 7.5 L51.00 7.3 L50.25 7.5 L49.50 7.6 L48.75 7.8 L48.00 8.0 L47.25 7.6 L46.50 7.4 L45.75 7.1 L45.00 7.2 L44.25 7.4 L43.50 7.4 L42.75 7.3 L42.00 7.0 L41.25 6.8 L40.50 7.0 L39.75 7.2 L39.00 7.4 L38.25 7.5 L37.50 7.4 L36.75 7.1 L36.00 7.2 L35.25 7.5 L34.50 7.8 L33.75 8.0 L33.00 7.9 L32.25 7.4 L31.50 7.4 L30.75 7.4 L30.00 7.6 L29.25 7.7 L28.50 7.6 L27.75 7.4 L27.00 7.0 L26.25 7.0 L25.50 7.1 L24.75 7.2 L24.00 7.4 L23.25 7.1 L22.50 7.0 L21.75 6.9 L21.00 7.2 L20.25 7.4 L19.50 7.6 L18.75 7.7 L18.00 7.5 L17.25 7.4 L16.50 7.4 L15.75 7.7 L15.00 8.0 L14.25 8.0 L13.50 7.8 L12.75 7.4 L12.00 7.2 L11.25 7.2 L10.50 7.5 L9.75 7.5 L9.00 7.3 L8.25 7.1 L7.50 6.9 L6.75 6.9 L6.00 7.1 L5.25 7.3 L4.50 7.3 L3.75 7.3 L3.00 7.1 L2.25 7.2 L1.50 7.5 L0.75 7.7 L0.00 7.9Z" fill="#1a80e6" stroke="#0b3470" stroke-width="0.6"/><path d="M0.00 15.2 L0.75 15.3 L1.50 15.7 L2.25 15.8 L3.00 16.0 L3.75 15.7 L4.50 15.6 L5.25 15.7 L6.00 15.9 L6.75 16.2 L7.50 16.2 L8.25 16.0 L9.00 15.8 L9.75 15.5 L10.50 15.7 L11.25 15.8 L12.00 15.9 L12.75 15.7 L13.50 15.6 L14.25 15.3 L15.00 15.3 L15.75 15.5 L16.50 15.6 L17.25 15.8 L18.00 15.7 L18.75 15.3 L19.50 15.4 L20.25 15.7 L21.00 16.0 L21.75 16.1 L22.50 16.1 L23.25 15.9 L24.00 15.8 L24.75 15.8 L25.50 16.0 L26.25 16.2 L27.00 16.1 L27.75 15.8 L28.50 15.6 L29.25 15.5 L30.00 15.5 L30.75 15.6 L31.50 15.6 L32.25 15.7 L33.00 15.2 L33.75 15.3 L34.50 15.2 L35.25 15.5 L36.00 15.9 L36.75 15.9 L37.50 15.8 L38.25 15.7 L39.00 15.6 L39.75 15.9 L40.50 16.1 L41.25 16.3 L42.00 16.1 L42.75 15.7 L43.50 15.7 L44.25 15.7 L45.00 15.9 L45.75 15.8 L46.50 15.8 L47.25 15.6 L48.00 15.3 L48.75 15.1 L49.50 15.5 L50.25 15.7 L51.00 15.7 L51.75 15.6 L52.50 15.3 L53.25 15.3 L54.00 15.6 L54.75 15.9 L55.50 16.2 L56.25 16.1 L57.00 16.0 L57.75 15.7 L58.50 15.8 L59.25 16.0 L60.00 16.1 L60.75 16.0 L61.50 15.7 L62.25 15.5 L63.00 15.5 L63.75 15.5 L64.50 15.6 L65.25 15.8 L66.00 15.6 L66.75 15.4 L67.50 15.3 L68.25 15.3 L69.00 15.5 L69.75 15.8 L70.50 15.9 L71.25 15.8 L72.00 15.7 L72.75 15.6 L73.50 15.9 L74.25 16.1 L75.00 16.3 L75.75 16.1 L76.50 15.9 L77.25 15.7 L78.00 15.8 L78.75 15.7 L79.50 15.9 L80.25 15.8 L81.00 15.5 L81.75 15.3 L82.50 15.0 L83.25 15.2 L84.00 15.6 L84.75 15.8 L85.50 15.5 L86.25 15.4 L87.00 15.5 L87.75 15.5 L88.50 15.9 L89.25 16.1 L90.00 16.1 L90.75 16.0 L91.50 15.9 L92.25 15.9 L93.00 15.9 L93.75 16.1 L94.50 16.1 L95.25 15.9 L96.00 15.6 L96.75 15.5 L97.50 15.5 L98.25 15.7 L99.00 15.6 L99.75 15.7 L100.50 15.4 L101.25 15.2 L102.00 15.1 L102.75 15.6 L103.50 15.8 L104.25 15.9 L105.00 15.8 L105.75 15.6 L106.50 15.7 L107.25 15.9 L108.00 16.1 L108.75 16.2 L109.50 16.2 L110.25 15.8 L111.00 15.7 L111.75 15.7 L112.50 15.9 L113.25 16.0 L114.00 15.8 L114.75 15.5 L115.50 15.4 L116.25 15.3 L117.00 15.4 L117.75 15.7 L118.50 15.7 L119.25 15.6 L120.00 15.4 L120.75 15.5 L121.50 15.5 L122.25 15.8 L123.00 16.1 L123.75 16.1 L124.50 16.0 L125.25 15.7 L126.00 15.7 L126.75 15.9 L127.50 16.1 L128.25 16.1 L129.00 15.9 L129.75 15.6 L130.50 15.3 L131.25 15.5 L132.00 15.7 L132.75 15.6 L133.50 15.6 L134.25 15.3 L135.00 15.3 L135.75 15.3 L136.50 15.6 L137.25 15.8 L138.00 15.9 L138.75 15.8 L139.50 15.7 L139.50 17.9 L138.75 17.7 L138.00 17.6 L137.25 17.8 L136.50 17.9 L135.75 18.3 L135.00 18.2 L134.25 18.2 L133.50 18.0 L132.75 17.9 L132.00 17.9 L131.25 18.0 L130.50 18.2 L129.75 17.9 L129.00 17.7 L128.25 17.4 L127.50 17.4 L126.75 17.6 L126.00 17.8 L125.25 17.8 L124.50 17.5 L123.75 17.5 L123.00 17.4 L122.25 17.7 L121.50 18.0 L120.75 18.1 L120.00 18.1 L119.25 17.9 L118.50 17.9 L117.75 17.8 L117.00 18.1 L116.25 18.2 L115.50 18.1 L114.75 18.0 L114.00 17.7 L113.25 17.6 L112.50 17.7 L111.75 17.8 L111.00 17.8 L110.25 17.7 L109.50 17.4 L108.75 17.3 L108.00 17.4 L107.25 17.6 L106.50 17.9 L105.75 18.0 L105.00 17.7 L104.25 17.7 L103.50 17.7 L102.75 17.9 L102.00 18.4 L101.25 18.3 L100.50 18.1 L99.75 17.8 L99.00 17.9 L98.25 17.8 L97.50 18.0 L96.75 18.0 L96.00 17.9 L95.25 17.7 L94.50 17.4 L93.75 17.4 L93.00 17.6 L92.25 17.7 L91.50 17.7 L90.75 17.6 L90.00 17.4 L89.25 17.5 L88.50 17.7 L87.75 18.0 L87.00 18.0 L86.25 18.1 L85.50 18.0 L84.75 17.7 L84.00 17.9 L83.25 18.3 L82.50 18.5 L81.75 18.3 L81.00 18.1 L80.25 17.8 L79.50 17.6 L78.75 17.8 L78.00 17.8 L77.25 17.8 L76.50 17.6 L75.75 17.4 L75.00 17.3 L74.25 17.4 L73.50 17.7 L72.75 17.9 L72.00 17.8 L71.25 17.7 L70.50 17.6 L69.75 17.8 L69.00 18.0 L68.25 18.2 L67.50 18.2 L66.75 18.2 L66.00 17.9 L65.25 17.8 L64.50 17.9 L63.75 18.0 L63.00 18.0 L62.25 18.1 L61.50 17.8 L60.75 17.5 L60.00 17.4 L59.25 17.6 L58.50 17.7 L57.75 17.8 L57.00 17.5 L56.25 17.4 L55.50 17.4 L54.75 17.6 L54.00 17.9 L53.25 18.2 L52.50 18.2 L51.75 17.9 L51.00 17.8 L50.25 17.8 L49.50 18.0 L48.75 18.5 L48.00 18.2 L47.25 18.0 L46.50 17.7 L45.75 17.7 L45.00 17.7 L44.25 17.8 L43.50 17.8 L42.75 17.8 L42.00 17.4 L41.25 17.2 L40.50 17.4 L39.75 17.6 L39.00 17.9 L38.25 17.8 L37.50 17.7 L36.75 17.6 L36.00 17.6 L35.25 18.0 L34.50 18.3 L33.75 18.3 L33.00 18.3 L32.25 17.9 L31.50 17.9 L30.75 17.9 L30.00 18.0 L29.25 18.0 L28.50 18.0 L27.75 17.7 L27.00 17.4 L26.25 17.3 L25.50 17.5 L24.75 17.7 L24.00 17.7 L23.25 17.6 L22.50 17.4 L21.75 17.4 L21.00 17.5 L20.25 17.8 L19.50 18.2 L18.75 18.2 L18.00 17.9 L17.25 17.8 L16.50 17.9 L15.75 18.0 L15.00 18.2 L14.25 18.2 L13.50 18.0 L12.75 17.8 L12.00 17.6 L11.25 17.7 L10.50 17.8 L9.75 18.0 L9.00 17.7 L8.25 17.5 L7.50 17.3 L6.75 17.3 L6.00 17.6 L5.25 17.9 L4.50 17.9 L3.75 17.8 L3.00 17.5 L2.25 17.7 L1.50 17.8 L0.75 18.2 L0.00 18.3Z" fill="#1a80e6" stroke="#0b3470" stroke-width="0.6"/></svg>
<div class="t" style="left:0;top:0.6px;padding:1.2px 3px 1.4px 2.6px;background:#8fc7fb;font-size:7px;font-weight:bold;color:#0b1626;transform:scaleX(0.86);transform-origin:0 0">Bass (034_Bassline_101bpm_G#2_-_TRVTW_Zen</div>
</div>
<div class="a" style="left:836.20px;top:281.60px;width:30.71px;height:22.20px;background:#8fc7fb;overflow:hidden">
<svg class="a" style="left:0;top:0" width="30.71" height="22.20"><rect x="17.05" y="0" width="1" height="22.20" fill="#86bdf0"/><path d="M0.00 5.4 L0.75 5.3 L1.50 5.3 L2.25 4.2 L3.00 4.3 L3.75 4.4 L4.50 4.6 L5.25 4.7 L6.00 4.7 L6.75 4.6 L7.50 4.5 L8.25 4.4 L9.00 4.3 L9.75 4.2 L10.50 4.2 L11.25 4.3 L12.00 4.5 L12.75 4.6 L13.50 4.7 L14.25 4.7 L15.00 4.6 L15.75 4.4 L16.50 4.3 L17.25 4.2 L18.00 4.2 L18.75 4.3 L19.50 4.4 L20.25 4.6 L21.00 4.7 L21.75 4.7 L22.50 4.6 L23.25 4.5 L24.00 4.4 L24.75 4.2 L25.50 4.2 L26.25 4.2 L27.00 4.4 L27.75 4.5 L28.50 4.6 L29.25 5.5 L30.00 5.5 L30.00 7.2 L29.25 7.1 L28.50 8.0 L27.75 8.2 L27.00 8.3 L26.25 8.4 L25.50 8.5 L24.75 8.4 L24.00 8.3 L23.25 8.1 L22.50 8.0 L21.75 8.0 L21.00 8.0 L20.25 8.1 L19.50 8.2 L18.75 8.4 L18.00 8.4 L17.25 8.4 L16.50 8.4 L15.75 8.2 L15.00 8.1 L14.25 8.0 L13.50 8.0 L12.75 8.0 L12.00 8.2 L11.25 8.3 L10.50 8.4 L9.75 8.5 L9.00 8.4 L8.25 8.3 L7.50 8.1 L6.75 8.0 L6.00 8.0 L5.25 8.0 L4.50 8.1 L3.75 8.2 L3.00 8.4 L2.25 8.4 L1.50 7.4 L0.75 7.3 L0.00 7.3Z" fill="#1a80e6" stroke="#0b3470" stroke-width="0.6"/><path d="M0.00 15.8 L0.75 15.8 L1.50 15.7 L2.25 14.6 L3.00 14.7 L3.75 14.9 L4.50 15.0 L5.25 15.1 L6.00 15.1 L6.75 15.1 L7.50 15.0 L8.25 14.8 L9.00 14.7 L9.75 14.6 L10.50 14.7 L11.25 14.8 L12.00 14.9 L12.75 15.1 L13.50 15.1 L14.25 15.1 L15.00 15.0 L15.75 14.9 L16.50 14.7 L17.25 14.7 L18.00 14.6 L18.75 14.7 L19.50 14.9 L20.25 15.0 L21.00 15.1 L21.75 15.1 L22.50 15.1 L23.25 14.9 L24.00 14.8 L24.75 14.7 L25.50 14.6 L26.25 14.7 L27.00 14.8 L27.75 14.9 L28.50 15.1 L29.25 15.9 L30.00 15.9 L30.00 17.6 L29.25 17.6 L28.50 18.5 L27.75 18.6 L27.00 18.7 L26.25 18.8 L25.50 18.9 L24.75 18.8 L24.00 18.7 L23.25 18.6 L22.50 18.4 L21.75 18.4 L21.00 18.4 L20.25 18.5 L19.50 18.7 L18.75 18.8 L18.00 18.9 L17.25 18.9 L16.50 18.8 L15.75 18.6 L15.00 18.5 L14.25 18.4 L13.50 18.4 L12.75 18.5 L12.00 18.6 L11.25 18.7 L10.50 18.8 L9.75 18.9 L9.00 18.8 L8.25 18.7 L7.50 18.6 L6.75 18.4 L6.00 18.4 L5.25 18.4 L4.50 18.5 L3.75 18.7 L3.00 18.8 L2.25 18.9 L1.50 17.8 L0.75 17.8 L0.00 17.7Z" fill="#1a80e6" stroke="#0b3470" stroke-width="0.6"/></svg>
</div>
<div class="a" style="left:590.50px;top:306.20px;width:280.80px;height:22.20px;background:#8fc7fb;overflow:hidden">
<svg class="a" style="left:0;top:0" width="280.80" height="22.20"><rect x="-0.50" y="0" width="1" height="22.20" fill="#86bdf0"/><rect x="17.05" y="0" width="1" height="22.20" fill="#86bdf0"/><rect x="34.60" y="0" width="1" height="22.20" fill="#86bdf0"/><rect x="52.15" y="0" width="1" height="22.20" fill="#86bdf0"/><rect x="69.70" y="0" width="1" height="22.20" fill="#86bdf0"/><rect x="87.25" y="0" width="1" height="22.20" fill="#86bdf0"/><rect x="104.80" y="0" width="1" height="22.20" fill="#86bdf0"/><rect x="122.35" y="0" width="1" height="22.20" fill="#86bdf0"/><rect x="139.90" y="0" width="1" height="22.20" fill="#86bdf0"/><rect x="157.45" y="0" width="1" height="22.20" fill="#86bdf0"/><rect x="175.00" y="0" width="1" height="22.20" fill="#86bdf0"/><rect x="192.55" y="0" width="1" height="22.20" fill="#86bdf0"/><rect x="210.10" y="0" width="1" height="22.20" fill="#86bdf0"/><rect x="227.65" y="0" width="1" height="22.20" fill="#86bdf0"/><rect x="245.20" y="0" width="1" height="22.20" fill="#86bdf0"/><rect x="262.75" y="0" width="1" height="22.20" fill="#86bdf0"/><path d="M0.00 5.8 L0.75 5.8 L1.50 5.8 L2.25 5.8 L3.00 5.8 L3.75 5.8 L4.50 5.8 L5.25 5.8 L6.00 5.8 L6.75 5.8 L7.50 5.8 L8.25 5.8 L9.00 5.8 L9.75 5.8 L10.50 5.8 L11.25 5.8 L12.00 5.8 L12.75 5.8 L13.50 5.8 L14.25 5.8 L15.00 5.8 L15.75 5.8 L16.50 5.8 L17.25 5.8 L18.00 5.8 L18.75 5.8 L19.50 5.8 L20.25 5.8 L21.00 5.8 L21.75 5.8 L22.50 5.8 L23.25 5.8 L24.00 5.8 L24.75 5.8 L25.50 5.8 L26.25 5.8 L27.00 5.8 L27.75 5.8 L28.50 5.8 L29.25 5.8 L30.00 5.8 L30.75 5.8 L31.50 5.8 L32.25 5.8 L33.00 5.8 L33.75 5.8 L34.50 5.8 L35.25 5.8 L36.00 5.8 L36.75 5.8 L37.50 5.8 L38.25 5.8 L39.00 5.8 L39.75 5.8 L40.50 5.8 L41.25 5.8 L42.00 5.8 L42.75 5.8 L43.50 5.8 L44.25 5.8 L45.00 5.8 L45.75 5.8 L46.50 5.8 L47.25 5.8 L48.00 5.8 L48.75 5.8 L49.50 5.8 L50.25 5.8 L51.00 5.8 L51.75 5.8 L52.50 5.8 L53.25 5.8 L54.00 5.8 L54.75 5.8 L55.50 5.8 L56.25 5.8 L57.00 5.8 L57.75 5.8 L58.50 5.8 L59.25 5.8 L60.00 5.8 L60.75 5.8 L61.50 5.8 L62.25 5.8 L63.00 5.8 L63.75 5.8 L64.50 5.8 L65.25 5.8 L66.00 5.8 L66.75 5.8 L67.50 5.8 L68.25 5.8 L69.00 5.8 L69.75 5.8 L70.50 5.8 L71.25 5.8 L72.00 5.8 L72.75 5.8 L73.50 5.8 L74.25 5.8 L75.00 5.8 L75.75 5.8 L76.50 5.8 L77.25 5.8 L78.00 5.8 L78.75 5.8 L79.50 5.8 L80.25 5.8 L81.00 5.8 L81.75 5.8 L82.50 5.8 L83.25 5.8 L84.00 5.8 L84.75 5.8 L85.50 5.8 L86.25 5.8 L87.00 5.8 L87.75 5.8 L88.50 5.8 L89.25 5.8 L90.00 5.8 L90.75 5.8 L91.50 5.8 L92.25 5.8 L93.00 5.8 L93.75 5.8 L94.50 5.8 L95.25 5.8 L96.00 5.8 L96.75 5.8 L97.50 5.8 L98.25 5.8 L99.00 5.8 L99.75 5.8 L100.50 5.8 L101.25 5.8 L102.00 5.8 L102.75 5.8 L103.50 5.8 L104.25 5.8 L105.00 5.8 L105.75 5.8 L106.50 5.8 L107.25 5.8 L108.00 5.8 L108.75 5.8 L109.50 5.8 L110.25 5.8 L111.00 5.8 L111.75 5.8 L112.50 5.8 L113.25 5.8 L114.00 5.8 L114.75 5.8 L115.50 5.8 L116.25 5.8 L117.00 5.8 L117.75 5.8 L118.50 5.8 L119.25 5.8 L120.00 5.8 L120.75 5.8 L121.50 5.8 L122.25 5.8 L123.00 5.8 L123.75 5.8 L124.50 5.8 L125.25 5.8 L126.00 5.8 L126.75 5.8 L127.50 5.8 L128.25 5.8 L129.00 5.8 L129.75 5.8 L130.50 5.8 L131.25 5.8 L132.00 5.8 L132.75 5.8 L133.50 5.8 L134.25 5.8 L135.00 5.8 L135.75 5.8 L136.50 5.8 L137.25 5.8 L138.00 5.8 L138.75 5.8 L139.50 5.8 L140.25 5.8 L141.00 5.8 L141.75 5.8 L142.50 5.8 L143.25 5.8 L144.00 5.8 L144.75 5.8 L145.50 5.8 L146.25 5.8 L147.00 5.8 L147.75 5.8 L148.50 5.8 L149.25 5.8 L150.00 5.8 L150.75 5.8 L151.50 5.8 L152.25 5.8 L153.00 5.8 L153.75 5.8 L154.50 5.8 L155.25 5.8 L156.00 5.8 L156.75 5.8 L157.50 5.8 L158.25 5.8 L159.00 5.8 L159.75 5.8 L160.50 5.8 L161.25 5.8 L162.00 5.8 L162.75 5.8 L163.50 5.8 L164.25 5.8 L165.00 5.8 L165.75 5.8 L166.50 5.8 L167.25 5.8 L168.00 5.8 L168.75 5.8 L169.50 5.8 L170.25 5.8 L171.00 5.8 L171.75 5.8 L172.50 5.8 L173.25 5.8 L174.00 5.8 L174.75 5.8 L175.50 5.8 L176.25 5.8 L177.00 5.8 L177.75 5.8 L178.50 5.8 L179.25 5.8 L180.00 5.8 L180.75 5.8 L181.50 5.8 L182.25 5.8 L183.00 5.8 L183.75 5.8 L184.50 5.8 L185.25 5.8 L186.00 5.8 L186.75 5.8 L187.50 5.8 L188.25 5.8 L189.00 5.8 L189.75 5.8 L190.50 5.8 L191.25 5.8 L192.00 5.8 L192.75 5.8 L193.50 5.8 L194.25 5.8 L195.00 5.8 L195.75 5.8 L196.50 5.8 L197.25 5.8 L198.00 5.8 L198.75 5.8 L199.50 5.8 L200.25 5.8 L201.00 5.8 L201.75 5.8 L202.50 5.8 L203.25 5.8 L204.00 5.8 L204.75 5.8 L205.50 5.8 L206.25 5.8 L207.00 5.8 L207.75 5.8 L208.50 5.8 L209.25 5.8 L210.00 5.8 L210.75 5.8 L211.50 5.8 L212.25 5.8 L213.00 5.8 L213.75 5.8 L214.50 5.8 L215.25 5.8 L216.00 5.8 L216.75 5.8 L217.50 5.8 L218.25 5.8 L219.00 5.8 L219.75 5.8 L220.50 5.8 L221.25 5.8 L222.00 5.8 L222.75 5.8 L223.50 5.8 L224.25 5.8 L225.00 5.8 L225.75 5.8 L226.50 5.8 L227.25 5.8 L228.00 5.8 L228.75 5.8 L229.50 5.8 L230.25 5.8 L231.00 5.8 L231.75 5.8 L232.50 5.8 L233.25 5.8 L234.00 5.8 L234.75 5.8 L235.50 5.8 L236.25 5.8 L237.00 5.8 L237.75 5.8 L238.50 5.8 L239.25 5.8 L240.00 5.8 L240.75 5.8 L241.50 5.8 L242.25 5.8 L243.00 5.8 L243.75 5.8 L244.50 5.8 L245.25 5.8 L246.00 5.8 L246.75 5.8 L247.50 5.8 L248.25 5.8 L249.00 5.8 L249.75 5.8 L250.50 5.8 L251.25 5.8 L252.00 5.8 L252.75 5.8 L253.50 5.8 L254.25 5.8 L255.00 5.8 L255.75 5.8 L256.50 5.8 L257.25 5.8 L258.00 5.8 L258.75 5.8 L259.50 5.8 L260.25 5.8 L261.00 5.8 L261.75 5.8 L262.50 5.8 L263.25 5.8 L264.00 5.8 L264.75 5.8 L265.50 5.8 L266.25 5.8 L267.00 5.8 L267.75 5.8 L268.50 5.8 L269.25 5.8 L270.00 5.8 L270.75 5.8 L271.50 5.8 L272.25 5.8 L273.00 5.8 L273.75 5.8 L274.50 5.8 L275.25 5.8 L276.00 5.8 L276.75 5.8 L277.50 5.8 L278.25 5.8 L279.00 5.8 L279.75 5.8 L280.50 5.8 L280.50 6.8 L279.75 6.8 L279.00 6.8 L278.25 6.8 L277.50 6.8 L276.75 6.8 L276.00 6.8 L275.25 6.8 L274.50 6.8 L273.75 6.8 L273.00 6.8 L272.25 6.8 L271.50 6.8 L270.75 6.8 L270.00 6.8 L269.25 6.8 L268.50 6.8 L267.75 6.8 L267.00 6.8 L266.25 6.8 L265.50 6.8 L264.75 6.8 L264.00 6.8 L263.25 6.8 L262.50 6.8 L261.75 6.8 L261.00 6.8 L260.25 6.8 L259.50 6.8 L258.75 6.8 L258.00 6.8 L257.25 6.8 L256.50 6.8 L255.75 6.8 L255.00 6.8 L254.25 6.8 L253.50 6.8 L252.75 6.8 L252.00 6.8 L251.25 6.8 L250.50 6.8 L249.75 6.8 L249.00 6.8 L248.25 6.8 L247.50 6.8 L246.75 6.8 L246.00 6.8 L245.25 6.8 L244.50 6.8 L243.75 6.8 L243.00 6.8 L242.25 6.8 L241.50 6.8 L240.75 6.8 L240.00 6.8 L239.25 6.8 L238.50 6.8 L237.75 6.8 L237.00 6.8 L236.25 6.8 L235.50 6.8 L234.75 6.8 L234.00 6.8 L233.25 6.8 L232.50 6.8 L231.75 6.8 L231.00 6.8 L230.25 6.8 L229.50 6.8 L228.75 6.8 L228.00 6.8 L227.25 6.8 L226.50 6.8 L225.75 6.8 L225.00 6.8 L224.25 6.8 L223.50 6.8 L222.75 6.8 L222.00 6.8 L221.25 6.8 L220.50 6.8 L219.75 6.8 L219.00 6.8 L218.25 6.8 L217.50 6.8 L216.75 6.8 L216.00 6.8 L215.25 6.8 L214.50 6.8 L213.75 6.8 L213.00 6.8 L212.25 6.8 L211.50 6.8 L210.75 6.8 L210.00 6.8 L209.25 6.8 L208.50 6.8 L207.75 6.8 L207.00 6.8 L206.25 6.8 L205.50 6.8 L204.75 6.8 L204.00 6.8 L203.25 6.8 L202.50 6.8 L201.75 6.8 L201.00 6.8 L200.25 6.8 L199.50 6.8 L198.75 6.8 L198.00 6.8 L197.25 6.8 L196.50 6.8 L195.75 6.8 L195.00 6.8 L194.25 6.8 L193.50 6.8 L192.75 6.8 L192.00 6.8 L191.25 6.8 L190.50 6.8 L189.75 6.8 L189.00 6.8 L188.25 6.8 L187.50 6.8 L186.75 6.8 L186.00 6.8 L185.25 6.8 L184.50 6.8 L183.75 6.8 L183.00 6.8 L182.25 6.8 L181.50 6.8 L180.75 6.8 L180.00 6.8 L179.25 6.8 L178.50 6.8 L177.75 6.8 L177.00 6.8 L176.25 6.8 L175.50 6.8 L174.75 6.8 L174.00 6.8 L173.25 6.8 L172.50 6.8 L171.75 6.8 L171.00 6.8 L170.25 6.8 L169.50 6.8 L168.75 6.8 L168.00 6.8 L167.25 6.8 L166.50 6.8 L165.75 6.8 L165.00 6.8 L164.25 6.8 L163.50 6.8 L162.75 6.8 L162.00 6.8 L161.25 6.8 L160.50 6.8 L159.75 6.8 L159.00 6.8 L158.25 6.8 L157.50 6.8 L156.75 6.8 L156.00 6.8 L155.25 6.8 L154.50 6.8 L153.75 6.8 L153.00 6.8 L152.25 6.8 L151.50 6.8 L150.75 6.8 L150.00 6.8 L149.25 6.8 L148.50 6.8 L147.75 6.8 L147.00 6.8 L146.25 6.8 L145.50 6.8 L144.75 6.8 L144.00 6.8 L143.25 6.8 L142.50 6.8 L141.75 6.8 L141.00 6.8 L140.25 6.8 L139.50 6.8 L138.75 6.8 L138.00 6.8 L137.25 6.8 L136.50 6.8 L135.75 6.8 L135.00 6.8 L134.25 6.8 L133.50 6.8 L132.75 6.8 L132.00 6.8 L131.25 6.8 L130.50 6.8 L129.75 6.8 L129.00 6.8 L128.25 6.8 L127.50 6.8 L126.75 6.8 L126.00 6.8 L125.25 6.8 L124.50 6.8 L123.75 6.8 L123.00 6.8 L122.25 6.8 L121.50 6.8 L120.75 6.8 L120.00 6.8 L119.25 6.8 L118.50 6.8 L117.75 6.8 L117.00 6.8 L116.25 6.8 L115.50 6.8 L114.75 6.8 L114.00 6.8 L113.25 6.8 L112.50 6.8 L111.75 6.8 L111.00 6.8 L110.25 6.8 L109.50 6.8 L108.75 6.8 L108.00 6.8 L107.25 6.8 L106.50 6.8 L105.75 6.8 L105.00 6.8 L104.25 6.8 L103.50 6.8 L102.75 6.8 L102.00 6.8 L101.25 6.8 L100.50 6.8 L99.75 6.8 L99.00 6.8 L98.25 6.8 L97.50 6.8 L96.75 6.8 L96.00 6.8 L95.25 6.8 L94.50 6.8 L93.75 6.8 L93.00 6.8 L92.25 6.8 L91.50 6.8 L90.75 6.8 L90.00 6.8 L89.25 6.8 L88.50 6.8 L87.75 6.8 L87.00 6.8 L86.25 6.8 L85.50 6.8 L84.75 6.8 L84.00 6.8 L83.25 6.8 L82.50 6.8 L81.75 6.8 L81.00 6.8 L80.25 6.8 L79.50 6.8 L78.75 6.8 L78.00 6.8 L77.25 6.8 L76.50 6.8 L75.75 6.8 L75.00 6.8 L74.25 6.8 L73.50 6.8 L72.75 6.8 L72.00 6.8 L71.25 6.8 L70.50 6.8 L69.75 6.8 L69.00 6.8 L68.25 6.8 L67.50 6.8 L66.75 6.8 L66.00 6.8 L65.25 6.8 L64.50 6.8 L63.75 6.8 L63.00 6.8 L62.25 6.8 L61.50 6.8 L60.75 6.8 L60.00 6.8 L59.25 6.8 L58.50 6.8 L57.75 6.8 L57.00 6.8 L56.25 6.8 L55.50 6.8 L54.75 6.8 L54.00 6.8 L53.25 6.8 L52.50 6.8 L51.75 6.8 L51.00 6.8 L50.25 6.8 L49.50 6.8 L48.75 6.8 L48.00 6.8 L47.25 6.8 L46.50 6.8 L45.75 6.8 L45.00 6.8 L44.25 6.8 L43.50 6.8 L42.75 6.8 L42.00 6.8 L41.25 6.8 L40.50 6.8 L39.75 6.8 L39.00 6.8 L38.25 6.8 L37.50 6.8 L36.75 6.8 L36.00 6.8 L35.25 6.8 L34.50 6.8 L33.75 6.8 L33.00 6.8 L32.25 6.8 L31.50 6.8 L30.75 6.8 L30.00 6.8 L29.25 6.8 L28.50 6.8 L27.75 6.8 L27.00 6.8 L26.25 6.8 L25.50 6.8 L24.75 6.8 L24.00 6.8 L23.25 6.8 L22.50 6.8 L21.75 6.8 L21.00 6.8 L20.25 6.8 L19.50 6.8 L18.75 6.8 L18.00 6.8 L17.25 6.8 L16.50 6.8 L15.75 6.8 L15.00 6.8 L14.25 6.8 L13.50 6.8 L12.75 6.8 L12.00 6.8 L11.25 6.8 L10.50 6.8 L9.75 6.8 L9.00 6.8 L8.25 6.8 L7.50 6.8 L6.75 6.8 L6.00 6.8 L5.25 6.8 L4.50 6.8 L3.75 6.8 L3.00 6.8 L2.25 6.8 L1.50 6.8 L0.75 6.8 L0.00 6.8Z" fill="#1a80e6" stroke="#0b3470" stroke-width="0.6"/><path d="M0.00 16.3 L0.75 16.3 L1.50 16.3 L2.25 16.3 L3.00 16.3 L3.75 16.3 L4.50 16.3 L5.25 16.3 L6.00 16.3 L6.75 16.3 L7.50 16.3 L8.25 16.3 L9.00 16.3 L9.75 16.3 L10.50 16.3 L11.25 16.3 L12.00 16.3 L12.75 16.3 L13.50 16.3 L14.25 16.3 L15.00 16.3 L15.75 16.3 L16.50 16.3 L17.25 16.3 L18.00 16.3 L18.75 16.3 L19.50 16.3 L20.25 16.3 L21.00 16.3 L21.75 16.3 L22.50 16.3 L23.25 16.3 L24.00 16.3 L24.75 16.3 L25.50 16.3 L26.25 16.3 L27.00 16.3 L27.75 16.3 L28.50 16.3 L29.25 16.3 L30.00 16.3 L30.75 16.3 L31.50 16.3 L32.25 16.3 L33.00 16.3 L33.75 16.3 L34.50 16.3 L35.25 16.3 L36.00 16.3 L36.75 16.3 L37.50 16.3 L38.25 16.3 L39.00 16.3 L39.75 16.3 L40.50 16.3 L41.25 16.3 L42.00 16.3 L42.75 16.3 L43.50 16.3 L44.25 16.3 L45.00 16.3 L45.75 16.3 L46.50 16.3 L47.25 16.3 L48.00 16.3 L48.75 16.3 L49.50 16.3 L50.25 16.3 L51.00 16.3 L51.75 16.3 L52.50 16.3 L53.25 16.3 L54.00 16.3 L54.75 16.3 L55.50 16.3 L56.25 16.3 L57.00 16.3 L57.75 16.3 L58.50 16.3 L59.25 16.3 L60.00 16.3 L60.75 16.3 L61.50 16.3 L62.25 16.3 L63.00 16.3 L63.75 16.3 L64.50 16.3 L65.25 16.3 L66.00 16.3 L66.75 16.3 L67.50 16.3 L68.25 16.3 L69.00 16.3 L69.75 16.3 L70.50 16.3 L71.25 16.3 L72.00 16.3 L72.75 16.3 L73.50 16.3 L74.25 16.3 L75.00 16.3 L75.75 16.3 L76.50 16.3 L77.25 16.3 L78.00 16.3 L78.75 16.3 L79.50 16.3 L80.25 16.3 L81.00 16.3 L81.75 16.3 L82.50 16.3 L83.25 16.3 L84.00 16.3 L84.75 16.3 L85.50 16.3 L86.25 16.3 L87.00 16.3 L87.75 16.3 L88.50 16.3 L89.25 16.3 L90.00 16.3 L90.75 16.3 L91.50 16.3 L92.25 16.3 L93.00 16.3 L93.75 16.3 L94.50 16.3 L95.25 16.3 L96.00 16.3 L96.75 16.3 L97.50 16.3 L98.25 16.3 L99.00 16.3 L99.75 16.3 L100.50 16.3 L101.25 16.3 L102.00 16.3 L102.75 16.3 L103.50 16.3 L104.25 16.3 L105.00 16.3 L105.75 16.3 L106.50 16.3 L107.25 16.3 L108.00 16.3 L108.75 16.3 L109.50 16.3 L110.25 16.3 L111.00 16.3 L111.75 16.3 L112.50 16.3 L113.25 16.3 L114.00 16.3 L114.75 16.3 L115.50 16.3 L116.25 16.3 L117.00 16.3 L117.75 16.3 L118.50 16.3 L119.25 16.3 L120.00 16.3 L120.75 16.3 L121.50 16.3 L122.25 16.3 L123.00 16.3 L123.75 16.3 L124.50 16.3 L125.25 16.3 L126.00 16.3 L126.75 16.3 L127.50 16.3 L128.25 16.3 L129.00 16.3 L129.75 16.3 L130.50 16.3 L131.25 16.3 L132.00 16.3 L132.75 16.3 L133.50 16.3 L134.25 16.3 L135.00 16.3 L135.75 16.3 L136.50 16.3 L137.25 16.3 L138.00 16.3 L138.75 16.3 L139.50 16.3 L140.25 16.3 L141.00 16.3 L141.75 16.3 L142.50 16.3 L143.25 16.3 L144.00 16.3 L144.75 16.3 L145.50 16.3 L146.25 16.3 L147.00 16.3 L147.75 16.3 L148.50 16.3 L149.25 16.3 L150.00 16.3 L150.75 16.3 L151.50 16.3 L152.25 16.3 L153.00 16.3 L153.75 16.3 L154.50 16.3 L155.25 16.3 L156.00 16.3 L156.75 16.3 L157.50 16.3 L158.25 16.3 L159.00 16.3 L159.75 16.3 L160.50 16.3 L161.25 16.3 L162.00 16.3 L162.75 16.3 L163.50 16.3 L164.25 16.3 L165.00 16.3 L165.75 16.3 L166.50 16.3 L167.25 16.3 L168.00 16.3 L168.75 16.3 L169.50 16.3 L170.25 16.3 L171.00 16.3 L171.75 16.3 L172.50 16.3 L173.25 16.3 L174.00 16.3 L174.75 16.3 L175.50 16.3 L176.25 16.3 L177.00 16.3 L177.75 16.3 L178.50 16.3 L179.25 16.3 L180.00 16.3 L180.75 16.3 L181.50 16.3 L182.25 16.3 L183.00 16.3 L183.75 16.3 L184.50 16.3 L185.25 16.3 L186.00 16.3 L186.75 16.3 L187.50 16.3 L188.25 16.3 L189.00 16.3 L189.75 16.3 L190.50 16.3 L191.25 16.3 L192.00 16.3 L192.75 16.3 L193.50 16.3 L194.25 16.3 L195.00 16.3 L195.75 16.3 L196.50 16.3 L197.25 16.3 L198.00 16.3 L198.75 16.3 L199.50 16.3 L200.25 16.3 L201.00 16.3 L201.75 16.3 L202.50 16.3 L203.25 16.3 L204.00 16.3 L204.75 16.3 L205.50 16.3 L206.25 16.3 L207.00 16.3 L207.75 16.3 L208.50 16.3 L209.25 16.3 L210.00 16.3 L210.75 16.3 L211.50 16.3 L212.25 16.3 L213.00 16.3 L213.75 16.3 L214.50 16.3 L215.25 16.3 L216.00 16.3 L216.75 16.3 L217.50 16.3 L218.25 16.3 L219.00 16.3 L219.75 16.3 L220.50 16.3 L221.25 16.3 L222.00 16.3 L222.75 16.3 L223.50 16.3 L224.25 16.3 L225.00 16.3 L225.75 16.3 L226.50 16.3 L227.25 16.3 L228.00 16.3 L228.75 16.3 L229.50 16.3 L230.25 16.3 L231.00 16.3 L231.75 16.3 L232.50 16.3 L233.25 16.3 L234.00 16.3 L234.75 16.3 L235.50 16.3 L236.25 16.3 L237.00 16.3 L237.75 16.3 L238.50 16.3 L239.25 16.3 L240.00 16.3 L240.75 16.3 L241.50 16.3 L242.25 16.3 L243.00 16.3 L243.75 16.3 L244.50 16.3 L245.25 16.3 L246.00 16.3 L246.75 16.3 L247.50 16.3 L248.25 16.3 L249.00 16.3 L249.75 16.3 L250.50 16.3 L251.25 16.3 L252.00 16.3 L252.75 16.3 L253.50 16.3 L254.25 16.3 L255.00 16.3 L255.75 16.3 L256.50 16.3 L257.25 16.3 L258.00 16.3 L258.75 16.3 L259.50 16.3 L260.25 16.3 L261.00 16.3 L261.75 16.3 L262.50 16.3 L263.25 16.3 L264.00 16.3 L264.75 16.3 L265.50 16.3 L266.25 16.3 L267.00 16.3 L267.75 16.3 L268.50 16.3 L269.25 16.3 L270.00 16.3 L270.75 16.3 L271.50 16.3 L272.25 16.3 L273.00 16.3 L273.75 16.3 L274.50 16.3 L275.25 16.3 L276.00 16.3 L276.75 16.3 L277.50 16.3 L278.25 16.3 L279.00 16.3 L279.75 16.3 L280.50 16.3 L280.50 17.3 L279.75 17.3 L279.00 17.3 L278.25 17.3 L277.50 17.3 L276.75 17.3 L276.00 17.3 L275.25 17.3 L274.50 17.3 L273.75 17.3 L273.00 17.3 L272.25 17.3 L271.50 17.3 L270.75 17.3 L270.00 17.3 L269.25 17.3 L268.50 17.3 L267.75 17.3 L267.00 17.3 L266.25 17.3 L265.50 17.3 L264.75 17.3 L264.00 17.3 L263.25 17.3 L262.50 17.3 L261.75 17.3 L261.00 17.3 L260.25 17.3 L259.50 17.3 L258.75 17.3 L258.00 17.3 L257.25 17.3 L256.50 17.3 L255.75 17.3 L255.00 17.3 L254.25 17.3 L253.50 17.3 L252.75 17.3 L252.00 17.3 L251.25 17.3 L250.50 17.3 L249.75 17.3 L249.00 17.3 L248.25 17.3 L247.50 17.3 L246.75 17.3 L246.00 17.3 L245.25 17.3 L244.50 17.3 L243.75 17.3 L243.00 17.3 L242.25 17.3 L241.50 17.3 L240.75 17.3 L240.00 17.3 L239.25 17.3 L238.50 17.3 L237.75 17.3 L237.00 17.3 L236.25 17.3 L235.50 17.3 L234.75 17.3 L234.00 17.3 L233.25 17.3 L232.50 17.3 L231.75 17.3 L231.00 17.3 L230.25 17.3 L229.50 17.3 L228.75 17.3 L228.00 17.3 L227.25 17.3 L226.50 17.3 L225.75 17.3 L225.00 17.3 L224.25 17.3 L223.50 17.3 L222.75 17.3 L222.00 17.3 L221.25 17.3 L220.50 17.3 L219.75 17.3 L219.00 17.3 L218.25 17.3 L217.50 17.3 L216.75 17.3 L216.00 17.3 L215.25 17.3 L214.50 17.3 L213.75 17.3 L213.00 17.3 L212.25 17.3 L211.50 17.3 L210.75 17.3 L210.00 17.3 L209.25 17.3 L208.50 17.3 L207.75 17.3 L207.00 17.3 L206.25 17.3 L205.50 17.3 L204.75 17.3 L204.00 17.3 L203.25 17.3 L202.50 17.3 L201.75 17.3 L201.00 17.3 L200.25 17.3 L199.50 17.3 L198.75 17.3 L198.00 17.3 L197.25 17.3 L196.50 17.3 L195.75 17.3 L195.00 17.3 L194.25 17.3 L193.50 17.3 L192.75 17.3 L192.00 17.3 L191.25 17.3 L190.50 17.3 L189.75 17.3 L189.00 17.3 L188.25 17.3 L187.50 17.3 L186.75 17.3 L186.00 17.3 L185.25 17.3 L184.50 17.3 L183.75 17.3 L183.00 17.3 L182.25 17.3 L181.50 17.3 L180.75 17.3 L180.00 17.3 L179.25 17.3 L178.50 17.3 L177.75 17.3 L177.00 17.3 L176.25 17.3 L175.50 17.3 L174.75 17.3 L174.00 17.3 L173.25 17.3 L172.50 17.3 L171.75 17.3 L171.00 17.3 L170.25 17.3 L169.50 17.3 L168.75 17.3 L168.00 17.3 L167.25 17.3 L166.50 17.3 L165.75 17.3 L165.00 17.3 L164.25 17.3 L163.50 17.3 L162.75 17.3 L162.00 17.3 L161.25 17.3 L160.50 17.3 L159.75 17.3 L159.00 17.3 L158.25 17.3 L157.50 17.3 L156.75 17.3 L156.00 17.3 L155.25 17.3 L154.50 17.3 L153.75 17.3 L153.00 17.3 L152.25 17.3 L151.50 17.3 L150.75 17.3 L150.00 17.3 L149.25 17.3 L148.50 17.3 L147.75 17.3 L147.00 17.3 L146.25 17.3 L145.50 17.3 L144.75 17.3 L144.00 17.3 L143.25 17.3 L142.50 17.3 L141.75 17.3 L141.00 17.3 L140.25 17.3 L139.50 17.3 L138.75 17.3 L138.00 17.3 L137.25 17.3 L136.50 17.3 L135.75 17.3 L135.00 17.3 L134.25 17.3 L133.50 17.3 L132.75 17.3 L132.00 17.3 L131.25 17.3 L130.50 17.3 L129.75 17.3 L129.00 17.3 L128.25 17.3 L127.50 17.3 L126.75 17.3 L126.00 17.3 L125.25 17.3 L124.50 17.3 L123.75 17.3 L123.00 17.3 L122.25 17.3 L121.50 17.3 L120.75 17.3 L120.00 17.3 L119.25 17.3 L118.50 17.3 L117.75 17.3 L117.00 17.3 L116.25 17.3 L115.50 17.3 L114.75 17.3 L114.00 17.3 L113.25 17.3 L112.50 17.3 L111.75 17.3 L111.00 17.3 L110.25 17.3 L109.50 17.3 L108.75 17.3 L108.00 17.3 L107.25 17.3 L106.50 17.3 L105.75 17.3 L105.00 17.3 L104.25 17.3 L103.50 17.3 L102.75 17.3 L102.00 17.3 L101.25 17.3 L100.50 17.3 L99.75 17.3 L99.00 17.3 L98.25 17.3 L97.50 17.3 L96.75 17.3 L96.00 17.3 L95.25 17.3 L94.50 17.3 L93.75 17.3 L93.00 17.3 L92.25 17.3 L91.50 17.3 L90.75 17.3 L90.00 17.3 L89.25 17.3 L88.50 17.3 L87.75 17.3 L87.00 17.3 L86.25 17.3 L85.50 17.3 L84.75 17.3 L84.00 17.3 L83.25 17.3 L82.50 17.3 L81.75 17.3 L81.00 17.3 L80.25 17.3 L79.50 17.3 L78.75 17.3 L78.00 17.3 L77.25 17.3 L76.50 17.3 L75.75 17.3 L75.00 17.3 L74.25 17.3 L73.50 17.3 L72.75 17.3 L72.00 17.3 L71.25 17.3 L70.50 17.3 L69.75 17.3 L69.00 17.3 L68.25 17.3 L67.50 17.3 L66.75 17.3 L66.00 17.3 L65.25 17.3 L64.50 17.3 L63.75 17.3 L63.00 17.3 L62.25 17.3 L61.50 17.3 L60.75 17.3 L60.00 17.3 L59.25 17.3 L58.50 17.3 L57.75 17.3 L57.00 17.3 L56.25 17.3 L55.50 17.3 L54.75 17.3 L54.00 17.3 L53.25 17.3 L52.50 17.3 L51.75 17.3 L51.00 17.3 L50.25 17.3 L49.50 17.3 L48.75 17.3 L48.00 17.3 L47.25 17.3 L46.50 17.3 L45.75 17.3 L45.00 17.3 L44.25 17.3 L43.50 17.3 L42.75 17.3 L42.00 17.3 L41.25 17.3 L40.50 17.3 L39.75 17.3 L39.00 17.3 L38.25 17.3 L37.50 17.3 L36.75 17.3 L36.00 17.3 L35.25 17.3 L34.50 17.3 L33.75 17.3 L33.00 17.3 L32.25 17.3 L31.50 17.3 L30.75 17.3 L30.00 17.3 L29.25 17.3 L28.50 17.3 L27.75 17.3 L27.00 17.3 L26.25 17.3 L25.50 17.3 L24.75 17.3 L24.00 17.3 L23.25 17.3 L22.50 17.3 L21.75 17.3 L21.00 17.3 L20.25 17.3 L19.50 17.3 L18.75 17.3 L18.00 17.3 L17.25 17.3 L16.50 17.3 L15.75 17.3 L15.00 17.3 L14.25 17.3 L13.50 17.3 L12.75 17.3 L12.00 17.3 L11.25 17.3 L10.50 17.3 L9.75 17.3 L9.00 17.3 L8.25 17.3 L7.50 17.3 L6.75 17.3 L6.00 17.3 L5.25 17.3 L4.50 17.3 L3.75 17.3 L3.00 17.3 L2.25 17.3 L1.50 17.3 L0.75 17.3 L0.00 17.3Z" fill="#1a80e6" stroke="#0b3470" stroke-width="0.6"/></svg>
<div class="t" style="left:0;top:0.6px;padding:1.2px 3px 1.4px 2.6px;background:#8fc7fb;font-size:7px;font-weight:bold;color:#0b1626;transform:scaleX(0.86);transform-origin:0 0">Impact (007_FX_-_TRVTW_Zenhiser_multitrack)</div>
</div>
<div class="a" style="left:871.30px;top:306.20px;width:140.20px;height:22.20px;background:#8fc7fb;overflow:hidden">
<svg class="a" style="left:0;top:0" width="140.20" height="22.20"><rect x="-0.50" y="0" width="1" height="22.20" fill="#86bdf0"/><rect x="17.05" y="0" width="1" height="22.20" fill="#86bdf0"/><rect x="34.60" y="0" width="1" height="22.20" fill="#86bdf0"/><rect x="52.15" y="0" width="1" height="22.20" fill="#86bdf0"/><rect x="69.70" y="0" width="1" height="22.20" fill="#86bdf0"/><rect x="87.25" y="0" width="1" height="22.20" fill="#86bdf0"/><rect x="104.80" y="0" width="1" height="22.20" fill="#86bdf0"/><rect x="122.35" y="0" width="1" height="22.20" fill="#86bdf0"/><path d="M0.00 3.5 L0.75 3.6 L1.50 3.7 L2.25 3.7 L3.00 3.9 L3.75 4.0 L4.50 4.2 L5.25 4.4 L6.00 4.3 L6.75 4.5 L7.50 4.6 L8.25 4.8 L9.00 4.8 L9.75 4.7 L10.50 5.0 L11.25 5.1 L12.00 5.0 L12.75 5.1 L13.50 5.1 L14.25 5.1 L15.00 5.3 L15.75 5.4 L16.50 5.3 L17.25 5.3 L18.00 5.3 L18.75 5.3 L19.50 5.3 L20.25 5.4 L21.00 5.4 L21.75 5.4 L22.50 5.4 L23.25 5.4 L24.00 5.6 L24.75 5.6 L25.50 5.4 L26.25 5.4 L27.00 5.6 L27.75 5.6 L28.50 5.7 L29.25 5.7 L30.00 5.7 L30.75 5.5 L31.50 5.5 L32.25 5.7 L33.00 5.7 L33.75 5.6 L34.50 5.6 L35.25 5.6 L36.00 5.7 L36.75 5.6 L37.50 5.6 L38.25 5.6 L39.00 5.7 L39.75 5.6 L40.50 5.7 L41.25 5.6 L42.00 5.8 L42.75 5.7 L43.50 5.7 L44.25 5.7 L45.00 5.7 L45.75 5.8 L46.50 5.7 L47.25 5.7 L48.00 5.7 L48.75 5.7 L49.50 5.7 L50.25 5.7 L51.00 5.7 L51.75 5.8 L52.50 5.7 L53.25 5.7 L54.00 5.7 L54.75 5.8 L55.50 5.8 L56.25 5.7 L57.00 5.8 L57.75 5.8 L58.50 5.8 L59.25 5.8 L60.00 5.7 L60.75 5.7 L61.50 5.8 L62.25 5.8 L63.00 5.8 L63.75 5.7 L64.50 5.8 L65.25 5.7 L66.00 5.7 L66.75 5.8 L67.50 5.7 L68.25 5.7 L69.00 5.8 L69.75 5.7 L70.50 5.8 L71.25 5.8 L72.00 5.7 L72.75 5.8 L73.50 5.7 L74.25 5.7 L75.00 5.8 L75.75 5.8 L76.50 5.8 L77.25 5.8 L78.00 5.7 L78.75 5.8 L79.50 5.8 L80.25 5.7 L81.00 5.8 L81.75 5.8 L82.50 5.8 L83.25 5.8 L84.00 5.7 L84.75 5.8 L85.50 5.8 L86.25 5.8 L87.00 5.7 L87.75 5.7 L88.50 5.8 L89.25 5.8 L90.00 5.8 L90.75 5.8 L91.50 5.8 L92.25 5.8 L93.00 5.8 L93.75 5.8 L94.50 5.8 L95.25 5.8 L96.00 5.8 L96.75 5.8 L97.50 5.8 L98.25 5.8 L99.00 5.8 L99.75 5.8 L100.50 5.8 L101.25 5.8 L102.00 5.8 L102.75 5.8 L103.50 5.8 L104.25 5.8 L105.00 5.8 L105.75 5.8 L106.50 5.8 L107.25 5.8 L108.00 5.8 L108.75 5.8 L109.50 5.8 L110.25 5.8 L111.00 5.8 L111.75 5.8 L112.50 5.8 L113.25 5.8 L114.00 5.8 L114.75 5.8 L115.50 5.8 L116.25 5.8 L117.00 5.8 L117.75 5.8 L118.50 5.8 L119.25 5.8 L120.00 5.8 L120.75 5.8 L121.50 5.8 L122.25 5.8 L123.00 5.8 L123.75 5.8 L124.50 5.8 L125.25 5.8 L126.00 5.8 L126.75 5.8 L127.50 5.8 L128.25 5.8 L129.00 5.8 L129.75 5.8 L130.50 5.8 L131.25 5.8 L132.00 5.8 L132.75 5.8 L133.50 5.8 L134.25 5.8 L135.00 5.8 L135.75 5.8 L136.50 5.8 L137.25 5.8 L138.00 5.8 L138.75 5.8 L139.50 5.8 L139.50 6.8 L138.75 6.9 L138.00 6.8 L137.25 6.8 L136.50 6.9 L135.75 6.9 L135.00 6.9 L134.25 6.9 L133.50 6.8 L132.75 6.9 L132.00 6.9 L131.25 6.8 L130.50 6.9 L129.75 6.8 L129.00 6.8 L128.25 6.8 L127.50 6.9 L126.75 6.9 L126.00 6.8 L125.25 6.8 L124.50 6.8 L123.75 6.8 L123.00 6.8 L122.25 6.9 L121.50 6.8 L120.75 6.8 L120.00 6.9 L119.25 6.9 L118.50 6.8 L117.75 6.9 L117.00 6.8 L116.25 6.9 L115.50 6.8 L114.75 6.9 L114.00 6.8 L113.25 6.9 L112.50 6.9 L111.75 6.9 L111.00 6.9 L110.25 6.8 L109.50 6.9 L108.75 6.8 L108.00 6.9 L107.25 6.9 L106.50 6.9 L105.75 6.9 L105.00 6.9 L104.25 6.8 L103.50 6.8 L102.75 6.9 L102.00 6.9 L101.25 6.9 L100.50 6.9 L99.75 6.9 L99.00 6.9 L98.25 6.9 L97.50 6.9 L96.75 6.9 L96.00 6.8 L95.25 6.8 L94.50 6.9 L93.75 6.8 L93.00 6.8 L92.25 6.8 L91.50 6.8 L90.75 6.9 L90.00 6.9 L89.25 6.9 L88.50 6.9 L87.75 6.9 L87.00 6.9 L86.25 6.9 L85.50 6.9 L84.75 6.9 L84.00 6.9 L83.25 6.9 L82.50 6.9 L81.75 6.9 L81.00 6.9 L80.25 6.9 L79.50 6.8 L78.75 6.8 L78.00 6.9 L77.25 6.9 L76.50 6.9 L75.75 6.9 L75.00 6.9 L74.25 6.9 L73.50 6.9 L72.75 6.8 L72.00 6.9 L71.25 6.8 L70.50 6.9 L69.75 6.9 L69.00 6.9 L68.25 6.9 L67.50 6.9 L66.75 6.8 L66.00 6.9 L65.25 6.9 L64.50 6.9 L63.75 6.9 L63.00 6.9 L62.25 6.9 L61.50 6.9 L60.75 7.0 L60.00 6.9 L59.25 6.9 L58.50 6.9 L57.75 6.9 L57.00 6.9 L56.25 6.9 L55.50 6.9 L54.75 6.8 L54.00 6.9 L53.25 7.0 L52.50 7.0 L51.75 6.9 L51.00 6.9 L50.25 6.9 L49.50 7.0 L48.75 6.9 L48.00 6.9 L47.25 6.9 L46.50 6.9 L45.75 6.9 L45.00 7.0 L44.25 6.9 L43.50 6.9 L42.75 6.9 L42.00 6.9 L41.25 7.0 L40.50 7.0 L39.75 7.0 L39.00 7.0 L38.25 7.0 L37.50 7.0 L36.75 7.1 L36.00 7.0 L35.25 7.1 L34.50 7.0 L33.75 7.1 L33.00 6.9 L32.25 7.0 L31.50 7.1 L30.75 7.2 L30.00 7.0 L29.25 7.0 L28.50 7.0 L27.75 7.0 L27.00 7.0 L26.25 7.2 L25.50 7.2 L24.75 7.1 L24.00 7.0 L23.25 7.2 L22.50 7.3 L21.75 7.3 L21.00 7.2 L20.25 7.2 L19.50 7.3 L18.75 7.3 L18.00 7.3 L17.25 7.3 L16.50 7.4 L15.75 7.3 L15.00 7.4 L14.25 7.5 L13.50 7.6 L12.75 7.6 L12.00 7.6 L11.25 7.6 L10.50 7.7 L9.75 7.9 L9.00 7.8 L8.25 7.8 L7.50 8.1 L6.75 8.1 L6.00 8.4 L5.25 8.2 L4.50 8.5 L3.75 8.7 L3.00 8.8 L2.25 9.0 L1.50 8.9 L0.75 9.1 L0.00 9.1Z" fill="#1a80e6" stroke="#0b3470" stroke-width="0.6"/><path d="M0.00 13.8 L0.75 13.9 L1.50 14.3 L2.25 14.3 L3.00 14.6 L3.75 14.5 L4.50 14.8 L5.25 14.8 L6.00 14.7 L6.75 15.1 L7.50 15.1 L8.25 15.2 L9.00 15.1 L9.75 15.3 L10.50 15.3 L11.25 15.3 L12.00 15.5 L12.75 15.5 L13.50 15.6 L14.25 15.5 L15.00 15.8 L15.75 15.6 L16.50 15.7 L17.25 15.7 L18.00 15.8 L18.75 15.7 L19.50 15.9 L20.25 15.8 L21.00 15.7 L21.75 15.8 L22.50 15.9 L23.25 16.0 L24.00 15.8 L24.75 15.9 L25.50 15.9 L26.25 16.0 L27.00 15.9 L27.75 16.1 L28.50 16.0 L29.25 16.0 L30.00 16.0 L30.75 16.0 L31.50 16.0 L32.25 16.1 L33.00 16.1 L33.75 16.1 L34.50 16.0 L35.25 16.1 L36.00 16.1 L36.75 16.1 L37.50 16.2 L38.25 16.1 L39.00 16.1 L39.75 16.2 L40.50 16.2 L41.25 16.1 L42.00 16.2 L42.75 16.1 L43.50 16.2 L44.25 16.2 L45.00 16.1 L45.75 16.1 L46.50 16.2 L47.25 16.1 L48.00 16.2 L48.75 16.1 L49.50 16.2 L50.25 16.2 L51.00 16.1 L51.75 16.1 L52.50 16.2 L53.25 16.2 L54.00 16.2 L54.75 16.2 L55.50 16.2 L56.25 16.2 L57.00 16.2 L57.75 16.2 L58.50 16.2 L59.25 16.1 L60.00 16.2 L60.75 16.2 L61.50 16.2 L62.25 16.2 L63.00 16.2 L63.75 16.2 L64.50 16.2 L65.25 16.2 L66.00 16.2 L66.75 16.2 L67.50 16.3 L68.25 16.2 L69.00 16.1 L69.75 16.2 L70.50 16.2 L71.25 16.2 L72.00 16.3 L72.75 16.2 L73.50 16.2 L74.25 16.2 L75.00 16.2 L75.75 16.2 L76.50 16.2 L77.25 16.2 L78.00 16.2 L78.75 16.2 L79.50 16.2 L80.25 16.2 L81.00 16.2 L81.75 16.2 L82.50 16.2 L83.25 16.2 L84.00 16.2 L84.75 16.2 L85.50 16.2 L86.25 16.2 L87.00 16.2 L87.75 16.2 L88.50 16.2 L89.25 16.2 L90.00 16.2 L90.75 16.2 L91.50 16.2 L92.25 16.2 L93.00 16.2 L93.75 16.2 L94.50 16.2 L95.25 16.2 L96.00 16.2 L96.75 16.2 L97.50 16.2 L98.25 16.2 L99.00 16.2 L99.75 16.2 L100.50 16.2 L101.25 16.2 L102.00 16.2 L102.75 16.2 L103.50 16.2 L104.25 16.2 L105.00 16.2 L105.75 16.2 L106.50 16.3 L107.25 16.2 L108.00 16.2 L108.75 16.2 L109.50 16.2 L110.25 16.2 L111.00 16.2 L111.75 16.2 L112.50 16.2 L113.25 16.2 L114.00 16.2 L114.75 16.2 L115.50 16.2 L116.25 16.3 L117.00 16.3 L117.75 16.2 L118.50 16.2 L119.25 16.2 L120.00 16.2 L120.75 16.2 L121.50 16.2 L122.25 16.2 L123.00 16.2 L123.75 16.2 L124.50 16.3 L125.25 16.2 L126.00 16.3 L126.75 16.3 L127.50 16.2 L128.25 16.3 L129.00 16.2 L129.75 16.3 L130.50 16.2 L131.25 16.3 L132.00 16.2 L132.75 16.2 L133.50 16.2 L134.25 16.2 L135.00 16.2 L135.75 16.2 L136.50 16.2 L137.25 16.2 L138.00 16.2 L138.75 16.2 L139.50 16.2 L139.50 17.3 L138.75 17.3 L138.00 17.3 L137.25 17.3 L136.50 17.3 L135.75 17.3 L135.00 17.3 L134.25 17.3 L133.50 17.3 L132.75 17.3 L132.00 17.3 L131.25 17.3 L130.50 17.3 L129.75 17.3 L129.00 17.3 L128.25 17.3 L127.50 17.3 L126.75 17.3 L126.00 17.3 L125.25 17.3 L124.50 17.3 L123.75 17.3 L123.00 17.3 L122.25 17.3 L121.50 17.3 L120.75 17.3 L120.00 17.3 L119.25 17.3 L118.50 17.3 L117.75 17.3 L117.00 17.3 L116.25 17.3 L115.50 17.3 L114.75 17.3 L114.00 17.3 L113.25 17.3 L112.50 17.3 L111.75 17.3 L111.00 17.3 L110.25 17.3 L109.50 17.3 L108.75 17.3 L108.00 17.3 L107.25 17.3 L106.50 17.3 L105.75 17.3 L105.00 17.3 L104.25 17.3 L103.50 17.3 L102.75 17.3 L102.00 17.3 L101.25 17.3 L100.50 17.3 L99.75 17.3 L99.00 17.3 L98.25 17.3 L97.50 17.3 L96.75 17.3 L96.00 17.3 L95.25 17.3 L94.50 17.3 L93.75 17.3 L93.00 17.3 L92.25 17.3 L91.50 17.3 L90.75 17.3 L90.00 17.3 L89.25 17.3 L88.50 17.3 L87.75 17.3 L87.00 17.3 L86.25 17.3 L85.50 17.3 L84.75 17.3 L84.00 17.3 L83.25 17.3 L82.50 17.3 L81.75 17.3 L81.00 17.3 L80.25 17.3 L79.50 17.3 L78.75 17.3 L78.00 17.3 L77.25 17.3 L76.50 17.3 L75.75 17.3 L75.00 17.4 L74.25 17.3 L73.50 17.3 L72.75 17.3 L72.00 17.3 L71.25 17.3 L70.50 17.3 L69.75 17.3 L69.00 17.4 L68.25 17.4 L67.50 17.3 L66.75 17.3 L66.00 17.4 L65.25 17.3 L64.50 17.3 L63.75 17.3 L63.00 17.3 L62.25 17.3 L61.50 17.3 L60.75 17.4 L60.00 17.3 L59.25 17.4 L58.50 17.3 L57.75 17.4 L57.00 17.3 L56.25 17.3 L55.50 17.3 L54.75 17.4 L54.00 17.3 L53.25 17.3 L52.50 17.3 L51.75 17.4 L51.00 17.4 L50.25 17.3 L49.50 17.3 L48.75 17.4 L48.00 17.3 L47.25 17.4 L46.50 17.3 L45.75 17.4 L45.00 17.5 L44.25 17.3 L43.50 17.4 L42.75 17.4 L42.00 17.3 L41.25 17.5 L40.50 17.3 L39.75 17.3 L39.00 17.4 L38.25 17.4 L37.50 17.3 L36.75 17.4 L36.00 17.4 L35.25 17.4 L34.50 17.5 L33.75 17.4 L33.00 17.5 L32.25 17.5 L31.50 17.5 L30.75 17.5 L30.00 17.5 L29.25 17.6 L28.50 17.5 L27.75 17.4 L27.00 17.6 L26.25 17.6 L25.50 17.6 L24.75 17.6 L24.00 17.7 L23.25 17.5 L22.50 17.6 L21.75 17.7 L21.00 17.8 L20.25 17.7 L19.50 17.7 L18.75 17.9 L18.00 17.7 L17.25 17.8 L16.50 17.8 L15.75 17.9 L15.00 17.8 L14.25 18.0 L13.50 17.9 L12.75 18.0 L12.00 18.0 L11.25 18.3 L10.50 18.2 L9.75 18.3 L9.00 18.4 L8.25 18.3 L7.50 18.4 L6.75 18.4 L6.00 18.8 L5.25 18.7 L4.50 18.8 L3.75 19.0 L3.00 18.9 L2.25 19.2 L1.50 19.2 L0.75 19.7 L0.00 19.7Z" fill="#1a80e6" stroke="#0b3470" stroke-width="0.6"/></svg>
<div class="t" style="left:0;top:0.6px;padding:1.2px 3px 1.4px 2.6px;background:#8fc7fb;font-size:7px;font-weight:bold;color:#0b1626;transform:scaleX(0.86);transform-origin:0 0">Impact (007_FX_-_TRVTW_Zenhiser_multitrack)</div>
</div>
<div class="a" style="left:871.30px;top:330.80px;width:140.20px;height:22.20px;background:#8fc7fb;overflow:hidden">
<svg class="a" style="left:0;top:0" width="140.20" height="22.20"><rect x="-0.50" y="0" width="1" height="22.20" fill="#86bdf0"/><rect x="17.05" y="0" width="1" height="22.20" fill="#86bdf0"/><rect x="34.60" y="0" width="1" height="22.20" fill="#86bdf0"/><rect x="52.15" y="0" width="1" height="22.20" fill="#86bdf0"/><rect x="69.70" y="0" width="1" height="22.20" fill="#86bdf0"/><rect x="87.25" y="0" width="1" height="22.20" fill="#86bdf0"/><rect x="104.80" y="0" width="1" height="22.20" fill="#86bdf0"/><rect x="122.35" y="0" width="1" height="22.20" fill="#86bdf0"/><path d="M0.00 4.9 L0.75 5.0 L1.50 5.2 L2.25 5.5 L3.00 5.4 L3.75 5.3 L4.50 5.2 L5.25 5.3 L6.00 5.5 L6.75 5.8 L7.50 5.8 L8.25 5.6 L9.00 5.3 L9.75 5.1 L10.50 5.3 L11.25 5.3 L12.00 5.4 L12.75 5.4 L13.50 4.9 L14.25 4.8 L15.00 4.8 L15.75 5.0 L16.50 5.2 L17.25 5.2 L18.00 5.2 L18.75 4.9 L19.50 4.9 L20.25 5.2 L21.00 5.5 L21.75 5.7 L22.50 5.7 L23.25 5.5 L24.00 5.4 L24.75 5.3 L25.50 5.5 L26.25 5.7 L27.00 5.7 L27.75 5.4 L28.50 4.9 L29.25 5.0 L30.00 5.0 L30.75 5.3 L31.50 5.3 L32.25 5.0 L33.00 4.9 L33.75 4.7 L34.50 4.8 L35.25 5.2 L36.00 5.4 L36.75 5.4 L37.50 5.3 L38.25 5.2 L39.00 5.2 L39.75 5.5 L40.50 5.8 L41.25 5.8 L42.00 5.6 L42.75 5.3 L43.50 5.2 L44.25 5.2 L45.00 5.4 L45.75 5.4 L46.50 5.4 L47.25 5.0 L48.00 4.7 L48.75 4.7 L49.50 5.0 L50.25 5.2 L51.00 5.3 L51.75 5.1 L52.50 5.0 L53.25 5.1 L54.00 5.1 L54.75 5.4 L55.50 5.8 L56.25 5.6 L57.00 5.5 L57.75 5.4 L58.50 5.3 L59.25 5.6 L60.00 5.7 L60.75 5.7 L61.50 5.3 L62.25 5.1 L63.00 5.0 L63.75 5.0 L64.50 5.2 L65.25 5.2 L66.00 5.2 L66.75 4.8 L67.50 4.7 L68.25 4.7 L69.00 5.2 L69.75 5.3 L70.50 5.5 L71.25 5.4 L72.00 5.2 L72.75 5.2 L73.50 5.5 L74.25 5.8 L75.00 5.9 L75.75 5.7 L76.50 5.3 L77.25 5.2 L78.00 5.2 L78.75 5.4 L79.50 5.5 L80.25 5.4 L81.00 5.1 L81.75 4.8 L82.50 4.7 L83.25 5.1 L84.00 5.1 L84.75 5.2 L85.50 5.3 L86.25 5.1 L87.00 4.8 L87.75 5.1 L88.50 5.4 L89.25 5.6 L90.00 5.7 L90.75 5.4 L91.50 5.4 L92.25 5.4 L93.00 5.6 L93.75 5.7 L94.50 5.7 L95.25 5.5 L96.00 5.1 L96.75 4.9 L97.50 5.1 L98.25 5.3 L99.00 5.2 L99.75 5.1 L100.50 4.9 L101.25 4.7 L102.00 4.9 L102.75 5.1 L103.50 5.4 L104.25 5.5 L105.00 5.4 L105.75 5.2 L106.50 5.2 L107.25 5.3 L108.00 5.7 L108.75 5.9 L109.50 5.8 L110.25 5.5 L111.00 5.2 L111.75 5.2 L112.50 5.4 L113.25 5.4 L114.00 5.4 L114.75 5.2 L115.50 4.9 L116.25 4.6 L117.00 4.8 L117.75 5.2 L118.50 5.2 L119.25 5.1 L120.00 5.1 L120.75 5.0 L121.50 5.0 L122.25 5.3 L123.00 5.6 L123.75 5.7 L124.50 5.5 L125.25 5.3 L126.00 5.2 L126.75 5.4 L127.50 5.6 L128.25 5.7 L129.00 5.4 L129.75 5.2 L130.50 5.1 L131.25 5.0 L132.00 5.1 L132.75 5.3 L133.50 5.1 L134.25 5.1 L135.00 4.7 L135.75 4.7 L136.50 5.0 L137.25 5.3 L138.00 5.4 L138.75 5.4 L139.50 5.2 L139.50 7.4 L138.75 7.3 L138.00 7.3 L137.25 7.3 L136.50 7.7 L135.75 7.9 L135.00 8.0 L134.25 7.6 L133.50 7.6 L132.75 7.3 L132.00 7.5 L131.25 7.7 L130.50 7.6 L129.75 7.4 L129.00 7.2 L128.25 6.9 L127.50 7.0 L126.75 7.2 L126.00 7.4 L125.25 7.3 L124.50 7.2 L123.75 6.9 L123.00 7.0 L122.25 7.3 L121.50 7.6 L120.75 7.7 L120.00 7.5 L119.25 7.5 L118.50 7.4 L117.75 7.5 L117.00 7.8 L116.25 8.0 L115.50 7.7 L114.75 7.5 L114.00 7.3 L113.25 7.2 L112.50 7.3 L111.75 7.4 L111.00 7.4 L110.25 7.1 L109.50 6.9 L108.75 6.8 L108.00 6.9 L107.25 7.3 L106.50 7.4 L105.75 7.5 L105.00 7.2 L104.25 7.2 L103.50 7.2 L102.75 7.5 L102.00 7.7 L101.25 7.9 L100.50 7.8 L99.75 7.6 L99.00 7.5 L98.25 7.4 L97.50 7.6 L96.75 7.8 L96.00 7.6 L95.25 7.2 L94.50 6.9 L93.75 7.0 L93.00 7.1 L92.25 7.3 L91.50 7.3 L90.75 7.2 L90.00 7.0 L89.25 7.0 L88.50 7.3 L87.75 7.5 L87.00 7.8 L86.25 7.6 L85.50 7.4 L84.75 7.5 L84.00 7.5 L83.25 7.6 L82.50 7.9 L81.75 7.9 L81.00 7.5 L80.25 7.2 L79.50 7.1 L78.75 7.3 L78.00 7.4 L77.25 7.5 L76.50 7.3 L75.75 7.0 L75.00 6.8 L74.25 6.9 L73.50 7.2 L72.75 7.5 L72.00 7.5 L71.25 7.2 L70.50 7.1 L69.75 7.3 L69.00 7.5 L68.25 7.9 L67.50 8.0 L66.75 7.8 L66.00 7.5 L65.25 7.5 L64.50 7.5 L63.75 7.7 L63.00 7.6 L62.25 7.6 L61.50 7.3 L60.75 6.9 L60.00 6.9 L59.25 7.1 L58.50 7.3 L57.75 7.2 L57.00 7.2 L56.25 7.0 L55.50 6.9 L54.75 7.2 L54.00 7.6 L53.25 7.5 L52.50 7.6 L51.75 7.5 L51.00 7.4 L50.25 7.5 L49.50 7.6 L48.75 8.0 L48.00 7.9 L47.25 7.7 L46.50 7.3 L45.75 7.2 L45.00 7.2 L44.25 7.4 L43.50 7.5 L42.75 7.4 L42.00 7.0 L41.25 6.9 L40.50 6.9 L39.75 7.2 L39.00 7.5 L38.25 7.4 L37.50 7.3 L36.75 7.2 L36.00 7.3 L35.25 7.5 L34.50 7.9 L33.75 7.9 L33.00 7.8 L32.25 7.7 L31.50 7.3 L30.75 7.4 L30.00 7.6 L29.25 7.6 L28.50 7.7 L27.75 7.2 L27.00 7.0 L26.25 6.9 L25.50 7.1 L24.75 7.3 L24.00 7.3 L23.25 7.2 L22.50 7.0 L21.75 6.9 L21.00 7.1 L20.25 7.5 L19.50 7.7 L18.75 7.7 L18.00 7.5 L17.25 7.5 L16.50 7.5 L15.75 7.6 L15.00 7.9 L14.25 7.9 L13.50 7.8 L12.75 7.3 L12.00 7.3 L11.25 7.3 L10.50 7.4 L9.75 7.6 L9.00 7.3 L8.25 7.0 L7.50 6.9 L6.75 6.9 L6.00 7.2 L5.25 7.3 L4.50 7.5 L3.75 7.4 L3.00 7.2 L2.25 7.1 L1.50 7.5 L0.75 7.6 L0.00 7.8Z" fill="#1a80e6" stroke="#0b3470" stroke-width="0.6"/><path d="M0.00 15.2 L0.75 15.3 L1.50 15.7 L2.25 15.9 L3.00 15.9 L3.75 15.7 L4.50 15.6 L5.25 15.7 L6.00 16.0 L6.75 16.2 L7.50 16.2 L8.25 16.0 L9.00 15.8 L9.75 15.6 L10.50 15.8 L11.25 15.8 L12.00 15.8 L12.75 15.7 L13.50 15.5 L14.25 15.2 L15.00 15.2 L15.75 15.5 L16.50 15.7 L17.25 15.7 L18.00 15.5 L18.75 15.4 L19.50 15.4 L20.25 15.6 L21.00 15.9 L21.75 16.2 L22.50 16.1 L23.25 16.0 L24.00 15.7 L24.75 15.8 L25.50 16.0 L26.25 16.2 L27.00 16.1 L27.75 15.8 L28.50 15.5 L29.25 15.5 L30.00 15.4 L30.75 15.7 L31.50 15.7 L32.25 15.4 L33.00 15.2 L33.75 15.1 L34.50 15.2 L35.25 15.6 L36.00 15.9 L36.75 15.9 L37.50 15.8 L38.25 15.6 L39.00 15.7 L39.75 16.0 L40.50 16.1 L41.25 16.2 L42.00 16.0 L42.75 15.8 L43.50 15.7 L44.25 15.7 L45.00 15.9 L45.75 15.9 L46.50 15.7 L47.25 15.4 L48.00 15.1 L48.75 15.2 L49.50 15.5 L50.25 15.5 L51.00 15.8 L51.75 15.7 L52.50 15.4 L53.25 15.4 L54.00 15.5 L54.75 15.9 L55.50 16.1 L56.25 16.1 L57.00 15.9 L57.75 15.7 L58.50 15.8 L59.25 16.0 L60.00 16.1 L60.75 16.2 L61.50 15.8 L62.25 15.5 L63.00 15.3 L63.75 15.5 L64.50 15.5 L65.25 15.7 L66.00 15.6 L66.75 15.3 L67.50 15.3 L68.25 15.2 L69.00 15.5 L69.75 15.7 L70.50 15.9 L71.25 15.7 L72.00 15.6 L72.75 15.6 L73.50 16.0 L74.25 16.2 L75.00 16.2 L75.75 16.1 L76.50 15.9 L77.25 15.6 L78.00 15.6 L78.75 15.7 L79.50 16.0 L80.25 15.9 L81.00 15.6 L81.75 15.4 L82.50 15.1 L83.25 15.3 L84.00 15.5 L84.75 15.7 L85.50 15.6 L86.25 15.4 L87.00 15.5 L87.75 15.5 L88.50 15.9 L89.25 16.1 L90.00 16.1 L90.75 16.0 L91.50 15.8 L92.25 15.8 L93.00 15.9 L93.75 16.2 L94.50 16.1 L95.25 15.9 L96.00 15.6 L96.75 15.5 L97.50 15.4 L98.25 15.6 L99.00 15.7 L99.75 15.6 L100.50 15.4 L101.25 15.3 L102.00 15.3 L102.75 15.4 L103.50 15.9 L104.25 16.0 L105.00 15.7 L105.75 15.7 L106.50 15.6 L107.25 15.8 L108.00 16.1 L108.75 16.3 L109.50 16.2 L110.25 15.8 L111.00 15.7 L111.75 15.7 L112.50 15.9 L113.25 15.9 L114.00 15.9 L114.75 15.5 L115.50 15.4 L116.25 15.1 L117.00 15.3 L117.75 15.5 L118.50 15.6 L119.25 15.5 L120.00 15.5 L120.75 15.4 L121.50 15.4 L122.25 15.9 L123.00 16.1 L123.75 16.2 L124.50 15.9 L125.25 15.9 L126.00 15.7 L126.75 16.0 L127.50 16.1 L128.25 16.2 L129.00 16.0 L129.75 15.5 L130.50 15.3 L131.25 15.5 L132.00 15.6 L132.75 15.8 L133.50 15.6 L134.25 15.3 L135.00 15.1 L135.75 15.3 L136.50 15.5 L137.25 15.7 L138.00 15.8 L138.75 15.9 L139.50 15.6 L139.50 17.9 L138.75 17.7 L138.00 17.7 L137.25 17.8 L136.50 18.0 L135.75 18.2 L135.00 18.4 L134.25 18.3 L133.50 18.0 L132.75 17.8 L132.00 17.9 L131.25 18.0 L130.50 18.2 L129.75 18.0 L129.00 17.5 L128.25 17.3 L127.50 17.4 L126.75 17.5 L126.00 17.8 L125.25 17.6 L124.50 17.6 L123.75 17.4 L123.00 17.4 L122.25 17.7 L121.50 18.1 L120.75 18.1 L120.00 18.0 L119.25 18.0 L118.50 17.9 L117.75 18.0 L117.00 18.2 L116.25 18.4 L115.50 18.2 L114.75 18.1 L114.00 17.6 L113.25 17.6 L112.50 17.6 L111.75 17.8 L111.00 17.8 L110.25 17.7 L109.50 17.4 L108.75 17.3 L108.00 17.4 L107.25 17.7 L106.50 18.0 L105.75 17.8 L105.00 17.8 L104.25 17.5 L103.50 17.7 L102.75 18.1 L102.00 18.2 L101.25 18.3 L100.50 18.1 L99.75 17.9 L99.00 17.9 L98.25 17.9 L97.50 18.2 L96.75 18.0 L96.00 18.0 L95.25 17.6 L94.50 17.4 L93.75 17.3 L93.00 17.6 L92.25 17.7 L91.50 17.7 L90.75 17.5 L90.00 17.4 L89.25 17.4 L88.50 17.6 L87.75 18.0 L87.00 18.0 L86.25 18.1 L85.50 17.9 L84.75 17.8 L84.00 18.0 L83.25 18.2 L82.50 18.4 L81.75 18.1 L81.00 18.0 L80.25 17.6 L79.50 17.5 L78.75 17.8 L78.00 17.9 L77.25 17.9 L76.50 17.6 L75.75 17.4 L75.00 17.3 L74.25 17.4 L73.50 17.6 L72.75 17.9 L72.00 17.9 L71.25 17.8 L70.50 17.6 L69.75 17.8 L69.00 18.0 L68.25 18.3 L67.50 18.3 L66.75 18.2 L66.00 18.0 L65.25 17.8 L64.50 18.0 L63.75 18.0 L63.00 18.2 L62.25 18.0 L61.50 17.7 L60.75 17.4 L60.00 17.4 L59.25 17.6 L58.50 17.7 L57.75 17.8 L57.00 17.7 L56.25 17.4 L55.50 17.4 L54.75 17.6 L54.00 18.0 L53.25 18.1 L52.50 18.1 L51.75 17.8 L51.00 17.7 L50.25 18.0 L49.50 18.1 L48.75 18.3 L48.00 18.4 L47.25 18.2 L46.50 17.8 L45.75 17.6 L45.00 17.6 L44.25 17.8 L43.50 17.8 L42.75 17.7 L42.00 17.5 L41.25 17.3 L40.50 17.4 L39.75 17.5 L39.00 17.8 L38.25 18.0 L37.50 17.7 L36.75 17.6 L36.00 17.6 L35.25 17.9 L34.50 18.3 L33.75 18.4 L33.00 18.3 L32.25 18.1 L31.50 17.8 L30.75 17.8 L30.00 18.1 L29.25 18.0 L28.50 18.0 L27.75 17.8 L27.00 17.4 L26.25 17.3 L25.50 17.5 L24.75 17.7 L24.00 17.8 L23.25 17.5 L22.50 17.4 L21.75 17.3 L21.00 17.6 L20.25 18.0 L19.50 18.1 L18.75 18.1 L18.00 18.0 L17.25 17.9 L16.50 17.9 L15.75 18.0 L15.00 18.3 L14.25 18.3 L13.50 18.0 L12.75 17.8 L12.00 17.7 L11.25 17.8 L10.50 17.8 L9.75 17.9 L9.00 17.8 L8.25 17.5 L7.50 17.3 L6.75 17.3 L6.00 17.6 L5.25 17.9 L4.50 17.9 L3.75 17.8 L3.00 17.6 L2.25 17.6 L1.50 17.9 L0.75 18.2 L0.00 18.3Z" fill="#1a80e6" stroke="#0b3470" stroke-width="0.6"/></svg>
<div class="t" style="left:0;top:0.6px;padding:1.2px 3px 1.4px 2.6px;background:#8fc7fb;font-size:7px;font-weight:bold;color:#0b1626;transform:scaleX(0.86);transform-origin:0 0">Synth (036_a__Synth_Loop_101bpm_A3_-_TRVTW</div>
</div>
<div class="a" style="left:590.50px;top:380.00px;width:210.60px;height:22.20px;background:#8fc7fb;overflow:hidden">
<svg class="a" style="left:0;top:0" width="210.60" height="22.20"><rect x="-0.50" y="0" width="1" height="22.20" fill="#86bdf0"/><rect x="17.05" y="0" width="1" height="22.20" fill="#86bdf0"/><rect x="34.60" y="0" width="1" height="22.20" fill="#86bdf0"/><rect x="52.15" y="0" width="1" height="22.20" fill="#86bdf0"/><rect x="69.70" y="0" width="1" height="22.20" fill="#86bdf0"/><rect x="87.25" y="0" width="1" height="22.20" fill="#86bdf0"/><rect x="104.80" y="0" width="1" height="22.20" fill="#86bdf0"/><rect x="122.35" y="0" width="1" height="22.20" fill="#86bdf0"/><rect x="139.90" y="0" width="1" height="22.20" fill="#86bdf0"/><rect x="157.45" y="0" width="1" height="22.20" fill="#86bdf0"/><rect x="175.00" y="0" width="1" height="22.20" fill="#86bdf0"/><rect x="192.55" y="0" width="1" height="22.20" fill="#86bdf0"/><path d="M0.00 5.8 L0.75 5.8 L1.50 5.8 L2.25 5.8 L3.00 5.8 L3.75 5.8 L4.50 5.8 L5.25 5.8 L6.00 5.8 L6.75 5.8 L7.50 5.8 L8.25 5.8 L9.00 5.8 L9.75 5.8 L10.50 5.8 L11.25 5.8 L12.00 5.8 L12.75 5.8 L13.50 5.8 L14.25 5.8 L15.00 5.8 L15.75 5.8 L16.50 5.8 L17.25 5.8 L18.00 5.8 L18.75 5.8 L19.50 5.8 L20.25 5.8 L21.00 5.8 L21.75 5.8 L22.50 5.8 L23.25 5.8 L24.00 5.8 L24.75 5.8 L25.50 5.8 L26.25 5.8 L27.00 5.8 L27.75 5.8 L28.50 5.8 L29.25 5.8 L30.00 5.8 L30.75 5.8 L31.50 5.8 L32.25 5.8 L33.00 5.8 L33.75 5.8 L34.50 5.8 L35.25 5.8 L36.00 5.8 L36.75 5.8 L37.50 5.8 L38.25 5.8 L39.00 5.8 L39.75 5.8 L40.50 5.8 L41.25 5.8 L42.00 5.8 L42.75 5.8 L43.50 5.8 L44.25 5.8 L45.00 5.8 L45.75 5.8 L46.50 5.8 L47.25 5.8 L48.00 5.8 L48.75 5.8 L49.50 5.8 L50.25 5.8 L51.00 5.8 L51.75 5.8 L52.50 5.8 L53.25 5.8 L54.00 5.8 L54.75 5.8 L55.50 5.8 L56.25 5.8 L57.00 5.8 L57.75 5.8 L58.50 5.8 L59.25 5.8 L60.00 5.8 L60.75 5.8 L61.50 5.8 L62.25 5.8 L63.00 5.8 L63.75 5.8 L64.50 5.8 L65.25 5.8 L66.00 5.8 L66.75 5.8 L67.50 5.8 L68.25 5.8 L69.00 5.8 L69.75 5.8 L70.50 5.8 L71.25 5.8 L72.00 5.8 L72.75 5.8 L73.50 5.8 L74.25 5.8 L75.00 5.8 L75.75 5.8 L76.50 5.8 L77.25 5.8 L78.00 5.8 L78.75 5.8 L79.50 5.8 L80.25 5.8 L81.00 5.8 L81.75 5.8 L82.50 5.8 L83.25 5.8 L84.00 5.8 L84.75 5.8 L85.50 5.8 L86.25 5.8 L87.00 5.8 L87.75 5.8 L88.50 5.8 L89.25 5.8 L90.00 5.8 L90.75 5.8 L91.50 5.8 L92.25 5.8 L93.00 5.8 L93.75 5.8 L94.50 5.8 L95.25 5.8 L96.00 5.8 L96.75 5.8 L97.50 5.8 L98.25 5.8 L99.00 5.8 L99.75 5.8 L100.50 5.8 L101.25 5.8 L102.00 5.8 L102.75 5.8 L103.50 5.8 L104.25 5.8 L105.00 5.8 L105.75 5.8 L106.50 5.8 L107.25 5.8 L108.00 5.8 L108.75 5.8 L109.50 5.8 L110.25 5.8 L111.00 5.8 L111.75 5.8 L112.50 5.8 L113.25 5.8 L114.00 5.8 L114.75 5.8 L115.50 5.8 L116.25 5.8 L117.00 5.8 L117.75 5.8 L118.50 5.8 L119.25 5.8 L120.00 5.8 L120.75 5.8 L121.50 5.8 L122.25 5.8 L123.00 5.8 L123.75 5.8 L124.50 5.8 L125.25 5.8 L126.00 5.8 L126.75 5.8 L127.50 5.8 L128.25 5.8 L129.00 5.8 L129.75 5.8 L130.50 5.8 L131.25 5.8 L132.00 5.8 L132.75 5.8 L133.50 5.8 L134.25 5.8 L135.00 5.8 L135.75 5.8 L136.50 5.8 L137.25 5.8 L138.00 5.8 L138.75 5.8 L139.50 5.8 L140.25 5.8 L141.00 5.8 L141.75 5.8 L142.50 5.8 L143.25 5.8 L144.00 5.8 L144.75 5.8 L145.50 5.8 L146.25 5.8 L147.00 5.8 L147.75 5.8 L148.50 5.8 L149.25 5.8 L150.00 5.8 L150.75 5.8 L151.50 5.8 L152.25 5.8 L153.00 5.8 L153.75 5.8 L154.50 5.8 L155.25 5.8 L156.00 5.8 L156.75 5.8 L157.50 5.8 L158.25 5.8 L159.00 5.8 L159.75 5.8 L160.50 5.8 L161.25 5.8 L162.00 5.8 L162.75 5.8 L163.50 5.8 L164.25 5.8 L165.00 5.8 L165.75 5.8 L166.50 5.8 L167.25 5.8 L168.00 5.8 L168.75 5.8 L169.50 5.8 L170.25 5.8 L171.00 5.8 L171.75 5.8 L172.50 5.8 L173.25 5.8 L174.00 5.8 L174.75 5.8 L175.50 5.8 L176.25 5.8 L177.00 5.8 L177.75 5.8 L178.50 5.8 L179.25 5.8 L180.00 5.8 L180.75 5.8 L181.50 5.8 L182.25 5.8 L183.00 5.8 L183.75 5.8 L184.50 5.8 L185.25 5.8 L186.00 5.8 L186.75 5.8 L187.50 5.8 L188.25 5.8 L189.00 5.8 L189.75 5.8 L190.50 5.8 L191.25 5.8 L192.00 5.8 L192.75 5.8 L193.50 5.8 L194.25 5.8 L195.00 5.8 L195.75 5.8 L196.50 5.8 L197.25 5.8 L198.00 5.8 L198.75 5.8 L199.50 5.8 L200.25 5.8 L201.00 5.8 L201.75 5.8 L202.50 5.8 L203.25 5.8 L204.00 5.8 L204.75 5.8 L205.50 5.8 L206.25 5.8 L207.00 5.8 L207.75 5.8 L208.50 5.8 L209.25 5.8 L210.00 5.8 L210.00 6.8 L209.25 6.8 L208.50 6.8 L207.75 6.8 L207.00 6.8 L206.25 6.8 L205.50 6.8 L204.75 6.8 L204.00 6.8 L203.25 6.8 L202.50 6.8 L201.75 6.8 L201.00 6.8 L200.25 6.8 L199.50 6.8 L198.75 6.8 L198.00 6.8 L197.25 6.8 L196.50 6.8 L195.75 6.8 L195.00 6.8 L194.25 6.8 L193.50 6.8 L192.75 6.8 L192.00 6.8 L191.25 6.8 L190.50 6.8 L189.75 6.8 L189.00 6.8 L188.25 6.8 L187.50 6.8 L186.75 6.8 L186.00 6.8 L185.25 6.8 L184.50 6.8 L183.75 6.8 L183.00 6.8 L182.25 6.8 L181.50 6.8 L180.75 6.8 L180.00 6.8 L179.25 6.8 L178.50 6.8 L177.75 6.8 L177.00 6.8 L176.25 6.8 L175.50 6.8 L174.75 6.8 L174.00 6.8 L173.25 6.8 L172.50 6.8 L171.75 6.8 L171.00 6.8 L170.25 6.8 L169.50 6.8 L168.75 6.8 L168.00 6.8 L167.25 6.8 L166.50 6.8 L165.75 6.8 L165.00 6.8 L164.25 6.8 L163.50 6.8 L162.75 6.8 L162.00 6.8 L161.25 6.8 L160.50 6.8 L159.75 6.8 L159.00 6.8 L158.25 6.8 L157.50 6.8 L156.75 6.8 L156.00 6.8 L155.25 6.8 L154.50 6.8 L153.75 6.8 L153.00 6.8 L152.25 6.8 L151.50 6.8 L150.75 6.8 L150.00 6.8 L149.25 6.8 L148.50 6.8 L147.75 6.8 L147.00 6.8 L146.25 6.8 L145.50 6.8 L144.75 6.8 L144.00 6.8 L143.25 6.8 L142.50 6.8 L141.75 6.8 L141.00 6.8 L140.25 6.8 L139.50 6.8 L138.75 6.8 L138.00 6.8 L137.25 6.8 L136.50 6.8 L135.75 6.8 L135.00 6.8 L134.25 6.8 L133.50 6.8 L132.75 6.8 L132.00 6.8 L131.25 6.8 L130.50 6.8 L129.75 6.8 L129.00 6.8 L128.25 6.8 L127.50 6.8 L126.75 6.8 L126.00 6.8 L125.25 6.8 L124.50 6.8 L123.75 6.8 L123.00 6.8 L122.25 6.8 L121.50 6.8 L120.75 6.8 L120.00 6.8 L119.25 6.8 L118.50 6.8 L117.75 6.8 L117.00 6.8 L116.25 6.8 L115.50 6.8 L114.75 6.8 L114.00 6.8 L113.25 6.8 L112.50 6.8 L111.75 6.8 L111.00 6.8 L110.25 6.8 L109.50 6.8 L108.75 6.8 L108.00 6.8 L107.25 6.8 L106.50 6.8 L105.75 6.8 L105.00 6.8 L104.25 6.8 L103.50 6.8 L102.75 6.8 L102.00 6.8 L101.25 6.8 L100.50 6.8 L99.75 6.8 L99.00 6.8 L98.25 6.8 L97.50 6.8 L96.75 6.8 L96.00 6.8 L95.25 6.8 L94.50 6.8 L93.75 6.8 L93.00 6.8 L92.25 6.8 L91.50 6.8 L90.75 6.8 L90.00 6.8 L89.25 6.8 L88.50 6.8 L87.75 6.8 L87.00 6.8 L86.25 6.8 L85.50 6.8 L84.75 6.8 L84.00 6.8 L83.25 6.8 L82.50 6.8 L81.75 6.8 L81.00 6.8 L80.25 6.8 L79.50 6.8 L78.75 6.8 L78.00 6.8 L77.25 6.8 L76.50 6.8 L75.75 6.8 L75.00 6.8 L74.25 6.8 L73.50 6.8 L72.75 6.8 L72.00 6.8 L71.25 6.8 L70.50 6.8 L69.75 6.8 L69.00 6.8 L68.25 6.8 L67.50 6.8 L66.75 6.8 L66.00 6.8 L65.25 6.8 L64.50 6.8 L63.75 6.8 L63.00 6.8 L62.25 6.8 L61.50 6.8 L60.75 6.8 L60.00 6.8 L59.25 6.8 L58.50 6.8 L57.75 6.8 L57.00 6.8 L56.25 6.8 L55.50 6.8 L54.75 6.8 L54.00 6.8 L53.25 6.8 L52.50 6.8 L51.75 6.8 L51.00 6.8 L50.25 6.8 L49.50 6.8 L48.75 6.8 L48.00 6.8 L47.25 6.8 L46.50 6.8 L45.75 6.8 L45.00 6.8 L44.25 6.8 L43.50 6.8 L42.75 6.8 L42.00 6.8 L41.25 6.8 L40.50 6.8 L39.75 6.8 L39.00 6.8 L38.25 6.8 L37.50 6.8 L36.75 6.8 L36.00 6.8 L35.25 6.8 L34.50 6.8 L33.75 6.8 L33.00 6.8 L32.25 6.8 L31.50 6.8 L30.75 6.8 L30.00 6.8 L29.25 6.8 L28.50 6.8 L27.75 6.8 L27.00 6.8 L26.25 6.8 L25.50 6.8 L24.75 6.8 L24.00 6.8 L23.25 6.8 L22.50 6.8 L21.75 6.8 L21.00 6.8 L20.25 6.8 L19.50 6.8 L18.75 6.8 L18.00 6.8 L17.25 6.8 L16.50 6.8 L15.75 6.8 L15.00 6.8 L14.25 6.8 L13.50 6.8 L12.75 6.8 L12.00 6.8 L11.25 6.8 L10.50 6.8 L9.75 6.8 L9.00 6.8 L8.25 6.8 L7.50 6.8 L6.75 6.8 L6.00 6.8 L5.25 6.8 L4.50 6.8 L3.75 6.8 L3.00 6.8 L2.25 6.8 L1.50 6.8 L0.75 6.8 L0.00 6.8Z" fill="#1a80e6" stroke="#0b3470" stroke-width="0.6"/><path d="M0.00 16.3 L0.75 16.3 L1.50 16.3 L2.25 16.3 L3.00 16.3 L3.75 16.3 L4.50 16.3 L5.25 16.3 L6.00 16.3 L6.75 16.3 L7.50 16.3 L8.25 16.3 L9.00 16.3 L9.75 16.3 L10.50 16.3 L11.25 16.3 L12.00 16.3 L12.75 16.3 L13.50 16.3 L14.25 16.3 L15.00 16.3 L15.75 16.3 L16.50 16.3 L17.25 16.3 L18.00 16.3 L18.75 16.3 L19.50 16.3 L20.25 16.3 L21.00 16.3 L21.75 16.3 L22.50 16.3 L23.25 16.3 L24.00 16.3 L24.75 16.3 L25.50 16.3 L26.25 16.3 L27.00 16.3 L27.75 16.3 L28.50 16.3 L29.25 16.3 L30.00 16.3 L30.75 16.3 L31.50 16.3 L32.25 16.3 L33.00 16.3 L33.75 16.3 L34.50 16.3 L35.25 16.3 L36.00 16.3 L36.75 16.3 L37.50 16.3 L38.25 16.3 L39.00 16.3 L39.75 16.3 L40.50 16.3 L41.25 16.3 L42.00 16.3 L42.75 16.3 L43.50 16.3 L44.25 16.3 L45.00 16.3 L45.75 16.3 L46.50 16.3 L47.25 16.3 L48.00 16.3 L48.75 16.3 L49.50 16.3 L50.25 16.3 L51.00 16.3 L51.75 16.3 L52.50 16.3 L53.25 16.3 L54.00 16.3 L54.75 16.3 L55.50 16.3 L56.25 16.3 L57.00 16.3 L57.75 16.3 L58.50 16.3 L59.25 16.3 L60.00 16.3 L60.75 16.3 L61.50 16.3 L62.25 16.3 L63.00 16.3 L63.75 16.3 L64.50 16.3 L65.25 16.3 L66.00 16.3 L66.75 16.3 L67.50 16.3 L68.25 16.3 L69.00 16.3 L69.75 16.3 L70.50 16.3 L71.25 16.3 L72.00 16.3 L72.75 16.3 L73.50 16.3 L74.25 16.3 L75.00 16.3 L75.75 16.3 L76.50 16.3 L77.25 16.3 L78.00 16.3 L78.75 16.3 L79.50 16.3 L80.25 16.3 L81.00 16.3 L81.75 16.3 L82.50 16.3 L83.25 16.3 L84.00 16.3 L84.75 16.3 L85.50 16.3 L86.25 16.3 L87.00 16.3 L87.75 16.3 L88.50 16.3 L89.25 16.3 L90.00 16.3 L90.75 16.3 L91.50 16.3 L92.25 16.3 L93.00 16.3 L93.75 16.3 L94.50 16.3 L95.25 16.3 L96.00 16.3 L96.75 16.3 L97.50 16.3 L98.25 16.3 L99.00 16.3 L99.75 16.3 L100.50 16.3 L101.25 16.3 L102.00 16.3 L102.75 16.3 L103.50 16.3 L104.25 16.3 L105.00 16.3 L105.75 16.3 L106.50 16.3 L107.25 16.3 L108.00 16.3 L108.75 16.3 L109.50 16.3 L110.25 16.3 L111.00 16.3 L111.75 16.3 L112.50 16.3 L113.25 16.3 L114.00 16.3 L114.75 16.3 L115.50 16.3 L116.25 16.3 L117.00 16.3 L117.75 16.3 L118.50 16.3 L119.25 16.3 L120.00 16.3 L120.75 16.3 L121.50 16.3 L122.25 16.3 L123.00 16.3 L123.75 16.3 L124.50 16.3 L125.25 16.3 L126.00 16.3 L126.75 16.3 L127.50 16.3 L128.25 16.3 L129.00 16.3 L129.75 16.3 L130.50 16.3 L131.25 16.3 L132.00 16.3 L132.75 16.3 L133.50 16.3 L134.25 16.3 L135.00 16.3 L135.75 16.3 L136.50 16.3 L137.25 16.3 L138.00 16.3 L138.75 16.3 L139.50 16.3 L140.25 16.3 L141.00 16.3 L141.75 16.3 L142.50 16.3 L143.25 16.3 L144.00 16.3 L144.75 16.3 L145.50 16.3 L146.25 16.3 L147.00 16.3 L147.75 16.3 L148.50 16.3 L149.25 16.3 L150.00 16.3 L150.75 16.3 L151.50 16.3 L152.25 16.3 L153.00 16.3 L153.75 16.3 L154.50 16.3 L155.25 16.3 L156.00 16.3 L156.75 16.3 L157.50 16.3 L158.25 16.3 L159.00 16.3 L159.75 16.3 L160.50 16.3 L161.25 16.3 L162.00 16.3 L162.75 16.3 L163.50 16.3 L164.25 16.3 L165.00 16.3 L165.75 16.3 L166.50 16.3 L167.25 16.3 L168.00 16.3 L168.75 16.3 L169.50 16.3 L170.25 16.3 L171.00 16.3 L171.75 16.3 L172.50 16.3 L173.25 16.3 L174.00 16.3 L174.75 16.3 L175.50 16.3 L176.25 16.3 L177.00 16.3 L177.75 16.3 L178.50 16.3 L179.25 16.3 L180.00 16.3 L180.75 16.3 L181.50 16.3 L182.25 16.3 L183.00 16.3 L183.75 16.3 L184.50 16.3 L185.25 16.3 L186.00 16.3 L186.75 16.3 L187.50 16.3 L188.25 16.3 L189.00 16.3 L189.75 16.3 L190.50 16.3 L191.25 16.3 L192.00 16.3 L192.75 16.3 L193.50 16.3 L194.25 16.3 L195.00 16.3 L195.75 16.3 L196.50 16.3 L197.25 16.3 L198.00 16.3 L198.75 16.3 L199.50 16.3 L200.25 16.3 L201.00 16.3 L201.75 16.3 L202.50 16.3 L203.25 16.3 L204.00 16.3 L204.75 16.3 L205.50 16.3 L206.25 16.3 L207.00 16.3 L207.75 16.3 L208.50 16.3 L209.25 16.3 L210.00 16.3 L210.00 17.3 L209.25 17.3 L208.50 17.3 L207.75 17.3 L207.00 17.3 L206.25 17.3 L205.50 17.3 L204.75 17.3 L204.00 17.3 L203.25 17.3 L202.50 17.3 L201.75 17.3 L201.00 17.3 L200.25 17.3 L199.50 17.3 L198.75 17.3 L198.00 17.3 L197.25 17.3 L196.50 17.3 L195.75 17.3 L195.00 17.3 L194.25 17.3 L193.50 17.3 L192.75 17.3 L192.00 17.3 L191.25 17.3 L190.50 17.3 L189.75 17.3 L189.00 17.3 L188.25 17.3 L187.50 17.3 L186.75 17.3 L186.00 17.3 L185.25 17.3 L184.50 17.3 L183.75 17.3 L183.00 17.3 L182.25 17.3 L181.50 17.3 L180.75 17.3 L180.00 17.3 L179.25 17.3 L178.50 17.3 L177.75 17.3 L177.00 17.3 L176.25 17.3 L175.50 17.3 L174.75 17.3 L174.00 17.3 L173.25 17.3 L172.50 17.3 L171.75 17.3 L171.00 17.3 L170.25 17.3 L169.50 17.3 L168.75 17.3 L168.00 17.3 L167.25 17.3 L166.50 17.3 L165.75 17.3 L165.00 17.3 L164.25 17.3 L163.50 17.3 L162.75 17.3 L162.00 17.3 L161.25 17.3 L160.50 17.3 L159.75 17.3 L159.00 17.3 L158.25 17.3 L157.50 17.3 L156.75 17.3 L156.00 17.3 L155.25 17.3 L154.50 17.3 L153.75 17.3 L153.00 17.3 L152.25 17.3 L151.50 17.3 L150.75 17.3 L150.00 17.3 L149.25 17.3 L148.50 17.3 L147.75 17.3 L147.00 17.3 L146.25 17.3 L145.50 17.3 L144.75 17.3 L144.00 17.3 L143.25 17.3 L142.50 17.3 L141.75 17.3 L141.00 17.3 L140.25 17.3 L139.50 17.3 L138.75 17.3 L138.00 17.3 L137.25 17.3 L136.50 17.3 L135.75 17.3 L135.00 17.3 L134.25 17.3 L133.50 17.3 L132.75 17.3 L132.00 17.3 L131.25 17.3 L130.50 17.3 L129.75 17.3 L129.00 17.3 L128.25 17.3 L127.50 17.3 L126.75 17.3 L126.00 17.3 L125.25 17.3 L124.50 17.3 L123.75 17.3 L123.00 17.3 L122.25 17.3 L121.50 17.3 L120.75 17.3 L120.00 17.3 L119.25 17.3 L118.50 17.3 L117.75 17.3 L117.00 17.3 L116.25 17.3 L115.50 17.3 L114.75 17.3 L114.00 17.3 L113.25 17.3 L112.50 17.3 L111.75 17.3 L111.00 17.3 L110.25 17.3 L109.50 17.3 L108.75 17.3 L108.00 17.3 L107.25 17.3 L106.50 17.3 L105.75 17.3 L105.00 17.3 L104.25 17.3 L103.50 17.3 L102.75 17.3 L102.00 17.3 L101.25 17.3 L100.50 17.3 L99.75 17.3 L99.00 17.3 L98.25 17.3 L97.50 17.3 L96.75 17.3 L96.00 17.3 L95.25 17.3 L94.50 17.3 L93.75 17.3 L93.00 17.3 L92.25 17.3 L91.50 17.3 L90.75 17.3 L90.00 17.3 L89.25 17.3 L88.50 17.3 L87.75 17.3 L87.00 17.3 L86.25 17.3 L85.50 17.3 L84.75 17.3 L84.00 17.3 L83.25 17.3 L82.50 17.3 L81.75 17.3 L81.00 17.3 L80.25 17.3 L79.50 17.3 L78.75 17.3 L78.00 17.3 L77.25 17.3 L76.50 17.3 L75.75 17.3 L75.00 17.3 L74.25 17.3 L73.50 17.3 L72.75 17.3 L72.00 17.3 L71.25 17.3 L70.50 17.3 L69.75 17.3 L69.00 17.3 L68.25 17.3 L67.50 17.3 L66.75 17.3 L66.00 17.3 L65.25 17.3 L64.50 17.3 L63.75 17.3 L63.00 17.3 L62.25 17.3 L61.50 17.3 L60.75 17.3 L60.00 17.3 L59.25 17.3 L58.50 17.3 L57.75 17.3 L57.00 17.3 L56.25 17.3 L55.50 17.3 L54.75 17.3 L54.00 17.3 L53.25 17.3 L52.50 17.3 L51.75 17.3 L51.00 17.3 L50.25 17.3 L49.50 17.3 L48.75 17.3 L48.00 17.3 L47.25 17.3 L46.50 17.3 L45.75 17.3 L45.00 17.3 L44.25 17.3 L43.50 17.3 L42.75 17.3 L42.00 17.3 L41.25 17.3 L40.50 17.3 L39.75 17.3 L39.00 17.3 L38.25 17.3 L37.50 17.3 L36.75 17.3 L36.00 17.3 L35.25 17.3 L34.50 17.3 L33.75 17.3 L33.00 17.3 L32.25 17.3 L31.50 17.3 L30.75 17.3 L30.00 17.3 L29.25 17.3 L28.50 17.3 L27.75 17.3 L27.00 17.3 L26.25 17.3 L25.50 17.3 L24.75 17.3 L24.00 17.3 L23.25 17.3 L22.50 17.3 L21.75 17.3 L21.00 17.3 L20.25 17.3 L19.50 17.3 L18.75 17.3 L18.00 17.3 L17.25 17.3 L16.50 17.3 L15.75 17.3 L15.00 17.3 L14.25 17.3 L13.50 17.3 L12.75 17.3 L12.00 17.3 L11.25 17.3 L10.50 17.3 L9.75 17.3 L9.00 17.3 L8.25 17.3 L7.50 17.3 L6.75 17.3 L6.00 17.3 L5.25 17.3 L4.50 17.3 L3.75 17.3 L3.00 17.3 L2.25 17.3 L1.50 17.3 L0.75 17.3 L0.00 17.3Z" fill="#1a80e6" stroke="#0b3470" stroke-width="0.6"/></svg>
<div class="t" style="left:0;top:0.6px;padding:1.2px 3px 1.4px 2.6px;background:#8fc7fb;font-size:7px;font-weight:bold;color:#0b1626;transform:scaleX(0.86);transform-origin:0 0">Crash (KSHMR_Crash_01_multitrack(14))</div>
</div>
<div class="a" style="left:871.30px;top:380.00px;width:140.20px;height:22.20px;background:#8fc7fb;overflow:hidden">
<svg class="a" style="left:0;top:0" width="140.20" height="22.20"><rect x="-0.50" y="0" width="1" height="22.20" fill="#86bdf0"/><rect x="17.05" y="0" width="1" height="22.20" fill="#86bdf0"/><rect x="34.60" y="0" width="1" height="22.20" fill="#86bdf0"/><rect x="52.15" y="0" width="1" height="22.20" fill="#86bdf0"/><rect x="69.70" y="0" width="1" height="22.20" fill="#86bdf0"/><rect x="87.25" y="0" width="1" height="22.20" fill="#86bdf0"/><rect x="104.80" y="0" width="1" height="22.20" fill="#86bdf0"/><rect x="122.35" y="0" width="1" height="22.20" fill="#86bdf0"/><path d="M0.00 4.6 L0.75 4.5 L1.50 4.7 L2.25 4.5 L3.00 4.6 L3.75 4.7 L4.50 4.6 L5.25 4.6 L6.00 4.8 L6.75 4.7 L7.50 4.7 L8.25 4.7 L9.00 4.7 L9.75 4.7 L10.50 4.8 L11.25 4.9 L12.00 4.9 L12.75 4.8 L13.50 4.8 L14.25 4.9 L15.00 4.9 L15.75 4.9 L16.50 5.0 L17.25 4.9 L18.00 5.0 L18.75 4.9 L19.50 5.0 L20.25 5.0 L21.00 5.1 L21.75 5.1 L22.50 5.1 L23.25 5.0 L24.00 5.1 L24.75 5.0 L25.50 5.1 L26.25 5.1 L27.00 5.0 L27.75 5.2 L28.50 5.2 L29.25 5.1 L30.00 5.1 L30.75 5.2 L31.50 5.2 L32.25 5.2 L33.00 5.2 L33.75 5.2 L34.50 5.2 L35.25 5.2 L36.00 5.2 L36.75 5.2 L37.50 5.3 L38.25 5.3 L39.00 5.2 L39.75 5.3 L40.50 5.3 L41.25 5.3 L42.00 5.3 L42.75 5.3 L43.50 5.3 L44.25 5.3 L45.00 5.3 L45.75 5.4 L46.50 5.4 L47.25 5.3 L48.00 5.3 L48.75 5.4 L49.50 5.4 L50.25 5.4 L51.00 5.4 L51.75 5.4 L52.50 5.4 L53.25 5.4 L54.00 5.4 L54.75 5.5 L55.50 5.5 L56.25 5.4 L57.00 5.5 L57.75 5.5 L58.50 5.5 L59.25 5.5 L60.00 5.5 L60.75 5.5 L61.50 5.5 L62.25 5.5 L63.00 5.5 L63.75 5.5 L64.50 5.5 L65.25 5.5 L66.00 5.5 L66.75 5.5 L67.50 5.6 L68.25 5.6 L69.00 5.6 L69.75 5.5 L70.50 5.6 L71.25 5.6 L72.00 5.5 L72.75 5.5 L73.50 5.6 L74.25 5.6 L75.00 5.6 L75.75 5.6 L76.50 5.6 L77.25 5.6 L78.00 5.6 L78.75 5.6 L79.50 5.6 L80.25 5.6 L81.00 5.6 L81.75 5.6 L82.50 5.6 L83.25 5.6 L84.00 5.6 L84.75 5.6 L85.50 5.6 L86.25 5.6 L87.00 5.6 L87.75 5.6 L88.50 5.6 L89.25 5.6 L90.00 5.6 L90.75 5.7 L91.50 5.6 L92.25 5.7 L93.00 5.6 L93.75 5.7 L94.50 5.7 L95.25 5.7 L96.00 5.7 L96.75 5.7 L97.50 5.7 L98.25 5.7 L99.00 5.7 L99.75 5.7 L100.50 5.7 L101.25 5.7 L102.00 5.7 L102.75 5.7 L103.50 5.7 L104.25 5.7 L105.00 5.7 L105.75 5.7 L106.50 5.7 L107.25 5.7 L108.00 5.7 L108.75 5.7 L109.50 5.7 L110.25 5.7 L111.00 5.7 L111.75 5.7 L112.50 5.7 L113.25 5.7 L114.00 5.7 L114.75 5.7 L115.50 5.7 L116.25 5.7 L117.00 5.7 L117.75 5.7 L118.50 5.7 L119.25 5.7 L120.00 5.7 L120.75 5.7 L121.50 5.7 L122.25 5.7 L123.00 5.7 L123.75 5.7 L124.50 5.7 L125.25 5.8 L126.00 5.8 L126.75 5.8 L127.50 5.8 L128.25 5.7 L129.00 5.8 L129.75 5.7 L130.50 5.8 L131.25 5.8 L132.00 5.8 L132.75 5.8 L133.50 5.8 L134.25 5.8 L135.00 5.8 L135.75 5.8 L136.50 5.8 L137.25 5.8 L138.00 5.8 L138.75 5.8 L139.50 5.8 L139.50 6.9 L138.75 6.9 L138.00 6.9 L137.25 6.9 L136.50 6.9 L135.75 6.9 L135.00 6.9 L134.25 6.9 L133.50 6.9 L132.75 6.9 L132.00 6.9 L131.25 6.9 L130.50 6.9 L129.75 6.9 L129.00 6.9 L128.25 6.9 L127.50 6.9 L126.75 6.9 L126.00 6.9 L125.25 6.9 L124.50 6.9 L123.75 6.9 L123.00 6.9 L122.25 6.9 L121.50 6.9 L120.75 6.9 L120.00 6.9 L119.25 6.9 L118.50 6.9 L117.75 6.9 L117.00 6.9 L116.25 6.9 L115.50 6.9 L114.75 6.9 L114.00 6.9 L113.25 6.9 L112.50 6.9 L111.75 6.9 L111.00 6.9 L110.25 6.9 L109.50 7.0 L108.75 6.9 L108.00 7.0 L107.25 6.9 L106.50 6.9 L105.75 7.0 L105.00 6.9 L104.25 6.9 L103.50 7.0 L102.75 7.0 L102.00 7.0 L101.25 7.0 L100.50 7.0 L99.75 7.0 L99.00 7.0 L98.25 7.0 L97.50 7.0 L96.75 7.0 L96.00 7.0 L95.25 7.0 L94.50 7.0 L93.75 7.0 L93.00 7.0 L92.25 7.0 L91.50 7.0 L90.75 7.0 L90.00 7.0 L89.25 7.0 L88.50 7.0 L87.75 7.0 L87.00 7.0 L86.25 7.0 L85.50 7.0 L84.75 7.0 L84.00 7.0 L83.25 7.0 L82.50 7.0 L81.75 7.0 L81.00 7.1 L80.25 7.1 L79.50 7.1 L78.75 7.0 L78.00 7.1 L77.25 7.0 L76.50 7.0 L75.75 7.1 L75.00 7.1 L74.25 7.1 L73.50 7.1 L72.75 7.1 L72.00 7.1 L71.25 7.1 L70.50 7.1 L69.75 7.1 L69.00 7.1 L68.25 7.1 L67.50 7.1 L66.75 7.1 L66.00 7.1 L65.25 7.1 L64.50 7.1 L63.75 7.1 L63.00 7.1 L62.25 7.1 L61.50 7.2 L60.75 7.1 L60.00 7.2 L59.25 7.2 L58.50 7.2 L57.75 7.2 L57.00 7.2 L56.25 7.2 L55.50 7.2 L54.75 7.2 L54.00 7.3 L53.25 7.2 L52.50 7.2 L51.75 7.2 L51.00 7.3 L50.25 7.3 L49.50 7.2 L48.75 7.2 L48.00 7.3 L47.25 7.3 L46.50 7.3 L45.75 7.3 L45.00 7.4 L44.25 7.3 L43.50 7.3 L42.75 7.4 L42.00 7.4 L41.25 7.4 L40.50 7.3 L39.75 7.4 L39.00 7.4 L38.25 7.4 L37.50 7.4 L36.75 7.5 L36.00 7.4 L35.25 7.4 L34.50 7.5 L33.75 7.5 L33.00 7.5 L32.25 7.5 L31.50 7.5 L30.75 7.5 L30.00 7.5 L29.25 7.5 L28.50 7.5 L27.75 7.5 L27.00 7.6 L26.25 7.5 L25.50 7.6 L24.75 7.6 L24.00 7.6 L23.25 7.6 L22.50 7.6 L21.75 7.6 L21.00 7.6 L20.25 7.7 L19.50 7.7 L18.75 7.7 L18.00 7.6 L17.25 7.7 L16.50 7.7 L15.75 7.7 L15.00 7.8 L14.25 7.8 L13.50 7.8 L12.75 7.9 L12.00 7.7 L11.25 7.8 L10.50 7.8 L9.75 7.9 L9.00 8.0 L8.25 7.9 L7.50 8.0 L6.75 8.0 L6.00 7.9 L5.25 8.0 L4.50 8.0 L3.75 8.0 L3.00 8.1 L2.25 8.1 L1.50 8.0 L0.75 8.1 L0.00 8.0Z" fill="#1a80e6" stroke="#0b3470" stroke-width="0.6"/><path d="M0.00 14.8 L0.75 15.0 L1.50 14.9 L2.25 15.0 L3.00 15.1 L3.75 15.2 L4.50 15.1 L5.25 15.2 L6.00 15.1 L6.75 15.0 L7.50 15.1 L8.25 15.3 L9.00 15.3 L9.75 15.3 L10.50 15.2 L11.25 15.3 L12.00 15.3 L12.75 15.4 L13.50 15.4 L14.25 15.3 L15.00 15.4 L15.75 15.4 L16.50 15.3 L17.25 15.3 L18.00 15.4 L18.75 15.3 L19.50 15.4 L20.25 15.4 L21.00 15.5 L21.75 15.5 L22.50 15.5 L23.25 15.4 L24.00 15.5 L24.75 15.5 L25.50 15.6 L26.25 15.6 L27.00 15.6 L27.75 15.5 L28.50 15.5 L29.25 15.5 L30.00 15.6 L30.75 15.6 L31.50 15.6 L32.25 15.6 L33.00 15.7 L33.75 15.7 L34.50 15.7 L35.25 15.7 L36.00 15.6 L36.75 15.7 L37.50 15.7 L38.25 15.7 L39.00 15.8 L39.75 15.7 L40.50 15.7 L41.25 15.7 L42.00 15.7 L42.75 15.7 L43.50 15.7 L44.25 15.8 L45.00 15.8 L45.75 15.8 L46.50 15.8 L47.25 15.8 L48.00 15.8 L48.75 15.8 L49.50 15.9 L50.25 15.8 L51.00 15.9 L51.75 15.8 L52.50 15.8 L53.25 15.9 L54.00 15.9 L54.75 15.9 L55.50 15.9 L56.25 15.9 L57.00 15.9 L57.75 15.9 L58.50 15.9 L59.25 15.9 L60.00 15.9 L60.75 15.9 L61.50 15.9 L62.25 15.9 L63.00 15.9 L63.75 15.9 L64.50 15.9 L65.25 15.9 L66.00 16.0 L66.75 15.9 L67.50 16.0 L68.25 16.0 L69.00 16.0 L69.75 16.0 L70.50 16.0 L71.25 16.0 L72.00 16.0 L72.75 16.0 L73.50 16.0 L74.25 16.0 L75.00 16.0 L75.75 16.0 L76.50 16.0 L77.25 16.0 L78.00 16.0 L78.75 16.1 L79.50 16.0 L80.25 16.1 L81.00 16.0 L81.75 16.1 L82.50 16.0 L83.25 16.0 L84.00 16.1 L84.75 16.1 L85.50 16.1 L86.25 16.1 L87.00 16.1 L87.75 16.1 L88.50 16.1 L89.25 16.1 L90.00 16.1 L90.75 16.1 L91.50 16.1 L92.25 16.1 L93.00 16.1 L93.75 16.1 L94.50 16.1 L95.25 16.1 L96.00 16.1 L96.75 16.1 L97.50 16.1 L98.25 16.1 L99.00 16.1 L99.75 16.1 L100.50 16.1 L101.25 16.1 L102.00 16.1 L102.75 16.1 L103.50 16.1 L104.25 16.1 L105.00 16.1 L105.75 16.1 L106.50 16.1 L107.25 16.1 L108.00 16.1 L108.75 16.1 L109.50 16.1 L110.25 16.1 L111.00 16.2 L111.75 16.2 L112.50 16.2 L113.25 16.1 L114.00 16.2 L114.75 16.2 L115.50 16.2 L116.25 16.2 L117.00 16.2 L117.75 16.2 L118.50 16.2 L119.25 16.2 L120.00 16.2 L120.75 16.2 L121.50 16.2 L122.25 16.2 L123.00 16.2 L123.75 16.2 L124.50 16.2 L125.25 16.2 L126.00 16.2 L126.75 16.2 L127.50 16.2 L128.25 16.2 L129.00 16.2 L129.75 16.2 L130.50 16.2 L131.25 16.2 L132.00 16.2 L132.75 16.2 L133.50 16.2 L134.25 16.2 L135.00 16.2 L135.75 16.2 L136.50 16.2 L137.25 16.2 L138.00 16.2 L138.75 16.2 L139.50 16.2 L139.50 17.3 L138.75 17.3 L138.00 17.3 L137.25 17.3 L136.50 17.3 L135.75 17.3 L135.00 17.3 L134.25 17.3 L133.50 17.3 L132.75 17.3 L132.00 17.3 L131.25 17.3 L130.50 17.3 L129.75 17.3 L129.00 17.3 L128.25 17.3 L127.50 17.3 L126.75 17.3 L126.00 17.3 L125.25 17.3 L124.50 17.3 L123.75 17.3 L123.00 17.3 L122.25 17.3 L121.50 17.4 L120.75 17.4 L120.00 17.4 L119.25 17.4 L118.50 17.4 L117.75 17.4 L117.00 17.4 L116.25 17.4 L115.50 17.4 L114.75 17.4 L114.00 17.4 L113.25 17.4 L112.50 17.4 L111.75 17.4 L111.00 17.4 L110.25 17.4 L109.50 17.4 L108.75 17.4 L108.00 17.4 L107.25 17.4 L106.50 17.4 L105.75 17.4 L105.00 17.4 L104.25 17.4 L103.50 17.4 L102.75 17.4 L102.00 17.4 L101.25 17.4 L100.50 17.4 L99.75 17.4 L99.00 17.4 L98.25 17.4 L97.50 17.4 L96.75 17.4 L96.00 17.4 L95.25 17.4 L94.50 17.4 L93.75 17.4 L93.00 17.4 L92.25 17.4 L91.50 17.4 L90.75 17.4 L90.00 17.4 L89.25 17.4 L88.50 17.5 L87.75 17.4 L87.00 17.5 L86.25 17.4 L85.50 17.5 L84.75 17.4 L84.00 17.5 L83.25 17.5 L82.50 17.5 L81.75 17.5 L81.00 17.5 L80.25 17.5 L79.50 17.5 L78.75 17.5 L78.00 17.5 L77.25 17.5 L76.50 17.5 L75.75 17.5 L75.00 17.5 L74.25 17.5 L73.50 17.5 L72.75 17.5 L72.00 17.5 L71.25 17.6 L70.50 17.5 L69.75 17.5 L69.00 17.6 L68.25 17.5 L67.50 17.5 L66.75 17.6 L66.00 17.6 L65.25 17.6 L64.50 17.6 L63.75 17.6 L63.00 17.6 L62.25 17.6 L61.50 17.6 L60.75 17.6 L60.00 17.6 L59.25 17.6 L58.50 17.6 L57.75 17.6 L57.00 17.6 L56.25 17.6 L55.50 17.6 L54.75 17.7 L54.00 17.7 L53.25 17.7 L52.50 17.7 L51.75 17.7 L51.00 17.6 L50.25 17.7 L49.50 17.7 L48.75 17.7 L48.00 17.7 L47.25 17.7 L46.50 17.7 L45.75 17.7 L45.00 17.7 L44.25 17.7 L43.50 17.8 L42.75 17.8 L42.00 17.8 L41.25 17.8 L40.50 17.8 L39.75 17.8 L39.00 17.8 L38.25 17.8 L37.50 17.9 L36.75 17.8 L36.00 17.9 L35.25 17.8 L34.50 17.8 L33.75 17.9 L33.00 17.8 L32.25 17.9 L31.50 17.9 L30.75 17.9 L30.00 17.9 L29.25 18.0 L28.50 18.0 L27.75 18.0 L27.00 17.9 L26.25 18.0 L25.50 18.0 L24.75 18.0 L24.00 18.0 L23.25 18.1 L22.50 18.1 L21.75 18.0 L21.00 18.0 L20.25 18.2 L19.50 18.1 L18.75 18.2 L18.00 18.1 L17.25 18.2 L16.50 18.2 L15.75 18.2 L15.00 18.1 L14.25 18.2 L13.50 18.2 L12.75 18.2 L12.00 18.2 L11.25 18.2 L10.50 18.4 L9.75 18.3 L9.00 18.2 L8.25 18.3 L7.50 18.5 L6.75 18.5 L6.00 18.4 L5.25 18.3 L4.50 18.5 L3.75 18.4 L3.00 18.4 L2.25 18.6 L1.50 18.6 L0.75 18.5 L0.00 18.7Z" fill="#1a80e6" stroke="#0b3470" stroke-width="0.6"/></svg>
<div class="t" style="left:0;top:0.6px;padding:1.2px 3px 1.4px 2.6px;background:#8fc7fb;font-size:7px;font-weight:bold;color:#0b1626;transform:scaleX(0.86);transform-origin:0 0">Crash (KSHMR_Crash_01_multitrack(14))</div>
</div>
<div class="a" style="left:871.30px;top:404.60px;width:140.20px;height:22.20px;background:#8fc7fb;overflow:hidden">
<svg class="a" style="left:0;top:0" width="140.20" height="22.20"><rect x="-0.50" y="0" width="1" height="22.20" fill="#86bdf0"/><rect x="17.05" y="0" width="1" height="22.20" fill="#86bdf0"/><rect x="34.60" y="0" width="1" height="22.20" fill="#86bdf0"/><rect x="52.15" y="0" width="1" height="22.20" fill="#86bdf0"/><rect x="69.70" y="0" width="1" height="22.20" fill="#86bdf0"/><rect x="87.25" y="0" width="1" height="22.20" fill="#86bdf0"/><rect x="104.80" y="0" width="1" height="22.20" fill="#86bdf0"/><rect x="122.35" y="0" width="1" height="22.20" fill="#86bdf0"/><path d="M0.00 5.8 L0.75 5.8 L1.50 5.8 L2.25 5.8 L3.00 5.8 L3.75 5.8 L4.50 5.1 L5.25 5.8 L6.00 5.8 L6.75 5.8 L7.50 5.8 L8.25 5.8 L9.00 5.2 L9.75 5.8 L10.50 5.8 L11.25 5.8 L12.00 5.8 L12.75 5.8 L13.50 5.3 L14.25 5.8 L15.00 5.8 L15.75 5.8 L16.50 5.8 L17.25 5.8 L18.00 5.5 L18.75 5.8 L19.50 5.8 L20.25 5.8 L21.00 5.8 L21.75 5.8 L22.50 5.6 L23.25 5.8 L24.00 5.8 L24.75 5.8 L25.50 5.8 L26.25 5.8 L27.00 5.7 L27.75 5.8 L28.50 5.8 L29.25 5.8 L30.00 5.8 L30.75 5.0 L31.50 5.8 L32.25 5.8 L33.00 5.8 L33.75 5.8 L34.50 5.8 L35.25 5.1 L36.00 5.8 L36.75 5.8 L37.50 5.8 L38.25 5.8 L39.00 5.8 L39.75 5.2 L40.50 5.8 L41.25 5.8 L42.00 5.8 L42.75 5.8 L43.50 5.8 L44.25 5.4 L45.00 5.8 L45.75 5.8 L46.50 5.8 L47.25 5.8 L48.00 5.8 L48.75 5.5 L49.50 5.8 L50.25 5.8 L51.00 5.8 L51.75 5.8 L52.50 5.8 L53.25 5.6 L54.00 5.8 L54.75 5.8 L55.50 5.8 L56.25 5.8 L57.00 5.8 L57.75 5.7 L58.50 5.8 L59.25 5.8 L60.00 5.8 L60.75 5.8 L61.50 5.0 L62.25 5.8 L63.00 5.8 L63.75 5.8 L64.50 5.8 L65.25 5.8 L66.00 5.2 L66.75 5.8 L67.50 5.8 L68.25 5.8 L69.00 5.8 L69.75 5.8 L70.50 5.3 L71.25 5.8 L72.00 5.8 L72.75 5.8 L73.50 5.8 L74.25 5.8 L75.00 5.4 L75.75 5.8 L76.50 5.8 L77.25 5.8 L78.00 5.8 L78.75 5.8 L79.50 5.5 L80.25 5.8 L81.00 5.8 L81.75 5.8 L82.50 5.8 L83.25 5.8 L84.00 5.7 L84.75 5.8 L85.50 5.8 L86.25 5.8 L87.00 5.8 L87.75 5.8 L88.50 5.8 L89.25 5.8 L90.00 5.8 L90.75 5.8 L91.50 5.8 L92.25 5.1 L93.00 5.8 L93.75 5.8 L94.50 5.8 L95.25 5.8 L96.00 5.8 L96.75 5.2 L97.50 5.8 L98.25 5.8 L99.00 5.8 L99.75 5.8 L100.50 5.8 L101.25 5.3 L102.00 5.8 L102.75 5.8 L103.50 5.8 L104.25 5.8 L105.00 5.8 L105.75 5.5 L106.50 5.8 L107.25 5.8 L108.00 5.8 L108.75 5.8 L109.50 5.8 L110.25 5.6 L111.00 5.8 L111.75 5.8 L112.50 5.8 L113.25 5.8 L114.00 5.8 L114.75 5.7 L115.50 5.8 L116.25 5.8 L117.00 5.8 L117.75 5.8 L118.50 5.0 L119.25 5.8 L120.00 5.8 L120.75 5.8 L121.50 5.8 L122.25 5.8 L123.00 5.1 L123.75 5.8 L124.50 5.8 L125.25 5.8 L126.00 5.8 L126.75 5.8 L127.50 5.2 L128.25 5.8 L129.00 5.8 L129.75 5.8 L130.50 5.8 L131.25 5.8 L132.00 5.4 L132.75 5.8 L133.50 5.8 L134.25 5.8 L135.00 5.8 L135.75 5.8 L136.50 5.5 L137.25 5.8 L138.00 5.8 L138.75 5.8 L139.50 5.8 L139.50 6.8 L138.75 6.8 L138.00 6.8 L137.25 6.8 L136.50 7.2 L135.75 6.8 L135.00 6.8 L134.25 6.8 L133.50 6.8 L132.75 6.8 L132.00 7.3 L131.25 6.8 L130.50 6.8 L129.75 6.8 L129.00 6.8 L128.25 6.8 L127.50 7.4 L126.75 6.8 L126.00 6.8 L125.25 6.8 L124.50 6.8 L123.75 6.8 L123.00 7.5 L122.25 6.8 L121.50 6.8 L120.75 6.8 L120.00 6.8 L119.25 6.8 L118.50 7.7 L117.75 6.8 L117.00 6.8 L116.25 6.8 L115.50 6.8 L114.75 7.0 L114.00 6.8 L113.25 6.8 L112.50 6.8 L111.75 6.8 L111.00 6.8 L110.25 7.1 L109.50 6.8 L108.75 6.8 L108.00 6.8 L107.25 6.8 L106.50 6.8 L105.75 7.2 L105.00 6.8 L104.25 6.8 L103.50 6.8 L102.75 6.8 L102.00 6.8 L101.25 7.3 L100.50 6.8 L99.75 6.8 L99.00 6.8 L98.25 6.8 L97.50 6.8 L96.75 7.5 L96.00 6.8 L95.25 6.8 L94.50 6.8 L93.75 6.8 L93.00 6.8 L92.25 7.6 L91.50 6.8 L90.75 6.8 L90.00 6.8 L89.25 6.8 L88.50 6.9 L87.75 6.8 L87.00 6.8 L86.25 6.8 L85.50 6.8 L84.75 6.8 L84.00 7.0 L83.25 6.8 L82.50 6.8 L81.75 6.8 L81.00 6.8 L80.25 6.8 L79.50 7.1 L78.75 6.8 L78.00 6.8 L77.25 6.8 L76.50 6.8 L75.75 6.8 L75.00 7.2 L74.25 6.8 L73.50 6.8 L72.75 6.8 L72.00 6.8 L71.25 6.8 L70.50 7.4 L69.75 6.8 L69.00 6.8 L68.25 6.8 L67.50 6.8 L66.75 6.8 L66.00 7.5 L65.25 6.8 L64.50 6.8 L63.75 6.8 L63.00 6.8 L62.25 6.8 L61.50 7.6 L60.75 6.8 L60.00 6.8 L59.25 6.8 L58.50 6.8 L57.75 6.9 L57.00 6.8 L56.25 6.8 L55.50 6.8 L54.75 6.8 L54.00 6.8 L53.25 7.0 L52.50 6.8 L51.75 6.8 L51.00 6.8 L50.25 6.8 L49.50 6.8 L48.75 7.2 L48.00 6.8 L47.25 6.8 L46.50 6.8 L45.75 6.8 L45.00 6.8 L44.25 7.3 L43.50 6.8 L42.75 6.8 L42.00 6.8 L41.25 6.8 L40.50 6.8 L39.75 7.4 L39.00 6.8 L38.25 6.8 L37.50 6.8 L36.75 6.8 L36.00 6.8 L35.25 7.5 L34.50 6.8 L33.75 6.8 L33.00 6.8 L32.25 6.8 L31.50 6.8 L30.75 7.7 L30.00 6.8 L29.25 6.8 L28.50 6.8 L27.75 6.8 L27.00 7.0 L26.25 6.8 L25.50 6.8 L24.75 6.8 L24.00 6.8 L23.25 6.8 L22.50 7.1 L21.75 6.8 L21.00 6.8 L20.25 6.8 L19.50 6.8 L18.75 6.8 L18.00 7.2 L17.25 6.8 L16.50 6.8 L15.75 6.8 L15.00 6.8 L14.25 6.8 L13.50 7.3 L12.75 6.8 L12.00 6.8 L11.25 6.8 L10.50 6.8 L9.75 6.8 L9.00 7.5 L8.25 6.8 L7.50 6.8 L6.75 6.8 L6.00 6.8 L5.25 6.8 L4.50 7.6 L3.75 6.8 L3.00 6.8 L2.25 6.8 L1.50 6.8 L0.75 6.9 L0.00 6.8Z" fill="#1a80e6" stroke="#0b3470" stroke-width="0.6"/><path d="M0.00 16.3 L0.75 16.2 L1.50 16.3 L2.25 16.3 L3.00 16.3 L3.75 16.3 L4.50 15.5 L5.25 16.3 L6.00 16.3 L6.75 16.3 L7.50 16.3 L8.25 16.3 L9.00 15.6 L9.75 16.3 L10.50 16.3 L11.25 16.3 L12.00 16.3 L12.75 16.3 L13.50 15.8 L14.25 16.3 L15.00 16.3 L15.75 16.3 L16.50 16.3 L17.25 16.3 L18.00 15.9 L18.75 16.3 L19.50 16.3 L20.25 16.3 L21.00 16.3 L21.75 16.3 L22.50 16.0 L23.25 16.3 L24.00 16.3 L24.75 16.3 L25.50 16.3 L26.25 16.3 L27.00 16.1 L27.75 16.3 L28.50 16.3 L29.25 16.3 L30.00 16.3 L30.75 15.4 L31.50 16.3 L32.25 16.3 L33.00 16.3 L33.75 16.3 L34.50 16.3 L35.25 15.6 L36.00 16.3 L36.75 16.3 L37.50 16.3 L38.25 16.3 L39.00 16.3 L39.75 15.7 L40.50 16.3 L41.25 16.3 L42.00 16.3 L42.75 16.3 L43.50 16.3 L44.25 15.8 L45.00 16.3 L45.75 16.3 L46.50 16.3 L47.25 16.3 L48.00 16.3 L48.75 15.9 L49.50 16.3 L50.25 16.3 L51.00 16.3 L51.75 16.3 L52.50 16.3 L53.25 16.1 L54.00 16.3 L54.75 16.3 L55.50 16.3 L56.25 16.3 L57.00 16.3 L57.75 16.2 L58.50 16.3 L59.25 16.3 L60.00 16.3 L60.75 16.3 L61.50 15.5 L62.25 16.3 L63.00 16.3 L63.75 16.3 L64.50 16.3 L65.25 16.3 L66.00 15.6 L66.75 16.3 L67.50 16.3 L68.25 16.3 L69.00 16.3 L69.75 16.3 L70.50 15.7 L71.25 16.3 L72.00 16.3 L72.75 16.3 L73.50 16.3 L74.25 16.3 L75.00 15.8 L75.75 16.3 L76.50 16.3 L77.25 16.3 L78.00 16.3 L78.75 16.3 L79.50 16.0 L80.25 16.3 L81.00 16.3 L81.75 16.3 L82.50 16.3 L83.25 16.3 L84.00 16.1 L84.75 16.3 L85.50 16.3 L86.25 16.3 L87.00 16.3 L87.75 16.3 L88.50 16.2 L89.25 16.3 L90.00 16.3 L90.75 16.3 L91.50 16.3 L92.25 15.5 L93.00 16.3 L93.75 16.3 L94.50 16.3 L95.25 16.3 L96.00 16.3 L96.75 15.6 L97.50 16.3 L98.25 16.3 L99.00 16.3 L99.75 16.3 L100.50 16.3 L101.25 15.8 L102.00 16.3 L102.75 16.3 L103.50 16.3 L104.25 16.3 L105.00 16.3 L105.75 15.9 L106.50 16.3 L107.25 16.3 L108.00 16.3 L108.75 16.3 L109.50 16.3 L110.25 16.0 L111.00 16.3 L111.75 16.3 L112.50 16.3 L113.25 16.3 L114.00 16.3 L114.75 16.1 L115.50 16.3 L116.25 16.3 L117.00 16.3 L117.75 16.3 L118.50 15.4 L119.25 16.3 L120.00 16.3 L120.75 16.3 L121.50 16.3 L122.25 16.3 L123.00 15.6 L123.75 16.3 L124.50 16.3 L125.25 16.3 L126.00 16.3 L126.75 16.3 L127.50 15.7 L128.25 16.3 L129.00 16.3 L129.75 16.3 L130.50 16.3 L131.25 16.3 L132.00 15.8 L132.75 16.3 L133.50 16.3 L134.25 16.3 L135.00 16.3 L135.75 16.3 L136.50 15.9 L137.25 16.3 L138.00 16.3 L138.75 16.3 L139.50 16.3 L139.50 17.3 L138.75 17.3 L138.00 17.3 L137.25 17.3 L136.50 17.6 L135.75 17.3 L135.00 17.3 L134.25 17.3 L133.50 17.3 L132.75 17.3 L132.00 17.7 L131.25 17.3 L130.50 17.3 L129.75 17.3 L129.00 17.3 L128.25 17.3 L127.50 17.8 L126.75 17.3 L126.00 17.3 L125.25 17.3 L124.50 17.3 L123.75 17.3 L123.00 18.0 L122.25 17.3 L121.50 17.3 L120.75 17.3 L120.00 17.3 L119.25 17.3 L118.50 18.1 L117.75 17.3 L117.00 17.3 L116.25 17.3 L115.50 17.3 L114.75 17.4 L114.00 17.3 L113.25 17.3 L112.50 17.3 L111.75 17.3 L111.00 17.3 L110.25 17.5 L109.50 17.3 L108.75 17.3 L108.00 17.3 L107.25 17.3 L106.50 17.3 L105.75 17.6 L105.00 17.3 L104.25 17.3 L103.50 17.3 L102.75 17.3 L102.00 17.3 L101.25 17.8 L100.50 17.3 L99.75 17.3 L99.00 17.3 L98.25 17.3 L97.50 17.3 L96.75 17.9 L96.00 17.3 L95.25 17.3 L94.50 17.3 L93.75 17.3 L93.00 17.3 L92.25 18.0 L91.50 17.3 L90.75 17.3 L90.00 17.3 L89.25 17.3 L88.50 17.3 L87.75 17.3 L87.00 17.3 L86.25 17.3 L85.50 17.3 L84.75 17.3 L84.00 17.4 L83.25 17.3 L82.50 17.3 L81.75 17.3 L81.00 17.3 L80.25 17.3 L79.50 17.6 L78.75 17.3 L78.00 17.3 L77.25 17.3 L76.50 17.3 L75.75 17.3 L75.00 17.7 L74.25 17.3 L73.50 17.3 L72.75 17.3 L72.00 17.3 L71.25 17.3 L70.50 17.8 L69.75 17.3 L69.00 17.3 L68.25 17.3 L67.50 17.3 L66.75 17.3 L66.00 17.9 L65.25 17.3 L64.50 17.3 L63.75 17.3 L63.00 17.3 L62.25 17.3 L61.50 18.1 L60.75 17.3 L60.00 17.3 L59.25 17.3 L58.50 17.3 L57.75 17.3 L57.00 17.3 L56.25 17.3 L55.50 17.3 L54.75 17.3 L54.00 17.3 L53.25 17.5 L52.50 17.3 L51.75 17.3 L51.00 17.3 L50.25 17.3 L49.50 17.3 L48.75 17.6 L48.00 17.3 L47.25 17.3 L46.50 17.3 L45.75 17.3 L45.00 17.3 L44.25 17.7 L43.50 17.3 L42.75 17.3 L42.00 17.3 L41.25 17.3 L40.50 17.3 L39.75 17.8 L39.00 17.3 L38.25 17.3 L37.50 17.3 L36.75 17.3 L36.00 17.3 L35.25 18.0 L34.50 17.3 L33.75 17.3 L33.00 17.3 L32.25 17.3 L31.50 17.3 L30.75 18.1 L30.00 17.3 L29.25 17.3 L28.50 17.3 L27.75 17.3 L27.00 17.4 L26.25 17.3 L25.50 17.3 L24.75 17.3 L24.00 17.3 L23.25 17.3 L22.50 17.5 L21.75 17.3 L21.00 17.3 L20.25 17.3 L19.50 17.3 L18.75 17.3 L18.00 17.6 L17.25 17.3 L16.50 17.3 L15.75 17.3 L15.00 17.3 L14.25 17.3 L13.50 17.8 L12.75 17.3 L12.00 17.3 L11.25 17.3 L10.50 17.3 L9.75 17.3 L9.00 17.9 L8.25 17.3 L7.50 17.3 L6.75 17.3 L6.00 17.3 L5.25 17.3 L4.50 18.0 L3.75 17.3 L3.00 17.3 L2.25 17.3 L1.50 17.3 L0.75 17.3 L0.00 17.3Z" fill="#1a80e6" stroke="#0b3470" stroke-width="0.6"/></svg>
<div class="t" style="left:0;top:0.6px;padding:1.2px 3px 1.4px 2.6px;background:#8fc7fb;font-size:7px;font-weight:bold;color:#0b1626;transform:scaleX(0.86);transform-origin:0 0">HH_Loop (KSHMR_Trap_Hat_Loop_17_174_multit</div>
</div>
<div class="a" style="left:871.30px;top:429.20px;width:140.20px;height:22.20px;background:#8fc7fb;overflow:hidden">
<svg class="a" style="left:0;top:0" width="140.20" height="22.20"><rect x="-0.50" y="0" width="1" height="22.20" fill="#86bdf0"/><rect x="17.05" y="0" width="1" height="22.20" fill="#86bdf0"/><rect x="34.60" y="0" width="1" height="22.20" fill="#86bdf0"/><rect x="52.15" y="0" width="1" height="22.20" fill="#86bdf0"/><rect x="69.70" y="0" width="1" height="22.20" fill="#86bdf0"/><rect x="87.25" y="0" width="1" height="22.20" fill="#86bdf0"/><rect x="104.80" y="0" width="1" height="22.20" fill="#86bdf0"/><rect x="122.35" y="0" width="1" height="22.20" fill="#86bdf0"/><path d="M0.00 5.8 L0.75 5.1 L1.50 5.4 L2.25 5.7 L3.00 5.8 L3.75 5.8 L4.50 5.8 L5.25 5.8 L6.00 5.8 L6.75 5.8 L7.50 5.8 L8.25 5.8 L9.00 4.6 L9.75 5.0 L10.50 5.4 L11.25 5.7 L12.00 5.8 L12.75 5.8 L13.50 5.8 L14.25 5.8 L15.00 5.8 L15.75 5.8 L16.50 5.8 L17.25 5.8 L18.00 4.8 L18.75 5.2 L19.50 5.5 L20.25 5.8 L21.00 5.8 L21.75 5.8 L22.50 5.8 L23.25 5.8 L24.00 5.8 L24.75 5.8 L25.50 5.8 L26.25 5.8 L27.00 4.7 L27.75 5.2 L28.50 5.6 L29.25 5.8 L30.00 5.8 L30.75 5.8 L31.50 5.8 L32.25 5.8 L33.00 5.8 L33.75 5.8 L34.50 5.8 L35.25 4.6 L36.00 5.0 L36.75 5.3 L37.50 5.7 L38.25 5.8 L39.00 5.8 L39.75 5.8 L40.50 5.8 L41.25 5.8 L42.00 5.8 L42.75 5.8 L43.50 5.8 L44.25 4.7 L45.00 5.1 L45.75 5.5 L46.50 5.8 L47.25 5.8 L48.00 5.8 L48.75 5.8 L49.50 5.8 L50.25 5.8 L51.00 5.8 L51.75 5.8 L52.50 5.8 L53.25 4.7 L54.00 5.1 L54.75 5.5 L55.50 5.8 L56.25 5.8 L57.00 5.8 L57.75 5.8 L58.50 5.8 L59.25 5.8 L60.00 5.8 L60.75 5.8 L61.50 4.7 L62.25 5.0 L63.00 5.4 L63.75 5.7 L64.50 5.8 L65.25 5.8 L66.00 5.8 L66.75 5.8 L67.50 5.8 L68.25 5.8 L69.00 5.8 L69.75 5.8 L70.50 4.6 L71.25 5.0 L72.00 5.4 L72.75 5.8 L73.50 5.8 L74.25 5.8 L75.00 5.8 L75.75 5.8 L76.50 5.8 L77.25 5.8 L78.00 5.8 L78.75 5.8 L79.50 4.8 L80.25 5.2 L81.00 5.5 L81.75 5.8 L82.50 5.8 L83.25 5.8 L84.00 5.8 L84.75 5.8 L85.50 5.8 L86.25 5.8 L87.00 5.8 L87.75 5.8 L88.50 4.9 L89.25 5.2 L90.00 5.6 L90.75 5.8 L91.50 5.8 L92.25 5.8 L93.00 5.8 L93.75 5.8 L94.50 5.8 L95.25 5.8 L96.00 5.8 L96.75 4.5 L97.50 4.9 L98.25 5.3 L99.00 5.7 L99.75 5.8 L100.50 5.8 L101.25 5.8 L102.00 5.8 L102.75 5.8 L103.50 5.8 L104.25 5.8 L105.00 5.8 L105.75 4.7 L106.50 5.1 L107.25 5.5 L108.00 5.8 L108.75 5.8 L109.50 5.8 L110.25 5.8 L111.00 5.8 L111.75 5.8 L112.50 5.8 L113.25 5.8 L114.00 5.8 L114.75 4.8 L115.50 5.2 L116.25 5.6 L117.00 5.8 L117.75 5.8 L118.50 5.8 L119.25 5.8 L120.00 5.8 L120.75 5.8 L121.50 5.8 L122.25 5.8 L123.00 4.5 L123.75 4.9 L124.50 5.3 L125.25 5.7 L126.00 5.8 L126.75 5.8 L127.50 5.8 L128.25 5.8 L129.00 5.8 L129.75 5.8 L130.50 5.8 L131.25 5.8 L132.00 4.9 L132.75 5.2 L133.50 5.5 L134.25 5.8 L135.00 5.8 L135.75 5.8 L136.50 5.8 L137.25 5.8 L138.00 5.8 L138.75 5.8 L139.50 5.8 L139.50 6.8 L138.75 6.8 L138.00 6.8 L137.25 6.8 L136.50 6.8 L135.75 6.8 L135.00 6.8 L134.25 6.8 L133.50 7.1 L132.75 7.4 L132.00 7.7 L131.25 6.8 L130.50 6.8 L129.75 6.8 L129.00 6.8 L128.25 6.8 L127.50 6.8 L126.75 6.8 L126.00 6.8 L125.25 7.0 L124.50 7.4 L123.75 7.8 L123.00 8.2 L122.25 6.8 L121.50 6.8 L120.75 6.8 L120.00 6.8 L119.25 6.8 L118.50 6.8 L117.75 6.8 L117.00 6.8 L116.25 7.1 L115.50 7.4 L114.75 7.8 L114.00 6.8 L113.25 6.8 L112.50 6.8 L111.75 6.8 L111.00 6.8 L110.25 6.8 L109.50 6.8 L108.75 6.8 L108.00 6.8 L107.25 7.2 L106.50 7.6 L105.75 8.0 L105.00 6.8 L104.25 6.8 L103.50 6.8 L102.75 6.8 L102.00 6.8 L101.25 6.8 L100.50 6.8 L99.75 6.8 L99.00 6.9 L98.25 7.3 L97.50 7.8 L96.75 8.2 L96.00 6.8 L95.25 6.8 L94.50 6.8 L93.75 6.8 L93.00 6.8 L92.25 6.8 L91.50 6.8 L90.75 6.8 L90.00 7.0 L89.25 7.4 L88.50 7.8 L87.75 6.8 L87.00 6.8 L86.25 6.8 L85.50 6.8 L84.75 6.8 L84.00 6.8 L83.25 6.8 L82.50 6.8 L81.75 6.8 L81.00 7.1 L80.25 7.5 L79.50 7.8 L78.75 6.8 L78.00 6.8 L77.25 6.8 L76.50 6.8 L75.75 6.8 L75.00 6.8 L74.25 6.8 L73.50 6.8 L72.75 6.9 L72.00 7.3 L71.25 7.7 L70.50 8.1 L69.75 6.8 L69.00 6.8 L68.25 6.8 L67.50 6.8 L66.75 6.8 L66.00 6.8 L65.25 6.8 L64.50 6.8 L63.75 7.0 L63.00 7.3 L62.25 7.6 L61.50 8.0 L60.75 6.8 L60.00 6.8 L59.25 6.8 L58.50 6.8 L57.75 6.8 L57.00 6.8 L56.25 6.8 L55.50 6.8 L54.75 7.1 L54.00 7.5 L53.25 8.0 L52.50 6.8 L51.75 6.8 L51.00 6.8 L50.25 6.8 L49.50 6.8 L48.75 6.8 L48.00 6.8 L47.25 6.8 L46.50 6.8 L45.75 7.2 L45.00 7.6 L44.25 7.9 L43.50 6.8 L42.75 6.8 L42.00 6.8 L41.25 6.8 L40.50 6.8 L39.75 6.8 L39.00 6.8 L38.25 6.8 L37.50 6.9 L36.75 7.3 L36.00 7.7 L35.25 8.1 L34.50 6.8 L33.75 6.8 L33.00 6.8 L32.25 6.8 L31.50 6.8 L30.75 6.8 L30.00 6.8 L29.25 6.8 L28.50 7.1 L27.75 7.5 L27.00 7.9 L26.25 6.8 L25.50 6.8 L24.75 6.8 L24.00 6.8 L23.25 6.8 L22.50 6.8 L21.75 6.8 L21.00 6.8 L20.25 6.8 L19.50 7.1 L18.75 7.5 L18.00 7.8 L17.25 6.8 L16.50 6.8 L15.75 6.8 L15.00 6.8 L14.25 6.8 L13.50 6.8 L12.75 6.8 L12.00 6.8 L11.25 6.9 L10.50 7.3 L9.75 7.7 L9.00 8.0 L8.25 6.8 L7.50 6.8 L6.75 6.8 L6.00 6.8 L5.25 6.8 L4.50 6.8 L3.75 6.8 L3.00 6.8 L2.25 7.0 L1.50 7.3 L0.75 7.6 L0.00 6.8Z" fill="#1a80e6" stroke="#0b3470" stroke-width="0.6"/><path d="M0.00 16.3 L0.75 15.3 L1.50 15.7 L2.25 16.1 L3.00 16.3 L3.75 16.3 L4.50 16.3 L5.25 16.3 L6.00 16.3 L6.75 16.3 L7.50 16.3 L8.25 16.3 L9.00 15.1 L9.75 15.4 L10.50 15.8 L11.25 16.2 L12.00 16.3 L12.75 16.3 L13.50 16.3 L14.25 16.3 L15.00 16.3 L15.75 16.3 L16.50 16.3 L17.25 16.3 L18.00 15.3 L18.75 15.6 L19.50 16.0 L20.25 16.3 L21.00 16.3 L21.75 16.3 L22.50 16.3 L23.25 16.3 L24.00 16.3 L24.75 16.3 L25.50 16.3 L26.25 16.3 L27.00 15.2 L27.75 15.6 L28.50 16.0 L29.25 16.3 L30.00 16.3 L30.75 16.3 L31.50 16.3 L32.25 16.3 L33.00 16.3 L33.75 16.3 L34.50 16.3 L35.25 15.0 L36.00 15.4 L36.75 15.7 L37.50 16.1 L38.25 16.3 L39.00 16.3 L39.75 16.3 L40.50 16.3 L41.25 16.3 L42.00 16.3 L42.75 16.3 L43.50 16.3 L44.25 15.1 L45.00 15.5 L45.75 15.9 L46.50 16.3 L47.25 16.3 L48.00 16.3 L48.75 16.3 L49.50 16.3 L50.25 16.3 L51.00 16.3 L51.75 16.3 L52.50 16.3 L53.25 15.3 L54.00 15.7 L54.75 16.0 L55.50 16.3 L56.25 16.3 L57.00 16.3 L57.75 16.3 L58.50 16.3 L59.25 16.3 L60.00 16.3 L60.75 16.3 L61.50 14.9 L62.25 15.3 L63.00 15.7 L63.75 16.1 L64.50 16.3 L65.25 16.3 L66.00 16.3 L66.75 16.3 L67.50 16.3 L68.25 16.3 L69.00 16.3 L69.75 16.3 L70.50 15.0 L71.25 15.4 L72.00 15.8 L72.75 16.2 L73.50 16.3 L74.25 16.3 L75.00 16.3 L75.75 16.3 L76.50 16.3 L77.25 16.3 L78.00 16.3 L78.75 16.3 L79.50 15.2 L80.25 15.6 L81.00 16.0 L81.75 16.3 L82.50 16.3 L83.25 16.3 L84.00 16.3 L84.75 16.3 L85.50 16.3 L86.25 16.3 L87.00 16.3 L87.75 16.3 L88.50 15.5 L89.25 15.8 L90.00 16.1 L90.75 16.3 L91.50 16.3 L92.25 16.3 L93.00 16.3 L93.75 16.3 L94.50 16.3 L95.25 16.3 L96.00 16.3 L96.75 15.1 L97.50 15.5 L98.25 15.8 L99.00 16.2 L99.75 16.3 L100.50 16.3 L101.25 16.3 L102.00 16.3 L102.75 16.3 L103.50 16.3 L104.25 16.3 L105.00 16.3 L105.75 15.0 L106.50 15.4 L107.25 15.9 L108.00 16.3 L108.75 16.3 L109.50 16.3 L110.25 16.3 L111.00 16.3 L111.75 16.3 L112.50 16.3 L113.25 16.3 L114.00 16.3 L114.75 15.3 L115.50 15.7 L116.25 16.0 L117.00 16.3 L117.75 16.3 L118.50 16.3 L119.25 16.3 L120.00 16.3 L120.75 16.3 L121.50 16.3 L122.25 16.3 L123.00 15.1 L123.75 15.5 L124.50 15.8 L125.25 16.2 L126.00 16.3 L126.75 16.3 L127.50 16.3 L128.25 16.3 L129.00 16.3 L129.75 16.3 L130.50 16.3 L131.25 16.3 L132.00 15.1 L132.75 15.5 L133.50 15.9 L134.25 16.3 L135.00 16.3 L135.75 16.3 L136.50 16.3 L137.25 16.3 L138.00 16.3 L138.75 16.3 L139.50 16.3 L139.50 17.3 L138.75 17.3 L138.00 17.3 L137.25 17.3 L136.50 17.3 L135.75 17.3 L135.00 17.3 L134.25 17.3 L133.50 17.6 L132.75 18.0 L132.00 18.4 L131.25 17.3 L130.50 17.3 L129.75 17.3 L129.00 17.3 L128.25 17.3 L127.50 17.3 L126.75 17.3 L126.00 17.3 L125.25 17.4 L124.50 17.7 L123.75 18.1 L123.00 18.4 L122.25 17.3 L121.50 17.3 L120.75 17.3 L120.00 17.3 L119.25 17.3 L118.50 17.3 L117.75 17.3 L117.00 17.3 L116.25 17.5 L115.50 17.9 L114.75 18.2 L114.00 17.3 L113.25 17.3 L112.50 17.3 L111.75 17.3 L111.00 17.3 L110.25 17.3 L109.50 17.3 L108.75 17.3 L108.00 17.3 L107.25 17.6 L106.50 18.1 L105.75 18.5 L105.00 17.3 L104.25 17.3 L103.50 17.3 L102.75 17.3 L102.00 17.3 L101.25 17.3 L100.50 17.3 L99.75 17.3 L99.00 17.3 L98.25 17.7 L97.50 18.0 L96.75 18.4 L96.00 17.3 L95.25 17.3 L94.50 17.3 L93.75 17.3 L93.00 17.3 L92.25 17.3 L91.50 17.3 L90.75 17.3 L90.00 17.4 L89.25 17.7 L88.50 18.0 L87.75 17.3 L87.00 17.3 L86.25 17.3 L85.50 17.3 L84.75 17.3 L84.00 17.3 L83.25 17.3 L82.50 17.3 L81.75 17.3 L81.00 17.6 L80.25 17.9 L79.50 18.3 L78.75 17.3 L78.00 17.3 L77.25 17.3 L76.50 17.3 L75.75 17.3 L75.00 17.3 L74.25 17.3 L73.50 17.3 L72.75 17.3 L72.00 17.7 L71.25 18.1 L70.50 18.5 L69.75 17.3 L69.00 17.3 L68.25 17.3 L67.50 17.3 L66.75 17.3 L66.00 17.3 L65.25 17.3 L64.50 17.3 L63.75 17.4 L63.00 17.8 L62.25 18.2 L61.50 18.7 L60.75 17.3 L60.00 17.3 L59.25 17.3 L58.50 17.3 L57.75 17.3 L57.00 17.3 L56.25 17.3 L55.50 17.3 L54.75 17.5 L54.00 17.9 L53.25 18.2 L52.50 17.3 L51.75 17.3 L51.00 17.3 L50.25 17.3 L49.50 17.3 L48.75 17.3 L48.00 17.3 L47.25 17.3 L46.50 17.3 L45.75 17.7 L45.00 18.1 L44.25 18.5 L43.50 17.3 L42.75 17.3 L42.00 17.3 L41.25 17.3 L40.50 17.3 L39.75 17.3 L39.00 17.3 L38.25 17.3 L37.50 17.4 L36.75 17.8 L36.00 18.2 L35.25 18.6 L34.50 17.3 L33.75 17.3 L33.00 17.3 L32.25 17.3 L31.50 17.3 L30.75 17.3 L30.00 17.3 L29.25 17.3 L28.50 17.5 L27.75 17.9 L27.00 18.4 L26.25 17.3 L25.50 17.3 L24.75 17.3 L24.00 17.3 L23.25 17.3 L22.50 17.3 L21.75 17.3 L21.00 17.3 L20.25 17.3 L19.50 17.6 L18.75 17.9 L18.00 18.2 L17.25 17.3 L16.50 17.3 L15.75 17.3 L15.00 17.3 L14.25 17.3 L13.50 17.3 L12.75 17.3 L12.00 17.3 L11.25 17.3 L10.50 17.7 L9.75 18.1 L9.00 18.5 L8.25 17.3 L7.50 17.3 L6.75 17.3 L6.00 17.3 L5.25 17.3 L4.50 17.3 L3.75 17.3 L3.00 17.3 L2.25 17.4 L1.50 17.8 L0.75 18.2 L0.00 17.3Z" fill="#1a80e6" stroke="#0b3470" stroke-width="0.6"/></svg>
<div class="t" style="left:0;top:0.6px;padding:1.2px 3px 1.4px 2.6px;background:#8fc7fb;font-size:7px;font-weight:bold;color:#0b1626;transform:scaleX(0.86);transform-origin:0 0">Clap_Loop (014_c__Drum_Beat_96bpm_-_TRVTw</div>
</div>
<div class="a" style="left:166.5px;top:70.8px;width:424.29999999999995px;height:12.9px;background:#1d1e21"></div>
<div class="a" style="left:590.8px;top:70.8px;width:420.70000000000005px;height:12.9px;background:#6d5ddf"></div>
<div class="a" style="left:168.80px;top:70.8px;width:1px;height:12.9px;background:rgba(200,200,210,0.5)"></div>
<div class="t" style="left:171.60px;top:75.7px;font-size:7px;font-weight:bold;color:#ececec;transform:scaleX(0.92);transform-origin:0 0">45</div>
<div class="a" style="left:186.75px;top:71px;width:1px;height:3.8px;background:rgba(200,200,210,0.45)"></div>
<div class="a" style="left:204.30px;top:71px;width:1px;height:3.8px;background:rgba(200,200,210,0.45)"></div>
<div class="a" style="left:221.85px;top:71px;width:1px;height:3.8px;background:rgba(200,200,210,0.45)"></div>
<div class="a" style="left:239.00px;top:70.8px;width:1px;height:12.9px;background:rgba(200,200,210,0.5)"></div>
<div class="t" style="left:241.80px;top:75.7px;font-size:7px;font-weight:bold;color:#ececec;transform:scaleX(0.92);transform-origin:0 0">46</div>
<div class="a" style="left:256.95px;top:71px;width:1px;height:3.8px;background:rgba(200,200,210,0.45)"></div>
<div class="a" style="left:274.50px;top:71px;width:1px;height:3.8px;background:rgba(200,200,210,0.45)"></div>
<div class="a" style="left:292.05px;top:71px;width:1px;height:3.8px;background:rgba(200,200,210,0.45)"></div>
<div class="a" style="left:309.20px;top:70.8px;width:1px;height:12.9px;background:rgba(200,200,210,0.5)"></div>
<div class="t" style="left:312.00px;top:75.7px;font-size:7px;font-weight:bold;color:#ececec;transform:scaleX(0.92);transform-origin:0 0">47</div>
<div class="a" style="left:327.15px;top:71px;width:1px;height:3.8px;background:rgba(200,200,210,0.45)"></div>
<div class="a" style="left:344.70px;top:71px;width:1px;height:3.8px;background:rgba(200,200,210,0.45)"></div>
<div class="a" style="left:362.25px;top:71px;width:1px;height:3.8px;background:rgba(200,200,210,0.45)"></div>
<div class="a" style="left:379.40px;top:70.8px;width:1px;height:12.9px;background:rgba(200,200,210,0.5)"></div>
<div class="t" style="left:382.20px;top:75.7px;font-size:7px;font-weight:bold;color:#ececec;transform:scaleX(0.92);transform-origin:0 0">48</div>
<div class="a" style="left:397.35px;top:71px;width:1px;height:3.8px;background:rgba(200,200,210,0.45)"></div>
<div class="a" style="left:414.90px;top:71px;width:1px;height:3.8px;background:rgba(200,200,210,0.45)"></div>
<div class="a" style="left:432.45px;top:71px;width:1px;height:3.8px;background:rgba(200,200,210,0.45)"></div>
<div class="a" style="left:449.60px;top:70.8px;width:1px;height:12.9px;background:rgba(200,200,210,0.5)"></div>
<div class="t" style="left:452.40px;top:75.7px;font-size:7px;font-weight:bold;color:#ececec;transform:scaleX(0.92);transform-origin:0 0">49</div>
<div class="a" style="left:467.55px;top:71px;width:1px;height:3.8px;background:rgba(200,200,210,0.45)"></div>
<div class="a" style="left:485.10px;top:71px;width:1px;height:3.8px;background:rgba(200,200,210,0.45)"></div>
<div class="a" style="left:502.65px;top:71px;width:1px;height:3.8px;background:rgba(200,200,210,0.45)"></div>
<div class="a" style="left:519.80px;top:70.8px;width:1px;height:12.9px;background:rgba(200,200,210,0.5)"></div>
<div class="t" style="left:522.60px;top:75.7px;font-size:7px;font-weight:bold;color:#ececec;transform:scaleX(0.92);transform-origin:0 0">50</div>
<div class="a" style="left:537.75px;top:71px;width:1px;height:3.8px;background:rgba(200,200,210,0.45)"></div>
<div class="a" style="left:555.30px;top:71px;width:1px;height:3.8px;background:rgba(200,200,210,0.45)"></div>
<div class="a" style="left:572.85px;top:71px;width:1px;height:3.8px;background:rgba(200,200,210,0.45)"></div>
<div class="a" style="left:590.00px;top:70.8px;width:1px;height:12.9px;background:rgba(200,200,210,0.5)"></div>
<div class="t" style="left:592.80px;top:75.7px;font-size:7px;font-weight:bold;color:#ececec;transform:scaleX(0.92);transform-origin:0 0">51</div>
<div class="a" style="left:607.95px;top:71px;width:1px;height:3.8px;background:rgba(200,200,210,0.45)"></div>
<div class="a" style="left:625.50px;top:71px;width:1px;height:3.8px;background:rgba(200,200,210,0.45)"></div>
<div class="a" style="left:643.05px;top:71px;width:1px;height:3.8px;background:rgba(200,200,210,0.45)"></div>
<div class="a" style="left:660.20px;top:70.8px;width:1px;height:12.9px;background:rgba(200,200,210,0.5)"></div>
<div class="t" style="left:663.00px;top:75.7px;font-size:7px;font-weight:bold;color:#ececec;transform:scaleX(0.92);transform-origin:0 0">52</div>
<div class="a" style="left:678.15px;top:71px;width:1px;height:3.8px;background:rgba(200,200,210,0.45)"></div>
<div class="a" style="left:695.70px;top:71px;width:1px;height:3.8px;background:rgba(200,200,210,0.45)"></div>
<div class="a" style="left:713.25px;top:71px;width:1px;height:3.8px;background:rgba(200,200,210,0.45)"></div>
<div class="a" style="left:730.40px;top:70.8px;width:1px;height:12.9px;background:rgba(200,200,210,0.5)"></div>
<div class="t" style="left:733.20px;top:75.7px;font-size:7px;font-weight:bold;color:#ececec;transform:scaleX(0.92);transform-origin:0 0">53</div>
<div class="a" style="left:748.35px;top:71px;width:1px;height:3.8px;background:rgba(200,200,210,0.45)"></div>
<div class="a" style="left:765.90px;top:71px;width:1px;height:3.8px;background:rgba(200,200,210,0.45)"></div>
<div class="a" style="left:783.45px;top:71px;width:1px;height:3.8px;background:rgba(200,200,210,0.45)"></div>
<div class="a" style="left:800.60px;top:70.8px;width:1px;height:12.9px;background:rgba(200,200,210,0.5)"></div>
<div class="t" style="left:803.40px;top:75.7px;font-size:7px;font-weight:bold;color:#ececec;transform:scaleX(0.92);transform-origin:0 0">54</div>
<div class="a" style="left:818.55px;top:71px;width:1px;height:3.8px;background:rgba(200,200,210,0.45)"></div>
<div class="a" style="left:836.10px;top:71px;width:1px;height:3.8px;background:rgba(200,200,210,0.45)"></div>
<div class="a" style="left:853.65px;top:71px;width:1px;height:3.8px;background:rgba(200,200,210,0.45)"></div>
<div class="a" style="left:870.80px;top:70.8px;width:1px;height:12.9px;background:rgba(200,200,210,0.5)"></div>
<div class="t" style="left:873.60px;top:75.7px;font-size:7px;font-weight:bold;color:#ececec;transform:scaleX(0.92);transform-origin:0 0">55</div>
<div class="a" style="left:888.75px;top:71px;width:1px;height:3.8px;background:rgba(200,200,210,0.45)"></div>
<div class="a" style="left:906.30px;top:71px;width:1px;height:3.8px;background:rgba(200,200,210,0.45)"></div>
<div class="a" style="left:923.85px;top:71px;width:1px;height:3.8px;background:rgba(200,200,210,0.45)"></div>
<div class="a" style="left:941.00px;top:70.8px;width:1px;height:12.9px;background:rgba(200,200,210,0.5)"></div>
<div class="t" style="left:943.80px;top:75.7px;font-size:7px;font-weight:bold;color:#ececec;transform:scaleX(0.92);transform-origin:0 0">56</div>
<div class="a" style="left:958.95px;top:71px;width:1px;height:3.8px;background:rgba(200,200,210,0.45)"></div>
<div class="a" style="left:976.50px;top:71px;width:1px;height:3.8px;background:rgba(200,200,210,0.45)"></div>
<div class="a" style="left:994.05px;top:71px;width:1px;height:3.8px;background:rgba(200,200,210,0.45)"></div>
<svg class="a" style="left:591px;top:71px" width="5" height="5"><path d="M0 0H4L0 4Z" fill="#fff"/></svg>
<div class="a" style="left:3px;top:69px;width:162px;height:14.7px;background:#26272b"></div>
<div class="a" style="left:158.6px;top:83.9px;width:5.5px;height:369.0px;background:#000"></div>
<div class="a" style="left:165px;top:70.8px;width:1.2px;height:479px;background:#5c5e62"></div>
<div class="a" style="left:3px;top:69px;width:1px;height:481px;background:#3a3b3f"></div>
<div class="a" style="left:0;top:68px;width:1.8px;height:485px;background:#060606"></div>
<div class="a" style="left:5.7px;top:83.90px;width:22px;height:23.60px;background:#7fe3f6"></div>
<div class="a" style="left:27.5px;top:83.90px;width:131.1px;height:23.60px;background:#58a3aa"></div>
<div class="a" style="left:5.7px;top:107.50px;width:152.9px;height:1px;background:#333c47"></div>
<div class="t" style="left:19px;top:87.80px;font-size:5.9px;color:#2f4f72">39</div>
<div class="a" style="left:30.3px;top:85.10px;width:26.3px;height:9.8px;background:rgba(0,0,0,0.10);border:0.6px solid rgba(0,0,0,0.22);border-radius:1.5px"></div>
<div class="t" style="left:33.7px;top:86.80px;font-size:6.8px;font-weight:bold;color:#dfe8f0">M</div>
<div class="t" style="left:47.5px;top:86.90px;font-size:6.5px;font-weight:bold;color:#dfe8f0">S</div>
<div class="a" style="left:31.3px;top:97.10px;width:9.5px;height:9.4px;background:rgba(0,0,0,0.08);border:0.6px solid rgba(0,0,0,0.22);border-radius:1.5px"></div>
<div class="t" style="left:61.6px;top:85.80px;font-size:8.3px;font-weight:bold;color:#f2f5f8;transform:scaleX(0.8);transform-origin:0 0">Loopcloud</div>
<div class="a" style="left:5.7px;top:108.50px;width:22px;height:23.60px;background:#c0d6f3"></div>
<div class="a" style="left:27.5px;top:108.50px;width:131.1px;height:23.60px;background:#7f93ad"></div>
<div class="a" style="left:5.7px;top:132.10px;width:152.9px;height:1px;background:#333c47"></div>
<div class="t" style="left:19px;top:112.40px;font-size:5.9px;color:#2f4f72">41</div>
<div class="a" style="left:30.3px;top:109.70px;width:26.3px;height:9.8px;background:rgba(0,0,0,0.10);border:0.6px solid rgba(0,0,0,0.22);border-radius:1.5px"></div>
<div class="t" style="left:33.7px;top:111.40px;font-size:6.8px;font-weight:bold;color:#dfe8f0">M</div>
<div class="t" style="left:47.5px;top:111.50px;font-size:6.5px;font-weight:bold;color:#dfe8f0">S</div>
<div class="a" style="left:31.3px;top:121.70px;width:9.5px;height:9.4px;background:rgba(0,0,0,0.08);border:0.6px solid rgba(0,0,0,0.22);border-radius:1.5px"></div>
<div class="t" style="left:61.6px;top:110.40px;font-size:8.3px;font-weight:bold;color:#f2f5f8;transform:scaleX(0.8);transform-origin:0 0">Skew 2</div>
<div class="a" style="left:5.7px;top:133.10px;width:22px;height:23.60px;background:#8cc6fd"></div>
<div class="a" style="left:27.5px;top:133.10px;width:131.1px;height:23.60px;background:#5c84ac"></div>
<div class="a" style="left:5.7px;top:156.70px;width:152.9px;height:1px;background:#333c47"></div>
<div class="t" style="left:19px;top:137.00px;font-size:5.9px;color:#2f4f72">42</div>
<div class="a" style="left:30.3px;top:134.30px;width:26.3px;height:9.8px;background:rgba(0,0,0,0.10);border:0.6px solid rgba(0,0,0,0.22);border-radius:1.5px"></div>
<div class="t" style="left:33.7px;top:136.00px;font-size:6.8px;font-weight:bold;color:#dfe8f0">M</div>
<div class="t" style="left:47.5px;top:136.10px;font-size:6.5px;font-weight:bold;color:#dfe8f0">S</div>
<div class="a" style="left:31.3px;top:146.30px;width:9.5px;height:9.4px;background:rgba(0,0,0,0.08);border:0.6px solid rgba(0,0,0,0.22);border-radius:1.5px"></div>
<div class="t" style="left:61.6px;top:135.00px;font-size:8.3px;font-weight:bold;color:#f2f5f8;transform:scaleX(0.8);transform-origin:0 0">Drum</div>
<div class="a" style="left:5.7px;top:157.70px;width:22px;height:23.60px;background:#8cc6fd"></div>
<div class="a" style="left:27.5px;top:157.70px;width:131.1px;height:23.60px;background:#5c84ac"></div>
<div class="a" style="left:5.7px;top:181.30px;width:152.9px;height:1px;background:#333c47"></div>
<div class="t" style="left:19px;top:161.60px;font-size:5.9px;color:#2f4f72">43</div>
<div class="a" style="left:30.3px;top:158.90px;width:26.3px;height:9.8px;background:rgba(0,0,0,0.10);border:0.6px solid rgba(0,0,0,0.22);border-radius:1.5px"></div>
<div class="t" style="left:33.7px;top:160.60px;font-size:6.8px;font-weight:bold;color:#dfe8f0">M</div>
<div class="t" style="left:47.5px;top:160.70px;font-size:6.5px;font-weight:bold;color:#dfe8f0">S</div>
<div class="a" style="left:31.3px;top:170.90px;width:9.5px;height:9.4px;background:rgba(0,0,0,0.08);border:0.6px solid rgba(0,0,0,0.22);border-radius:1.5px"></div>
<div class="t" style="left:61.6px;top:159.60px;font-size:8.3px;font-weight:bold;color:#f2f5f8;transform:scaleX(0.8);transform-origin:0 0">Drum_Rev</div>
<div class="a" style="left:5.7px;top:182.30px;width:22px;height:23.60px;background:#8cc6fd"></div>
<div class="a" style="left:27.5px;top:182.30px;width:131.1px;height:23.60px;background:#5c84ac"></div>
<div class="a" style="left:5.7px;top:205.90px;width:152.9px;height:1px;background:#333c47"></div>
<div class="t" style="left:19px;top:186.20px;font-size:5.9px;color:#2f4f72">44</div>
<div class="a" style="left:30.3px;top:183.50px;width:26.3px;height:9.8px;background:rgba(0,0,0,0.10);border:0.6px solid rgba(0,0,0,0.22);border-radius:1.5px"></div>
<div class="t" style="left:33.7px;top:185.20px;font-size:6.8px;font-weight:bold;color:#dfe8f0">M</div>
<div class="t" style="left:47.5px;top:185.30px;font-size:6.5px;font-weight:bold;color:#dfe8f0">S</div>
<div class="a" style="left:31.3px;top:195.50px;width:9.5px;height:9.4px;background:rgba(0,0,0,0.08);border:0.6px solid rgba(0,0,0,0.22);border-radius:1.5px"></div>
<div class="t" style="left:61.6px;top:184.20px;font-size:8.3px;font-weight:bold;color:#f2f5f8;transform:scaleX(0.8);transform-origin:0 0">Brass</div>
<div class="a" style="left:5.7px;top:206.90px;width:22px;height:23.60px;background:#8cc6fd"></div>
<div class="a" style="left:27.5px;top:206.90px;width:131.1px;height:23.60px;background:#5c84ac"></div>
<div class="a" style="left:5.7px;top:230.50px;width:152.9px;height:1px;background:#333c47"></div>
<div class="t" style="left:19px;top:210.80px;font-size:5.9px;color:#2f4f72">45</div>
<div class="a" style="left:30.3px;top:208.10px;width:26.3px;height:9.8px;background:rgba(0,0,0,0.10);border:0.6px solid rgba(0,0,0,0.22);border-radius:1.5px"></div>
<div class="t" style="left:33.7px;top:209.80px;font-size:6.8px;font-weight:bold;color:#dfe8f0">M</div>
<div class="t" style="left:47.5px;top:209.90px;font-size:6.5px;font-weight:bold;color:#dfe8f0">S</div>
<div class="a" style="left:31.3px;top:220.10px;width:9.5px;height:9.4px;background:rgba(0,0,0,0.08);border:0.6px solid rgba(0,0,0,0.22);border-radius:1.5px"></div>
<div class="t" style="left:61.6px;top:208.80px;font-size:8.3px;font-weight:bold;color:#f2f5f8;transform:scaleX(0.8);transform-origin:0 0">Brass_Rev</div>
<div class="a" style="left:5.7px;top:231.50px;width:22px;height:23.60px;background:#8cc6fd"></div>
<div class="a" style="left:27.5px;top:231.50px;width:131.1px;height:23.60px;background:#5c84ac"></div>
<div class="a" style="left:5.7px;top:255.10px;width:152.9px;height:1px;background:#333c47"></div>
<div class="t" style="left:19px;top:235.40px;font-size:5.9px;color:#2f4f72">46</div>
<div class="a" style="left:30.3px;top:232.70px;width:26.3px;height:9.8px;background:rgba(0,0,0,0.10);border:0.6px solid rgba(0,0,0,0.22);border-radius:1.5px"></div>
<div class="t" style="left:33.7px;top:234.40px;font-size:6.8px;font-weight:bold;color:#dfe8f0">M</div>
<div class="t" style="left:47.5px;top:234.50px;font-size:6.5px;font-weight:bold;color:#dfe8f0">S</div>
<div class="a" style="left:31.3px;top:244.70px;width:9.5px;height:9.4px;background:rgba(0,0,0,0.08);border:0.6px solid rgba(0,0,0,0.22);border-radius:1.5px"></div>
<div class="t" style="left:61.6px;top:233.40px;font-size:8.3px;font-weight:bold;color:#f2f5f8;transform:scaleX(0.8);transform-origin:0 0">Brass_Rev_2</div>
<div class="a" style="left:5.7px;top:256.10px;width:22px;height:23.60px;background:#8cc6fd"></div>
<div class="a" style="left:27.5px;top:256.10px;width:131.1px;height:23.60px;background:#5c84ac"></div>
<div class="a" style="left:5.7px;top:279.70px;width:152.9px;height:1px;background:#333c47"></div>
<div class="t" style="left:19px;top:260.00px;font-size:5.9px;color:#2f4f72">47</div>
<div class="a" style="left:30.3px;top:257.30px;width:26.3px;height:9.8px;background:rgba(0,0,0,0.10);border:0.6px solid rgba(0,0,0,0.22);border-radius:1.5px"></div>
<div class="t" style="left:33.7px;top:259.00px;font-size:6.8px;font-weight:bold;color:#dfe8f0">M</div>
<div class="t" style="left:47.5px;top:259.10px;font-size:6.5px;font-weight:bold;color:#dfe8f0">S</div>
<div class="a" style="left:31.3px;top:269.30px;width:9.5px;height:9.4px;background:rgba(0,0,0,0.08);border:0.6px solid rgba(0,0,0,0.22);border-radius:1.5px"></div>
<div class="t" style="left:61.6px;top:258.00px;font-size:8.3px;font-weight:bold;color:#f2f5f8;transform:scaleX(0.8);transform-origin:0 0">Bass</div>
<div class="a" style="left:5.7px;top:280.70px;width:22px;height:23.60px;background:#8cc6fd"></div>
<div class="a" style="left:27.5px;top:280.70px;width:131.1px;height:23.60px;background:#5c84ac"></div>
<div class="a" style="left:5.7px;top:304.30px;width:152.9px;height:1px;background:#333c47"></div>
<div class="t" style="left:19px;top:284.60px;font-size:5.9px;color:#2f4f72">48</div>
<div class="a" style="left:30.3px;top:281.90px;width:26.3px;height:9.8px;background:rgba(0,0,0,0.10);border:0.6px solid rgba(0,0,0,0.22);border-radius:1.5px"></div>
<div class="t" style="left:33.7px;top:283.60px;font-size:6.8px;font-weight:bold;color:#dfe8f0">M</div>
<div class="t" style="left:47.5px;top:283.70px;font-size:6.5px;font-weight:bold;color:#dfe8f0">S</div>
<div class="a" style="left:31.3px;top:293.90px;width:9.5px;height:9.4px;background:rgba(0,0,0,0.08);border:0.6px solid rgba(0,0,0,0.22);border-radius:1.5px"></div>
<div class="t" style="left:61.6px;top:282.60px;font-size:8.3px;font-weight:bold;color:#f2f5f8;transform:scaleX(0.8);transform-origin:0 0">Bass_Rev</div>
<div class="a" style="left:5.7px;top:305.30px;width:22px;height:23.60px;background:#8cc6fd"></div>
<div class="a" style="left:27.5px;top:305.30px;width:131.1px;height:23.60px;background:#5c84ac"></div>
<div class="a" style="left:5.7px;top:328.90px;width:152.9px;height:1px;background:#333c47"></div>
<div class="t" style="left:19px;top:309.20px;font-size:5.9px;color:#2f4f72">49</div>
<div class="a" style="left:30.3px;top:306.50px;width:26.3px;height:9.8px;background:rgba(0,0,0,0.10);border:0.6px solid rgba(0,0,0,0.22);border-radius:1.5px"></div>
<div class="t" style="left:33.7px;top:308.20px;font-size:6.8px;font-weight:bold;color:#dfe8f0">M</div>
<div class="t" style="left:47.5px;top:308.30px;font-size:6.5px;font-weight:bold;color:#dfe8f0">S</div>
<div class="a" style="left:31.3px;top:318.50px;width:9.5px;height:9.4px;background:rgba(0,0,0,0.08);border:0.6px solid rgba(0,0,0,0.22);border-radius:1.5px"></div>
<div class="t" style="left:61.6px;top:307.20px;font-size:8.3px;font-weight:bold;color:#f2f5f8;transform:scaleX(0.8);transform-origin:0 0">Impact</div>
<div class="a" style="left:5.7px;top:329.90px;width:22px;height:23.60px;background:#8cc6fd"></div>
<div class="a" style="left:27.5px;top:329.90px;width:131.1px;height:23.60px;background:#5c84ac"></div>
<div class="a" style="left:5.7px;top:353.50px;width:152.9px;height:1px;background:#333c47"></div>
<div class="t" style="left:19px;top:333.80px;font-size:5.9px;color:#2f4f72">50</div>
<div class="a" style="left:30.3px;top:331.10px;width:26.3px;height:9.8px;background:rgba(0,0,0,0.10);border:0.6px solid rgba(0,0,0,0.22);border-radius:1.5px"></div>
<div class="t" style="left:33.7px;top:332.80px;font-size:6.8px;font-weight:bold;color:#dfe8f0">M</div>
<div class="t" style="left:47.5px;top:332.90px;font-size:6.5px;font-weight:bold;color:#dfe8f0">S</div>
<div class="a" style="left:31.3px;top:343.10px;width:9.5px;height:9.4px;background:rgba(0,0,0,0.08);border:0.6px solid rgba(0,0,0,0.22);border-radius:1.5px"></div>
<div class="t" style="left:61.6px;top:331.80px;font-size:8.3px;font-weight:bold;color:#f2f5f8;transform:scaleX(0.8);transform-origin:0 0">Synth</div>
<div class="a" style="left:5.7px;top:354.50px;width:22px;height:23.60px;background:#8cc6fd"></div>
<div class="a" style="left:27.5px;top:354.50px;width:131.1px;height:23.60px;background:#5c84ac"></div>
<div class="a" style="left:5.7px;top:378.10px;width:152.9px;height:1px;background:#333c47"></div>
<div class="t" style="left:19px;top:358.40px;font-size:5.9px;color:#2f4f72">51</div>
<div class="a" style="left:30.3px;top:355.70px;width:26.3px;height:9.8px;background:rgba(0,0,0,0.10);border:0.6px solid rgba(0,0,0,0.22);border-radius:1.5px"></div>
<div class="t" style="left:33.7px;top:357.40px;font-size:6.8px;font-weight:bold;color:#dfe8f0">M</div>
<div class="t" style="left:47.5px;top:357.50px;font-size:6.5px;font-weight:bold;color:#dfe8f0">S</div>
<div class="a" style="left:31.3px;top:367.70px;width:9.5px;height:9.4px;background:rgba(0,0,0,0.08);border:0.6px solid rgba(0,0,0,0.22);border-radius:1.5px"></div>
<div class="t" style="left:61.6px;top:356.40px;font-size:8.3px;font-weight:bold;color:#f2f5f8;transform:scaleX(0.8);transform-origin:0 0">Synth_Rev</div>
<div class="a" style="left:5.7px;top:379.10px;width:22px;height:23.60px;background:#8cc6fd"></div>
<div class="a" style="left:27.5px;top:379.10px;width:131.1px;height:23.60px;background:#5c84ac"></div>
<div class="a" style="left:5.7px;top:402.70px;width:152.9px;height:1px;background:#333c47"></div>
<div class="t" style="left:19px;top:383.00px;font-size:5.9px;color:#2f4f72">52</div>
<div class="a" style="left:30.3px;top:380.30px;width:26.3px;height:9.8px;background:rgba(0,0,0,0.10);border:0.6px solid rgba(0,0,0,0.22);border-radius:1.5px"></div>
<div class="t" style="left:33.7px;top:382.00px;font-size:6.8px;font-weight:bold;color:#dfe8f0">M</div>
<div class="t" style="left:47.5px;top:382.10px;font-size:6.5px;font-weight:bold;color:#dfe8f0">S</div>
<div class="a" style="left:31.3px;top:392.30px;width:9.5px;height:9.4px;background:rgba(0,0,0,0.08);border:0.6px solid rgba(0,0,0,0.22);border-radius:1.5px"></div>
<div class="t" style="left:61.6px;top:381.00px;font-size:8.3px;font-weight:bold;color:#f2f5f8;transform:scaleX(0.8);transform-origin:0 0">Crash</div>
<div class="a" style="left:5.7px;top:403.70px;width:22px;height:23.60px;background:#8cc6fd"></div>
<div class="a" style="left:27.5px;top:403.70px;width:131.1px;height:23.60px;background:#5c84ac"></div>
<div class="a" style="left:5.7px;top:427.30px;width:152.9px;height:1px;background:#333c47"></div>
<div class="t" style="left:19px;top:407.60px;font-size:5.9px;color:#2f4f72">53</div>
<div class="a" style="left:30.3px;top:404.90px;width:26.3px;height:9.8px;background:rgba(0,0,0,0.10);border:0.6px solid rgba(0,0,0,0.22);border-radius:1.5px"></div>
<div class="t" style="left:33.7px;top:406.60px;font-size:6.8px;font-weight:bold;color:#dfe8f0">M</div>
<div class="t" style="left:47.5px;top:406.70px;font-size:6.5px;font-weight:bold;color:#dfe8f0">S</div>
<div class="a" style="left:31.3px;top:416.90px;width:9.5px;height:9.4px;background:rgba(0,0,0,0.08);border:0.6px solid rgba(0,0,0,0.22);border-radius:1.5px"></div>
<div class="t" style="left:61.6px;top:405.60px;font-size:8.3px;font-weight:bold;color:#f2f5f8;transform:scaleX(0.8);transform-origin:0 0">HH_Loop</div>
<div class="a" style="left:5.7px;top:428.30px;width:22px;height:23.60px;background:#8cc6fd"></div>
<div class="a" style="left:27.5px;top:428.30px;width:131.1px;height:23.60px;background:#5c84ac"></div>
<div class="a" style="left:5.7px;top:451.90px;width:152.9px;height:1px;background:#333c47"></div>
<div class="t" style="left:19px;top:432.20px;font-size:5.9px;color:#2f4f72">54</div>
<div class="a" style="left:30.3px;top:429.50px;width:26.3px;height:9.8px;background:rgba(0,0,0,0.10);border:0.6px solid rgba(0,0,0,0.22);border-radius:1.5px"></div>
<div class="t" style="left:33.7px;top:431.20px;font-size:6.8px;font-weight:bold;color:#dfe8f0">M</div>
<div class="t" style="left:47.5px;top:431.30px;font-size:6.5px;font-weight:bold;color:#dfe8f0">S</div>
<div class="a" style="left:31.3px;top:441.50px;width:9.5px;height:9.4px;background:rgba(0,0,0,0.08);border:0.6px solid rgba(0,0,0,0.22);border-radius:1.5px"></div>
<div class="t" style="left:61.6px;top:430.20px;font-size:8.3px;font-weight:bold;color:#f2f5f8;transform:scaleX(0.8);transform-origin:0 0">Clap_Loop</div>
<svg class="a" style="left:7.5px;top:85.9px;" width="9" height="8" viewBox="0 0 9 8"><rect x="0.5" y="0.5" width="7.5" height="6.5" fill="#10303a"/><path d="M2.3 0.5 V7 M4.3 0.5 V7 M6.3 0.5 V7" stroke="#7fe3f6" stroke-width="0.5"/><rect x="1.7" y="0.5" width="1.1" height="3.8" fill="#10303a"/></svg>
<div class="a" style="left:60px;top:96.20px;width:24.90px;height:10.00px;background:rgba(0,0,0,0.09);border:0.6px solid rgba(0,0,0,0.2);border-radius:1.5px"></div>
<div class="a" style="left:86.5px;top:96.20px;width:25.30px;height:10.00px;background:rgba(0,0,0,0.09);border:0.6px solid rgba(0,0,0,0.2);border-radius:1.5px"></div>
<svg class="a" style="left:64.2px;top:98.9px;" width="4.4" height="4.4" viewBox="0 0 4.4 4.4"><circle cx="2.2" cy="2.2" r="1.85" fill="#dfe7ef"/></svg>
<svg class="a" style="left:75px;top:98.10000000000001px;" width="7" height="6" viewBox="0 0 7 6"><path d="M0.5 2 H2 L4 0.4 V5.6 L2 4 H0.5Z" fill="#dfe7ef"/><path d="M5.2 1.3 Q6.3 3 5.2 4.7" stroke="#dfe7ef" stroke-width="0.6" fill="none"/></svg>
<svg class="a" style="left:89.3px;top:97.9px;" width="7" height="7" viewBox="0 0 7 7"><path d="M1.2 3.6 L5.6 2.6 A2.5 2.5 0 1 0 5.4 4.9" stroke="#dfe7ef" stroke-width="1.05" fill="none"/></svg>
<svg class="a" style="left:101.3px;top:97.7px;" width="8" height="7" viewBox="0 0 8 7"><rect x="0.5" y="0.8" width="6.6" height="5.8" fill="#e6eef2"/><path d="M2.1 0.8 V6.6 M3.8 0.8 V6.6 M5.5 0.8 V6.6" stroke="#4d9aa2" stroke-width="0.55"/></svg>
<div class="a" style="left:113px;top:96.20px;width:12.00px;height:10.00px;background:rgba(0,0,0,0.09);border:0.6px solid rgba(0,0,0,0.2);border-radius:1.5px"></div>
<svg class="a" style="left:115.6px;top:97.7px;" width="8" height="8" viewBox="0 0 8 8"><ellipse cx="4" cy="2.3" rx="3.3" ry="1.4" fill="#e6eef2"/><path d="M0.7 3.6 Q4 5.4 7.3 3.6 V5.2 Q4 7.4 0.7 5.2Z" fill="#e6eef2"/></svg>
<div class="a" style="left:126.2px;top:96.20px;width:26.3px;height:10px;border-bottom:0.8px solid rgba(0,0,0,0.25);border-top:0.6px solid rgba(0,0,0,0.15);overflow:hidden"><div class="t" style="left:1.8px;top:2.2px;font-size:5.9px;color:#c8e2e6">Loopcloud</div></div>
<svg class="a" style="left:7.5px;top:110.5px;" width="9" height="9" viewBox="0 0 9 9"><path d="M1 1 V4.5 M2.8 0.5 V5 M4.6 0.5 V5 M6.4 1 V4.5 M1 4.5 Q4.5 9 8 4.5" stroke="#1d2a38" stroke-width="0.9" fill="none"/></svg>
<div class="a" style="left:60px;top:120.80px;width:25.50px;height:10.00px;background:rgba(0,0,0,0.09);border:0.6px solid rgba(0,0,0,0.2);border-radius:1.5px"></div>
<svg class="a" style="left:62.8px;top:122.5px;" width="7" height="7" viewBox="0 0 7 7"><path d="M1.2 3.6 L5.6 2.6 A2.5 2.5 0 1 0 5.4 4.9" stroke="#dfe7ef" stroke-width="1.05" fill="none"/></svg>
<svg class="a" style="left:75.3px;top:123.1px;" width="9" height="6" viewBox="0 0 9 6"><rect x="0.6" y="0.6" width="7" height="4.2" rx="2.1" stroke="#dfe7ef" stroke-width="1" fill="none"/><rect x="2.3" y="1.8" width="1.5" height="1.8" fill="#3d5671"/><rect x="4.4" y="1.8" width="1.5" height="1.8" fill="#3d5671"/></svg>
<svg class="a" style="left:7.3px;top:136.20000000000002px;" width="10" height="8" viewBox="0 0 10 8"><path d="M0.2 4.1 L3.1 2.9 L4.4 0.2 L5.5 2.9 L8.6 4.1 L5.5 5.2 L4.4 7.2 L3.1 5.2Z" fill="#172a3c"/></svg>
<div class="a" style="left:60px;top:145.40px;width:24.90px;height:10.00px;background:rgba(0,0,0,0.09);border:0.6px solid rgba(0,0,0,0.2);border-radius:1.5px"></div>
<div class="a" style="left:86.5px;top:145.40px;width:25.30px;height:10.00px;background:rgba(0,0,0,0.09);border:0.6px solid rgba(0,0,0,0.2);border-radius:1.5px"></div>
<svg class="a" style="left:64.2px;top:148.10000000000002px;" width="4.4" height="4.4" viewBox="0 0 4.4 4.4"><circle cx="2.2" cy="2.2" r="1.85" fill="#dfe7ef"/></svg>
<svg class="a" style="left:75px;top:147.3px;" width="7" height="6" viewBox="0 0 7 6"><path d="M0.5 2 H2 L4 0.4 V5.6 L2 4 H0.5Z" fill="#dfe7ef"/><path d="M5.2 1.3 Q6.3 3 5.2 4.7" stroke="#dfe7ef" stroke-width="0.6" fill="none"/></svg>
<svg class="a" style="left:89.3px;top:147.10000000000002px;" width="7" height="7" viewBox="0 0 7 7"><path d="M1.2 3.6 L5.6 2.6 A2.5 2.5 0 1 0 5.4 4.9" stroke="#dfe7ef" stroke-width="1.05" fill="none"/></svg>
<svg class="a" style="left:101.6px;top:147.70000000000002px;" width="9" height="6" viewBox="0 0 9 6"><rect x="0.6" y="0.6" width="7" height="4.2" rx="2.1" stroke="#dfe7ef" stroke-width="1" fill="none"/><rect x="2.3" y="1.8" width="1.5" height="1.8" fill="#3d5671"/><rect x="4.4" y="1.8" width="1.5" height="1.8" fill="#3d5671"/></svg>
<svg class="a" style="left:7.3px;top:160.8px;" width="10" height="8" viewBox="0 0 10 8"><path d="M0.2 4.1 L3.1 2.9 L4.4 0.2 L5.5 2.9 L8.6 4.1 L5.5 5.2 L4.4 7.2 L3.1 5.2Z" fill="#172a3c"/></svg>
<div class="a" style="left:60px;top:170.00px;width:24.90px;height:10.00px;background:rgba(0,0,0,0.09);border:0.6px solid rgba(0,0,0,0.2);border-radius:1.5px"></div>
<div class="a" style="left:86.5px;top:170.00px;width:25.30px;height:10.00px;background:rgba(0,0,0,0.09);border:0.6px solid rgba(0,0,0,0.2);border-radius:1.5px"></div>
<svg class="a" style="left:64.2px;top:172.70000000000002px;" width="4.4" height="4.4" viewBox="0 0 4.4 4.4"><circle cx="2.2" cy="2.2" r="1.85" fill="#dfe7ef"/></svg>
<svg class="a" style="left:75px;top:171.9px;" width="7" height="6" viewBox="0 0 7 6"><path d="M0.5 2 H2 L4 0.4 V5.6 L2 4 H0.5Z" fill="#dfe7ef"/><path d="M5.2 1.3 Q6.3 3 5.2 4.7" stroke="#dfe7ef" stroke-width="0.6" fill="none"/></svg>
<svg class="a" style="left:89.3px;top:171.70000000000002px;" width="7" height="7" viewBox="0 0 7 7"><path d="M1.2 3.6 L5.6 2.6 A2.5 2.5 0 1 0 5.4 4.9" stroke="#dfe7ef" stroke-width="1.05" fill="none"/></svg>
<svg class="a" style="left:101.6px;top:172.3px;" width="9" height="6" viewBox="0 0 9 6"><rect x="0.6" y="0.6" width="7" height="4.2" rx="2.1" stroke="#dfe7ef" stroke-width="1" fill="none"/><rect x="2.3" y="1.8" width="1.5" height="1.8" fill="#3d5671"/><rect x="4.4" y="1.8" width="1.5" height="1.8" fill="#3d5671"/></svg>
<svg class="a" style="left:7.3px;top:185.4px;" width="10" height="8" viewBox="0 0 10 8"><path d="M0.2 4.1 L3.1 2.9 L4.4 0.2 L5.5 2.9 L8.6 4.1 L5.5 5.2 L4.4 7.2 L3.1 5.2Z" fill="#172a3c"/></svg>
<div class="a" style="left:60px;top:194.60px;width:24.90px;height:10.00px;background:rgba(0,0,0,0.09);border:0.6px solid rgba(0,0,0,0.2);border-radius:1.5px"></div>
<div class="a" style="left:86.5px;top:194.60px;width:25.30px;height:10.00px;background:rgba(0,0,0,0.09);border:0.6px solid rgba(0,0,0,0.2);border-radius:1.5px"></div>
<svg class="a" style="left:64.2px;top:197.3px;" width="4.4" height="4.4" viewBox="0 0 4.4 4.4"><circle cx="2.2" cy="2.2" r="1.85" fill="#dfe7ef"/></svg>
<svg class="a" style="left:75px;top:196.5px;" width="7" height="6" viewBox="0 0 7 6"><path d="M0.5 2 H2 L4 0.4 V5.6 L2 4 H0.5Z" fill="#dfe7ef"/><path d="M5.2 1.3 Q6.3 3 5.2 4.7" stroke="#dfe7ef" stroke-width="0.6" fill="none"/></svg>
<svg class="a" style="left:89.3px;top:196.3px;" width="7" height="7" viewBox="0 0 7 7"><path d="M1.2 3.6 L5.6 2.6 A2.5 2.5 0 1 0 5.4 4.9" stroke="#dfe7ef" stroke-width="1.05" fill="none"/></svg>
<svg class="a" style="left:101.6px;top:196.9px;" width="9" height="6" viewBox="0 0 9 6"><rect x="0.6" y="0.6" width="7" height="4.2" rx="2.1" stroke="#dfe7ef" stroke-width="1" fill="none"/><rect x="2.3" y="1.8" width="1.5" height="1.8" fill="#3d5671"/><rect x="4.4" y="1.8" width="1.5" height="1.8" fill="#3d5671"/></svg>
<svg class="a" style="left:7.3px;top:210.0px;" width="10" height="8" viewBox="0 0 10 8"><path d="M0.2 4.1 L3.1 2.9 L4.4 0.2 L5.5 2.9 L8.6 4.1 L5.5 5.2 L4.4 7.2 L3.1 5.2Z" fill="#172a3c"/></svg>
<div class="a" style="left:60px;top:219.20px;width:24.90px;height:10.00px;background:rgba(0,0,0,0.09);border:0.6px solid rgba(0,0,0,0.2);border-radius:1.5px"></div>
<div class="a" style="left:86.5px;top:219.20px;width:25.30px;height:10.00px;background:rgba(0,0,0,0.09);border:0.6px solid rgba(0,0,0,0.2);border-radius:1.5px"></div>
<svg class="a" style="left:64.2px;top:221.9px;" width="4.4" height="4.4" viewBox="0 0 4.4 4.4"><circle cx="2.2" cy="2.2" r="1.85" fill="#dfe7ef"/></svg>
<svg class="a" style="left:75px;top:221.1px;" width="7" height="6" viewBox="0 0 7 6"><path d="M0.5 2 H2 L4 0.4 V5.6 L2 4 H0.5Z" fill="#dfe7ef"/><path d="M5.2 1.3 Q6.3 3 5.2 4.7" stroke="#dfe7ef" stroke-width="0.6" fill="none"/></svg>
<svg class="a" style="left:89.3px;top:220.9px;" width="7" height="7" viewBox="0 0 7 7"><path d="M1.2 3.6 L5.6 2.6 A2.5 2.5 0 1 0 5.4 4.9" stroke="#dfe7ef" stroke-width="1.05" fill="none"/></svg>
<svg class="a" style="left:101.6px;top:221.5px;" width="9" height="6" viewBox="0 0 9 6"><rect x="0.6" y="0.6" width="7" height="4.2" rx="2.1" stroke="#dfe7ef" stroke-width="1" fill="none"/><rect x="2.3" y="1.8" width="1.5" height="1.8" fill="#3d5671"/><rect x="4.4" y="1.8" width="1.5" height="1.8" fill="#3d5671"/></svg>
<svg class="a" style="left:7.3px;top:234.60000000000002px;" width="10" height="8" viewBox="0 0 10 8"><path d="M0.2 4.1 L3.1 2.9 L4.4 0.2 L5.5 2.9 L8.6 4.1 L5.5 5.2 L4.4 7.2 L3.1 5.2Z" fill="#172a3c"/></svg>
<div class="a" style="left:60px;top:243.80px;width:24.90px;height:10.00px;background:rgba(0,0,0,0.09);border:0.6px solid rgba(0,0,0,0.2);border-radius:1.5px"></div>
<div class="a" style="left:86.5px;top:243.80px;width:25.30px;height:10.00px;background:rgba(0,0,0,0.09);border:0.6px solid rgba(0,0,0,0.2);border-radius:1.5px"></div>
<svg class="a" style="left:64.2px;top:246.50000000000003px;" width="4.4" height="4.4" viewBox="0 0 4.4 4.4"><circle cx="2.2" cy="2.2" r="1.85" fill="#dfe7ef"/></svg>
<svg class="a" style="left:75px;top:245.70000000000002px;" width="7" height="6" viewBox="0 0 7 6"><path d="M0.5 2 H2 L4 0.4 V5.6 L2 4 H0.5Z" fill="#dfe7ef"/><path d="M5.2 1.3 Q6.3 3 5.2 4.7" stroke="#dfe7ef" stroke-width="0.6" fill="none"/></svg>
<svg class="a" style="left:89.3px;top:245.50000000000003px;" width="7" height="7" viewBox="0 0 7 7"><path d="M1.2 3.6 L5.6 2.6 A2.5 2.5 0 1 0 5.4 4.9" stroke="#dfe7ef" stroke-width="1.05" fill="none"/></svg>
<svg class="a" style="left:101.6px;top:246.10000000000002px;" width="9" height="6" viewBox="0 0 9 6"><rect x="0.6" y="0.6" width="7" height="4.2" rx="2.1" stroke="#dfe7ef" stroke-width="1" fill="none"/><rect x="2.3" y="1.8" width="1.5" height="1.8" fill="#3d5671"/><rect x="4.4" y="1.8" width="1.5" height="1.8" fill="#3d5671"/></svg>
<svg class="a" style="left:7.3px;top:259.20000000000005px;" width="10" height="8" viewBox="0 0 10 8"><path d="M0.2 4.1 L3.1 2.9 L4.4 0.2 L5.5 2.9 L8.6 4.1 L5.5 5.2 L4.4 7.2 L3.1 5.2Z" fill="#172a3c"/></svg>
<div class="a" style="left:60px;top:268.40px;width:24.90px;height:10.00px;background:rgba(0,0,0,0.09);border:0.6px solid rgba(0,0,0,0.2);border-radius:1.5px"></div>
<div class="a" style="left:86.5px;top:268.40px;width:25.30px;height:10.00px;background:rgba(0,0,0,0.09);border:0.6px solid rgba(0,0,0,0.2);border-radius:1.5px"></div>
<svg class="a" style="left:64.2px;top:271.1px;" width="4.4" height="4.4" viewBox="0 0 4.4 4.4"><circle cx="2.2" cy="2.2" r="1.85" fill="#dfe7ef"/></svg>
<svg class="a" style="left:75px;top:270.3px;" width="7" height="6" viewBox="0 0 7 6"><path d="M0.5 2 H2 L4 0.4 V5.6 L2 4 H0.5Z" fill="#dfe7ef"/><path d="M5.2 1.3 Q6.3 3 5.2 4.7" stroke="#dfe7ef" stroke-width="0.6" fill="none"/></svg>
<svg class="a" style="left:89.3px;top:270.1px;" width="7" height="7" viewBox="0 0 7 7"><path d="M1.2 3.6 L5.6 2.6 A2.5 2.5 0 1 0 5.4 4.9" stroke="#dfe7ef" stroke-width="1.05" fill="none"/></svg>
<svg class="a" style="left:101.6px;top:270.70000000000005px;" width="9" height="6" viewBox="0 0 9 6"><rect x="0.6" y="0.6" width="7" height="4.2" rx="2.1" stroke="#dfe7ef" stroke-width="1" fill="none"/><rect x="2.3" y="1.8" width="1.5" height="1.8" fill="#3d5671"/><rect x="4.4" y="1.8" width="1.5" height="1.8" fill="#3d5671"/></svg>
<svg class="a" style="left:7.3px;top:283.80000000000007px;" width="10" height="8" viewBox="0 0 10 8"><path d="M0.2 4.1 L3.1 2.9 L4.4 0.2 L5.5 2.9 L8.6 4.1 L5.5 5.2 L4.4 7.2 L3.1 5.2Z" fill="#172a3c"/></svg>
<div class="a" style="left:60px;top:293.00px;width:24.90px;height:10.00px;background:rgba(0,0,0,0.09);border:0.6px solid rgba(0,0,0,0.2);border-radius:1.5px"></div>
<div class="a" style="left:86.5px;top:293.00px;width:25.30px;height:10.00px;background:rgba(0,0,0,0.09);border:0.6px solid rgba(0,0,0,0.2);border-radius:1.5px"></div>
<svg class="a" style="left:64.2px;top:295.70000000000005px;" width="4.4" height="4.4" viewBox="0 0 4.4 4.4"><circle cx="2.2" cy="2.2" r="1.85" fill="#dfe7ef"/></svg>
<svg class="a" style="left:75px;top:294.90000000000003px;" width="7" height="6" viewBox="0 0 7 6"><path d="M0.5 2 H2 L4 0.4 V5.6 L2 4 H0.5Z" fill="#dfe7ef"/><path d="M5.2 1.3 Q6.3 3 5.2 4.7" stroke="#dfe7ef" stroke-width="0.6" fill="none"/></svg>
<svg class="a" style="left:89.3px;top:294.70000000000005px;" width="7" height="7" viewBox="0 0 7 7"><path d="M1.2 3.6 L5.6 2.6 A2.5 2.5 0 1 0 5.4 4.9" stroke="#dfe7ef" stroke-width="1.05" fill="none"/></svg>
<svg class="a" style="left:101.6px;top:295.30000000000007px;" width="9" height="6" viewBox="0 0 9 6"><rect x="0.6" y="0.6" width="7" height="4.2" rx="2.1" stroke="#dfe7ef" stroke-width="1" fill="none"/><rect x="2.3" y="1.8" width="1.5" height="1.8" fill="#3d5671"/><rect x="4.4" y="1.8" width="1.5" height="1.8" fill="#3d5671"/></svg>
<svg class="a" style="left:7.3px;top:308.40000000000003px;" width="10" height="8" viewBox="0 0 10 8"><path d="M0.2 4.1 L3.1 2.9 L4.4 0.2 L5.5 2.9 L8.6 4.1 L5.5 5.2 L4.4 7.2 L3.1 5.2Z" fill="#172a3c"/></svg>
<div class="a" style="left:60px;top:317.60px;width:24.90px;height:10.00px;background:rgba(0,0,0,0.09);border:0.6px solid rgba(0,0,0,0.2);border-radius:1.5px"></div>
<div class="a" style="left:86.5px;top:317.60px;width:25.30px;height:10.00px;background:rgba(0,0,0,0.09);border:0.6px solid rgba(0,0,0,0.2);border-radius:1.5px"></div>
<svg class="a" style="left:64.2px;top:320.3px;" width="4.4" height="4.4" viewBox="0 0 4.4 4.4"><circle cx="2.2" cy="2.2" r="1.85" fill="#dfe7ef"/></svg>
<svg class="a" style="left:75px;top:319.5px;" width="7" height="6" viewBox="0 0 7 6"><path d="M0.5 2 H2 L4 0.4 V5.6 L2 4 H0.5Z" fill="#dfe7ef"/><path d="M5.2 1.3 Q6.3 3 5.2 4.7" stroke="#dfe7ef" stroke-width="0.6" fill="none"/></svg>
<svg class="a" style="left:89.3px;top:319.3px;" width="7" height="7" viewBox="0 0 7 7"><path d="M1.2 3.6 L5.6 2.6 A2.5 2.5 0 1 0 5.4 4.9" stroke="#dfe7ef" stroke-width="1.05" fill="none"/></svg>
<svg class="a" style="left:101.6px;top:319.90000000000003px;" width="9" height="6" viewBox="0 0 9 6"><rect x="0.6" y="0.6" width="7" height="4.2" rx="2.1" stroke="#dfe7ef" stroke-width="1" fill="none"/><rect x="2.3" y="1.8" width="1.5" height="1.8" fill="#3d5671"/><rect x="4.4" y="1.8" width="1.5" height="1.8" fill="#3d5671"/></svg>
<svg class="a" style="left:7.3px;top:333.0px;" width="10" height="8" viewBox="0 0 10 8"><path d="M0.2 4.1 L3.1 2.9 L4.4 0.2 L5.5 2.9 L8.6 4.1 L5.5 5.2 L4.4 7.2 L3.1 5.2Z" fill="#172a3c"/></svg>
<div class="a" style="left:60px;top:342.20px;width:24.90px;height:10.00px;background:rgba(0,0,0,0.09);border:0.6px solid rgba(0,0,0,0.2);border-radius:1.5px"></div>
<div class="a" style="left:86.5px;top:342.20px;width:25.30px;height:10.00px;background:rgba(0,0,0,0.09);border:0.6px solid rgba(0,0,0,0.2);border-radius:1.5px"></div>
<svg class="a" style="left:64.2px;top:344.9px;" width="4.4" height="4.4" viewBox="0 0 4.4 4.4"><circle cx="2.2" cy="2.2" r="1.85" fill="#dfe7ef"/></svg>
<svg class="a" style="left:75px;top:344.09999999999997px;" width="7" height="6" viewBox="0 0 7 6"><path d="M0.5 2 H2 L4 0.4 V5.6 L2 4 H0.5Z" fill="#dfe7ef"/><path d="M5.2 1.3 Q6.3 3 5.2 4.7" stroke="#dfe7ef" stroke-width="0.6" fill="none"/></svg>
<svg class="a" style="left:89.3px;top:343.9px;" width="7" height="7" viewBox="0 0 7 7"><path d="M1.2 3.6 L5.6 2.6 A2.5 2.5 0 1 0 5.4 4.9" stroke="#dfe7ef" stroke-width="1.05" fill="none"/></svg>
<svg class="a" style="left:101.6px;top:344.5px;" width="9" height="6" viewBox="0 0 9 6"><rect x="0.6" y="0.6" width="7" height="4.2" rx="2.1" stroke="#dfe7ef" stroke-width="1" fill="none"/><rect x="2.3" y="1.8" width="1.5" height="1.8" fill="#3d5671"/><rect x="4.4" y="1.8" width="1.5" height="1.8" fill="#3d5671"/></svg>
<svg class="a" style="left:7.3px;top:357.6px;" width="10" height="8" viewBox="0 0 10 8"><path d="M0.2 4.1 L3.1 2.9 L4.4 0.2 L5.5 2.9 L8.6 4.1 L5.5 5.2 L4.4 7.2 L3.1 5.2Z" fill="#172a3c"/></svg>
<div class="a" style="left:60px;top:366.80px;width:24.90px;height:10.00px;background:rgba(0,0,0,0.09);border:0.6px solid rgba(0,0,0,0.2);border-radius:1.5px"></div>
<div class="a" style="left:86.5px;top:366.80px;width:25.30px;height:10.00px;background:rgba(0,0,0,0.09);border:0.6px solid rgba(0,0,0,0.2);border-radius:1.5px"></div>
<svg class="a" style="left:64.2px;top:369.5px;" width="4.4" height="4.4" viewBox="0 0 4.4 4.4"><circle cx="2.2" cy="2.2" r="1.85" fill="#dfe7ef"/></svg>
<svg class="a" style="left:75px;top:368.7px;" width="7" height="6" viewBox="0 0 7 6"><path d="M0.5 2 H2 L4 0.4 V5.6 L2 4 H0.5Z" fill="#dfe7ef"/><path d="M5.2 1.3 Q6.3 3 5.2 4.7" stroke="#dfe7ef" stroke-width="0.6" fill="none"/></svg>
<svg class="a" style="left:89.3px;top:368.5px;" width="7" height="7" viewBox="0 0 7 7"><path d="M1.2 3.6 L5.6 2.6 A2.5 2.5 0 1 0 5.4 4.9" stroke="#dfe7ef" stroke-width="1.05" fill="none"/></svg>
<svg class="a" style="left:101.6px;top:369.1px;" width="9" height="6" viewBox="0 0 9 6"><rect x="0.6" y="0.6" width="7" height="4.2" rx="2.1" stroke="#dfe7ef" stroke-width="1" fill="none"/><rect x="2.3" y="1.8" width="1.5" height="1.8" fill="#3d5671"/><rect x="4.4" y="1.8" width="1.5" height="1.8" fill="#3d5671"/></svg>
<svg class="a" style="left:7.3px;top:382.20000000000005px;" width="10" height="8" viewBox="0 0 10 8"><path d="M0.2 4.1 L3.1 2.9 L4.4 0.2 L5.5 2.9 L8.6 4.1 L5.5 5.2 L4.4 7.2 L3.1 5.2Z" fill="#172a3c"/></svg>
<div class="a" style="left:60px;top:391.40px;width:24.90px;height:10.00px;background:rgba(0,0,0,0.09);border:0.6px solid rgba(0,0,0,0.2);border-radius:1.5px"></div>
<div class="a" style="left:86.5px;top:391.40px;width:25.30px;height:10.00px;background:rgba(0,0,0,0.09);border:0.6px solid rgba(0,0,0,0.2);border-radius:1.5px"></div>
<svg class="a" style="left:64.2px;top:394.1px;" width="4.4" height="4.4" viewBox="0 0 4.4 4.4"><circle cx="2.2" cy="2.2" r="1.85" fill="#dfe7ef"/></svg>
<svg class="a" style="left:75px;top:393.3px;" width="7" height="6" viewBox="0 0 7 6"><path d="M0.5 2 H2 L4 0.4 V5.6 L2 4 H0.5Z" fill="#dfe7ef"/><path d="M5.2 1.3 Q6.3 3 5.2 4.7" stroke="#dfe7ef" stroke-width="0.6" fill="none"/></svg>
<svg class="a" style="left:89.3px;top:393.1px;" width="7" height="7" viewBox="0 0 7 7"><path d="M1.2 3.6 L5.6 2.6 A2.5 2.5 0 1 0 5.4 4.9" stroke="#dfe7ef" stroke-width="1.05" fill="none"/></svg>
<svg class="a" style="left:101.6px;top:393.70000000000005px;" width="9" height="6" viewBox="0 0 9 6"><rect x="0.6" y="0.6" width="7" height="4.2" rx="2.1" stroke="#dfe7ef" stroke-width="1" fill="none"/><rect x="2.3" y="1.8" width="1.5" height="1.8" fill="#3d5671"/><rect x="4.4" y="1.8" width="1.5" height="1.8" fill="#3d5671"/></svg>
<svg class="a" style="left:7.3px;top:406.80000000000007px;" width="10" height="8" viewBox="0 0 10 8"><path d="M0.2 4.1 L3.1 2.9 L4.4 0.2 L5.5 2.9 L8.6 4.1 L5.5 5.2 L4.4 7.2 L3.1 5.2Z" fill="#172a3c"/></svg>
<div class="a" style="left:60px;top:416.00px;width:24.90px;height:10.00px;background:rgba(0,0,0,0.09);border:0.6px solid rgba(0,0,0,0.2);border-radius:1.5px"></div>
<div class="a" style="left:86.5px;top:416.00px;width:25.30px;height:10.00px;background:rgba(0,0,0,0.09);border:0.6px solid rgba(0,0,0,0.2);border-radius:1.5px"></div>
<svg class="a" style="left:64.2px;top:418.70000000000005px;" width="4.4" height="4.4" viewBox="0 0 4.4 4.4"><circle cx="2.2" cy="2.2" r="1.85" fill="#dfe7ef"/></svg>
<svg class="a" style="left:75px;top:417.90000000000003px;" width="7" height="6" viewBox="0 0 7 6"><path d="M0.5 2 H2 L4 0.4 V5.6 L2 4 H0.5Z" fill="#dfe7ef"/><path d="M5.2 1.3 Q6.3 3 5.2 4.7" stroke="#dfe7ef" stroke-width="0.6" fill="none"/></svg>
<svg class="a" style="left:89.3px;top:417.70000000000005px;" width="7" height="7" viewBox="0 0 7 7"><path d="M1.2 3.6 L5.6 2.6 A2.5 2.5 0 1 0 5.4 4.9" stroke="#dfe7ef" stroke-width="1.05" fill="none"/></svg>
<svg class="a" style="left:101.6px;top:418.30000000000007px;" width="9" height="6" viewBox="0 0 9 6"><rect x="0.6" y="0.6" width="7" height="4.2" rx="2.1" stroke="#dfe7ef" stroke-width="1" fill="none"/><rect x="2.3" y="1.8" width="1.5" height="1.8" fill="#3d5671"/><rect x="4.4" y="1.8" width="1.5" height="1.8" fill="#3d5671"/></svg>
<svg class="a" style="left:7.3px;top:431.4000000000001px;" width="10" height="8" viewBox="0 0 10 8"><path d="M0.2 4.1 L3.1 2.9 L4.4 0.2 L5.5 2.9 L8.6 4.1 L5.5 5.2 L4.4 7.2 L3.1 5.2Z" fill="#172a3c"/></svg>
<div class="a" style="left:60px;top:440.60px;width:24.90px;height:10.00px;background:rgba(0,0,0,0.09);border:0.6px solid rgba(0,0,0,0.2);border-radius:1.5px"></div>
<div class="a" style="left:86.5px;top:440.60px;width:25.30px;height:10.00px;background:rgba(0,0,0,0.09);border:0.6px solid rgba(0,0,0,0.2);border-radius:1.5px"></div>
<svg class="a" style="left:64.2px;top:443.30000000000007px;" width="4.4" height="4.4" viewBox="0 0 4.4 4.4"><circle cx="2.2" cy="2.2" r="1.85" fill="#dfe7ef"/></svg>
<svg class="a" style="left:75px;top:442.50000000000006px;" width="7" height="6" viewBox="0 0 7 6"><path d="M0.5 2 H2 L4 0.4 V5.6 L2 4 H0.5Z" fill="#dfe7ef"/><path d="M5.2 1.3 Q6.3 3 5.2 4.7" stroke="#dfe7ef" stroke-width="0.6" fill="none"/></svg>
<svg class="a" style="left:89.3px;top:442.30000000000007px;" width="7" height="7" viewBox="0 0 7 7"><path d="M1.2 3.6 L5.6 2.6 A2.5 2.5 0 1 0 5.4 4.9" stroke="#dfe7ef" stroke-width="1.05" fill="none"/></svg>
<svg class="a" style="left:101.6px;top:442.9000000000001px;" width="9" height="6" viewBox="0 0 9 6"><rect x="0.6" y="0.6" width="7" height="4.2" rx="2.1" stroke="#dfe7ef" stroke-width="1" fill="none"/><rect x="2.3" y="1.8" width="1.5" height="1.8" fill="#3d5671"/><rect x="4.4" y="1.8" width="1.5" height="1.8" fill="#3d5671"/></svg>
<div class="a" style="left:5px;top:71.5px;width:26.90px;height:9.3px;background:#2f3034;border-radius:1.5px;"></div>
<svg class="a" style="left:7.7px;top:71.7px;" width="9" height="9" viewBox="0 0 9 9"><path d="M4.5 1 V8 M1 4.5 H8" stroke="#dcdcdc" stroke-width="1.5"/></svg>
<svg class="a" style="left:20.3px;top:71.5px;" width="11" height="10" viewBox="0 0 11 10"><circle cx="4.5" cy="5" r="3.5" fill="#d8d8d8"/><rect x="5.5" y="4" width="4.5" height="1" fill="#d8d8d8"/><rect x="5.5" y="6" width="4.5" height="1" fill="#d8d8d8"/><rect x="5.5" y="8" width="4.5" height="1" fill="#d8d8d8"/><path d="M5.6 4.3 V9" stroke="#323337" stroke-width="0.8"/></svg>
<div class="a" style="left:84.5px;top:71.5px;width:59.50px;height:9.3px;background:#1c1d1f;border-radius:1.5px;"></div>
<div class="a" style="left:84.5px;top:71.5px;width:33.10px;height:9.3px;background:#3b3c40;border-radius:1.5px;"></div>
<div class="t" style="left:87px;top:73.6px;font-size:5.6px;font-weight:normal;color:#b8b8b8;">15 / 65</div>
<svg class="a" style="left:119.8px;top:72.4px;" width="9" height="8" viewBox="0 0 9 8"><path d="M0.8 3.6 L4.5 0.8 L8.2 3.6 V7.6 H0.8Z" fill="#e08a3c"/><path d="M2.8 3.6 L6.2 6.6 M6.2 3.6 L2.8 6.6" stroke="#1c1d1f" stroke-width="0.9"/></svg>
<svg class="a" style="left:133.5px;top:72.5px;" width="9" height="9" viewBox="0 0 9 9"><rect x="1" y="1" width="7" height="7" stroke="#d8d8d8" stroke-width="1" fill="none"/><path d="M1 3.5 H8 M1 6 H8" stroke="#d8d8d8" stroke-width="0.9"/></svg>
<div class="a" style="left:150.3px;top:71.5px;width:12.50px;height:9.3px;background:#2f3034;border-radius:1.5px;"></div>
<svg class="a" style="left:152px;top:72.3px;" width="10" height="10" viewBox="0 0 10 10"><circle cx="5.5" cy="4.5" r="2.6" stroke="#e0e0e0" stroke-width="1.1" fill="none"/><path d="M3.6 6.4 L1.5 8.5" stroke="#e0e0e0" stroke-width="1.4"/></svg>
<svg class="a" style="left:145px;top:544.5px;" width="4" height="3.2" viewBox="0 0 4 3.2"><path d="M0 0H4L2.0 3.2Z" fill="#9a9a9e"/></svg>
<svg class="a" style="left:154.5px;top:542.5px;" width="7" height="7" viewBox="0 0 7 7"><circle cx="3.5" cy="3.5" r="2.2" stroke="#9a9a9e" stroke-width="1.3" fill="none" stroke-dasharray="1.1 0.6"/><circle cx="3.5" cy="3.5" r="0.9" fill="#9a9a9e"/></svg>
<div class="a" style="left:10.5px;top:546px;width:1px;height:1px;background:#777"></div>
<div class="a" style="left:164.8px;top:304.30px;width:1.3px;height:1.3px;background:#d8d8d8"></div>
<div class="a" style="left:164.8px;top:307.60px;width:1.3px;height:1.3px;background:#d8d8d8"></div>
<div class="a" style="left:164.8px;top:310.90px;width:1.3px;height:1.3px;background:#d8d8d8"></div>
<div class="a" style="left:164.8px;top:314.20px;width:1.3px;height:1.3px;background:#d8d8d8"></div>
<div class="a" style="left:166.5px;top:542.8px;width:845px;height:6.4px;background:#45464a"></div>
<div class="a" style="left:312.2px;top:543.6px;width:32.5px;height:4.2px;background:#f2f2f2;border-radius:1px"></div>
<svg class="a" style="left:168.5px;top:543px;" width="5" height="6" viewBox="0 0 5 6"><path d="M3.5 1 L1.5 3 L3.5 5" stroke="#ccc" stroke-width="0.8" fill="none"/></svg>
<svg class="a" style="left:952.5px;top:543px;" width="5" height="6" viewBox="0 0 5 6"><path d="M1.5 1 L3.5 3 L1.5 5" stroke="#ccc" stroke-width="0.8" fill="none"/></svg>
<div class="a" style="left:958.5px;top:542.8px;width:7.00px;height:5.6px;background:#2c2d30;border-radius:0.8px;"></div>
<svg class="a" style="left:960.2px;top:544.3px;" width="3.8" height="3.2" viewBox="0 0 3.8 3.2"><path d="M0 0H3.8L1.9 3.2Z" fill="#e6e6e6"/></svg>
<div class="a" style="left:966.8px;top:542.8px;width:44.70px;height:5.6px;background:#2c2d30;border-radius:0.8px;"></div>
<div class="a" style="left:969.3px;top:545.3px;width:3.6px;height:1px;background:#e6e6e6"></div>
<div class="a" style="left:976px;top:545.6px;width:26px;height:0.7px;background:#66676b"></div>
<div class="a" style="left:986.3px;top:543.2px;width:4.8px;height:4.8px;background:#f2f2f2;border-radius:50%"></div>
<svg class="a" style="left:1004px;top:542.8px;" width="6" height="6" viewBox="0 0 6 6"><path d="M3 0.6 V5.4 M0.6 3 H5.4" stroke="#e6e6e6" stroke-width="1"/></svg>
<div class="a" style="left:1011.5px;top:70.8px;width:8.5px;height:479px;background:#26272b"></div>
<div class="a" style="left:1012px;top:71px;width:7.00px;height:11.8px;background:#36373b;border-radius:1.2px;"></div>
<svg class="a" style="left:1013.3px;top:75px;" width="4.4" height="3.8" viewBox="0 0 4.4 3.8"><path d="M0 0H4.4L2.2 3.8Z" fill="#e6e6e6"/></svg>
<div class="a" style="left:1012px;top:84.3px;width:7.00px;height:7px;background:#36373b;border-radius:1.2px;"></div>
<svg class="a" style="left:1012.8px;top:84.6px;" width="6" height="6.5" viewBox="0 0 6 6.5"><path d="M1 5.5 L4.6 1.5" stroke="#e6e6e6" stroke-width="1.1"/></svg>
<div class="a" style="left:1012px;top:92.1px;width:7.00px;height:26.6px;background:#2f3034;border-radius:1.2px;"></div>
<div class="a" style="left:1015.1px;top:95px;width:0.8px;height:19px;background:#6d6e72"></div>
<div class="a" style="left:1013.1px;top:112.4px;width:4.8px;height:4.8px;background:#f2f2f2;border-radius:50%"></div>
<div class="a" style="left:1012px;top:119px;width:7.00px;height:370.5px;background:#3a3b3f;border-radius:1.2px;"></div>
<svg class="a" style="left:1013.3px;top:121.5px;" width="5" height="3" viewBox="0 0 5 3"><path d="M0.5 2.5 L2.5 0.5 L4.5 2.5" stroke="#55565a" stroke-width="0.6" fill="none"/></svg>
<svg class="a" style="left:1013.3px;top:483.5px;" width="5" height="3" viewBox="0 0 5 3"><path d="M0.5 0.5 L2.5 2.5 L4.5 0.5" stroke="#55565a" stroke-width="0.6" fill="none"/></svg>
<div class="a" style="left:1012px;top:491px;width:7.00px;height:5.5px;background:#36373b;border-radius:1.2px;"></div>
<svg class="a" style="left:1013.7px;top:492.3px;" width="3.8" height="3.2" viewBox="0 0 3.8 3.2"><path d="M0 0H3.8L1.9 3.2Z" fill="#e6e6e6"/></svg>
<div class="a" style="left:1012px;top:498px;width:7.00px;height:44px;background:#2f3034;border-radius:1.2px;"></div>
<div class="a" style="left:1013.7px;top:501.3px;width:3.8px;height:0.9px;background:#e6e6e6"></div>
<div class="a" style="left:1015.1px;top:510px;width:0.8px;height:24px;background:#6d6e72"></div>
<div class="a" style="left:1013.1px;top:506.6px;width:4.8px;height:4.8px;background:#f2f2f2;border-radius:50%"></div>
<svg class="a" style="left:1012.5px;top:535.8px;" width="6" height="6" viewBox="0 0 6 6"><path d="M3 0.6 V5.4 M0.6 3 H5.4" stroke="#e6e6e6" stroke-width="1"/></svg>
<div class="a" style="left:0;top:553.5px;width:1024px;height:22.5px;background:#232428"></div>
<div class="a" style="left:2px;top:558px;width:13.50px;height:13.2px;background:#36373b;border-radius:1.5px;"></div>
<svg class="a" style="left:4.5px;top:560.5px;" width="9" height="9" viewBox="0 0 9 9"><circle cx="4.5" cy="4.5" r="3.4" stroke="#d0d0d0" stroke-width="1.2" fill="none"/><circle cx="4.5" cy="4.5" r="1.6" fill="#d0d0d0"/><path d="M1 2 L2 3 M8 2 L7 3" stroke="#d0d0d0" stroke-width="0.8"/></svg>
<div class="a" style="left:18.7px;top:558px;width:22.50px;height:13.2px;background:#161719;border-radius:1.5px;"></div>
<svg class="a" style="left:22.5px;top:562px;" width="6" height="6" viewBox="0 0 6 6"><circle cx="3" cy="3" r="2.6" fill="#e0e0e0"/></svg>
<svg class="a" style="left:32.8px;top:563px;" width="4.2" height="3.8" viewBox="0 0 4.2 3.8"><path d="M0 0H4.2L2.1 3.8Z" fill="#e0e0e0"/></svg>
<div class="a" style="left:42.8px;top:561.30px;width:1.1px;height:1.1px;background:#bdbdbd"></div>
<div class="a" style="left:42.8px;top:563.70px;width:1.1px;height:1.1px;background:#bdbdbd"></div>
<div class="a" style="left:42.8px;top:566.10px;width:1.1px;height:1.1px;background:#bdbdbd"></div>
<div class="a" style="left:47.5px;top:558px;width:23.00px;height:13.2px;background:#161719;border-radius:1.5px;"></div>
<svg class="a" style="left:49.5px;top:560.5px;" width="11" height="9" viewBox="0 0 11 9"><path d="M0.5 4.5 H10.5" stroke="#e0e0e0" stroke-width="0.8"/><path d="M2.5 4.5 L3.5 3 L4.5 6 L5.5 1 L6.5 8 L7.5 3 L8.5 4.5" stroke="#e0e0e0" stroke-width="1.2" fill="#e0e0e0"/></svg>
<svg class="a" style="left:62px;top:563px;" width="4.2" height="3.8" viewBox="0 0 4.2 3.8"><path d="M0 0H4.2L2.1 3.8Z" fill="#e0e0e0"/></svg>
<div class="a" style="left:72.2px;top:561.30px;width:1.1px;height:1.1px;background:#bdbdbd"></div>
<div class="a" style="left:72.2px;top:563.70px;width:1.1px;height:1.1px;background:#bdbdbd"></div>
<div class="a" style="left:72.2px;top:566.10px;width:1.1px;height:1.1px;background:#bdbdbd"></div>
<div class="a" style="left:77px;top:558px;width:23.00px;height:13.2px;background:#161719;border-radius:1.5px;"></div>
<svg class="a" style="left:79.5px;top:560.5px;" width="9" height="9" viewBox="0 0 9 9"><circle cx="4.5" cy="4.5" r="4" fill="#e0e0e0"/><path d="M4.5 4.5 L2.5 7.5" stroke="#161719" stroke-width="1"/><circle cx="4.5" cy="4.5" r="1.2" fill="#161719"/></svg>
<svg class="a" style="left:91.5px;top:563px;" width="4.2" height="3.8" viewBox="0 0 4.2 3.8"><path d="M0 0H4.2L2.1 3.8Z" fill="#e0e0e0"/></svg>
<div class="a" style="left:101.8px;top:561.30px;width:1.1px;height:1.1px;background:#bdbdbd"></div>
<div class="a" style="left:101.8px;top:563.70px;width:1.1px;height:1.1px;background:#bdbdbd"></div>
<div class="a" style="left:101.8px;top:566.10px;width:1.1px;height:1.1px;background:#bdbdbd"></div>
<div class="a" style="left:106.2px;top:558px;width:20.00px;height:13.2px;background:#36373b;border-radius:1.5px;"></div>
<div class="t" style="left:109.5px;top:561.5px;font-size:7px;font-weight:bold;color:#d8d8d8;letter-spacing:-0.6px">AQ</div>
<div class="a" style="left:254px;top:558px;width:13.00px;height:13.2px;background:#36373b;border-radius:1.5px;"></div>
<svg class="a" style="left:257px;top:561px;" width="7" height="7" viewBox="0 0 7 7"><path d="M0.5 0.5 H6 L0.5 6Z" fill="#d8d8d8"/></svg>
<div class="a" style="left:266.5px;top:558px;width:66.50px;height:13.2px;background:#161719;border-radius:1.5px;"></div>
<div class="t" style="left:283.5px;top:560.2px;font-size:8.7px;font-weight:normal;color:#dadada;transform:scaleX(0.9);transform-origin:0 0">51.&nbsp;&nbsp;1.&nbsp;&nbsp;1.&nbsp;&nbsp;&nbsp;&nbsp;0</div>
<div class="a" style="left:339.3px;top:558px;width:13.70px;height:13.2px;background:#36373b;border-radius:1.5px;"></div>
<svg class="a" style="left:343px;top:561px;" width="7" height="7" viewBox="0 0 7 7"><path d="M0.5 0.5 H6 V6Z" fill="#d8d8d8"/></svg>
<div class="a" style="left:353px;top:558px;width:66.00px;height:13.2px;background:#161719;border-radius:1.5px;"></div>
<div class="t" style="left:369px;top:560.2px;font-size:8.7px;font-weight:normal;color:#dadada;transform:scaleX(0.9);transform-origin:0 0">59.&nbsp;&nbsp;1.&nbsp;&nbsp;1.&nbsp;&nbsp;&nbsp;&nbsp;0</div>
<div class="a" style="left:422.3px;top:558px;width:13.20px;height:13.2px;background:#d6d6d8;border-radius:1.5px;"></div>
<svg class="a" style="left:425.5px;top:560.5px;" width="7" height="8" viewBox="0 0 7 8"><rect x="0.8" y="3.5" width="5.4" height="4" fill="#1d1d1d"/><path d="M1.8 3.6 V2.4 A1.7 1.7 0 0 1 5.2 2.4 V3.6" stroke="#1d1d1d" stroke-width="1" fill="none"/></svg>
<svg class="a" style="left:439px;top:561px;" width="8" height="8" viewBox="0 0 8 8"><path d="M0.8 0.8 H7.2 L4 4Z" fill="#d8d8d8"/><rect x="3.3" y="4.5" width="1.4" height="2.5" fill="#d8d8d8"/></svg>
<svg class="a" style="left:451px;top:561px;" width="8" height="8" viewBox="0 0 8 8"><path d="M0.8 7.2 H7.2 L4 4Z" fill="#d8d8d8"/><rect x="3.3" y="1" width="1.4" height="2.5" fill="#d8d8d8"/></svg>
<div class="a" style="left:463.5px;top:561.30px;width:1.1px;height:1.1px;background:#bdbdbd"></div>
<div class="a" style="left:463.5px;top:563.70px;width:1.1px;height:1.1px;background:#bdbdbd"></div>
<div class="a" style="left:463.5px;top:566.10px;width:1.1px;height:1.1px;background:#bdbdbd"></div>
<div class="a" style="left:467.8px;top:556.8px;width:106.4px;height:17px;border:0.7px solid #c8c8cc;border-radius:2px;background:#646569"></div>
<div class="a" style="left:468.3px;top:557.1px;width:26.00px;height:16.4px;background:#7f72e6;border-radius:1.5px;"></div>
<svg class="a" style="left:477px;top:561px;" width="10" height="8" viewBox="0 0 10 8"><path d="M1.2 6.6 H6.6 Q8.6 6.6 8.6 4.4 Q8.6 1.4 5.6 1.4 Q3.6 1.4 1.2 6.6" stroke="#1f1650" stroke-width="1.2" fill="none" stroke-linejoin="round"/></svg>
<div class="a" style="left:494.3px;top:557.1px;width:26.90px;height:16.4px;background:#e6ecf4;border-radius:0px;"></div>
<svg class="a" style="left:504.5px;top:561.5px;" width="8" height="8" viewBox="0 0 8 8"><rect x="1" y="1" width="5.6" height="5.6" stroke="#333" stroke-width="1.2" fill="none"/></svg>
<svg class="a" style="left:530.5px;top:561px;" width="8" height="9" viewBox="0 0 8 9"><path d="M1 1 L7.5 4.5 L1 8Z" stroke="#e2e2e2" stroke-width="1" fill="none"/></svg>
<svg class="a" style="left:557px;top:561px;" width="9" height="9" viewBox="0 0 9 9"><circle cx="4.5" cy="4.5" r="3.5" stroke="#e2e2e2" stroke-width="1.1" fill="none"/></svg>
<div class="a" style="left:575.5px;top:561.30px;width:1.1px;height:1.1px;background:#bdbdbd"></div>
<div class="a" style="left:575.5px;top:563.70px;width:1.1px;height:1.1px;background:#bdbdbd"></div>
<div class="a" style="left:575.5px;top:566.10px;width:1.1px;height:1.1px;background:#bdbdbd"></div>
<div class="a" style="left:580px;top:558px;width:20.00px;height:13.2px;background:#36373b;border-radius:1.5px;"></div>
<svg class="a" style="left:584px;top:560.5px;" width="12" height="9" viewBox="0 0 12 9"><circle cx="6.8" cy="4.5" r="3.3" fill="#e0e0e0"/><path d="M2 2.5 L5 4.5 L2 6.5" stroke="#36373b" stroke-width="1.2" fill="none"/><path d="M1.5 2.2 L4.3 4.5 L1.5 6.8" stroke="#e0e0e0" stroke-width="0.9" fill="none"/></svg>
<div class="a" style="left:603.5px;top:558px;width:79.80px;height:13.2px;background:#1a1b1d;border-radius:1.5px;border:0.7px solid #303135"></div>
<div class="a" style="left:617px;top:558.5px;width:0.7px;height:12.2px;background:#303135"></div>
<svg class="a" style="left:606px;top:560.5px;" width="8" height="9" viewBox="0 0 8 9"><path d="M5.5 0.8 V6.5" stroke="#e0e0e0" stroke-width="0.9"/><ellipse cx="3.6" cy="6.6" rx="2.2" ry="1.6" fill="#e0e0e0"/></svg>
<div class="t" style="left:633.5px;top:560.2px;font-size:8.7px;font-weight:normal;color:#dadada;transform:scaleX(0.9);transform-origin:0 0">51.&nbsp;&nbsp;1.&nbsp;&nbsp;1.&nbsp;&nbsp;&nbsp;&nbsp;0</div>
<div class="a" style="left:684.5px;top:561.30px;width:1.1px;height:1.1px;background:#bdbdbd"></div>
<div class="a" style="left:684.5px;top:563.70px;width:1.1px;height:1.1px;background:#bdbdbd"></div>
<div class="a" style="left:684.5px;top:566.10px;width:1.1px;height:1.1px;background:#bdbdbd"></div>
<div class="a" style="left:689.5px;top:558px;width:77.50px;height:13.2px;background:#36373b;border-radius:1.5px;"></div>
<div class="a" style="left:689.5px;top:558px;width:12.50px;height:13.2px;background:#d6d6d8;border-radius:1.5px;"></div>
<div class="a" style="left:702px;top:558px;width:43.50px;height:13.2px;background:#1b1c1e;border-radius:0px;"></div>
<svg class="a" style="left:691.5px;top:560px;" width="9" height="10" viewBox="0 0 9 10"><path d="M2.6 1.5 V7" stroke="#222" stroke-width="0.9"/><ellipse cx="1.8" cy="7.4" rx="1.4" ry="1.1" fill="#222"/><path d="M6 1 V9 M4.5 2.5 L6 1 L7.5 2.5 M4.5 7.5 L6 9 L7.5 7.5" stroke="#222" stroke-width="0.8" fill="none"/></svg>
<div class="t" style="left:708.5px;top:561.8px;font-size:6.3px;font-weight:normal;color:#dcdcdc;">105.000</div>
<svg class="a" style="left:738px;top:559.8px;" width="6" height="10" viewBox="0 0 6 10"><path d="M3 1 L5.4 3.8 H0.6Z M0.6 6 H5.4 L3 8.8Z" fill="#d0d0d0"/></svg>
<div class="a" style="left:747px;top:558px;width:20.00px;height:13.2px;background:#1b1c1e;border-radius:0px;"></div>
<div class="t" style="left:753px;top:561.8px;font-size:6.3px;font-weight:normal;color:#dcdcdc;">4/4</div>
<div class="a" style="left:771.8px;top:558px;width:40.70px;height:13.2px;background:#36373b;border-radius:1.5px;"></div>
<div class="a" style="left:799.3px;top:558px;width:13.20px;height:13.2px;background:#161719;border-radius:0px;"></div>
<div class="t" style="left:779.5px;top:561.5px;font-size:7px;font-weight:normal;color:#cfcfcf;">Tap</div>
<svg class="a" style="left:803.5px;top:563px;" width="4.6" height="4" viewBox="0 0 4.6 4"><path d="M0 0H4.6L2.3 4Z" fill="#e6e6e6"/></svg>
<div class="a" style="left:815px;top:561.30px;width:1.1px;height:1.1px;background:#bdbdbd"></div>
<div class="a" style="left:815px;top:563.70px;width:1.1px;height:1.1px;background:#bdbdbd"></div>
<div class="a" style="left:815px;top:566.10px;width:1.1px;height:1.1px;background:#bdbdbd"></div>
<div class="a" style="left:939.3px;top:558px;width:26.20px;height:13.2px;background:#36373b;border-radius:1.5px;"></div>
<svg class="a" style="left:942.5px;top:560.5px;" width="9" height="9" viewBox="0 0 9 9"><path d="M2 8.5 L3.5 1 H5.5 L7 8.5Z" fill="#e0e0e0"/><path d="M4.5 6.5 L7.5 2" stroke="#36373b" stroke-width="1"/><path d="M4.8 6 L7.5 2.2" stroke="#e0e0e0" stroke-width="0.7"/></svg>
<svg class="a" style="left:954.5px;top:560.5px;" width="9" height="9" viewBox="0 0 9 9"><path d="M1.3 4.8 L7.4 3.2 A3.3 3.3 0 1 0 6.8 6.8" stroke="#e6e6e6" stroke-width="1.4" fill="none"/></svg>
<div class="a" style="left:967.5px;top:561.30px;width:1.1px;height:1.1px;background:#bdbdbd"></div>
<div class="a" style="left:967.5px;top:563.70px;width:1.1px;height:1.1px;background:#bdbdbd"></div>
<div class="a" style="left:967.5px;top:566.10px;width:1.1px;height:1.1px;background:#bdbdbd"></div>
<div class="a" style="left:971.8px;top:558.7px;width:46.70px;height:12.5px;background:#1b1c1e;border-radius:1.5px;border:0.6px solid #3a3b3f"></div>
<div class="a" style="left:985px;top:559px;width:0.8px;height:12px;background:#3e3f43"></div>
<div class="a" style="left:993px;top:569.5px;width:3.5px;height:1px;background:#2fb3c0"></div>
<div class="a" style="left:1021px;top:561.30px;width:1.1px;height:1.1px;background:#bdbdbd"></div>
<div class="a" style="left:1021px;top:563.70px;width:1.1px;height:1.1px;background:#bdbdbd"></div>
<div class="a" style="left:1021px;top:566.10px;width:1.1px;height:1.1px;background:#bdbdbd"></div>
<div class="a" style="left:323px;top:164.9px;width:378.20px;height:242.70px;background:#2b2b2b;border-radius:4px;border:0.8px solid #3d3d3d;box-shadow:0 1px 8px rgba(0,0,0,0.35)"></div>
<div class="a" style="left:323px;top:164.9px;width:378.20px;height:15.8px;background:#fafafa;border-radius:3.5px 3.5px 0 0"></div>
<div class="a" style="left:327.3px;top:168px;width:8.6px;height:8.6px;background:linear-gradient(135deg,#2f86b8,#17507a);border-radius:1.2px"></div>
<svg class="a" style="left:327.3px;top:168px;" width="9" height="9" viewBox="0 0 9 9"><path d="M5.6 1.8 L3 4.3 L5.6 6.8" stroke="#fff" stroke-width="1.3" fill="none"/><path d="M4.6 3.4 L6.8 4.3 L4.6 5.2" stroke="#fff" stroke-width="0.7" fill="none"/></svg>
<div class="t" style="left:339px;top:169.4px;font-size:6.9px;font-weight:normal;color:#7c7c7c;transform:scaleX(0.865);transform-origin:0 0">036_a__Synth_Loop_101bpm_A3_-_TRVTW_Zenhiser: Ins. 1 - Skew v2</div>
<div class="a" style="left:636.5px;top:172.3px;width:6.5px;height:0.7px;background:#9a9a9a"></div>
<div class="a" style="left:661px;top:169.5px;width:6px;height:6px;border:0.7px solid #d0d0d0"></div>
<svg class="a" style="left:684.5px;top:169px;" width="7" height="7" viewBox="0 0 7 7"><path d="M0.5 0.5L6.5 6.5M6.5 0.5L0.5 6.5" stroke="#9a9a9a" stroke-width="0.8"/></svg>
<div class="a" style="left:325.2px;top:183.3px;width:26.30px;height:9.7px;background:#3a3a3a;border-radius:1px;"></div>
<div class="a" style="left:325.2px;top:183.3px;width:13.50px;height:9.7px;background:#d6d6d6;border-radius:1px;"></div>
<svg class="a" style="left:328.5px;top:184.5px;" width="7" height="7" viewBox="0 0 7 7"><circle cx="3.5" cy="3.8" r="2.6" fill="#222"/><path d="M3.5 0.8 V3.5" stroke="#d6d6d6" stroke-width="1.2"/><path d="M3.5 0.8 V3.2" stroke="#222" stroke-width="0.6"/></svg>
<svg class="a" style="left:341.5px;top:184.6px;" width="7" height="7" viewBox="0 0 7 7"><path d="M0.8 1 H6.2" stroke="#ccc" stroke-width="0.9"/><rect x="1.3" y="2.6" width="4.4" height="3.8" stroke="#ccc" stroke-width="0.9" fill="none"/><rect x="2.8" y="3.7" width="1.4" height="1.4" fill="#ccc"/></svg>
<div class="a" style="left:354px;top:183.3px;width:26.50px;height:9.7px;background:#3a3a3a;border-radius:1px;"></div>
<div class="a" style="left:354px;top:183.3px;width:14.00px;height:9.7px;background:#3bb83a;border-radius:0px;"></div>
<div class="t" style="left:357.8px;top:185.2px;font-size:7px;font-weight:bold;color:#10280e;">R</div>
<div class="t" style="left:370.5px;top:185.2px;font-size:7px;font-weight:bold;color:#e6e6e6;">W</div>
<div class="a" style="left:383px;top:183.3px;width:26.50px;height:9.7px;background:#3a3a3a;border-radius:1px;"></div>
<svg class="a" style="left:386px;top:184.5px;" width="8" height="8" viewBox="0 0 8 8"><circle cx="4" cy="4" r="3.2" stroke="#ddd" stroke-width="0.9" fill="none"/><circle cx="4" cy="4" r="1.3" stroke="#ddd" stroke-width="0.8" fill="none"/></svg>
<svg class="a" style="left:400px;top:185.5px;" width="6" height="6" viewBox="0 0 6 6"><path d="M3 0.5 L5.5 3 L3 5.5 L0.5 3Z" fill="#ddd"/></svg>
<div class="a" style="left:411.6px;top:183.3px;width:51.90px;height:9.7px;background:#1b1b1b;border-radius:1px;border:0.7px solid #4a4a4a"></div>
<div class="a" style="left:463.5px;top:183.3px;width:29.90px;height:9.7px;background:#3a3a3a;border-radius:1px;"></div>
<div class="a" style="left:483.7px;top:183.3px;width:9.70px;height:9.7px;background:#161616;border-radius:0px;"></div>
<svg class="a" style="left:466px;top:184.5px;" width="7" height="7" viewBox="0 0 7 7"><path d="M3.5 0.5 L6.5 3.2 H0.5Z M0.5 4.3 H6.5 L3.5 6.8Z" fill="#ccc"/></svg>
<svg class="a" style="left:475px;top:184.5px;" width="7" height="7" viewBox="0 0 7 7"><path d="M3.5 0.5 L6.5 3.2 H0.5Z M0.5 4.3 H6.5 L3.5 6.8Z" fill="#ccc"/></svg>
<svg class="a" style="left:486.4px;top:186.5px;" width="4" height="3.6" viewBox="0 0 4 3.6"><path d="M0 0H4L2.0 3.6Z" fill="#ddd"/></svg>
<div class="a" style="left:633.3px;top:183.3px;width:12.70px;height:9.7px;background:#3c3c3c;border-radius:1px;"></div>
<svg class="a" style="left:635.5px;top:185px;" width="8" height="6" viewBox="0 0 8 6"><rect x="0.5" y="0.5" width="7" height="5" stroke="#ddd" stroke-width="0.8" fill="none"/><circle cx="4.5" cy="3.2" r="1.3" fill="#ddd"/><rect x="1.2" y="1.2" width="1.5" height="1" fill="#ddd"/></svg>
<div class="a" style="left:649.3px;top:183.3px;width:11.90px;height:9.7px;background:#161616;border-radius:1px;"></div>
<svg class="a" style="left:654.5px;top:186.5px;" width="4" height="3.6" viewBox="0 0 4 3.6"><path d="M0 0H4L2.0 3.6Z" fill="#ddd"/></svg>
<div class="a" style="left:666.5px;top:183.3px;width:32.00px;height:9.7px;background:#3a3a3a;border-radius:1px;"></div>
<div class="a" style="left:689.7px;top:184.10000000000002px;width:8.30px;height:8.1px;background:#444;border-radius:0.5px;"></div>
<div class="t" style="left:668px;top:185.3px;font-size:6.8px;font-weight:bold;color:#dedede;">QC</div>
<svg class="a" style="left:681px;top:184.5px;" width="8" height="8" viewBox="0 0 8 8"><rect x="1" y="3.8" width="4.6" height="3.5" fill="#ddd"/><path d="M4.5 3.8 V2.2 A1.5 1.5 0 0 1 7.5 2.2" stroke="#ddd" stroke-width="0.8" fill="none"/></svg>
<svg class="a" style="left:325px;top:199px;" width="6" height="6" viewBox="0 0 6 6"><path d="M1 5.5 V1 H5.5" stroke="#888" stroke-width="1.1" fill="none"/></svg>
<svg class="a" style="left:690px;top:396px;" width="7" height="7" viewBox="0 0 7 7"><path d="M6 1 V6 H1" stroke="#8a8a8a" stroke-width="1" fill="none"/></svg>
<div class="t" style="left:336.3px;top:209.2px;font-size:7.6px;font-weight:normal;color:#6e6e6e;">Skew 2.0.0</div>
<div class="t" style="left:478.6px;top:209px;font-size:7.85px;font-weight:normal;color:#d6d6d6;">Blasting Sixteenths</div>
<svg class="a" style="left:632.5px;top:209px;" width="7" height="8" viewBox="0 0 7 8"><path d="M5 1 L2 4 L5 7" stroke="#e0e0e0" stroke-width="1.2" fill="none"/></svg>
<svg class="a" style="left:648.5px;top:209px;" width="7" height="8" viewBox="0 0 7 8"><path d="M2 1 L5 4 L2 7" stroke="#e0e0e0" stroke-width="1.2" fill="none"/></svg>
<svg class="a" style="left:664px;top:209px;" width="9" height="8" viewBox="0 0 9 8"><rect x="1" y="1.2" width="7" height="5.6" rx="1.6" stroke="#e0e0e0" stroke-width="1.2" fill="none"/></svg>
<svg class="a" style="left:680.2px;top:209px;" width="8" height="8" viewBox="0 0 8 8"><path d="M4 0.5 V7.5 M0.5 4 H7.5" stroke="#e0e0e0" stroke-width="1.2"/></svg>
<svg class="a" style="left:323px;top:164.9px" width="378.2" height="242.7"><path d="M4.40 140.10 L5.40 136.91 L6.40 135.59 L7.40 134.58 L8.40 133.72 L9.40 132.97 L10.40 132.29 L11.40 131.66 L12.40 131.08 L13.40 130.53 L14.40 130.02 L15.40 129.52 L16.40 129.05 L17.40 128.60 L18.40 128.17 L19.40 127.75 L20.40 127.35 L21.40 126.95 L22.40 126.57 L23.40 126.20 L24.40 125.84 L25.40 125.49 L26.40 125.14 L27.40 124.81 L28.40 124.48 L29.40 124.16 L30.40 123.84 L31.40 123.53 L32.40 123.23 L33.40 122.93 L34.40 122.64 L35.40 122.35 L36.40 122.06 L37.40 121.78 L38.40 121.51 L39.40 121.24 L40.40 120.97 L41.40 120.70 L42.40 120.44 L43.40 120.19 L44.40 119.93 L45.40 119.68 L46.40 119.44 L47.40 119.19 L48.40 118.95 L49.40 118.71 L50.40 118.47 L51.40 118.24 L52.40 118.01 L53.40 117.78 L54.40 117.55 L55.40 117.33 L56.40 117.11 L57.40 116.89 L58.40 116.67 L59.40 116.45 L60.40 116.24 L61.40 116.03 L62.40 115.82 L63.40 115.61 L64.40 115.40 L65.40 115.20 L66.40 114.99 L67.40 114.79 L68.40 114.59 L69.40 114.39 L70.40 114.20 L71.40 114.00 L72.40 113.81 L73.40 113.61 L74.40 113.42 L75.40 113.23 L76.40 113.04 L77.40 112.86 L78.40 112.67 L79.40 112.49 L80.40 112.30 L81.40 112.12 L82.40 111.94 L83.40 111.76 L84.40 111.58 L85.40 111.40 L86.40 111.23 L87.40 111.05 L88.40 110.88 L89.40 110.70 L90.40 110.53 L91.40 110.36 L92.40 110.19 L93.40 110.02 L94.40 109.85 L95.40 109.68 L96.40 109.52 L97.40 109.35 L98.40 109.19 L99.40 109.02 L100.40 108.86 L101.40 108.70 L102.40 108.53 L103.40 108.37 L104.40 108.21 L105.40 108.06 L106.40 107.90 L107.40 107.74 L108.40 107.58 L109.40 107.43 L110.40 107.27 L111.40 107.12 L112.40 106.96 L113.40 106.81 L114.40 106.66 L115.40 106.51 L116.40 106.36 L117.40 106.21 L118.40 106.06 L119.40 105.91 L120.40 105.76 L121.40 105.61 L122.40 105.46 L123.40 105.32 L124.40 105.17 L125.40 105.03 L126.40 104.88 L127.40 104.74 L128.40 104.59 L129.40 104.45 L130.40 104.31 L131.40 104.17 L132.40 104.03 L133.40 103.88 L134.40 103.74 L135.40 103.61 L136.40 103.47 L137.40 103.33 L138.40 103.19 L139.40 103.05 L140.40 102.92 L141.40 102.78 L142.40 102.64 L143.40 102.51 L144.40 102.37 L145.40 102.24 L146.40 102.10 L147.40 101.97 L148.40 101.84 L149.40 101.70 L150.40 101.57 L151.40 101.44 L152.40 101.31 L153.40 101.18 L154.40 101.05 L155.40 100.92 L156.40 100.79 L157.40 100.66 L158.40 100.53 L159.40 100.40 L160.40 100.27 L161.40 100.15 L162.40 100.02 L163.40 99.89 L164.40 99.77 L165.40 99.64 L166.40 99.52 L167.40 99.39 L168.40 99.27 L169.40 99.14 L170.40 99.02 L171.40 98.89 L172.40 98.77 L173.40 98.65 L174.40 98.53 L175.40 98.40 L176.40 98.28 L177.40 98.16 L178.40 98.04 L179.40 97.92 L180.40 97.80 L181.40 97.68 L182.40 97.56 L183.40 97.44 L184.40 97.32 L185.40 97.20 L186.40 97.08 L187.40 96.97 L188.40 96.85 L189.40 96.73 L190.40 96.61 L191.40 96.50 L192.40 96.38 L193.40 96.26 L194.40 96.15 L195.40 96.03 L196.40 95.92 L197.40 95.80 L198.40 95.69 L199.40 95.57 L200.40 95.46 L201.40 95.35 L202.40 95.23 L203.40 95.12 L204.40 95.01 L205.40 94.89 L206.40 94.78 L207.40 94.67 L208.40 94.56 L209.40 94.45 L210.40 94.34 L211.40 94.22 L212.40 94.11 L213.40 94.00 L214.40 93.89 L215.40 93.78 L216.40 93.67 L217.40 93.56 L218.40 93.46 L219.40 93.35 L220.40 93.24 L221.40 93.13 L222.40 93.02 L223.40 92.91 L224.40 92.81 L225.40 92.70 L226.40 92.59 L227.40 92.48 L228.40 92.38 L229.40 92.27 L230.40 92.17 L231.40 92.06 L232.40 91.95 L233.40 91.85 L234.40 91.74 L235.40 91.64 L236.40 91.53 L237.40 91.43 L238.40 91.32 L239.40 91.22 L240.40 91.12 L241.40 91.01 L242.40 90.91 L243.40 90.81 L244.40 90.70 L245.40 90.60 L246.40 90.50 L247.40 90.40 L248.40 90.29 L249.40 90.19 L250.40 90.09 L251.40 89.99 L252.40 89.89 L253.40 89.79 L254.40 89.68 L255.40 89.58 L256.40 89.48 L257.40 89.38 L258.40 89.28 L259.40 89.18 L260.40 89.08 L261.40 88.98 L262.40 88.88 L263.40 88.78 L264.40 88.69 L265.40 88.59 L266.40 88.49 L267.40 88.39 L268.40 88.29 L269.40 88.19 L270.40 88.10 L271.40 88.00 L272.40 87.90 L273.40 87.80 L274.40 87.71 L275.40 87.61 L276.40 87.51 L277.40 87.42 L278.40 87.32 L279.40 87.22 L280.40 87.13 L281.40 87.03 L282.40 86.94 L283.40 86.84 L284.40 86.75 L285.40 86.65 L286.40 86.55 L287.40 86.46 L288.40 86.37 L289.40 86.27 L290.40 86.18 L291.40 86.08 L292.40 85.99 L293.40 85.89 L294.40 85.80 L295.40 85.71 L296.40 85.61 L297.40 85.52 L298.40 85.43 L299.40 85.33 L300.40 85.24 L301.40 85.15 L302.40 85.06 L303.40 84.96 L304.40 84.87 L305.40 84.78 L306.40 84.69 L307.40 84.60 L308.40 84.51 L309.40 84.41 L310.40 84.32 L311.40 84.23 L312.40 84.14 L313.40 84.05 L314.40 83.96 L315.40 83.87 L316.40 83.78 L317.40 83.69 L318.40 83.60 L319.40 83.51 L320.40 83.42 L321.40 83.33 L322.40 83.24 L323.40 83.15 L324.40 83.06 L325.40 82.97 L326.40 82.88 L327.40 82.79 L328.40 82.71 L329.40 82.62 L330.40 82.53 L331.40 82.44 L332.40 82.35 L333.40 82.26 L334.40 82.18 L335.40 82.09 L336.40 82.00 L337.40 81.91 L338.40 81.83 L339.40 81.74 L340.40 81.65 L341.40 81.57 L342.40 81.48 L343.40 81.39 L344.40 81.31 L345.40 81.22 L346.40 81.13 L347.40 81.05 L348.40 80.96 L349.40 80.88 L350.40 80.79 L351.40 80.70 L352.40 80.62 L353.40 80.53 L354.40 80.45 L355.40 80.36 L356.40 80.28 L357.40 80.19 L358.40 80.11 L359.40 80.02 L360.40 79.94 L361.40 79.85 L362.40 79.77 L363.40 79.69 L364.40 79.60 L365.40 79.52 L366.40 79.43 L367.40 79.35 L368.40 79.27 L369.40 79.18 L370.40 79.10 L371.40 79.02 L372.40 78.93 L373.40 78.85 L374.40 78.77" stroke="#55a0c8" stroke-width="1.25" fill="none" stroke-linecap="round" stroke-dasharray="0.05 2.75"/></svg>
<svg class="a" style="left:341.1px;top:331.3px;" width="40" height="40" viewBox="0 0 40 40"><circle cx="20.0" cy="20.0" r="15.3" stroke="#56b3e6" stroke-width="1.3" fill="none"/><path d="M13.4 19.7 H26.6" stroke="#6fbde6" stroke-width="1.3"/></svg>
<div class="t" style="left:351.1px;width:20px;text-align:center;top:341.5px;font-size:8.2px;font-weight:bold;color:#bddff2;transform:scaleX(0.85)">1</div>
<div class="t" style="left:351.1px;width:20px;text-align:center;top:354.8px;font-size:8px;font-weight:bold;color:#bddff2;transform:scaleX(0.85)">16</div>
<div class="t" style="left:336.1px;width:50px;text-align:center;top:373.6px;font-size:8.4px;color:#58a6d2;transform:scaleX(0.86)">Time</div>
<div class="t" style="left:336.1px;width:50px;text-align:center;top:383.9px;font-size:6px;color:#58a6d2;transform:scaleX(0.95)">105.00 BPM</div>
<svg class="a" style="left:384.6px;top:331.3px;" width="40" height="40" viewBox="0 0 40 40"><circle cx="20.0" cy="20.0" r="15.6" fill="#56b3e6"/><circle cx="13.21" cy="26.79" r="2.4" fill="#2a2a2a"/><circle cx="6.10" cy="32.10" r="0.5" fill="#58a6d2"/><circle cx="33.90" cy="32.10" r="0.5" fill="#58a6d2"/></svg>
<div class="t" style="left:379.6px;width:50px;text-align:center;top:373.6px;font-size:8.4px;color:#58a6d2;transform:scaleX(0.86)">Overlap</div>
<div class="t" style="left:379.6px;width:50px;text-align:center;top:383.9px;font-size:6px;color:#58a6d2;transform:scaleX(0.95)">0.0 %</div>
<svg class="a" style="left:428.1px;top:331.3px;" width="40" height="40" viewBox="0 0 40 40"><circle cx="20.0" cy="20.0" r="15.3" stroke="#56b3e6" stroke-width="1.3" fill="none"/><path d="M12.4 27.4 Q14.0 13.5 27.6 12.6" stroke="#56b3e6" stroke-width="1.6" fill="none"/></svg>
<div class="t" style="left:423.1px;width:50px;text-align:center;top:373.6px;font-size:8.4px;color:#58a6d2;transform:scaleX(0.86)">Curve</div>
<div class="t" style="left:423.1px;width:50px;text-align:center;top:383.9px;font-size:6px;color:#58a6d2;transform:scaleX(0.95)">Quadratic-</div>
<svg class="a" style="left:471.6px;top:331.3px;" width="40" height="40" viewBox="0 0 40 40"><circle cx="20.0" cy="20.0" r="15.6" fill="#56b3e6"/><circle cx="26.79" cy="26.79" r="2.4" fill="#2a2a2a"/><circle cx="6.10" cy="32.10" r="0.5" fill="#58a6d2"/><circle cx="33.90" cy="32.10" r="0.5" fill="#58a6d2"/></svg>
<div class="t" style="left:466.6px;width:50px;text-align:center;top:373.6px;font-size:8.4px;color:#58a6d2;transform:scaleX(0.86)">Intensity</div>
<div class="t" style="left:466.6px;width:50px;text-align:center;top:383.9px;font-size:6px;color:#58a6d2;transform:scaleX(0.95)">100.0 %</div>
<svg class="a" style="left:515.1px;top:331.3px;" width="40" height="40" viewBox="0 0 40 40"><circle cx="20.0" cy="20.0" r="15.6" fill="#56b3e6"/><circle cx="13.21" cy="26.79" r="2.4" fill="#2a2a2a"/><circle cx="6.10" cy="32.10" r="0.5" fill="#58a6d2"/><circle cx="33.90" cy="32.10" r="0.5" fill="#58a6d2"/></svg>
<div class="t" style="left:510.1px;width:50px;text-align:center;top:373.6px;font-size:8.4px;color:#58a6d2;transform:scaleX(0.86)">Feedback</div>
<div class="t" style="left:510.1px;width:50px;text-align:center;top:383.9px;font-size:6px;color:#58a6d2;transform:scaleX(0.95)">0.0 %</div>
<svg class="a" style="left:558.6px;top:331.3px;" width="40" height="40" viewBox="0 0 40 40"><circle cx="20.0" cy="20.0" r="15.6" fill="#e8555f"/><circle cx="26.79" cy="26.79" r="2.4" fill="#2a2a2a"/><circle cx="6.10" cy="32.10" r="0.5" fill="#d8545b"/><circle cx="33.90" cy="32.10" r="0.5" fill="#d8545b"/></svg>
<div class="t" style="left:553.6px;width:50px;text-align:center;top:373.6px;font-size:8.4px;color:#d8545b;transform:scaleX(0.86)">Send</div>
<div class="t" style="left:553.6px;width:50px;text-align:center;top:383.9px;font-size:6px;color:#d8545b;transform:scaleX(0.95)">100.0 %</div>
<svg class="a" style="left:602.1px;top:331.3px;" width="40" height="40" viewBox="0 0 40 40"><circle cx="20.0" cy="20.0" r="15.6" fill="#e8555f"/><circle cx="26.79" cy="26.79" r="2.4" fill="#2a2a2a"/><circle cx="6.10" cy="32.10" r="0.5" fill="#d8545b"/><circle cx="33.90" cy="32.10" r="0.5" fill="#d8545b"/></svg>
<div class="t" style="left:597.1px;width:50px;text-align:center;top:373.6px;font-size:8.4px;color:#d8545b;transform:scaleX(0.86)">Return</div>
<div class="t" style="left:597.1px;width:50px;text-align:center;top:383.9px;font-size:6px;color:#d8545b;transform:scaleX(0.95)">100.0 %</div>
<svg class="a" style="left:645.6px;top:331.3px;" width="40" height="40" viewBox="0 0 40 40"><circle cx="20.0" cy="20.0" r="15.6" fill="#e8555f"/><circle cx="14.67" cy="12.02" r="2.4" fill="#2a2a2a"/><circle cx="6.10" cy="32.10" r="0.5" fill="#d8545b"/><circle cx="33.90" cy="32.10" r="0.5" fill="#d8545b"/></svg>
<div class="t" style="left:640.6px;width:50px;text-align:center;top:373.6px;font-size:8.4px;color:#d8545b;transform:scaleX(0.86)">Mix</div>
<div class="t" style="left:640.6px;width:50px;text-align:center;top:383.9px;font-size:6px;color:#d8545b;transform:scaleX(0.95)">37.5 %</div>
<svg class="a" style="left:611.5px;top:197.5px;" width="8" height="12" viewBox="0 0 8 12"><path d="M0.6 0.6 V9.6 L2.8 7.6 L4.4 11 L5.8 10.4 L4.3 7.1 L7.2 7.1Z" fill="#f4f4f4" stroke="#222" stroke-width="0.6"/></svg>
</body></html>
